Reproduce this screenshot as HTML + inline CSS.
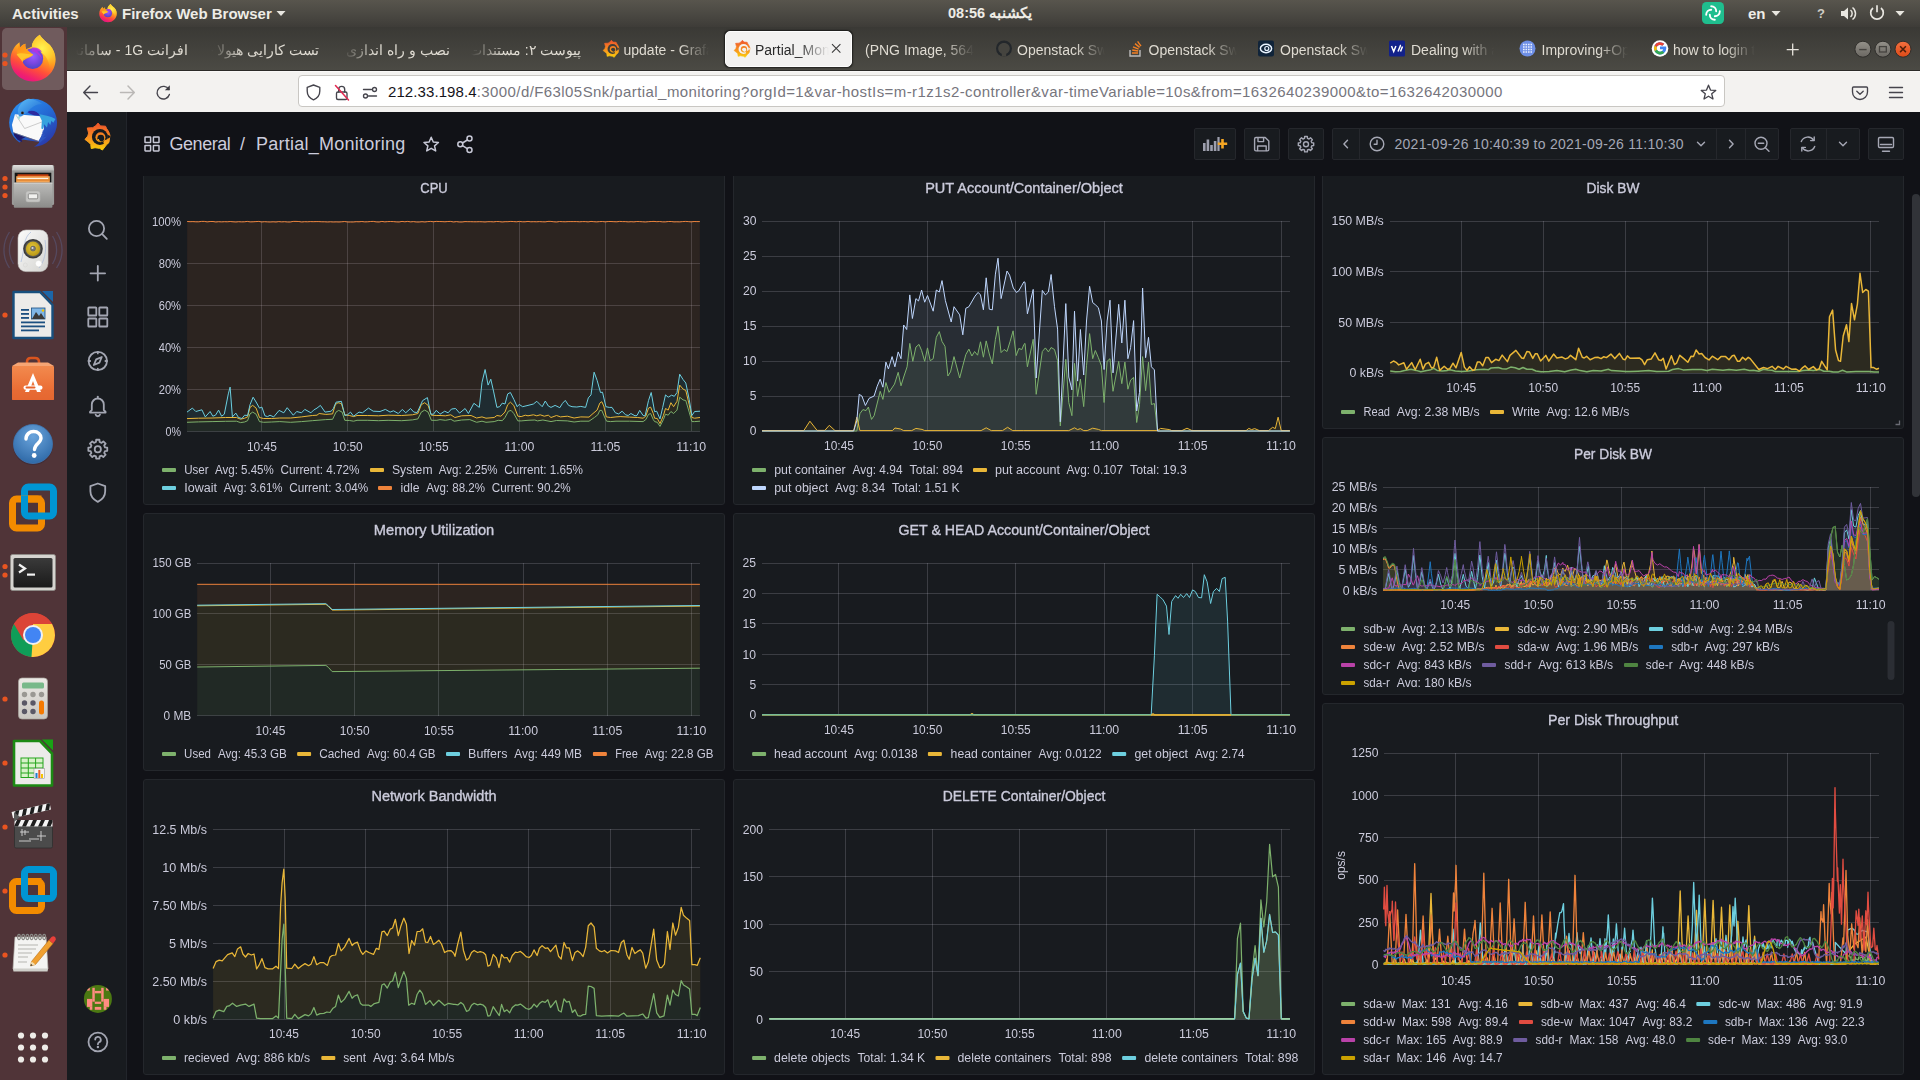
<!DOCTYPE html><html><head><meta charset="utf-8"><title>Partial_Monitoring - Grafana</title><style>
*{box-sizing:border-box;margin:0;padding:0}
html,body{width:1920px;height:1080px;overflow:hidden;background:#111217;font-family:"Liberation Sans",sans-serif;}
.abs{position:absolute}
#topbar{position:absolute;left:0;top:0;width:1920px;height:27px;background:linear-gradient(#58554d,#4b4943 50%,#3e3c38);color:#eeece6;font-weight:bold;font-size:15px;}
#topbar .t{position:absolute;top:0;height:27px;line-height:27px;white-space:nowrap}
#dock{position:absolute;left:0;top:27px;width:67px;height:1053px;background:#503438;}
#tabbar{position:absolute;left:67px;top:27px;width:1853px;height:44px;background:linear-gradient(#3a3935,#4b4a44);border-bottom:1px solid #2b2a28}
.tab{position:absolute;top:0;height:44px;line-height:47px;color:#dfdbd2;font-size:14px;white-space:nowrap;overflow:hidden}
#urlbar{position:absolute;left:67px;top:71px;width:1853px;height:41px;background:#f3f2f0;border-top:1px solid #f9f8f7}
#urlbox{position:absolute;left:231px;top:3px;width:1427px;height:32px;background:#fff;border:1px solid #c9c7c3;border-radius:4px}
#graf{position:absolute;left:67px;top:112px;width:1853px;height:968px;background:#111217;overflow:hidden}
#sidenav{position:absolute;left:0;top:0;width:60px;height:968px;background:#181b1f;border-right:1px solid #22252b}
#gtool{position:absolute;left:60px;top:0;width:1793px;height:64px;background:#111217;z-index:5}
.gbtn{position:absolute;top:16px;height:32px;background:#181b1f;border:1px solid #25272c;border-radius:2px}
.panel{position:absolute;background:#181b1f;border-radius:3px;overflow:hidden}
.panel::after{content:'';position:absolute;left:0;top:0;right:0;bottom:0;border:1px solid #24272c;border-radius:3px;pointer-events:none}
.ptitle{position:absolute;left:0;right:0;top:0;height:32px;line-height:33px;text-align:center;color:#ccccdc;font-size:14px;font-weight:bold;letter-spacing:-0.2px;white-space:nowrap}
.leg{position:absolute;color:#ccccdc;font-size:12px;line-height:18px;white-space:nowrap}
.sw{display:inline-block;width:14px;height:4px;border-radius:1px;vertical-align:middle;margin-right:8px;position:relative;top:-1px}
.li{display:inline-block;margin-right:10px}
svg{position:absolute;left:0;top:0;overflow:visible}
.panel svg{will-change:opacity;opacity:0.999}
text{font-family:"Liberation Sans",sans-serif}
</style></head><body>
<div id="topbar">
<span class="t" style="left:12px">Activities</span>
<span class="t" style="left:122px">Firefox Web Browser</span>
<span class="t" style="left:948px;font-size:14.5px">08:56 یکشنبه</span>
<span class="t" style="left:1748px">en</span>
<span class="t" style="left:1817px;font-size:13px;font-weight:bold;color:#cfcdc6">?</span>
<svg width="1920" height="27" viewBox="0 0 1920 27">
<g transform="translate(96.19,2.04) scale(0.02187)">
<defs>
<linearGradient id="fmb" gradientUnits="userSpaceOnUse" x1="740" y1="110" x2="380" y2="920"><stop offset="0" stop-color="#fff44f"/><stop offset="0.22" stop-color="#ffd83a"/><stop offset="0.45" stop-color="#ff9a1f"/><stop offset="0.68" stop-color="#ff4f3a"/><stop offset="0.88" stop-color="#f0206e"/><stop offset="1" stop-color="#e31587"/></linearGradient>
<radialGradient id="fmg" gradientUnits="userSpaceOnUse" cx="540" cy="470" r="230"><stop offset="0" stop-color="#9a5cff"/><stop offset="0.55" stop-color="#7a47e0"/><stop offset="1" stop-color="#4b46c9"/></radialGradient>
<linearGradient id="fmh" gradientUnits="userSpaceOnUse" x1="300" y1="230" x2="480" y2="520"><stop offset="0" stop-color="#ff8a16"/><stop offset="1" stop-color="#ffb21f"/></linearGradient>
<radialGradient id="fmy" gradientUnits="userSpaceOnUse" cx="700" cy="330" r="420"><stop offset="0" stop-color="#fff44f"/><stop offset="0.5" stop-color="#ffc92e"/><stop offset="1" stop-color="#ff8a16" stop-opacity="0"/></radialGradient>
</defs>
<path d="M660,90 C700,160 790,230 840,270 C900,340 940,430 940,530 C940,750 760,920 540,920 C320,920 140,750 140,530 C140,400 210,280 300,220 C300,260 305,290 315,315 C340,280 370,260 405,250 C400,290 405,320 420,345 C450,330 490,310 520,305 C520,230 580,140 660,90 Z" fill="url(#fmb)"/>
<path d="M660,90 C700,160 790,230 840,270 C900,340 940,430 940,530 C940,640 900,740 820,810 C860,700 830,560 760,470 C700,400 600,330 520,305 C520,230 580,140 660,90 Z" fill="url(#fmy)"/>
<circle cx="535" cy="512" r="186" fill="url(#fmg)"/>
<path d="M520,318 C600,300 670,345 700,392 C665,378 640,380 615,388 C650,400 690,450 700,520 C660,440 600,400 520,380 Z" fill="#b533e0" opacity="0.9"/>
<path d="M300,225 C290,300 250,380 250,440 C300,500 350,520 352,575 C380,510 500,505 545,440 C480,400 440,350 420,345 C410,320 400,290 405,250 C370,262 340,282 315,315 C305,290 300,260 300,225 Z" fill="url(#fmh)"/>
<path d="M250,440 C300,405 380,420 440,430 L545,440 C510,482 440,490 400,500 C360,512 345,545 352,575 C335,525 280,485 250,440Z" fill="#ffc62a"/>
</g>
<path d="M276.5,11 L285.5,11 L281,16 Z" fill="#e8e6e0"/>
<path d="M1771.5,11 L1780.5,11 L1776,16 Z" fill="#e8e6e0"/>
<path d="M1895.5,11 L1904.5,11 L1900,16 Z" fill="#e8e6e0"/>
<rect x="1702" y="2" width="22" height="22" rx="4.5" fill="#1fbe8e"/>
<g fill="none" stroke="#fff" stroke-width="1.9" stroke-linecap="round"><path d="M1711.2,6.2 a5,5 0 0 1 5,5"/><path d="M1719.8,11.2 a5,5 0 0 1 -5,5"/><path d="M1714.8,19.8 a5,5 0 0 1 -5,-5"/><path d="M1706.2,14.8 a5,5 0 0 1 5,-5"/></g>
<path d="M1841,11 h3 l4,-3.5 v12 l-4,-3.5 h-3 z" fill="#e8e6e0"/><path d="M1850.5,10 a4.5,4.5 0 0 1 0,7 M1852.5,7.5 a7.5,7.5 0 0 1 0,12" fill="none" stroke="#e8e6e0" stroke-width="1.5"/>
<path d="M1873,8 a6.3,6.3 0 1 0 8,0" fill="none" stroke="#e8e6e0" stroke-width="1.7"/><path d="M1877,5.2 v7" stroke="#e8e6e0" stroke-width="1.7"/>
</svg></div>
<div id="dock"></div>
<svg width="67" height="1080" viewBox="0 0 67 1080" style="left:0;top:0">
<defs>
<linearGradient id="ffg" x1="0.7" y1="0" x2="0.3" y2="1"><stop offset="0" stop-color="#fff44f"/><stop offset="0.3" stop-color="#ffbd2f"/><stop offset="0.6" stop-color="#ff6a1f"/><stop offset="1" stop-color="#e31587"/></linearGradient>
<radialGradient id="ffp" cx="0.5" cy="0.4" r="0.6"><stop offset="0" stop-color="#a550e8"/><stop offset="1" stop-color="#5a35c0"/></radialGradient>
<linearGradient id="tbg" x1="0" y1="0" x2="1" y2="1"><stop offset="0" stop-color="#2f86e0"/><stop offset="1" stop-color="#1a3f9a"/></linearGradient>
<linearGradient id="fileg" x1="0" y1="0" x2="0" y2="1"><stop offset="0" stop-color="#c9c9c6"/><stop offset="1" stop-color="#8f8f8c"/></linearGradient>
<linearGradient id="bagg" x1="0" y1="0" x2="0" y2="1"><stop offset="0" stop-color="#f28a4e"/><stop offset="1" stop-color="#e8622a"/></linearGradient>
<radialGradient id="helpg" cx="0.5" cy="0.3" r="0.7"><stop offset="0" stop-color="#6aa4dc"/><stop offset="1" stop-color="#2f6aa8"/></radialGradient>
<linearGradient id="termg" x1="0" y1="0" x2="0" y2="1"><stop offset="0" stop-color="#3a3a3a"/><stop offset="1" stop-color="#1a1a1a"/></linearGradient>
<linearGradient id="calcg" x1="0" y1="0" x2="0" y2="1"><stop offset="0" stop-color="#eceae6"/><stop offset="1" stop-color="#c9c6c0"/></linearGradient>
</defs>
<rect x="2" y="28" width="62" height="62" rx="5" fill="#705b5d"/>
<circle cx="5" cy="55" r="2.6" fill="#e95420"/>
<circle cx="5" cy="63.5" r="2.6" fill="#e95420"/>
<circle cx="5" cy="178.5" r="2.6" fill="#e95420"/>
<circle cx="5" cy="187" r="2.6" fill="#e95420"/>
<circle cx="5" cy="195.5" r="2.6" fill="#e95420"/>
<circle cx="5" cy="315" r="2.6" fill="#e95420"/>
<circle cx="5" cy="566.5" r="2.6" fill="#e95420"/>
<circle cx="5" cy="575" r="2.6" fill="#e95420"/>
<circle cx="5" cy="699" r="2.6" fill="#e95420"/>
<circle cx="5" cy="763" r="2.6" fill="#e95420"/>
<circle cx="5" cy="827" r="2.6" fill="#e95420"/>
<circle cx="5" cy="891" r="2.6" fill="#e95420"/>
<circle cx="5" cy="955" r="2.6" fill="#e95420"/>
<g transform="translate(2.62,29.81) scale(0.05625)">
<defs>
<linearGradient id="fxb" gradientUnits="userSpaceOnUse" x1="740" y1="110" x2="380" y2="920"><stop offset="0" stop-color="#fff44f"/><stop offset="0.22" stop-color="#ffd83a"/><stop offset="0.45" stop-color="#ff9a1f"/><stop offset="0.68" stop-color="#ff4f3a"/><stop offset="0.88" stop-color="#f0206e"/><stop offset="1" stop-color="#e31587"/></linearGradient>
<radialGradient id="fxg" gradientUnits="userSpaceOnUse" cx="540" cy="470" r="230"><stop offset="0" stop-color="#9a5cff"/><stop offset="0.55" stop-color="#7a47e0"/><stop offset="1" stop-color="#4b46c9"/></radialGradient>
<linearGradient id="fxh" gradientUnits="userSpaceOnUse" x1="300" y1="230" x2="480" y2="520"><stop offset="0" stop-color="#ff8a16"/><stop offset="1" stop-color="#ffb21f"/></linearGradient>
<radialGradient id="fxy" gradientUnits="userSpaceOnUse" cx="700" cy="330" r="420"><stop offset="0" stop-color="#fff44f"/><stop offset="0.5" stop-color="#ffc92e"/><stop offset="1" stop-color="#ff8a16" stop-opacity="0"/></radialGradient>
</defs>
<path d="M660,90 C700,160 790,230 840,270 C900,340 940,430 940,530 C940,750 760,920 540,920 C320,920 140,750 140,530 C140,400 210,280 300,220 C300,260 305,290 315,315 C340,280 370,260 405,250 C400,290 405,320 420,345 C450,330 490,310 520,305 C520,230 580,140 660,90 Z" fill="url(#fxb)"/>
<path d="M660,90 C700,160 790,230 840,270 C900,340 940,430 940,530 C940,640 900,740 820,810 C860,700 830,560 760,470 C700,400 600,330 520,305 C520,230 580,140 660,90 Z" fill="url(#fxy)"/>
<circle cx="535" cy="512" r="186" fill="url(#fxg)"/>
<path d="M520,318 C600,300 670,345 700,392 C665,378 640,380 615,388 C650,400 690,450 700,520 C660,440 600,400 520,380 Z" fill="#b533e0" opacity="0.9"/>
<path d="M300,225 C290,300 250,380 250,440 C300,500 350,520 352,575 C380,510 500,505 545,440 C480,400 440,350 420,345 C410,320 400,290 405,250 C370,262 340,282 315,315 C305,290 300,260 300,225 Z" fill="url(#fxh)"/>
<path d="M250,440 C300,405 380,420 440,430 L545,440 C510,482 440,490 400,500 C360,512 345,545 352,575 C335,525 280,485 250,440Z" fill="#ffc62a"/>
</g>
<g transform="translate(3.03,93.01) scale(0.05549)">
<defs>
<linearGradient id="tba" gradientUnits="userSpaceOnUse" x1="250" y1="150" x2="850" y2="950"><stop offset="0" stop-color="#2b8ff0"/><stop offset="0.5" stop-color="#2468d2"/><stop offset="1" stop-color="#2a34a6"/></linearGradient>
<linearGradient id="tbh" gradientUnits="userSpaceOnUse" x1="300" y1="150" x2="520" y2="420"><stop offset="0" stop-color="#56b4f4"/><stop offset="1" stop-color="#2877d8"/></linearGradient>
</defs>
<circle cx="542" cy="537" r="432" fill="url(#tba)"/>
<path d="M345,840 L660,885 L625,918 L562,968 L480,1015 L270,1015 L300,890 Z" fill="#503438"/>
<path d="M190,715 L400,800 L335,830 L345,885 L262,842 L200,765 Z" fill="#1d1a6e"/>
<path d="M215,385 L690,420 L740,650 L655,870 L185,705 L160,575 Z" fill="#f9f9f9"/>
<path d="M185,705 L655,870 L650,885 L182,722 Z" fill="#8c6f62" opacity="0.7"/>
<polyline points="228,392 390,640 705,520" fill="none" stroke="#9c9c9c" stroke-width="9"/>
<path d="M640,380 C760,410 870,420 945,470 L905,535 L872,500 L852,575 L812,522 L792,622 L742,562 L722,655 L690,640 L700,500 Z" fill="#36a2de"/>
<path d="M722,655 L742,700 L690,752 L762,742 L720,802 L790,785 L660,900 L640,860 L700,760 Z" fill="#2d55c4"/>
<path d="M440,340 C520,296 625,335 672,412 L560,400 C520,380 480,380 440,340 Z" fill="#2c2aa0"/>
<path d="M268,335 C258,250 360,120 462,104 C565,108 640,150 705,200 C600,200 500,262 442,342 C400,382 332,422 290,442 Z" fill="url(#tbh)"/>
<path d="M252,428 L322,414 L290,488 Z" fill="#a8dede"/>
<circle cx="350" cy="360" r="25" fill="#4a3020"/><circle cx="350" cy="360" r="15" fill="#0d0d12"/>
</g>
<g>
<defs><linearGradient id="fdr" x1="0" y1="0" x2="0" y2="1"><stop offset="0" stop-color="#bcbcba"/><stop offset="1" stop-color="#8b8b89"/></linearGradient>
<linearGradient id="ftop" x1="0" y1="0" x2="0" y2="1"><stop offset="0" stop-color="#e2e2e0"/><stop offset="1" stop-color="#b9b9b7"/></linearGradient></defs>
<rect x="11.9" y="165" width="42.2" height="40" rx="1.5" fill="#9b9b99"/>
<path d="M13.5,165 h39 l1.6,5.5 h-42.2 z" fill="url(#ftop)"/>
<rect x="14.7" y="172.7" width="36.6" height="10" fill="#161616"/>
<rect x="17.5" y="174.3" width="31" height="3" fill="#c8420e"/>
<rect x="16.2" y="176.2" width="33.6" height="6.5" fill="#f2a456"/>
<rect x="17.5" y="177.9" width="30.5" height="1.2" fill="#fdf3e6"/>
<rect x="16.2" y="179.6" width="33.6" height="0.9" fill="#d9771f"/>
<rect x="13.8" y="182.7" width="38.6" height="25" rx="1" fill="url(#fdr)"/>
<rect x="13.8" y="182.7" width="38.6" height="1" fill="#d2d2d0"/>
<rect x="25.8" y="191" width="14.4" height="11.1" rx="2.2" fill="#c6c6c4" stroke="#a5a5a3" stroke-width="0.5"/>
<rect x="28.3" y="193.8" width="9.4" height="5" rx="0.8" fill="#f0f0ee" stroke="#6d6d6b" stroke-width="0.7"/>
</g>
<g>
<defs><linearGradient id="rbb" x1="0" y1="0" x2="1" y2="1"><stop offset="0" stop-color="#fbfbfa"/><stop offset="1" stop-color="#d4d4d1"/></linearGradient>
<radialGradient id="rby" cx="0.45" cy="0.4" r="0.7"><stop offset="0" stop-color="#e6c93a"/><stop offset="1" stop-color="#b08f12"/></radialGradient></defs>
<g fill="none" stroke="#5f6c9e" stroke-opacity="0.38" stroke-width="1.3"><path d="M13.5,236 a26,26 0 0 0 0,28"/><path d="M9.5,232 a32,32 0 0 0 0,36"/><path d="M52.5,236 a26,26 0 0 1 0,28"/><path d="M56.5,232 a32,32 0 0 1 0,36"/></g>
<rect x="18" y="230" width="30" height="41.6" rx="8" fill="url(#rbb)" stroke="#c2c2bf" stroke-width="0.6"/>
<path d="M21,262 c4,-14 2,-24 10,-30" fill="none" stroke="#9fb2d8" stroke-opacity="0.6" stroke-width="1"/>
<path d="M45,240 c2,12 -1,22 -6,28" fill="none" stroke="#9fb2d8" stroke-opacity="0.6" stroke-width="1"/>
<circle cx="33" cy="248.8" r="9.8" fill="#3b3b3b"/><circle cx="33" cy="248.8" r="8.4" fill="#555"/>
<circle cx="33" cy="248.8" r="7.2" fill="url(#rby)"/>
<circle cx="33" cy="248.6" r="2.5" fill="#777" stroke="#555" stroke-width="0.5"/><circle cx="32.5" cy="248" r="1" fill="#ddd"/>
<circle cx="38.6" cy="263.6" r="3.3" fill="#fdfdfd" stroke="#d0d0ce" stroke-width="0.5"/>
<circle cx="25.3" cy="265" r="2" fill="none" stroke="#d6d6d3" stroke-width="0.6"/>
</g>
<g transform="translate(0,0)">
<path d="M13.5,292 L40,292 L52.5,305 L52.5,338 L13.5,338 Z" fill="#ecebe9" stroke="#18507e" stroke-width="2.4" stroke-linejoin="round"/>
<path d="M42,291 L53,291 L53,302 Z" fill="#1c66a8"/>
<rect x="21" y="309" width="8" height="1.8" fill="#1b4f80"/><rect x="21" y="313" width="8" height="1.8" fill="#1b4f80"/><rect x="21" y="317" width="8" height="1.8" fill="#1b4f80"/>
<rect x="21" y="321.5" width="24" height="1.8" fill="#1b4f80"/><rect x="21" y="325.5" width="24" height="1.8" fill="#1b4f80"/><rect x="21" y="329.5" width="18" height="1.8" fill="#1b4f80"/>
<rect x="31.5" y="308" width="13.5" height="11" fill="#7fb6e6" stroke="#1b4f80" stroke-width="0.8"/>
<path d="M32,319 L36,312 L39,316 L41,313 L45,319 Z" fill="#3a3a3a"/>
<circle cx="43" cy="310.5" r="1.2" fill="#f4c400"/>
</g>
<g transform="translate(0,0)">
<path d="M27,370 L27,362 Q27,358 31,358 L35,358 Q39,358 39,362 L39,370" fill="none" stroke="#d9541e" stroke-width="2.6"/>
<path d="M12,366 L18,362.5 L48,362.5 L54,366 Z" fill="#f6a574"/>
<rect x="12" y="366" width="42" height="34" rx="1" fill="url(#bagg)"/>
<rect x="12" y="390" width="42" height="10" fill="#e56a35" opacity="0.6"/>
<path d="M33,373 L41,392 L37,392 L33,381 L29,392 L25,392 Z" fill="#fff"/>
<rect x="23.5" y="385.5" width="19" height="4.2" rx="2" fill="#fff"/>
<rect x="25.5" y="386.6" width="10" height="2" rx="1" fill="#e8622a"/>
</g>
<g transform="translate(33,444)">
<circle cx="0" cy="1" r="20" fill="#2a2030" opacity="0.35"/>
<circle cx="0" cy="0" r="19.5" fill="url(#helpg)" stroke="#3f76b2" stroke-width="0.8"/>
<path d="M-7,-5 C-7,-10 -3,-12.5 0.5,-12.5 C5,-12.5 8,-9.5 8,-6 C8,-1 1.5,0 1.5,5.5" fill="none" stroke="#fff" stroke-width="3.4" stroke-linecap="round"/>
<circle cx="1.2" cy="11.5" r="2.4" fill="#fff"/>
</g>
<g transform="translate(33,507.5)">
<rect x="-20.5" y="-8.5" width="29" height="29" rx="4" fill="none" stroke="#f38b00" stroke-width="7"/>
<rect x="-8.5" y="-20.5" width="29" height="29" rx="4" fill="none" stroke="#0095d3" stroke-width="7"/>
<path d="M-12,-8.5 L8.5,-8.5" stroke="#f38b00" stroke-width="7"/>
<path d="M-8.5,-12 L-8.5,-3" stroke="#0095d3" stroke-width="7"/>
</g>
<g transform="translate(33,890)">
<rect x="-20.5" y="-8.5" width="29" height="29" rx="4" fill="none" stroke="#f38b00" stroke-width="7"/>
<rect x="-8.5" y="-20.5" width="29" height="29" rx="4" fill="none" stroke="#0095d3" stroke-width="7"/>
<path d="M-12,-8.5 L8.5,-8.5" stroke="#f38b00" stroke-width="7"/>
<path d="M-8.5,-12 L-8.5,-3" stroke="#0095d3" stroke-width="7"/>
</g>
<g>
<rect x="10.5" y="554.5" width="45" height="36" rx="2" fill="#d5d3cf" stroke="#8d8b86" stroke-width="0.8"/>
<rect x="13.5" y="558" width="39" height="29.5" rx="1.5" fill="url(#termg)"/>
<path d="M19,564.5 L25,568.5 L19,572.5" fill="none" stroke="#f2f2f2" stroke-width="2.2"/>
<rect x="27" y="573.5" width="8" height="2.2" fill="#f2f2f2"/>
</g>
<g transform="translate(33,635)">
<circle cx="0" cy="0" r="22" fill="#db4437"/>
<path d="M0,0 L-19.05,-11 A22,22 0 0 0 -1.5,21.95 L9.5,5.5 Z" fill="#0f9d58"/>
<path d="M0,0 L-1.5,21.95 A22,22 0 0 0 19.05,-11 L0,-11 Z" fill="#ffcd40"/>
<path d="M-19.05,-11 A22,22 0 0 1 19.05,-11 L0,-11 Z" fill="#db4437"/>
<path d="M-19.05,-11 L-9.5,5.5 L0,-11 Z" fill="#db4437"/>
<circle cx="0" cy="0" r="10" fill="#f1f1f1"/>
<circle cx="0" cy="0" r="8" fill="#4285f4"/>
</g>
<g>
<rect x="18.5" y="678" width="29" height="41" rx="3.5" fill="url(#calcg)" stroke="#aaa69f" stroke-width="0.7"/>
<rect x="22" y="682.5" width="22" height="6" rx="1.5" fill="#78b98a"/>
<circle cx="24.5" cy="694.5" r="2.7" fill="#9a9893"/><circle cx="33" cy="694.5" r="2.7" fill="#9a9893"/><circle cx="41.5" cy="694.5" r="2.7" fill="#9a9893"/>
<circle cx="24.5" cy="703" r="2.7" fill="#5a5866"/><circle cx="33" cy="703" r="2.7" fill="#5a5866"/>
<circle cx="24.5" cy="711.5" r="2.7" fill="#5a5866"/><circle cx="33" cy="711.5" r="2.7" fill="#5a5866"/>
<rect x="39" y="700.5" width="5" height="14" rx="2.5" fill="#f57900"/>
</g>
<g>
<path d="M14,741 L40,741 L52,753.5 L52,785.5 L14,785.5 Z" fill="#ecebe9" stroke="#1c8a13" stroke-width="2.6" stroke-linejoin="round"/>
<path d="M42,739.5 L53,739.5 L53,750.5 Z" fill="#19a215"/>
<rect x="21" y="758" width="22" height="19.5" fill="#d8f2c9" stroke="#25a51d" stroke-width="1"/>
<path d="M21,763 H43 M21,768 H43 M21,773 H43 M28.3,758 V777.5 M35.6,758 V777.5" stroke="#25a51d" stroke-width="1"/>
<rect x="34" y="768.5" width="10.5" height="10" fill="#f4f4f4" stroke="#888" stroke-width="0.5"/>
<rect x="35.5" y="773" width="2" height="5" fill="#1f7fd0"/><rect x="38.3" y="770" width="2" height="8" fill="#e8622a"/><rect x="41" y="774" width="2" height="4" fill="#f4c400"/>
</g>
<g>
<rect x="14.5" y="826" width="38" height="22" rx="1.5" fill="#4b4b4b" stroke="#2e2e2e" stroke-width="0.8"/>
<rect x="14.5" y="820" width="38" height="6.5" fill="#f3f3f3"/>
<path d="M17,820 l4,0 l-3,6.5 l-4,0z M25,820 l4,0 l-3,6.5 l-4,0z M33,820 l4,0 l-3,6.5 l-4,0z M41,820 l4,0 l-3,6.5 l-4,0z M49,820 l3.5,0 l0,2 l-2,4.5 l-4,0z" fill="#1e1e1e"/>
<g transform="rotate(-13 14 818)"><rect x="13" y="811.5" width="39" height="6.5" fill="#f3f3f3"/>
<path d="M17,811.5 l4,0 l-3,6.5 l-4,0z M25,811.5 l4,0 l-3,6.5 l-4,0z M33,811.5 l4,0 l-3,6.5 l-4,0z M41,811.5 l4,0 l-3,6.5 l-4,0z M49,811.5 l3,0 l0,2 l-2,4.5 l-4,0z" fill="#1e1e1e"/></g>
<path d="M14,812 l6,5 l-6,5z" fill="#5a5a5a"/>
<path d="M20,832 h9 M22,829 v7 M25,830 v5 M19,841 h12 M29,839 h10 M41,831 v10 M37,836 h9" stroke="#d8d8d8" stroke-width="0.9"/>
</g>
<g>
<path d="M15,937 L46,937 L48,969 L13,969 Z" fill="#f4f4f2" stroke="#bdbdb8" stroke-width="0.7"/>
<path d="M13,969 L48,969 L47.5,971.5 L13.5,971.5 Z" fill="#cfcfca"/>
<g fill="none" stroke="#8a8a86" stroke-width="1.1"><ellipse cx="19" cy="937" rx="1.4" ry="2.6"/><ellipse cx="23.2" cy="937" rx="1.4" ry="2.6"/><ellipse cx="27.4" cy="937" rx="1.4" ry="2.6"/><ellipse cx="31.6" cy="937" rx="1.4" ry="2.6"/><ellipse cx="35.8" cy="937" rx="1.4" ry="2.6"/><ellipse cx="40" cy="937" rx="1.4" ry="2.6"/><ellipse cx="44.2" cy="937" rx="1.4" ry="2.6"/></g>
<path d="M18,945 h20 M18,949 h18 M18,953 h14 M18,957 h10 M18,962 h9" stroke="#b5b5b0" stroke-width="1"/>
<path d="M31.5,961.5 L49,940 L53,943.5 L35.5,964.5 L30.5,966 Z" fill="#f0a030" stroke="#b86e12" stroke-width="0.6"/>
<path d="M49,940 L51.5,937 Q53.5,935.5 55,937 L55.5,937.8 Q56.5,939.5 55,941 L53,943.5 Z" fill="#e8403a"/>
<path d="M30.5,966 L31.5,961.5 L35.5,964.5 Z" fill="#f4deb0"/><path d="M30.5,966 L31,964 L32.6,965.3 Z" fill="#222"/>
</g>
<circle cx="21" cy="1035.5" r="3.1" fill="#eeece8"/>
<circle cx="33" cy="1035.5" r="3.1" fill="#eeece8"/>
<circle cx="45" cy="1035.5" r="3.1" fill="#eeece8"/>
<circle cx="21" cy="1047.5" r="3.1" fill="#eeece8"/>
<circle cx="33" cy="1047.5" r="3.1" fill="#eeece8"/>
<circle cx="45" cy="1047.5" r="3.1" fill="#eeece8"/>
<circle cx="21" cy="1059.5" r="3.1" fill="#eeece8"/>
<circle cx="33" cy="1059.5" r="3.1" fill="#eeece8"/>
<circle cx="45" cy="1059.5" r="3.1" fill="#eeece8"/>
</svg>
<div id="tabbar">
<div class="abs" style="left:658px;top:4px;width:127px;height:36px;background:#f2f1f0;border:1px solid #fdfdfd;border-radius:5px;box-shadow:0 0 1.5px 0.5px rgba(0,0,0,0.55)"></div>
<div class="tab" dir="rtl" style="left:8.5px;width:112.5px;text-align:right;-webkit-mask-image:linear-gradient(to right,transparent 0,#000 32px);mask-image:linear-gradient(to right,transparent 0,#000 32px);">افرانت 1G - سامانه</div>
<div class="tab" dir="rtl" style="left:143.5px;width:108.5px;text-align:right;-webkit-mask-image:linear-gradient(to right,transparent 0,#000 32px);mask-image:linear-gradient(to right,transparent 0,#000 32px);">تست کارایی هیولا -</div>
<div class="tab" dir="rtl" style="left:276px;width:107px;text-align:right;-webkit-mask-image:linear-gradient(to right,transparent 0,#000 32px);mask-image:linear-gradient(to right,transparent 0,#000 32px);">نصب و راه اندازی -</div>
<div class="tab" dir="rtl" style="left:403.5px;width:111.0px;text-align:right;-webkit-mask-image:linear-gradient(to right,transparent 0,#000 32px);mask-image:linear-gradient(to right,transparent 0,#000 32px);">پیوست ۲: مستندات ا</div>
<div class="tab" style="left:556.5px;width:85.5px;color:#dfdbd2;-webkit-mask-image:linear-gradient(to left,transparent 0,#000 30px);mask-image:linear-gradient(to left,transparent 0,#000 30px);">update - Grafana</div>
<div class="tab" style="left:688px;width:74px;color:#2b2b2b;-webkit-mask-image:linear-gradient(to left,transparent 0,#000 30px);mask-image:linear-gradient(to left,transparent 0,#000 30px);">Partial_Monitor</div>
<div class="tab" style="left:798px;width:109px;color:#dfdbd2;-webkit-mask-image:linear-gradient(to left,transparent 0,#000 30px);mask-image:linear-gradient(to left,transparent 0,#000 30px);">(PNG Image, 564×</div>
<div class="tab" style="left:950px;width:88px;color:#dfdbd2;-webkit-mask-image:linear-gradient(to left,transparent 0,#000 30px);mask-image:linear-gradient(to left,transparent 0,#000 30px);">Openstack Swift</div>
<div class="tab" style="left:1081.5px;width:88.0px;color:#dfdbd2;-webkit-mask-image:linear-gradient(to left,transparent 0,#000 30px);mask-image:linear-gradient(to left,transparent 0,#000 30px);">Openstack Swift</div>
<div class="tab" style="left:1213px;width:87.5px;color:#dfdbd2;-webkit-mask-image:linear-gradient(to left,transparent 0,#000 30px);mask-image:linear-gradient(to left,transparent 0,#000 30px);">Openstack Swift</div>
<div class="tab" style="left:1344px;width:83px;color:#dfdbd2;-webkit-mask-image:linear-gradient(to left,transparent 0,#000 30px);mask-image:linear-gradient(to left,transparent 0,#000 30px);">Dealing with a</div>
<div class="tab" style="left:1474.5px;width:86.5px;color:#dfdbd2;-webkit-mask-image:linear-gradient(to left,transparent 0,#000 30px);mask-image:linear-gradient(to left,transparent 0,#000 30px);">Improving+Op</div>
<div class="tab" style="left:1606px;width:82px;color:#dfdbd2;-webkit-mask-image:linear-gradient(to left,transparent 0,#000 30px);mask-image:linear-gradient(to left,transparent 0,#000 30px);">how to login to</div>
<svg width="1853" height="44" viewBox="67 27 1853 44">
<defs><linearGradient id="glg" gradientUnits="userSpaceOnUse" x1="0" y1="900" x2="0" y2="150"><stop offset="0" stop-color="#fbcf0a"/><stop offset="0.45" stop-color="#f7941e"/><stop offset="1" stop-color="#f15b2a"/></linearGradient></defs>
<g transform="translate(600.09,38.42) scale(0.02098)"><path d="M540,88 L612,172 L765,182 L802,262 C850,320 885,390 897,462 L868,672 L800,735 L672,900 L590,850 L450,830 L335,855 L320,730 L250,660 L145,580 L230,480 L255,390 L215,235 L380,225 L470,170 Z" fill="url(#glg)" stroke="url(#glg)" stroke-width="30" stroke-linejoin="round"/><circle cx="595" cy="505" r="240" fill="#3e3d39"/><path d="M815,430 L905,478 L895,520 L830,560 Z" fill="#3e3d39"/><circle cx="612" cy="516" r="150" fill="url(#glg)"/><path d="M715,615 L835,565 L860,690 L770,740 L700,690 Z" fill="url(#glg)"/><circle cx="622" cy="545" r="102" fill="#3e3d39"/><path d="M522,570 C530,640 600,672 650,640 C610,640 570,615 565,570 Z" fill="url(#glg)"/></g>
<g transform="translate(731.09,38.42) scale(0.02098)"><path d="M540,88 L612,172 L765,182 L802,262 C850,320 885,390 897,462 L868,672 L800,735 L672,900 L590,850 L450,830 L335,855 L320,730 L250,660 L145,580 L230,480 L255,390 L215,235 L380,225 L470,170 Z" fill="url(#glg)" stroke="url(#glg)" stroke-width="30" stroke-linejoin="round"/><circle cx="595" cy="505" r="240" fill="#f3f2f0"/><path d="M815,430 L905,478 L895,520 L830,560 Z" fill="#f3f2f0"/><circle cx="612" cy="516" r="150" fill="url(#glg)"/><path d="M715,615 L835,565 L860,690 L770,740 L700,690 Z" fill="url(#glg)"/><circle cx="622" cy="545" r="102" fill="#f3f2f0"/><path d="M522,570 C530,640 600,672 650,640 C610,640 570,615 565,570 Z" fill="url(#glg)"/></g>
<path d="M832,44.2 l8.4,8.4 M840.4,44.2 l-8.4,8.4" stroke="#3a3a3a" stroke-width="1.1"/>
<circle cx="1004" cy="48.5" r="8" fill="#23272b"/><path d="M1004,43 c-3.6,0 -5.8,2.6 -5.8,5.6 c0,2.6 1.6,4.4 3.6,5.2 l0,2.6 l4.4,0 l0,-2.6 c2,-0.8 3.6,-2.6 3.6,-5.2 c0,-3 -2.2,-5.6 -5.8,-5.6z" fill="#45443f"/>
<path d="M1130,50 v6 h10 v-6" fill="none" stroke="#bcbbbb" stroke-width="1.4"/><path d="M1132,53 h6 M1132.2,50 l6,1 M1133,46.8 l5.6,2.4 M1135,43.6 l4.6,3.8 M1137.6,41.4 l3.4,4.8" stroke="#f48024" stroke-width="1.4"/>
<rect x="1258" y="40.5" width="16" height="16" rx="2" fill="#10243a"/><ellipse cx="1266" cy="48.5" rx="5.6" ry="4.2" fill="none" stroke="#e9f3ff" stroke-width="1.5"/><circle cx="1266.8" cy="48.5" r="2" fill="none" stroke="#e9f3ff" stroke-width="1.2"/>
<rect x="1389" y="40.5" width="16" height="16" rx="1.5" fill="#12218a"/><path d="M1391.5,46 l2.2,5.5 l2.2,-5.5 M1398,51.5 l2.5,-6 l0.5,0 M1400.5,51.5 l2,-5" fill="none" stroke="#fff" stroke-width="1.5"/>
<circle cx="1527.5" cy="48.5" r="8" fill="#6e8fe6"/><path d="M1523,44.5 h9 M1523,47 h9 M1523,49.5 h9 M1523,52 h9" stroke="#e8eeff" stroke-width="1.3" stroke-dasharray="1.6 0.9"/>
<circle cx="1660" cy="48.5" r="8.3" fill="#fff"/><path d="M1665.2,46.5 h-5.2 v2.8 h3.1 c-0.3,1.5 -1.6,2.4 -3.1,2.4 a3.4,3.4 0 0 1 0,-6.8 c0.9,0 1.7,0.3 2.3,0.9 l2,-2 a6.2,6.2 0 1 0 2,4.7 c0,-0.7 -0.05,-1.4 -0.2,-2z" fill="#4285f4"/><path d="M1654.6,45.6 a6.2,6.2 0 0 1 9.7,-1.8 l-2,2 a3.4,3.4 0 0 0 -5.5,1.3z" fill="#ea4335"/><path d="M1654.6,51.2 l2.3,-1.7 a3.4,3.4 0 0 0 3.1,2.2 c0.9,0 1.6,-0.2 2.2,-0.7 l2.1,1.8 a6.2,6.2 0 0 1 -9.7,-1.6z" fill="#34a853"/><path d="M1654.6,45.6 l2.3,1.6 a3.4,3.4 0 0 0 0,2.3 l-2.3,1.7 a6.2,6.2 0 0 1 0,-5.6z" fill="#fbbc05"/>
<path d="M1786.7,49.6 h12 M1792.7,43.6 v12" stroke="#e6e3dc" stroke-width="1.3"/>
<defs><linearGradient id="wbg" x1="0" y1="0" x2="0" y2="1"><stop offset="0" stop-color="#94918a"/><stop offset="1" stop-color="#6a6762"/></linearGradient><linearGradient id="wbc" x1="0" y1="0" x2="0" y2="1"><stop offset="0" stop-color="#f4703f"/><stop offset="1" stop-color="#dc4a18"/></linearGradient></defs>
<circle cx="1862.9" cy="49.2" r="8" fill="url(#wbg)" stroke="#2f2e2b" stroke-width="1"/><path d="M1859.2,49.6 h7.4" stroke="#45433f" stroke-width="1.4"/>
<circle cx="1882.9" cy="49.2" r="8" fill="url(#wbg)" stroke="#2f2e2b" stroke-width="1"/><rect x="1879.5" y="46.6" width="6.8" height="5.4" fill="none" stroke="#45433f" stroke-width="1.3"/>
<circle cx="1903" cy="49.2" r="8" fill="url(#wbc)" stroke="#2f2e2b" stroke-width="1"/><path d="M1900.1,46.3 l5.8,5.8 M1905.9,46.3 l-5.8,5.8" stroke="#4e1f0a" stroke-width="1.5"/>
</svg></div>
<div id="urlbar"><div id="urlbox"></div>
<div class="abs" style="left:321px;top:0;height:41px;line-height:40px;font-size:15px;color:#15141a;white-space:nowrap"><span id="urlhost" style="letter-spacing:0.09px">212.33.198.4</span><span id="urlrest" style="color:#76757d;letter-spacing:0.42px">:3000/d/F63l05Snk/partial_monitoring?orgId=1&amp;var-hostIs=m-r1z1s2-controller&amp;var-timeVariable=10s&amp;from=1632640239000&amp;to=1632642030000</span></div>
<svg width="1853" height="41" viewBox="67 71 1853 41">
<path d="M97.5,91.5 h-13.5 M90,85 l-6.3,6.5 l6.3,6.5" fill="none" stroke="#45444c" stroke-width="1.35" stroke-linecap="round" stroke-linejoin="round"/>
<path d="M120.5,91.5 h13.5 M128,85 l6.3,6.5 l-6.3,6.5" fill="none" stroke="#bab8b6" stroke-width="1.5" stroke-linecap="round" stroke-linejoin="round"/>
<path d="M168.8,88.5 a6.3,6.3 0 1 0 0.6,5" fill="none" stroke="#45444c" stroke-width="1.35" stroke-linecap="round" stroke-linejoin="round"/><path d="M169.8,84.2 v5 h-5 z" fill="#3b3a40"/>
<path d="M313.5,84 l6.3,2.3 v3.7 c0,4.6 -3,7.4 -6.3,8.8 c-3.3,-1.4 -6.3,-4.2 -6.3,-8.8 v-3.7 z" fill="none" stroke="#45444c" stroke-width="1.35" stroke-linecap="round" stroke-linejoin="round"/>
<rect x="336.5" y="91" width="10.5" height="7.5" rx="1.5" fill="none" stroke="#45444c" stroke-width="1.35" stroke-linecap="round" stroke-linejoin="round"/><path d="M338.7,91 v-2.6 a3,3 0 0 1 6,0 v2.6" fill="none" stroke="#45444c" stroke-width="1.35" stroke-linecap="round" stroke-linejoin="round"/><path d="M335.5,84.5 l13,14.5" stroke="#e22850" stroke-width="1.5" stroke-linecap="round"/>
<path d="M363.5,88.5 h8 M368.5,95 h8" fill="none" stroke="#45444c" stroke-width="1.35" stroke-linecap="round" stroke-linejoin="round"/><circle cx="374.5" cy="88.5" r="2" fill="none" stroke="#45444c" stroke-width="1.35" stroke-linecap="round" stroke-linejoin="round"/><circle cx="365.5" cy="95" r="2" fill="none" stroke="#45444c" stroke-width="1.35" stroke-linecap="round" stroke-linejoin="round"/>
<path d="M1708.50,84.20 L1710.50,89.05 L1715.73,89.45 L1711.73,92.85 L1712.97,97.95 L1708.50,95.20 L1704.03,97.95 L1705.27,92.85 L1701.27,89.45 L1706.50,89.05Z" fill="none" stroke="#45444c" stroke-width="1.35" stroke-linecap="round" stroke-linejoin="round" stroke-width="1.4"/>
<path d="M1853.5,86 h13 a1,1 0 0 1 1,1 v4 a7.5,7.5 0 0 1 -15,0 v-4 a1,1 0 0 1 1,-1z" fill="none" stroke="#45444c" stroke-width="1.35" stroke-linecap="round" stroke-linejoin="round"/><path d="M1856.8,90.2 l3.2,3 l3.2,-3" fill="none" stroke="#45444c" stroke-width="1.35" stroke-linecap="round" stroke-linejoin="round"/>
<path d="M1889.5,86.5 h13 M1889.5,91.5 h13 M1889.5,96.5 h13" fill="none" stroke="#45444c" stroke-width="1.35" stroke-linecap="round" stroke-linejoin="round"/>
</svg></div>
<div id="graf">
<div id="sidenav">
<svg width="60" height="968" viewBox="67 112 60 968">
<defs><linearGradient id="glg2" gradientUnits="userSpaceOnUse" x1="0" y1="900" x2="0" y2="150"><stop offset="0" stop-color="#fbcf0a"/><stop offset="0.45" stop-color="#f7941e"/><stop offset="1" stop-color="#f15b2a"/></linearGradient></defs>
<g transform="translate(80.15,120.18) scale(0.03317)"><path d="M540,88 L612,172 L765,182 L802,262 C850,320 885,390 897,462 L868,672 L800,735 L672,900 L590,850 L450,830 L335,855 L320,730 L250,660 L145,580 L230,480 L255,390 L215,235 L380,225 L470,170 Z" fill="url(#glg2)" stroke="url(#glg2)" stroke-width="30" stroke-linejoin="round"/><circle cx="595" cy="505" r="240" fill="#181b1f"/><path d="M815,430 L905,478 L895,520 L830,560 Z" fill="#181b1f"/><circle cx="612" cy="516" r="150" fill="url(#glg2)"/><path d="M715,615 L835,565 L860,690 L770,740 L700,690 Z" fill="url(#glg2)"/><circle cx="622" cy="545" r="102" fill="#181b1f"/><path d="M522,570 C530,640 600,672 650,640 C610,640 570,615 565,570 Z" fill="url(#glg2)"/></g>
<circle cx="96.5" cy="228.5" r="7.6" fill="none" stroke="#a3a6b2" stroke-width="1.8" stroke-linecap="round" stroke-linejoin="round"/><path d="M102.2,234.2 l4.6,4.6" fill="none" stroke="#a3a6b2" stroke-width="1.8" stroke-linecap="round" stroke-linejoin="round"/>
<path d="M90.5,273.3 h14.6 M97.8,266 v14.6" fill="none" stroke="#a3a6b2" stroke-width="1.8" stroke-linecap="round" stroke-linejoin="round"/>
<rect x="88.3" y="307.5" width="8" height="8" rx="0.6" fill="none" stroke="#a3a6b2" stroke-width="1.8" stroke-linecap="round" stroke-linejoin="round"/>
<rect x="88.3" y="318.5" width="8" height="8" rx="0.6" fill="none" stroke="#a3a6b2" stroke-width="1.8" stroke-linecap="round" stroke-linejoin="round"/>
<rect x="99.3" y="307.5" width="8" height="8" rx="0.6" fill="none" stroke="#a3a6b2" stroke-width="1.8" stroke-linecap="round" stroke-linejoin="round"/>
<rect x="99.3" y="318.5" width="8" height="8" rx="0.6" fill="none" stroke="#a3a6b2" stroke-width="1.8" stroke-linecap="round" stroke-linejoin="round"/>
<circle cx="97.8" cy="361" r="9.2" fill="none" stroke="#a3a6b2" stroke-width="1.8" stroke-linecap="round" stroke-linejoin="round"/><path d="M101.8,357 l-2.4,5.6 l-5.6,2.4 l2.4,-5.6z" fill="none" stroke="#a3a6b2" stroke-width="1.8" stroke-linecap="round" stroke-linejoin="round" stroke-width="1.3"/><path d="M97.8,351.8 v1.6 M97.8,368.6 v1.6 M88.6,361 h1.6 M105.4,361 h1.6" fill="none" stroke="#a3a6b2" stroke-width="1.8" stroke-linecap="round" stroke-linejoin="round" stroke-width="1.2"/>
<path d="M91.8,410 v-5.5 a6,6 0 0 1 12,0 v5.5 l1.8,1.8 v0.8 h-15.6 v-0.8 z" fill="none" stroke="#a3a6b2" stroke-width="1.8" stroke-linecap="round" stroke-linejoin="round"/><path d="M95.6,414.6 a2.3,2.3 0 0 0 4.4,0" fill="none" stroke="#a3a6b2" stroke-width="1.8" stroke-linecap="round" stroke-linejoin="round"/><path d="M97.8,396.6 v1.6" fill="none" stroke="#a3a6b2" stroke-width="1.8" stroke-linecap="round" stroke-linejoin="round"/>
<path d="M96.15,439.74 L99.45,439.74 L99.64,442.03 L101.57,442.83 L103.32,441.35 L105.65,443.68 L104.17,445.43 L104.97,447.36 L107.26,447.55 L107.26,450.85 L104.97,451.04 L104.17,452.97 L105.65,454.72 L103.32,457.05 L101.57,455.57 L99.64,456.37 L99.45,458.66 L96.15,458.66 L95.96,456.37 L94.03,455.57 L92.28,457.05 L89.95,454.72 L91.43,452.97 L90.63,451.04 L88.34,450.85 L88.34,447.55 L90.63,447.36 L91.43,445.43 L89.95,443.68 L92.28,441.35 L94.03,442.83 L95.96,442.03Z" fill="none" stroke="#a3a6b2" stroke-width="1.8" stroke-linecap="round" stroke-linejoin="round" stroke-width="1.5"/><circle cx="97.8" cy="449.2" r="3.1" fill="none" stroke="#a3a6b2" stroke-width="1.8" stroke-linecap="round" stroke-linejoin="round"/>
<path d="M97.8,483.5 l7.4,2.6 v5.2 c0,5 -3.4,8.6 -7.4,10.6 c-4,-2 -7.4,-5.6 -7.4,-10.6 v-5.2 z" fill="none" stroke="#a3a6b2" stroke-width="1.8" stroke-linecap="round" stroke-linejoin="round"/>
<clipPath id="avc"><circle cx="97.9" cy="998.9" r="14"/></clipPath><circle cx="97.9" cy="998.9" r="14" fill="#4c7912"/><g fill="#ff8c82" clip-path="url(#avc)"><rect x="92.33" y="987.78" width="2.44" height="11.11"/><rect x="101.22" y="987.78" width="2.44" height="11.11"/><rect x="94.78" y="990.89" width="6.44" height="2.44"/><rect x="87.00" y="998.89" width="5.33" height="8.00"/><rect x="103.67" y="998.89" width="5.33" height="8.00"/><rect x="94.78" y="1001.67" width="6.44" height="2.22"/><rect x="94.78" y="1006.89" width="6.44" height="2.89"/><rect x="89.78" y="1006.89" width="2.56" height="2.89"/><rect x="103.67" y="1006.89" width="2.78" height="2.89"/><rect x="87.00" y="987.78" width="2.78" height="2.78"/><rect x="106.11" y="987.78" width="2.89" height="2.78"/><rect x="92.33" y="998.89" width="2.44" height="2.78"/><rect x="101.22" y="998.89" width="2.44" height="2.78"/></g>
<circle cx="97.9" cy="1042" r="9.4" fill="none" stroke="#a3a6b2" stroke-width="1.8" stroke-linecap="round" stroke-linejoin="round" stroke-width="1.9"/><path d="M95.2,1039.6 a2.8,2.8 0 1 1 3.9,2.6 c-0.9,0.5 -1.2,1 -1.2,2.0" fill="none" stroke="#a3a6b2" stroke-width="1.8" stroke-linecap="round" stroke-linejoin="round" stroke-width="1.9"/><circle cx="97.9" cy="1047" r="1.2" fill="#a3a6b2"/>
</svg></div>
<div id="gtool">
<div class="abs" id="bc1" style="left:42.5px;top:0;height:64px;line-height:64px;font-size:18px;color:#ccccdc;white-space:nowrap;letter-spacing:-0.45px">General</div>
<div class="abs" style="left:113px;top:0;height:64px;line-height:64px;font-size:18px;color:#ccccdc">/</div>
<div class="abs" id="bc2" style="left:129px;top:0;height:64px;line-height:64px;font-size:18px;color:#ccccdc;white-space:nowrap;letter-spacing:0.25px">Partial_Monitoring</div>
<div class="gbtn" style="left:1067px;width:42px"></div>
<div class="gbtn" style="left:1117px;width:36px"></div>
<div class="gbtn" style="left:1161px;width:36px"></div>
<div class="gbtn" style="left:1205px;width:447px"></div>
<div class="gbtn" style="left:1663px;width:70px"></div>
<div class="gbtn" style="left:1741px;width:36px"></div>
<div class="abs" id="trange" style="left:1267.5px;top:16px;height:32px;line-height:32px;font-size:14px;color:#a4a7b5;white-space:nowrap;letter-spacing:0.26px">2021-09-26 10:40:39 to 2021-09-26 11:10:30</div>
<svg width="1793" height="64" viewBox="127 112 1793 64">
<rect x="145" y="137" width="5.6" height="5.6" rx="0.4" fill="none" stroke="#c7c8d6" stroke-width="1.5" stroke-linecap="round" stroke-linejoin="round"/>
<rect x="145" y="145.4" width="5.6" height="5.6" rx="0.4" fill="none" stroke="#c7c8d6" stroke-width="1.5" stroke-linecap="round" stroke-linejoin="round"/>
<rect x="153.4" y="137" width="5.6" height="5.6" rx="0.4" fill="none" stroke="#c7c8d6" stroke-width="1.5" stroke-linecap="round" stroke-linejoin="round"/>
<rect x="153.4" y="145.4" width="5.6" height="5.6" rx="0.4" fill="none" stroke="#c7c8d6" stroke-width="1.5" stroke-linecap="round" stroke-linejoin="round"/>
<path d="M431.20,137.20 L433.26,141.97 L438.43,142.45 L434.53,145.88 L435.67,150.95 L431.20,148.30 L426.73,150.95 L427.87,145.88 L423.97,142.45 L429.14,141.97Z" fill="none" stroke="#c7c8d6" stroke-width="1.5" stroke-linecap="round" stroke-linejoin="round"/>
<circle cx="469.5" cy="138.6" r="2.5" fill="none" stroke="#c7c8d6" stroke-width="1.5" stroke-linecap="round" stroke-linejoin="round"/><circle cx="460.3" cy="144.3" r="2.5" fill="none" stroke="#c7c8d6" stroke-width="1.5" stroke-linecap="round" stroke-linejoin="round"/><circle cx="469.5" cy="150" r="2.5" fill="none" stroke="#c7c8d6" stroke-width="1.5" stroke-linecap="round" stroke-linejoin="round"/><path d="M462.5,143 l4.8,-3 M462.5,145.6 l4.8,3" fill="none" stroke="#c7c8d6" stroke-width="1.5" stroke-linecap="round" stroke-linejoin="round"/>
<path d="M1359.5,128 v32 M1716.5,128 v32 M1745.5,128 v32 M1826.5,128 v32" stroke="#25272c" stroke-width="1"/>
<rect x="1203" y="143" width="2.6" height="8" fill="#9d9fad"/><rect x="1206.6" y="139.5" width="2.6" height="11.5" fill="#9d9fad"/><rect x="1210.2" y="145" width="2.6" height="6" fill="#9d9fad"/><rect x="1213.8" y="141" width="2.6" height="10" fill="#9d9fad"/><rect x="1217.4" y="137" width="2.2" height="14" fill="#9d9fad"/>
<path d="M1222.5,139 v9.4 M1217.8,143.7 h9.4" stroke="#f5a623" stroke-width="2.6"/>
<path d="M1256,137.5 h9.2 l3.6,3.6 v8.4 a1.4,1.4 0 0 1 -1.4,1.4 h-11.4 a1.4,1.4 0 0 1 -1.4,-1.4 v-10.6 a1.4,1.4 0 0 1 1.4,-1.4z" fill="none" stroke="#a6a8b5" stroke-width="1.4" stroke-linecap="round" stroke-linejoin="round"/><path d="M1258,137.8 v3.8 h5.6 v-3.8 M1257.6,150.6 v-4.6 h8.6 v4.6" fill="none" stroke="#a6a8b5" stroke-width="1.4" stroke-linecap="round" stroke-linejoin="round"/>
<path d="M1304.66,136.52 L1307.34,136.52 L1307.49,138.39 L1309.05,139.04 L1310.49,137.82 L1312.38,139.71 L1311.16,141.15 L1311.81,142.71 L1313.68,142.86 L1313.68,145.54 L1311.81,145.69 L1311.16,147.25 L1312.38,148.69 L1310.49,150.58 L1309.05,149.36 L1307.49,150.01 L1307.34,151.88 L1304.66,151.88 L1304.51,150.01 L1302.95,149.36 L1301.51,150.58 L1299.62,148.69 L1300.84,147.25 L1300.19,145.69 L1298.32,145.54 L1298.32,142.86 L1300.19,142.71 L1300.84,141.15 L1299.62,139.71 L1301.51,137.82 L1302.95,139.04 L1304.51,138.39Z" fill="none" stroke="#a6a8b5" stroke-width="1.4" stroke-linecap="round" stroke-linejoin="round" stroke-width="1.4"/><circle cx="1306" cy="144.2" r="2.5" fill="none" stroke="#a6a8b5" stroke-width="1.4" stroke-linecap="round" stroke-linejoin="round"/>
<path d="M1347.5,140.2 l-3.6,3.8 l3.6,3.8" fill="none" stroke="#a6a8b5" stroke-width="1.4" stroke-linecap="round" stroke-linejoin="round"/>
<path d="M1729.5,140.2 l3.6,3.8 l-3.6,3.8" fill="none" stroke="#a6a8b5" stroke-width="1.4" stroke-linecap="round" stroke-linejoin="round"/>
<path d="M1697.5,142.3 l3.5,3.4 l3.5,-3.4" fill="none" stroke="#a6a8b5" stroke-width="1.4" stroke-linecap="round" stroke-linejoin="round"/>
<path d="M1839.5,142.3 l3.5,3.4 l3.5,-3.4" fill="none" stroke="#a6a8b5" stroke-width="1.4" stroke-linecap="round" stroke-linejoin="round"/>
<circle cx="1377" cy="144" r="6.8" fill="none" stroke="#a6a8b5" stroke-width="1.4" stroke-linecap="round" stroke-linejoin="round"/><path d="M1377,140.3 v3.9 h-2.8" fill="none" stroke="#a6a8b5" stroke-width="1.4" stroke-linecap="round" stroke-linejoin="round"/>
<circle cx="1761" cy="143.3" r="6" fill="none" stroke="#a6a8b5" stroke-width="1.4" stroke-linecap="round" stroke-linejoin="round"/><path d="M1765.4,147.7 l3.6,3.6 M1758.3,143.3 h5.4" fill="none" stroke="#a6a8b5" stroke-width="1.4" stroke-linecap="round" stroke-linejoin="round"/>
<path d="M1801.3,141.5 a7,7 0 0 1 12.4,-1.2 M1814.7,146.5 a7,7 0 0 1 -12.4,1.2" fill="none" stroke="#a6a8b5" stroke-width="1.4" stroke-linecap="round" stroke-linejoin="round"/><path d="M1814.2,137 v3.6 h-3.6 M1801.8,151 v-3.6 h3.6" fill="none" stroke="#a6a8b5" stroke-width="1.4" stroke-linecap="round" stroke-linejoin="round"/>
<rect x="1878.5" y="137.5" width="15" height="10" rx="1.2" fill="none" stroke="#a6a8b5" stroke-width="1.4" stroke-linecap="round" stroke-linejoin="round"/><path d="M1882.5,151.2 h7 M1880.5,144.5 h11" fill="none" stroke="#a6a8b5" stroke-width="1.4" stroke-linecap="round" stroke-linejoin="round"/>
</svg></div>
</div>
<div id="pwrap" style="position:absolute;left:127px;top:176px;width:1793px;height:904px;overflow:hidden"><div style="position:absolute;left:-127px;top:-176px;width:1920px;height:1080px">
<div class="panel" style="left:143px;top:171px;width:582px;height:334px">
<svg width="582" height="334" viewBox="143 171 582 334">
<text x="434.0" y="193.1" text-anchor="middle" font-size="14" fill="#ccccdc" textLength="27.4" lengthAdjust="spacingAndGlyphs" stroke="#ccccdc" stroke-width="0.35">CPU</text>
<g stroke="rgba(204,204,220,0.2)" stroke-width="1" shape-rendering="crispEdges"><line x1="187.2" x2="699.8" y1="221.3" y2="221.3"/><line x1="187.2" x2="699.8" y1="263.3" y2="263.3"/><line x1="187.2" x2="699.8" y1="305.3" y2="305.3"/><line x1="187.2" x2="699.8" y1="347.3" y2="347.3"/><line x1="187.2" x2="699.8" y1="389.3" y2="389.3"/><line x1="187.2" x2="699.8" y1="431.3" y2="431.3"/><line x1="261.9" x2="261.9" y1="221.3" y2="431.3"/><line x1="347.8" x2="347.8" y1="221.3" y2="431.3"/><line x1="433.6" x2="433.6" y1="221.3" y2="431.3"/><line x1="519.5" x2="519.5" y1="221.3" y2="431.3"/><line x1="605.4" x2="605.4" y1="221.3" y2="431.3"/><line x1="691.2" x2="691.2" y1="221.3" y2="431.3"/></g>
<text x="181.0" y="225.5" text-anchor="end" font-size="12" fill="#ccccdc" textLength="29.0" lengthAdjust="spacingAndGlyphs">100%</text>
<text x="181.0" y="267.5" text-anchor="end" font-size="12" fill="#ccccdc" textLength="22.3" lengthAdjust="spacingAndGlyphs">80%</text>
<text x="181.0" y="309.5" text-anchor="end" font-size="12" fill="#ccccdc" textLength="22.3" lengthAdjust="spacingAndGlyphs">60%</text>
<text x="181.0" y="351.5" text-anchor="end" font-size="12" fill="#ccccdc" textLength="22.3" lengthAdjust="spacingAndGlyphs">40%</text>
<text x="181.0" y="393.5" text-anchor="end" font-size="12" fill="#ccccdc" textLength="22.3" lengthAdjust="spacingAndGlyphs">20%</text>
<text x="181.0" y="435.5" text-anchor="end" font-size="12" fill="#ccccdc" textLength="15.5" lengthAdjust="spacingAndGlyphs">0%</text>
<text x="261.9" y="450.7" text-anchor="middle" font-size="12" fill="#ccccdc" textLength="29.9" lengthAdjust="spacingAndGlyphs">10:45</text>
<text x="347.8" y="450.7" text-anchor="middle" font-size="12" fill="#ccccdc" textLength="29.9" lengthAdjust="spacingAndGlyphs">10:50</text>
<text x="433.6" y="450.7" text-anchor="middle" font-size="12" fill="#ccccdc" textLength="29.9" lengthAdjust="spacingAndGlyphs">10:55</text>
<text x="519.5" y="450.7" text-anchor="middle" font-size="12" fill="#ccccdc" textLength="29.9" lengthAdjust="spacingAndGlyphs">11:00</text>
<text x="605.4" y="450.7" text-anchor="middle" font-size="12" fill="#ccccdc" textLength="29.9" lengthAdjust="spacingAndGlyphs">11:05</text>
<text x="691.2" y="450.7" text-anchor="middle" font-size="12" fill="#ccccdc" textLength="29.9" lengthAdjust="spacingAndGlyphs">11:10</text>
<polygon points="187.0,422.3 198.5,421.9 212.1,421.6 225.6,421.3 236.5,421.2 240.5,422.6 244.6,422.0 247.6,420.7 250.0,413.9 252.7,412.1 256.1,414.2 259.5,421.6 263.5,422.3 271.7,422.0 279.8,421.6 290.6,422.3 301.5,421.6 312.3,420.7 317.0,420.3 325.8,419.6 332.6,419.3 336.0,412.1 338.7,410.4 342.1,412.1 344.8,420.3 349.5,420.5 353.6,421.2 357.0,420.3 367.8,420.3 378.6,420.7 388.1,420.3 401.7,420.7 412.5,419.9 417.9,418.9 421.3,412.1 424.7,410.1 428.1,412.1 431.4,420.3 436.9,420.3 440.0,419.6 445.4,420.3 450.8,419.3 454.2,421.2 461.7,420.0 469.8,419.6 476.6,422.3 482.0,421.2 486.0,422.3 494.2,421.6 498.2,420.3 502.3,420.7 505.0,417.5 508.4,411.2 511.1,410.4 513.8,413.5 517.9,420.9 521.2,420.9 528.0,420.3 534.8,420.0 537.5,420.9 542.9,420.0 551.0,421.6 556.5,420.5 567.3,420.9 574.1,422.0 580.8,421.2 589.0,421.2 594.4,417.5 597.8,414.8 599.8,410.4 601.8,410.4 604.5,416.9 606.6,421.2 610.6,421.6 616.0,421.2 629.6,421.2 643.1,421.6 645.8,419.6 648.5,414.4 650.6,413.5 653.3,419.6 654.6,421.6 657.3,422.3 660.0,426.4 663.4,419.6 665.5,414.2 668.2,415.2 670.9,411.5 673.6,413.5 677.0,410.1 679.7,397.2 683.1,399.9 685.8,400.6 689.2,412.1 691.9,421.6 694.6,421.6 700.0,421.2 700.0,431.3 187.0,431.3" fill="#7EB26D" fill-opacity="0.1"/><polygon points="187.0,418.6 198.5,418.2 212.1,418.0 225.6,417.5 236.5,417.5 240.5,419.2 244.6,418.2 247.6,416.9 250.0,407.4 252.7,405.4 256.1,408.1 259.5,417.5 263.5,418.5 271.7,418.5 279.8,418.0 290.6,418.0 301.5,416.9 312.3,415.5 317.0,415.2 319.1,413.5 325.8,414.4 332.6,413.9 335.3,404.7 338.0,402.7 341.4,403.6 344.8,414.8 349.5,415.5 353.6,416.6 357.0,415.5 367.8,415.5 378.6,415.8 388.1,415.2 401.7,415.5 412.5,414.8 417.9,413.5 421.3,404.7 424.7,402.7 428.1,405.4 431.4,415.2 436.9,415.5 440.0,415.5 445.4,415.8 450.8,414.8 454.9,417.5 461.7,415.8 471.1,415.5 476.6,418.0 482.0,416.9 486.0,418.2 494.2,417.5 496.9,415.5 500.9,416.2 505.0,412.1 507.7,404.7 510.4,402.2 513.8,405.4 517.9,416.2 521.2,416.6 525.3,415.2 528.0,415.8 533.4,414.8 536.8,415.8 540.2,414.8 544.3,416.2 548.3,415.2 551.0,417.5 556.5,415.5 560.5,416.9 567.3,416.2 574.1,418.0 580.8,416.9 589.0,417.1 593.0,413.5 597.1,410.1 599.8,403.1 601.8,401.7 603.8,406.0 606.3,416.9 610.6,417.5 616.0,416.9 620.1,416.6 629.6,417.1 637.7,417.5 643.1,418.2 645.8,416.2 648.5,408.1 650.6,407.1 653.3,413.5 654.6,418.2 657.3,418.5 660.0,423.6 663.4,415.5 665.5,408.5 668.2,410.1 670.9,402.7 673.6,406.7 677.0,401.3 679.7,385.1 683.1,389.1 685.8,390.5 689.2,404.7 691.9,417.5 694.6,418.2 700.0,417.5 700.0,421.2 694.6,421.6 691.9,421.6 689.2,412.1 685.8,400.6 683.1,399.9 679.7,397.2 677.0,410.1 673.6,413.5 670.9,411.5 668.2,415.2 665.5,414.2 663.4,419.6 660.0,426.4 657.3,422.3 654.6,421.6 653.3,419.6 650.6,413.5 648.5,414.4 645.8,419.6 643.1,421.6 637.7,421.4 629.6,421.2 620.1,421.2 616.0,421.2 610.6,421.6 606.6,421.2 606.3,420.6 604.5,416.9 603.8,415.2 601.8,410.4 599.8,410.4 597.8,414.8 597.1,415.4 594.4,417.5 593.0,418.5 589.0,421.2 580.8,421.2 574.1,422.0 567.3,420.9 560.5,420.7 556.5,420.5 551.0,421.6 548.3,421.1 544.3,420.3 542.9,420.0 540.2,420.5 537.5,420.9 536.8,420.7 534.8,420.0 533.4,420.0 528.0,420.3 525.3,420.5 521.2,420.9 517.9,420.9 513.8,413.5 511.1,410.4 510.4,410.6 508.4,411.2 507.7,412.5 505.0,417.5 502.3,420.7 500.9,420.5 498.2,420.3 496.9,420.7 494.2,421.6 486.0,422.3 482.0,421.2 476.6,422.3 471.1,420.1 469.8,419.6 461.7,420.0 454.9,421.1 454.2,421.2 450.8,419.3 445.4,420.3 440.0,419.6 436.9,420.3 431.4,420.3 428.1,412.1 424.7,410.1 421.3,412.1 417.9,418.9 412.5,419.9 401.7,420.7 388.1,420.3 378.6,420.7 367.8,420.3 357.0,420.3 353.6,421.2 349.5,420.5 344.8,420.3 342.1,412.1 341.4,411.8 338.7,410.4 338.0,410.8 336.0,412.1 335.3,413.6 332.6,419.3 325.8,419.6 319.1,420.1 317.0,420.3 312.3,420.7 301.5,421.6 290.6,422.3 279.8,421.6 271.7,422.0 263.5,422.3 259.5,421.6 256.1,414.2 252.7,412.1 250.0,413.9 247.6,420.7 244.6,422.0 240.5,422.6 236.5,421.2 225.6,421.3 212.1,421.6 198.5,421.9 187.0,422.3" fill="#EAB839" fill-opacity="0.1"/><polygon points="187.0,412.1 192.4,408.1 195.8,411.5 201.9,409.8 205.3,416.9 210.1,411.5 212.8,416.2 215.5,415.2 218.6,410.1 221.6,416.2 224.3,414.2 228.3,393.9 230.1,387.1 232.4,416.9 235.8,413.1 238.5,417.5 241.9,418.5 244.6,415.2 247.6,415.5 250.0,404.7 253.1,397.2 256.1,402.0 259.5,408.1 261.9,407.1 264.9,415.8 267.6,416.6 270.0,415.2 273.7,416.9 279.1,410.4 283.8,412.8 287.2,407.7 293.3,415.2 296.7,411.5 301.5,412.8 304.8,409.4 310.9,412.8 313.6,410.1 317.0,408.1 320.4,405.4 325.1,412.1 331.2,411.2 333.3,408.7 336.0,402.2 341.4,401.3 344.8,415.5 347.5,414.8 350.5,412.1 353.6,416.2 359.0,412.1 362.4,412.8 368.5,408.1 373.2,411.2 380.0,411.5 385.4,409.4 390.1,412.1 393.5,410.8 398.3,413.5 402.3,409.4 405.7,412.8 410.5,408.5 413.8,412.1 417.2,412.5 422.6,400.6 427.4,397.6 430.8,414.2 433.5,414.2 436.2,410.4 439.6,413.5 440.0,414.2 444.7,411.2 448.1,412.8 451.5,409.0 455.6,408.5 459.6,413.1 465.1,408.5 468.4,413.5 473.9,403.3 479.3,407.4 482.0,382.3 485.1,369.5 488.1,385.1 490.8,379.2 493.5,391.1 496.9,407.4 499.6,406.7 502.3,403.1 505.0,404.0 507.7,393.9 510.4,392.5 513.8,399.3 517.2,406.7 519.2,404.4 522.6,406.7 528.0,405.4 533.4,404.0 536.8,401.3 542.2,406.7 545.3,401.0 548.3,406.0 551.0,407.4 555.1,405.4 559.8,407.7 562.5,403.3 565.3,400.4 568.6,405.4 572.0,406.7 576.8,407.0 580.8,406.4 585.6,407.4 588.3,397.9 591.0,394.9 594.1,372.2 597.1,380.3 600.5,392.5 602.5,392.2 605.9,406.7 609.3,407.4 612.0,407.4 615.4,412.8 618.7,413.9 622.1,411.2 625.5,414.8 628.2,415.5 630.9,413.5 635.0,415.8 637.0,415.5 639.7,410.4 643.1,415.5 645.1,415.8 648.5,400.6 651.2,392.5 654.6,411.7 656.7,411.2 660.0,418.9 662.7,407.4 665.5,394.9 668.2,397.2 671.6,395.2 674.3,396.3 677.0,392.5 679.7,374.2 683.1,379.6 685.8,383.0 689.2,399.3 691.9,415.5 694.6,411.5 700.0,411.2 700.0,417.5 694.6,418.2 691.9,417.5 689.2,404.7 685.8,390.5 683.1,389.1 679.7,385.1 677.0,401.3 674.3,405.6 673.6,406.7 671.6,403.7 670.9,402.7 668.2,410.1 665.5,408.5 663.4,415.5 662.7,417.1 660.0,423.6 657.3,418.5 656.7,418.4 654.6,418.2 653.3,413.5 651.2,408.7 650.6,407.1 648.5,408.1 645.8,416.2 645.1,416.7 643.1,418.2 639.7,417.8 637.7,417.5 637.0,417.5 635.0,417.4 630.9,417.2 629.6,417.1 628.2,417.1 625.5,416.9 622.1,416.7 620.1,416.6 618.7,416.7 616.0,416.9 615.4,417.0 612.0,417.4 610.6,417.5 609.3,417.3 606.3,416.9 605.9,415.1 603.8,406.0 602.5,403.2 601.8,401.7 600.5,402.6 599.8,403.1 597.1,410.1 594.1,412.6 593.0,413.5 591.0,415.3 589.0,417.1 588.3,417.1 585.6,417.0 580.8,416.9 576.8,417.5 574.1,418.0 572.0,417.4 568.6,416.5 567.3,416.2 565.3,416.4 562.5,416.7 560.5,416.9 559.8,416.6 556.5,415.5 555.1,416.0 551.0,417.5 548.3,415.2 545.3,415.9 544.3,416.2 542.2,415.5 540.2,414.8 536.8,415.8 533.4,414.8 528.0,415.8 525.3,415.2 522.6,416.1 521.2,416.6 519.2,416.4 517.9,416.2 517.2,414.4 513.8,405.4 510.4,402.2 507.7,404.7 505.0,412.1 502.3,414.8 500.9,416.2 499.6,416.0 496.9,415.5 494.2,417.5 493.5,417.6 490.8,417.8 488.1,418.1 486.0,418.2 485.1,417.9 482.0,416.9 479.3,417.4 476.6,418.0 473.9,416.7 471.1,415.5 468.4,415.6 465.1,415.7 461.7,415.8 459.6,416.3 455.6,417.4 454.9,417.5 451.5,415.3 450.8,414.8 448.1,415.3 445.4,415.8 444.7,415.8 440.0,415.5 439.6,415.5 436.9,415.5 436.2,415.5 433.5,415.3 431.4,415.2 430.8,413.3 428.1,405.4 427.4,404.8 424.7,402.7 422.6,403.9 421.3,404.7 417.9,413.5 417.2,413.7 413.8,414.5 412.5,414.8 410.5,415.0 405.7,415.3 402.3,415.5 401.7,415.5 398.3,415.5 393.5,415.4 390.1,415.3 388.1,415.2 385.4,415.4 380.0,415.7 378.6,415.8 373.2,415.7 368.5,415.5 367.8,415.5 362.4,415.5 359.0,415.5 357.0,415.5 353.6,416.6 350.5,415.8 349.5,415.5 347.5,415.2 344.8,414.8 341.4,403.6 338.0,402.7 336.0,404.2 335.3,404.7 333.3,411.6 332.6,413.9 331.2,414.0 325.8,414.4 325.1,414.3 320.4,413.7 319.1,413.5 317.0,415.2 313.6,415.4 312.3,415.5 310.9,415.7 304.8,416.4 301.5,416.9 296.7,417.3 293.3,417.7 290.6,418.0 287.2,418.0 283.8,418.0 279.8,418.0 279.1,418.0 273.7,418.4 271.7,418.5 270.0,418.5 267.6,418.5 264.9,418.5 263.5,418.5 261.9,418.1 259.5,417.5 256.1,408.1 253.1,405.7 252.7,405.4 250.0,407.4 247.6,416.9 244.6,418.2 241.9,418.9 240.5,419.2 238.5,418.4 236.5,417.5 235.8,417.5 232.4,417.5 230.1,417.5 228.3,417.5 225.6,417.5 224.3,417.6 221.6,417.7 218.6,417.8 215.5,417.9 212.8,417.9 212.1,418.0 210.1,418.0 205.3,418.1 201.9,418.2 198.5,418.2 195.8,418.3 192.4,418.4 187.0,418.6" fill="#6ED0E0" fill-opacity="0.1"/><polygon points="187.2,221.5 190.1,221.7 192.9,221.6 195.8,221.8 198.7,221.8 201.5,221.4 204.4,221.4 207.2,221.9 210.1,221.5 213.0,221.5 215.8,222.0 218.7,221.7 221.6,221.9 224.4,221.7 227.3,221.8 230.2,221.5 233.0,221.8 235.9,222.0 238.7,221.7 241.6,221.9 244.5,221.8 247.3,221.4 250.2,221.9 253.1,221.8 255.9,221.6 258.8,221.4 261.7,222.0 264.5,221.7 267.4,221.9 270.2,222.0 273.1,221.8 276.0,222.0 278.8,221.6 281.7,221.9 284.6,221.7 287.4,222.0 290.3,222.0 293.2,221.4 296.0,221.4 298.9,221.5 301.7,222.0 304.6,221.7 307.5,221.8 310.3,221.6 313.2,221.7 316.1,221.6 318.9,221.6 321.8,221.8 324.7,221.8 327.5,222.0 330.4,221.8 333.2,222.0 336.1,221.9 339.0,222.0 341.8,221.8 344.7,221.5 347.6,222.0 350.4,222.0 353.3,222.0 356.2,221.7 359.0,221.8 361.9,221.5 364.7,221.9 367.6,221.8 370.5,221.5 373.3,221.4 376.2,221.9 379.1,222.0 381.9,221.4 384.8,221.9 387.7,221.6 390.5,221.5 393.4,221.6 396.2,221.9 399.1,222.0 402.0,221.4 404.8,221.8 407.7,221.4 410.6,221.9 413.4,221.6 416.3,222.0 419.2,222.0 422.0,221.7 424.9,222.0 427.7,221.6 430.6,221.4 433.5,221.8 436.3,221.4 439.2,221.5 442.1,221.6 444.9,221.8 447.8,221.5 450.7,221.4 453.5,222.0 456.4,221.6 459.3,222.0 462.1,222.0 465.0,221.6 467.8,221.7 470.7,221.7 473.6,221.8 476.4,221.8 479.3,221.7 482.2,221.8 485.0,222.0 487.9,221.7 490.8,221.7 493.6,221.9 496.5,221.5 499.3,221.6 502.2,222.0 505.1,221.7 507.9,221.7 510.8,221.4 513.7,221.6 516.5,221.8 519.4,221.4 522.3,221.8 525.1,221.8 528.0,221.4 530.8,221.8 533.7,221.7 536.6,221.8 539.4,221.6 542.3,221.8 545.2,221.9 548.0,221.4 550.9,221.4 553.8,221.8 556.6,222.0 559.5,221.5 562.3,221.7 565.2,221.8 568.1,221.6 570.9,221.6 573.8,221.6 576.7,221.6 579.5,221.8 582.4,221.6 585.3,221.6 588.1,221.9 591.0,221.4 593.8,221.7 596.7,221.9 599.6,221.6 602.4,221.5 605.3,221.9 608.2,221.5 611.0,221.5 613.9,221.7 616.8,221.8 619.6,221.4 622.5,221.6 625.3,221.6 628.2,221.9 631.1,221.7 633.9,221.9 636.8,221.5 639.7,221.6 642.5,221.8 645.4,222.0 648.3,221.7 651.1,221.5 654.0,221.4 656.8,221.7 659.7,221.5 662.6,221.9 665.4,221.9 668.3,221.5 671.2,221.5 674.0,221.9 676.9,221.8 679.8,221.9 682.6,221.6 685.5,221.4 688.3,221.6 691.2,221.9 694.1,221.5 696.9,221.6 699.8,221.6 700.0,411.2 699.8,411.2 696.9,411.3 694.6,411.5 694.1,412.2 691.9,415.5 691.2,411.6 689.2,399.3 688.3,395.4 685.8,383.0 685.5,382.7 683.1,379.6 682.6,378.9 679.8,374.3 679.7,374.2 677.0,392.5 676.9,392.6 674.3,396.3 674.0,396.2 671.6,395.2 671.2,395.4 668.3,397.2 668.2,397.2 665.5,394.9 665.4,395.0 662.7,407.4 662.6,408.1 660.0,418.9 659.7,418.1 656.8,411.6 656.7,411.2 654.6,411.7 654.0,408.1 651.2,392.5 651.1,392.9 648.5,400.6 648.3,401.9 645.4,414.7 645.1,415.8 643.1,415.5 642.5,414.6 639.7,410.4 639.7,410.5 637.0,415.5 636.8,415.5 635.0,415.8 633.9,415.2 631.1,413.6 630.9,413.5 628.2,415.5 628.2,415.5 625.5,414.8 625.3,414.7 622.5,411.6 622.1,411.2 619.6,413.2 618.7,413.9 616.8,413.3 615.4,412.8 613.9,410.5 612.0,407.4 611.0,407.4 609.3,407.4 608.2,407.2 605.9,406.7 605.3,404.2 602.5,392.2 602.4,392.2 600.5,392.5 599.6,389.3 597.1,380.3 596.7,379.3 594.1,372.2 593.8,374.0 591.0,394.9 591.0,394.9 588.3,397.9 588.1,398.5 585.6,407.4 585.3,407.3 582.4,406.8 580.8,406.4 579.5,406.6 576.8,407.0 576.7,407.0 573.8,406.8 572.0,406.7 570.9,406.3 568.6,405.4 568.1,404.5 565.3,400.4 565.2,400.4 562.5,403.3 562.3,403.7 559.8,407.7 559.5,407.5 556.6,406.1 555.1,405.4 553.8,406.0 551.0,407.4 550.9,407.3 548.3,406.0 548.0,405.5 545.3,401.0 545.2,401.4 542.3,406.6 542.2,406.7 539.4,403.9 536.8,401.3 536.6,401.5 533.7,403.8 533.4,404.0 530.8,404.7 528.0,405.4 528.0,405.4 525.1,406.1 522.6,406.7 522.3,406.5 519.4,404.5 519.2,404.4 517.2,406.7 516.5,405.3 513.8,399.3 513.7,399.0 510.8,393.3 510.4,392.5 507.9,393.7 507.7,393.9 505.1,403.7 505.0,404.0 502.3,403.1 502.2,403.2 499.6,406.7 499.3,406.8 496.9,407.4 496.5,405.5 493.6,391.8 493.5,391.1 490.8,379.2 490.8,379.3 488.1,385.1 487.9,384.1 485.1,369.5 485.0,369.8 482.2,381.6 482.0,382.3 479.3,407.1 479.3,407.4 476.4,405.3 473.9,403.3 473.6,403.9 470.7,409.2 468.4,413.5 467.8,412.6 465.1,408.5 465.0,408.5 462.1,411.0 459.6,413.1 459.3,412.6 456.4,409.4 455.6,408.5 453.5,408.7 451.5,409.0 450.7,410.0 448.1,412.8 447.8,412.7 444.9,411.3 444.7,411.2 442.1,412.9 440.0,414.2 439.6,413.5 439.2,413.2 436.3,410.5 436.2,410.4 433.5,414.2 433.5,414.2 430.8,414.2 430.6,413.4 427.7,399.4 427.4,397.6 424.9,399.2 422.6,400.6 422.0,402.0 419.2,408.3 417.2,412.5 416.3,412.4 413.8,412.1 413.4,411.7 410.6,408.6 410.5,408.5 407.7,411.0 405.7,412.8 404.8,411.9 402.3,409.4 402.0,409.8 399.1,412.6 398.3,413.5 396.2,412.3 393.5,410.8 393.4,410.8 390.5,412.0 390.1,412.1 387.7,410.7 385.4,409.4 384.8,409.7 381.9,410.7 380.0,411.5 379.1,411.4 376.2,411.3 373.3,411.2 373.2,411.2 370.5,409.4 368.5,408.1 367.6,408.7 364.7,411.0 362.4,412.8 361.9,412.7 359.0,412.1 359.0,412.1 356.2,414.3 353.6,416.2 353.3,415.8 350.5,412.1 350.4,412.2 347.6,414.8 347.5,414.8 344.8,415.5 344.7,415.2 341.8,403.2 341.4,401.3 339.0,401.7 336.1,402.2 336.0,402.2 333.3,408.7 333.2,408.8 331.2,411.2 330.4,411.3 327.5,411.8 325.1,412.1 324.7,411.4 321.8,407.3 320.4,405.4 318.9,406.5 317.0,408.1 316.1,408.6 313.6,410.1 313.2,410.5 310.9,412.8 310.3,412.5 307.5,410.9 304.8,409.4 304.6,409.7 301.7,412.5 301.5,412.8 298.9,412.1 296.7,411.5 296.0,412.2 293.3,415.2 293.2,415.0 290.3,411.5 287.4,407.9 287.2,407.7 284.6,411.7 283.8,412.8 281.7,411.7 279.1,410.4 278.8,410.7 276.0,414.1 273.7,416.9 273.1,416.6 270.2,415.3 270.0,415.2 267.6,416.6 267.4,416.5 264.9,415.8 264.5,414.7 261.9,407.1 261.7,407.2 259.5,408.1 258.8,406.8 256.1,402.0 255.9,401.7 253.1,397.2 253.1,397.3 250.2,404.2 250.0,404.7 247.6,415.5 247.3,415.5 244.6,415.2 244.5,415.4 241.9,418.5 241.6,418.4 238.7,417.6 238.5,417.5 235.9,413.3 235.8,413.1 233.0,416.2 232.4,416.9 230.2,387.9 230.1,387.1 228.3,393.9 227.3,399.0 224.4,413.4 224.3,414.2 221.6,416.2 221.6,416.2 218.7,410.3 218.6,410.1 215.8,414.6 215.5,415.2 213.0,416.1 212.8,416.2 210.1,411.6 210.1,411.5 207.2,414.7 205.3,416.9 204.4,414.9 201.9,409.8 201.5,409.9 198.7,410.7 195.8,411.5 195.8,411.4 192.9,408.6 192.4,408.1 190.1,409.9 187.2,412.0 187.0,412.1" fill="#EF843C" fill-opacity="0.1"/><polyline points="187.0,422.3 198.5,421.9 212.1,421.6 225.6,421.3 236.5,421.2 240.5,422.6 244.6,422.0 247.6,420.7 250.0,413.9 252.7,412.1 256.1,414.2 259.5,421.6 263.5,422.3 271.7,422.0 279.8,421.6 290.6,422.3 301.5,421.6 312.3,420.7 317.0,420.3 325.8,419.6 332.6,419.3 336.0,412.1 338.7,410.4 342.1,412.1 344.8,420.3 349.5,420.5 353.6,421.2 357.0,420.3 367.8,420.3 378.6,420.7 388.1,420.3 401.7,420.7 412.5,419.9 417.9,418.9 421.3,412.1 424.7,410.1 428.1,412.1 431.4,420.3 436.9,420.3 440.0,419.6 445.4,420.3 450.8,419.3 454.2,421.2 461.7,420.0 469.8,419.6 476.6,422.3 482.0,421.2 486.0,422.3 494.2,421.6 498.2,420.3 502.3,420.7 505.0,417.5 508.4,411.2 511.1,410.4 513.8,413.5 517.9,420.9 521.2,420.9 528.0,420.3 534.8,420.0 537.5,420.9 542.9,420.0 551.0,421.6 556.5,420.5 567.3,420.9 574.1,422.0 580.8,421.2 589.0,421.2 594.4,417.5 597.8,414.8 599.8,410.4 601.8,410.4 604.5,416.9 606.6,421.2 610.6,421.6 616.0,421.2 629.6,421.2 643.1,421.6 645.8,419.6 648.5,414.4 650.6,413.5 653.3,419.6 654.6,421.6 657.3,422.3 660.0,426.4 663.4,419.6 665.5,414.2 668.2,415.2 670.9,411.5 673.6,413.5 677.0,410.1 679.7,397.2 683.1,399.9 685.8,400.6 689.2,412.1 691.9,421.6 694.6,421.6 700.0,421.2" fill="none" stroke="#7EB26D" stroke-width="1" stroke-linejoin="round"/><polyline points="187.0,418.6 198.5,418.2 212.1,418.0 225.6,417.5 236.5,417.5 240.5,419.2 244.6,418.2 247.6,416.9 250.0,407.4 252.7,405.4 256.1,408.1 259.5,417.5 263.5,418.5 271.7,418.5 279.8,418.0 290.6,418.0 301.5,416.9 312.3,415.5 317.0,415.2 319.1,413.5 325.8,414.4 332.6,413.9 335.3,404.7 338.0,402.7 341.4,403.6 344.8,414.8 349.5,415.5 353.6,416.6 357.0,415.5 367.8,415.5 378.6,415.8 388.1,415.2 401.7,415.5 412.5,414.8 417.9,413.5 421.3,404.7 424.7,402.7 428.1,405.4 431.4,415.2 436.9,415.5 440.0,415.5 445.4,415.8 450.8,414.8 454.9,417.5 461.7,415.8 471.1,415.5 476.6,418.0 482.0,416.9 486.0,418.2 494.2,417.5 496.9,415.5 500.9,416.2 505.0,412.1 507.7,404.7 510.4,402.2 513.8,405.4 517.9,416.2 521.2,416.6 525.3,415.2 528.0,415.8 533.4,414.8 536.8,415.8 540.2,414.8 544.3,416.2 548.3,415.2 551.0,417.5 556.5,415.5 560.5,416.9 567.3,416.2 574.1,418.0 580.8,416.9 589.0,417.1 593.0,413.5 597.1,410.1 599.8,403.1 601.8,401.7 603.8,406.0 606.3,416.9 610.6,417.5 616.0,416.9 620.1,416.6 629.6,417.1 637.7,417.5 643.1,418.2 645.8,416.2 648.5,408.1 650.6,407.1 653.3,413.5 654.6,418.2 657.3,418.5 660.0,423.6 663.4,415.5 665.5,408.5 668.2,410.1 670.9,402.7 673.6,406.7 677.0,401.3 679.7,385.1 683.1,389.1 685.8,390.5 689.2,404.7 691.9,417.5 694.6,418.2 700.0,417.5" fill="none" stroke="#EAB839" stroke-width="1" stroke-linejoin="round"/><polyline points="187.0,412.1 192.4,408.1 195.8,411.5 201.9,409.8 205.3,416.9 210.1,411.5 212.8,416.2 215.5,415.2 218.6,410.1 221.6,416.2 224.3,414.2 228.3,393.9 230.1,387.1 232.4,416.9 235.8,413.1 238.5,417.5 241.9,418.5 244.6,415.2 247.6,415.5 250.0,404.7 253.1,397.2 256.1,402.0 259.5,408.1 261.9,407.1 264.9,415.8 267.6,416.6 270.0,415.2 273.7,416.9 279.1,410.4 283.8,412.8 287.2,407.7 293.3,415.2 296.7,411.5 301.5,412.8 304.8,409.4 310.9,412.8 313.6,410.1 317.0,408.1 320.4,405.4 325.1,412.1 331.2,411.2 333.3,408.7 336.0,402.2 341.4,401.3 344.8,415.5 347.5,414.8 350.5,412.1 353.6,416.2 359.0,412.1 362.4,412.8 368.5,408.1 373.2,411.2 380.0,411.5 385.4,409.4 390.1,412.1 393.5,410.8 398.3,413.5 402.3,409.4 405.7,412.8 410.5,408.5 413.8,412.1 417.2,412.5 422.6,400.6 427.4,397.6 430.8,414.2 433.5,414.2 436.2,410.4 439.6,413.5 440.0,414.2 444.7,411.2 448.1,412.8 451.5,409.0 455.6,408.5 459.6,413.1 465.1,408.5 468.4,413.5 473.9,403.3 479.3,407.4 482.0,382.3 485.1,369.5 488.1,385.1 490.8,379.2 493.5,391.1 496.9,407.4 499.6,406.7 502.3,403.1 505.0,404.0 507.7,393.9 510.4,392.5 513.8,399.3 517.2,406.7 519.2,404.4 522.6,406.7 528.0,405.4 533.4,404.0 536.8,401.3 542.2,406.7 545.3,401.0 548.3,406.0 551.0,407.4 555.1,405.4 559.8,407.7 562.5,403.3 565.3,400.4 568.6,405.4 572.0,406.7 576.8,407.0 580.8,406.4 585.6,407.4 588.3,397.9 591.0,394.9 594.1,372.2 597.1,380.3 600.5,392.5 602.5,392.2 605.9,406.7 609.3,407.4 612.0,407.4 615.4,412.8 618.7,413.9 622.1,411.2 625.5,414.8 628.2,415.5 630.9,413.5 635.0,415.8 637.0,415.5 639.7,410.4 643.1,415.5 645.1,415.8 648.5,400.6 651.2,392.5 654.6,411.7 656.7,411.2 660.0,418.9 662.7,407.4 665.5,394.9 668.2,397.2 671.6,395.2 674.3,396.3 677.0,392.5 679.7,374.2 683.1,379.6 685.8,383.0 689.2,399.3 691.9,415.5 694.6,411.5 700.0,411.2" fill="none" stroke="#6ED0E0" stroke-width="1" stroke-linejoin="round"/><polyline points="187.2,221.5 190.1,221.7 192.9,221.6 195.8,221.8 198.7,221.8 201.5,221.4 204.4,221.4 207.2,221.9 210.1,221.5 213.0,221.5 215.8,222.0 218.7,221.7 221.6,221.9 224.4,221.7 227.3,221.8 230.2,221.5 233.0,221.8 235.9,222.0 238.7,221.7 241.6,221.9 244.5,221.8 247.3,221.4 250.2,221.9 253.1,221.8 255.9,221.6 258.8,221.4 261.7,222.0 264.5,221.7 267.4,221.9 270.2,222.0 273.1,221.8 276.0,222.0 278.8,221.6 281.7,221.9 284.6,221.7 287.4,222.0 290.3,222.0 293.2,221.4 296.0,221.4 298.9,221.5 301.7,222.0 304.6,221.7 307.5,221.8 310.3,221.6 313.2,221.7 316.1,221.6 318.9,221.6 321.8,221.8 324.7,221.8 327.5,222.0 330.4,221.8 333.2,222.0 336.1,221.9 339.0,222.0 341.8,221.8 344.7,221.5 347.6,222.0 350.4,222.0 353.3,222.0 356.2,221.7 359.0,221.8 361.9,221.5 364.7,221.9 367.6,221.8 370.5,221.5 373.3,221.4 376.2,221.9 379.1,222.0 381.9,221.4 384.8,221.9 387.7,221.6 390.5,221.5 393.4,221.6 396.2,221.9 399.1,222.0 402.0,221.4 404.8,221.8 407.7,221.4 410.6,221.9 413.4,221.6 416.3,222.0 419.2,222.0 422.0,221.7 424.9,222.0 427.7,221.6 430.6,221.4 433.5,221.8 436.3,221.4 439.2,221.5 442.1,221.6 444.9,221.8 447.8,221.5 450.7,221.4 453.5,222.0 456.4,221.6 459.3,222.0 462.1,222.0 465.0,221.6 467.8,221.7 470.7,221.7 473.6,221.8 476.4,221.8 479.3,221.7 482.2,221.8 485.0,222.0 487.9,221.7 490.8,221.7 493.6,221.9 496.5,221.5 499.3,221.6 502.2,222.0 505.1,221.7 507.9,221.7 510.8,221.4 513.7,221.6 516.5,221.8 519.4,221.4 522.3,221.8 525.1,221.8 528.0,221.4 530.8,221.8 533.7,221.7 536.6,221.8 539.4,221.6 542.3,221.8 545.2,221.9 548.0,221.4 550.9,221.4 553.8,221.8 556.6,222.0 559.5,221.5 562.3,221.7 565.2,221.8 568.1,221.6 570.9,221.6 573.8,221.6 576.7,221.6 579.5,221.8 582.4,221.6 585.3,221.6 588.1,221.9 591.0,221.4 593.8,221.7 596.7,221.9 599.6,221.6 602.4,221.5 605.3,221.9 608.2,221.5 611.0,221.5 613.9,221.7 616.8,221.8 619.6,221.4 622.5,221.6 625.3,221.6 628.2,221.9 631.1,221.7 633.9,221.9 636.8,221.5 639.7,221.6 642.5,221.8 645.4,222.0 648.3,221.7 651.1,221.5 654.0,221.4 656.8,221.7 659.7,221.5 662.6,221.9 665.4,221.9 668.3,221.5 671.2,221.5 674.0,221.9 676.9,221.8 679.8,221.9 682.6,221.6 685.5,221.4 688.3,221.6 691.2,221.9 694.1,221.5 696.9,221.6 699.8,221.6" fill="none" stroke="#EF843C" stroke-width="1" stroke-linejoin="round"/>
<rect x="162.0" y="468.0" width="14" height="4" rx="1" fill="#7EB26D"/><text x="184.2" y="474.0" text-anchor="start" font-size="12" fill="#ccccdc" textLength="24.5" lengthAdjust="spacingAndGlyphs">User</text><text x="215.0" y="474.0" text-anchor="start" font-size="12" fill="#ccccdc" textLength="58.8" lengthAdjust="spacingAndGlyphs">Avg: 5.45%</text><text x="280.5" y="474.0" text-anchor="start" font-size="12" fill="#ccccdc" textLength="79.0" lengthAdjust="spacingAndGlyphs">Current: 4.72%</text><rect x="370.0" y="468.0" width="14" height="4" rx="1" fill="#EAB839"/><text x="392.0" y="474.0" text-anchor="start" font-size="12" fill="#ccccdc" textLength="40.5" lengthAdjust="spacingAndGlyphs">System</text><text x="438.8" y="474.0" text-anchor="start" font-size="12" fill="#ccccdc" textLength="58.8" lengthAdjust="spacingAndGlyphs">Avg: 2.25%</text><text x="504.2" y="474.0" text-anchor="start" font-size="12" fill="#ccccdc" textLength="78.8" lengthAdjust="spacingAndGlyphs">Current: 1.65%</text><rect x="162.0" y="486.0" width="14" height="4" rx="1" fill="#6ED0E0"/><text x="184.2" y="492.0" text-anchor="start" font-size="12" fill="#ccccdc" textLength="32.8" lengthAdjust="spacingAndGlyphs">Iowait</text><text x="223.8" y="492.0" text-anchor="start" font-size="12" fill="#ccccdc" textLength="58.8" lengthAdjust="spacingAndGlyphs">Avg: 3.61%</text><text x="289.2" y="492.0" text-anchor="start" font-size="12" fill="#ccccdc" textLength="79.0" lengthAdjust="spacingAndGlyphs">Current: 3.04%</text><rect x="378.0" y="486.0" width="14" height="4" rx="1" fill="#EF843C"/><text x="400.5" y="492.0" text-anchor="start" font-size="12" fill="#ccccdc" textLength="19.0" lengthAdjust="spacingAndGlyphs">idle</text><text x="426.2" y="492.0" text-anchor="start" font-size="12" fill="#ccccdc" textLength="58.8" lengthAdjust="spacingAndGlyphs">Avg: 88.2%</text><text x="491.8" y="492.0" text-anchor="start" font-size="12" fill="#ccccdc" textLength="78.8" lengthAdjust="spacingAndGlyphs">Current: 90.2%</text>
</svg></div>
<div class="panel" style="left:733px;top:171px;width:582px;height:334px">
<svg width="582" height="334" viewBox="733 171 582 334">
<text x="1024.0" y="193.1" text-anchor="middle" font-size="14" fill="#ccccdc" textLength="197.7" lengthAdjust="spacingAndGlyphs" stroke="#ccccdc" stroke-width="0.35">PUT Account/Container/Object</text>
<g stroke="rgba(204,204,220,0.2)" stroke-width="1" shape-rendering="crispEdges"><line x1="762.1" x2="1289.8" y1="221.0" y2="221.0"/><line x1="762.1" x2="1289.8" y1="256.0" y2="256.0"/><line x1="762.1" x2="1289.8" y1="291.0" y2="291.0"/><line x1="762.1" x2="1289.8" y1="326.0" y2="326.0"/><line x1="762.1" x2="1289.8" y1="361.0" y2="361.0"/><line x1="762.1" x2="1289.8" y1="396.0" y2="396.0"/><line x1="762.1" x2="1289.8" y1="431.0" y2="431.0"/><line x1="839.0" x2="839.0" y1="221.0" y2="431.0"/><line x1="927.4" x2="927.4" y1="221.0" y2="431.0"/><line x1="1015.8" x2="1015.8" y1="221.0" y2="431.0"/><line x1="1104.2" x2="1104.2" y1="221.0" y2="431.0"/><line x1="1192.6" x2="1192.6" y1="221.0" y2="431.0"/><line x1="1281.0" x2="1281.0" y1="221.0" y2="431.0"/></g>
<text x="756.4" y="225.2" text-anchor="end" font-size="12" fill="#ccccdc" textLength="13.5" lengthAdjust="spacingAndGlyphs">30</text>
<text x="756.4" y="260.2" text-anchor="end" font-size="12" fill="#ccccdc" textLength="13.5" lengthAdjust="spacingAndGlyphs">25</text>
<text x="756.4" y="295.2" text-anchor="end" font-size="12" fill="#ccccdc" textLength="13.5" lengthAdjust="spacingAndGlyphs">20</text>
<text x="756.4" y="330.2" text-anchor="end" font-size="12" fill="#ccccdc" textLength="13.5" lengthAdjust="spacingAndGlyphs">15</text>
<text x="756.4" y="365.2" text-anchor="end" font-size="12" fill="#ccccdc" textLength="13.5" lengthAdjust="spacingAndGlyphs">10</text>
<text x="756.4" y="400.2" text-anchor="end" font-size="12" fill="#ccccdc" textLength="6.7" lengthAdjust="spacingAndGlyphs">5</text>
<text x="756.4" y="435.2" text-anchor="end" font-size="12" fill="#ccccdc" textLength="6.7" lengthAdjust="spacingAndGlyphs">0</text>
<text x="839.0" y="450.4" text-anchor="middle" font-size="12" fill="#ccccdc" textLength="29.9" lengthAdjust="spacingAndGlyphs">10:45</text>
<text x="927.4" y="450.4" text-anchor="middle" font-size="12" fill="#ccccdc" textLength="29.9" lengthAdjust="spacingAndGlyphs">10:50</text>
<text x="1015.8" y="450.4" text-anchor="middle" font-size="12" fill="#ccccdc" textLength="29.9" lengthAdjust="spacingAndGlyphs">10:55</text>
<text x="1104.2" y="450.4" text-anchor="middle" font-size="12" fill="#ccccdc" textLength="29.9" lengthAdjust="spacingAndGlyphs">11:00</text>
<text x="1192.6" y="450.4" text-anchor="middle" font-size="12" fill="#ccccdc" textLength="29.9" lengthAdjust="spacingAndGlyphs">11:05</text>
<text x="1281.0" y="450.4" text-anchor="middle" font-size="12" fill="#ccccdc" textLength="29.9" lengthAdjust="spacingAndGlyphs">11:10</text>
<polygon points="762.0,431.0 856.8,431.0 859.9,413.7 862.9,409.6 866.0,410.6 868.4,407.0 871.5,419.4 874.1,415.7 880.2,391.3 882.9,399.4 885.9,382.5 889.0,392.3 894.5,384.1 898.2,372.3 901.0,385.8 903.7,377.0 907.1,366.8 909.8,343.4 912.8,361.3 915.9,347.1 919.0,344.4 921.6,350.5 924.7,361.3 927.5,347.9 930.2,360.7 933.2,358.7 936.3,337.3 939.3,331.6 942.0,341.4 945.0,346.4 947.9,376.0 950.5,371.9 954.0,356.6 959.7,378.0 962.8,365.8 965.8,354.6 968.9,349.1 971.9,356.0 974.6,351.5 977.6,355.2 980.5,341.8 983.4,357.2 986.2,340.9 989.3,354.0 992.3,363.8 995.4,339.3 998.0,326.1 1001.1,352.6 1004.1,349.5 1007.0,351.5 1010.1,341.4 1013.1,330.8 1016.2,355.6 1018.8,348.5 1021.9,349.5 1023.9,344.4 1025.0,343.4 1027.4,366.8 1033.2,339.3 1036.2,394.3 1042.3,351.5 1045.4,347.9 1048.4,351.9 1051.1,347.5 1054.5,349.5 1057.6,360.7 1060.3,425.9 1065.8,359.3 1068.8,402.5 1071.9,415.7 1074.5,363.4 1077.6,396.4 1080.4,379.1 1083.7,406.6 1086.5,365.8 1089.6,333.6 1092.7,358.7 1095.3,350.5 1098.4,357.7 1101.4,365.8 1104.1,402.5 1107.1,361.3 1110.0,358.7 1113.0,391.3 1118.7,361.3 1121.8,383.7 1124.9,362.1 1127.9,389.2 1130.6,380.1 1133.6,377.4 1136.7,422.5 1139.5,404.5 1142.6,356.6 1145.6,390.7 1148.5,362.1 1151.4,404.5 1154.4,403.5 1157.5,431.0 1289.9,431.0 1289.9,431.0 762.0,431.0" fill="#7EB26D" fill-opacity="0.1"/><polygon points="762.0,430.6 803.8,430.6 809.9,421.2 817.1,430.4 824.8,430.4 829.3,425.3 835.0,430.6 853.7,430.6 856.8,417.2 859.9,430.6 892.5,430.6 894.9,428.0 900.6,429.0 903.7,430.6 911.8,430.6 915.9,428.4 922.0,429.4 924.7,430.6 981.1,430.6 986.2,427.8 991.3,430.6 1002.5,430.6 1007.6,427.3 1012.7,430.6 1023.9,430.6 1025.0,430.6 1068.8,430.6 1074.5,427.8 1077.6,429.6 1080.4,428.6 1083.7,430.6 1087.2,430.6 1092.7,428.2 1098.4,429.4 1101.4,430.6 1157.5,430.6 1160.5,428.4 1169.7,429.6 1171.7,430.6 1181.9,430.6 1187.0,428.2 1192.1,430.6 1246.1,430.6 1248.8,428.4 1251.6,429.6 1254.7,428.6 1259.4,430.6 1268.5,430.6 1272.6,427.3 1275.3,428.6 1278.1,417.2 1281.2,430.6 1289.9,430.6 1289.9,431.0 762.0,431.0" fill="#EAB839" fill-opacity="0.1"/><polygon points="762.0,431.0 853.7,431.0 856.8,420.8 859.2,394.3 861.9,396.0 865.4,405.5 869.0,398.4 874.1,396.0 877.2,386.2 880.2,379.1 882.9,387.2 885.9,362.1 888.4,368.9 892.1,356.6 894.9,366.8 898.2,351.9 901.0,358.7 903.7,325.0 906.7,329.5 909.8,294.9 912.4,318.5 915.9,298.6 918.5,301.0 921.6,290.0 924.7,302.2 927.5,295.5 933.2,311.2 936.3,290.0 939.3,292.0 942.0,280.6 945.4,300.6 951.2,322.0 954.0,306.7 959.7,314.9 962.8,334.8 965.8,308.3 968.9,306.7 975.0,296.1 978.1,292.4 980.5,294.9 983.4,309.8 986.2,277.8 989.3,309.2 992.3,309.8 995.4,274.1 998.0,258.2 1001.1,298.6 1007.0,271.0 1009.6,275.1 1013.3,288.0 1016.4,292.4 1018.8,290.8 1021.9,285.3 1023.9,281.8 1025.0,282.3 1027.4,313.8 1033.2,289.4 1036.2,378.0 1042.3,290.4 1045.4,294.9 1048.4,292.0 1051.1,274.5 1054.5,306.7 1057.6,329.1 1060.3,421.8 1065.8,303.6 1068.8,377.0 1071.9,389.9 1074.5,311.2 1077.6,381.1 1080.4,329.5 1083.7,375.0 1086.5,321.0 1089.6,286.3 1092.7,302.6 1095.3,304.7 1098.4,307.7 1101.4,321.0 1104.1,369.5 1107.1,321.0 1110.0,300.2 1113.0,372.9 1118.7,304.3 1121.8,343.0 1124.9,300.2 1127.9,358.7 1130.6,347.5 1133.6,320.6 1136.7,411.0 1139.5,392.3 1142.6,288.0 1145.6,357.7 1148.5,337.3 1151.4,366.8 1154.4,369.9 1157.5,431.0 1289.9,431.0 1289.9,431.0 762.0,431.0" fill="#C0D8FF" fill-opacity="0.1"/><polyline points="762.0,431.0 856.8,431.0 859.9,413.7 862.9,409.6 866.0,410.6 868.4,407.0 871.5,419.4 874.1,415.7 880.2,391.3 882.9,399.4 885.9,382.5 889.0,392.3 894.5,384.1 898.2,372.3 901.0,385.8 903.7,377.0 907.1,366.8 909.8,343.4 912.8,361.3 915.9,347.1 919.0,344.4 921.6,350.5 924.7,361.3 927.5,347.9 930.2,360.7 933.2,358.7 936.3,337.3 939.3,331.6 942.0,341.4 945.0,346.4 947.9,376.0 950.5,371.9 954.0,356.6 959.7,378.0 962.8,365.8 965.8,354.6 968.9,349.1 971.9,356.0 974.6,351.5 977.6,355.2 980.5,341.8 983.4,357.2 986.2,340.9 989.3,354.0 992.3,363.8 995.4,339.3 998.0,326.1 1001.1,352.6 1004.1,349.5 1007.0,351.5 1010.1,341.4 1013.1,330.8 1016.2,355.6 1018.8,348.5 1021.9,349.5 1023.9,344.4 1025.0,343.4 1027.4,366.8 1033.2,339.3 1036.2,394.3 1042.3,351.5 1045.4,347.9 1048.4,351.9 1051.1,347.5 1054.5,349.5 1057.6,360.7 1060.3,425.9 1065.8,359.3 1068.8,402.5 1071.9,415.7 1074.5,363.4 1077.6,396.4 1080.4,379.1 1083.7,406.6 1086.5,365.8 1089.6,333.6 1092.7,358.7 1095.3,350.5 1098.4,357.7 1101.4,365.8 1104.1,402.5 1107.1,361.3 1110.0,358.7 1113.0,391.3 1118.7,361.3 1121.8,383.7 1124.9,362.1 1127.9,389.2 1130.6,380.1 1133.6,377.4 1136.7,422.5 1139.5,404.5 1142.6,356.6 1145.6,390.7 1148.5,362.1 1151.4,404.5 1154.4,403.5 1157.5,431.0 1289.9,431.0" fill="none" stroke="#7EB26D" stroke-width="1" stroke-linejoin="round"/><polyline points="762.0,430.6 803.8,430.6 809.9,421.2 817.1,430.4 824.8,430.4 829.3,425.3 835.0,430.6 853.7,430.6 856.8,417.2 859.9,430.6 892.5,430.6 894.9,428.0 900.6,429.0 903.7,430.6 911.8,430.6 915.9,428.4 922.0,429.4 924.7,430.6 981.1,430.6 986.2,427.8 991.3,430.6 1002.5,430.6 1007.6,427.3 1012.7,430.6 1023.9,430.6 1025.0,430.6 1068.8,430.6 1074.5,427.8 1077.6,429.6 1080.4,428.6 1083.7,430.6 1087.2,430.6 1092.7,428.2 1098.4,429.4 1101.4,430.6 1157.5,430.6 1160.5,428.4 1169.7,429.6 1171.7,430.6 1181.9,430.6 1187.0,428.2 1192.1,430.6 1246.1,430.6 1248.8,428.4 1251.6,429.6 1254.7,428.6 1259.4,430.6 1268.5,430.6 1272.6,427.3 1275.3,428.6 1278.1,417.2 1281.2,430.6 1289.9,430.6" fill="none" stroke="#EAB839" stroke-width="1" stroke-linejoin="round"/><polyline points="762.0,431.0 853.7,431.0 856.8,420.8 859.2,394.3 861.9,396.0 865.4,405.5 869.0,398.4 874.1,396.0 877.2,386.2 880.2,379.1 882.9,387.2 885.9,362.1 888.4,368.9 892.1,356.6 894.9,366.8 898.2,351.9 901.0,358.7 903.7,325.0 906.7,329.5 909.8,294.9 912.4,318.5 915.9,298.6 918.5,301.0 921.6,290.0 924.7,302.2 927.5,295.5 933.2,311.2 936.3,290.0 939.3,292.0 942.0,280.6 945.4,300.6 951.2,322.0 954.0,306.7 959.7,314.9 962.8,334.8 965.8,308.3 968.9,306.7 975.0,296.1 978.1,292.4 980.5,294.9 983.4,309.8 986.2,277.8 989.3,309.2 992.3,309.8 995.4,274.1 998.0,258.2 1001.1,298.6 1007.0,271.0 1009.6,275.1 1013.3,288.0 1016.4,292.4 1018.8,290.8 1021.9,285.3 1023.9,281.8 1025.0,282.3 1027.4,313.8 1033.2,289.4 1036.2,378.0 1042.3,290.4 1045.4,294.9 1048.4,292.0 1051.1,274.5 1054.5,306.7 1057.6,329.1 1060.3,421.8 1065.8,303.6 1068.8,377.0 1071.9,389.9 1074.5,311.2 1077.6,381.1 1080.4,329.5 1083.7,375.0 1086.5,321.0 1089.6,286.3 1092.7,302.6 1095.3,304.7 1098.4,307.7 1101.4,321.0 1104.1,369.5 1107.1,321.0 1110.0,300.2 1113.0,372.9 1118.7,304.3 1121.8,343.0 1124.9,300.2 1127.9,358.7 1130.6,347.5 1133.6,320.6 1136.7,411.0 1139.5,392.3 1142.6,288.0 1145.6,357.7 1148.5,337.3 1151.4,366.8 1154.4,369.9 1157.5,431.0 1289.9,431.0" fill="none" stroke="#C0D8FF" stroke-width="1" stroke-linejoin="round"/>
<rect x="752.0" y="468.0" width="14" height="4" rx="1" fill="#7EB26D"/><text x="774.2" y="474.0" text-anchor="start" font-size="12" fill="#ccccdc" textLength="71.5" lengthAdjust="spacingAndGlyphs">put container</text><text x="852.5" y="474.0" text-anchor="start" font-size="12" fill="#ccccdc" textLength="50.0" lengthAdjust="spacingAndGlyphs">Avg: 4.94</text><text x="909.5" y="474.0" text-anchor="start" font-size="12" fill="#ccccdc" textLength="53.5" lengthAdjust="spacingAndGlyphs">Total: 894</text><rect x="973.0" y="468.0" width="14" height="4" rx="1" fill="#EAB839"/><text x="995.0" y="474.0" text-anchor="start" font-size="12" fill="#ccccdc" textLength="65.0" lengthAdjust="spacingAndGlyphs">put account</text><text x="1066.5" y="474.0" text-anchor="start" font-size="12" fill="#ccccdc" textLength="56.5" lengthAdjust="spacingAndGlyphs">Avg: 0.107</text><text x="1130.0" y="474.0" text-anchor="start" font-size="12" fill="#ccccdc" textLength="56.8" lengthAdjust="spacingAndGlyphs">Total: 19.3</text><rect x="752.0" y="486.0" width="14" height="4" rx="1" fill="#C0D8FF"/><text x="774.2" y="492.0" text-anchor="start" font-size="12" fill="#ccccdc" textLength="54.0" lengthAdjust="spacingAndGlyphs">put object</text><text x="835.0" y="492.0" text-anchor="start" font-size="12" fill="#ccccdc" textLength="50.0" lengthAdjust="spacingAndGlyphs">Avg: 8.34</text><text x="892.0" y="492.0" text-anchor="start" font-size="12" fill="#ccccdc" textLength="67.5" lengthAdjust="spacingAndGlyphs">Total: 1.51 K</text>
</svg></div>
<div class="panel" style="left:1322px;top:171px;width:582px;height:258px">
<svg width="582" height="258" viewBox="1322 171 582 258">
<text x="1613.0" y="193.1" text-anchor="middle" font-size="14" fill="#ccccdc" textLength="52.8" lengthAdjust="spacingAndGlyphs" stroke="#ccccdc" stroke-width="0.35">Disk BW</text>
<g stroke="rgba(204,204,220,0.2)" stroke-width="1" shape-rendering="crispEdges"><line x1="1390.0" x2="1879.0" y1="221.0" y2="221.0"/><line x1="1390.0" x2="1879.0" y1="271.7" y2="271.7"/><line x1="1390.0" x2="1879.0" y1="322.3" y2="322.3"/><line x1="1390.0" x2="1879.0" y1="373.0" y2="373.0"/><line x1="1461.3" x2="1461.3" y1="221.0" y2="373.0"/><line x1="1543.2" x2="1543.2" y1="221.0" y2="373.0"/><line x1="1625.1" x2="1625.1" y1="221.0" y2="373.0"/><line x1="1707.0" x2="1707.0" y1="221.0" y2="373.0"/><line x1="1788.9" x2="1788.9" y1="221.0" y2="373.0"/><line x1="1870.8" x2="1870.8" y1="221.0" y2="373.0"/></g>
<text x="1383.8" y="225.2" text-anchor="end" font-size="12" fill="#ccccdc" textLength="52.3" lengthAdjust="spacingAndGlyphs">150 MB/s</text>
<text x="1383.8" y="275.9" text-anchor="end" font-size="12" fill="#ccccdc" textLength="52.3" lengthAdjust="spacingAndGlyphs">100 MB/s</text>
<text x="1383.8" y="326.5" text-anchor="end" font-size="12" fill="#ccccdc" textLength="45.5" lengthAdjust="spacingAndGlyphs">50 MB/s</text>
<text x="1383.8" y="377.2" text-anchor="end" font-size="12" fill="#ccccdc" textLength="34.4" lengthAdjust="spacingAndGlyphs">0 kB/s</text>
<text x="1461.3" y="392.0" text-anchor="middle" font-size="12" fill="#ccccdc" textLength="29.9" lengthAdjust="spacingAndGlyphs">10:45</text>
<text x="1543.2" y="392.0" text-anchor="middle" font-size="12" fill="#ccccdc" textLength="29.9" lengthAdjust="spacingAndGlyphs">10:50</text>
<text x="1625.1" y="392.0" text-anchor="middle" font-size="12" fill="#ccccdc" textLength="29.9" lengthAdjust="spacingAndGlyphs">10:55</text>
<text x="1707.0" y="392.0" text-anchor="middle" font-size="12" fill="#ccccdc" textLength="29.9" lengthAdjust="spacingAndGlyphs">11:00</text>
<text x="1788.9" y="392.0" text-anchor="middle" font-size="12" fill="#ccccdc" textLength="29.9" lengthAdjust="spacingAndGlyphs">11:05</text>
<text x="1870.8" y="392.0" text-anchor="middle" font-size="12" fill="#ccccdc" textLength="29.9" lengthAdjust="spacingAndGlyphs">11:10</text>
<polygon points="1390.2,371.0 1395.4,371.7 1400.6,371.4 1404.5,370.4 1411.0,369.3 1416.2,370.4 1420.8,371.7 1426.7,370.4 1429.9,370.1 1433.8,368.4 1437.1,370.4 1442.3,371.0 1447.5,370.4 1450.1,369.7 1455.3,371.0 1461.8,371.4 1468.3,371.0 1476.1,369.7 1484.0,369.3 1488.5,369.7 1491.1,368.0 1498.3,367.5 1502.2,368.8 1506.1,369.1 1510.7,367.1 1515.2,367.8 1519.1,369.3 1523.0,367.5 1526.9,369.3 1532.1,369.3 1536.0,371.0 1541.2,371.7 1549.1,371.4 1556.9,370.6 1564.7,371.7 1571.2,370.1 1575.8,369.3 1580.3,370.6 1586.8,371.7 1593.3,370.6 1601.1,371.0 1608.3,369.3 1611.6,370.6 1619.4,371.0 1625.9,371.4 1630.0,371.6 1638.0,371.2 1648.6,370.6 1656.6,371.6 1668.5,371.2 1672.5,369.5 1678.5,368.6 1683.1,369.9 1692.4,369.5 1701.7,369.5 1707.0,370.6 1712.3,369.2 1723.0,370.3 1729.0,369.5 1736.3,370.3 1744.2,369.2 1749.5,370.6 1753.5,370.3 1758.8,371.2 1763.5,369.2 1768.1,369.9 1772.1,370.3 1775.4,371.6 1786.7,371.6 1798.7,371.4 1802.7,370.6 1809.3,369.9 1813.3,370.6 1819.9,369.5 1823.9,371.2 1829.2,371.2 1833.2,372.1 1838.5,371.9 1842.5,370.3 1846.5,371.9 1855.8,371.6 1869.1,371.4 1874.4,372.1 1879.0,372.1 1879.0,373.0 1390.2,373.0" fill="#7EB26D" fill-opacity="0.1"/><polygon points="1390.2,363.2 1393.5,361.0 1396.1,362.3 1398.7,364.9 1403.9,362.8 1406.5,369.3 1411.7,362.6 1415.2,369.7 1420.2,359.3 1423.0,369.1 1425.4,364.1 1428.6,362.3 1431.6,368.0 1433.8,367.1 1436.7,357.3 1439.7,370.4 1444.2,366.2 1447.5,369.3 1449.7,368.8 1453.0,363.2 1456.0,367.8 1461.2,352.4 1464.4,367.1 1467.0,370.4 1469.6,366.7 1472.9,370.4 1474.8,369.7 1477.4,361.9 1479.8,361.9 1482.7,365.8 1485.9,357.6 1488.5,357.6 1491.5,362.6 1495.7,359.3 1498.9,360.6 1502.2,355.1 1507.4,361.6 1510.0,355.4 1515.9,350.4 1521.7,358.0 1523.7,358.4 1526.9,351.5 1529.5,352.1 1532.8,358.4 1535.4,353.7 1537.3,353.7 1540.6,361.0 1545.8,355.4 1548.8,361.2 1553.6,354.1 1556.9,358.0 1562.1,357.1 1565.3,358.9 1567.9,358.0 1570.5,355.4 1575.8,359.7 1578.6,348.2 1582.3,357.3 1584.2,358.0 1586.6,356.3 1590.1,359.7 1594.6,357.6 1597.9,357.3 1601.1,358.6 1603.8,356.7 1606.4,357.6 1610.9,354.1 1614.8,358.6 1619.4,353.4 1623.3,359.3 1625.2,359.7 1627.4,355.8 1630.0,358.3 1639.3,357.9 1642.0,359.9 1644.6,364.6 1647.3,359.7 1651.3,358.9 1655.0,352.9 1658.6,359.7 1661.2,360.6 1663.2,358.3 1666.1,369.0 1671.4,355.7 1674.5,364.6 1676.5,363.2 1679.8,355.3 1683.8,358.6 1687.8,362.3 1691.1,356.2 1693.5,356.6 1696.1,350.0 1699.1,354.0 1701.7,353.6 1705.0,357.5 1709.0,359.9 1712.3,356.2 1717.7,359.7 1721.0,356.6 1725.6,356.6 1729.0,359.7 1732.3,355.7 1734.3,355.3 1737.6,361.3 1739.6,361.3 1742.6,357.3 1745.6,359.9 1748.2,357.3 1750.2,358.6 1758.8,369.5 1763.5,367.5 1767.5,368.6 1772.1,366.3 1775.4,369.5 1778.1,366.3 1783.4,369.0 1786.1,366.3 1791.4,369.2 1796.0,369.0 1799.3,371.2 1802.7,367.6 1805.1,365.9 1808.6,369.5 1813.3,366.6 1816.6,369.9 1819.3,368.6 1821.7,361.3 1827.2,369.9 1829.5,316.8 1832.6,310.1 1835.6,350.0 1838.5,360.6 1840.5,361.3 1843.2,336.0 1846.5,324.7 1848.9,341.6 1851.5,303.5 1854.5,319.8 1857.4,304.1 1860.0,273.3 1862.7,292.5 1865.8,289.5 1868.4,291.1 1871.1,367.6 1873.7,367.6 1876.4,369.2 1879.0,368.2 1879.0,373.0 1390.2,373.0" fill="#EAB839" fill-opacity="0.1"/><polyline points="1390.2,371.0 1395.4,371.7 1400.6,371.4 1404.5,370.4 1411.0,369.3 1416.2,370.4 1420.8,371.7 1426.7,370.4 1429.9,370.1 1433.8,368.4 1437.1,370.4 1442.3,371.0 1447.5,370.4 1450.1,369.7 1455.3,371.0 1461.8,371.4 1468.3,371.0 1476.1,369.7 1484.0,369.3 1488.5,369.7 1491.1,368.0 1498.3,367.5 1502.2,368.8 1506.1,369.1 1510.7,367.1 1515.2,367.8 1519.1,369.3 1523.0,367.5 1526.9,369.3 1532.1,369.3 1536.0,371.0 1541.2,371.7 1549.1,371.4 1556.9,370.6 1564.7,371.7 1571.2,370.1 1575.8,369.3 1580.3,370.6 1586.8,371.7 1593.3,370.6 1601.1,371.0 1608.3,369.3 1611.6,370.6 1619.4,371.0 1625.9,371.4 1630.0,371.6 1638.0,371.2 1648.6,370.6 1656.6,371.6 1668.5,371.2 1672.5,369.5 1678.5,368.6 1683.1,369.9 1692.4,369.5 1701.7,369.5 1707.0,370.6 1712.3,369.2 1723.0,370.3 1729.0,369.5 1736.3,370.3 1744.2,369.2 1749.5,370.6 1753.5,370.3 1758.8,371.2 1763.5,369.2 1768.1,369.9 1772.1,370.3 1775.4,371.6 1786.7,371.6 1798.7,371.4 1802.7,370.6 1809.3,369.9 1813.3,370.6 1819.9,369.5 1823.9,371.2 1829.2,371.2 1833.2,372.1 1838.5,371.9 1842.5,370.3 1846.5,371.9 1855.8,371.6 1869.1,371.4 1874.4,372.1 1879.0,372.1" fill="none" stroke="#7EB26D" stroke-width="1.5" stroke-linejoin="round"/><polyline points="1390.2,363.2 1393.5,361.0 1396.1,362.3 1398.7,364.9 1403.9,362.8 1406.5,369.3 1411.7,362.6 1415.2,369.7 1420.2,359.3 1423.0,369.1 1425.4,364.1 1428.6,362.3 1431.6,368.0 1433.8,367.1 1436.7,357.3 1439.7,370.4 1444.2,366.2 1447.5,369.3 1449.7,368.8 1453.0,363.2 1456.0,367.8 1461.2,352.4 1464.4,367.1 1467.0,370.4 1469.6,366.7 1472.9,370.4 1474.8,369.7 1477.4,361.9 1479.8,361.9 1482.7,365.8 1485.9,357.6 1488.5,357.6 1491.5,362.6 1495.7,359.3 1498.9,360.6 1502.2,355.1 1507.4,361.6 1510.0,355.4 1515.9,350.4 1521.7,358.0 1523.7,358.4 1526.9,351.5 1529.5,352.1 1532.8,358.4 1535.4,353.7 1537.3,353.7 1540.6,361.0 1545.8,355.4 1548.8,361.2 1553.6,354.1 1556.9,358.0 1562.1,357.1 1565.3,358.9 1567.9,358.0 1570.5,355.4 1575.8,359.7 1578.6,348.2 1582.3,357.3 1584.2,358.0 1586.6,356.3 1590.1,359.7 1594.6,357.6 1597.9,357.3 1601.1,358.6 1603.8,356.7 1606.4,357.6 1610.9,354.1 1614.8,358.6 1619.4,353.4 1623.3,359.3 1625.2,359.7 1627.4,355.8 1630.0,358.3 1639.3,357.9 1642.0,359.9 1644.6,364.6 1647.3,359.7 1651.3,358.9 1655.0,352.9 1658.6,359.7 1661.2,360.6 1663.2,358.3 1666.1,369.0 1671.4,355.7 1674.5,364.6 1676.5,363.2 1679.8,355.3 1683.8,358.6 1687.8,362.3 1691.1,356.2 1693.5,356.6 1696.1,350.0 1699.1,354.0 1701.7,353.6 1705.0,357.5 1709.0,359.9 1712.3,356.2 1717.7,359.7 1721.0,356.6 1725.6,356.6 1729.0,359.7 1732.3,355.7 1734.3,355.3 1737.6,361.3 1739.6,361.3 1742.6,357.3 1745.6,359.9 1748.2,357.3 1750.2,358.6 1758.8,369.5 1763.5,367.5 1767.5,368.6 1772.1,366.3 1775.4,369.5 1778.1,366.3 1783.4,369.0 1786.1,366.3 1791.4,369.2 1796.0,369.0 1799.3,371.2 1802.7,367.6 1805.1,365.9 1808.6,369.5 1813.3,366.6 1816.6,369.9 1819.3,368.6 1821.7,361.3 1827.2,369.9 1829.5,316.8 1832.6,310.1 1835.6,350.0 1838.5,360.6 1840.5,361.3 1843.2,336.0 1846.5,324.7 1848.9,341.6 1851.5,303.5 1854.5,319.8 1857.4,304.1 1860.0,273.3 1862.7,292.5 1865.8,289.5 1868.4,291.1 1871.1,367.6 1873.7,367.6 1876.4,369.2 1879.0,368.2" fill="none" stroke="#EAB839" stroke-width="1.5" stroke-linejoin="round"/>
<rect x="1341.0" y="409.9" width="14" height="4" rx="1" fill="#7EB26D"/><text x="1363.5" y="415.9" text-anchor="start" font-size="12" fill="#ccccdc" textLength="26.5" lengthAdjust="spacingAndGlyphs">Read</text><text x="1396.8" y="415.9" text-anchor="start" font-size="12" fill="#ccccdc" textLength="82.8" lengthAdjust="spacingAndGlyphs">Avg: 2.38 MB/s</text><rect x="1490.0" y="409.9" width="14" height="4" rx="1" fill="#EAB839"/><text x="1512.0" y="415.9" text-anchor="start" font-size="12" fill="#ccccdc" textLength="28.0" lengthAdjust="spacingAndGlyphs">Write</text><text x="1546.5" y="415.9" text-anchor="start" font-size="12" fill="#ccccdc" textLength="82.8" lengthAdjust="spacingAndGlyphs">Avg: 12.6 MB/s</text><path d="M1899.5,420.5 v4 h-4" fill="none" stroke="#6b6d76" stroke-width="1.3"/>
</svg></div>
<div class="panel" style="left:143px;top:513px;width:582px;height:258px">
<svg width="582" height="258" viewBox="143 513 582 258">
<text x="434.0" y="535.1" text-anchor="middle" font-size="14" fill="#ccccdc" textLength="120.4" lengthAdjust="spacingAndGlyphs" stroke="#ccccdc" stroke-width="0.35">Memory Utilization</text>
<g stroke="rgba(204,204,220,0.2)" stroke-width="1" shape-rendering="crispEdges"><line x1="197.2" x2="699.9" y1="563.1" y2="563.1"/><line x1="197.2" x2="699.9" y1="613.9" y2="613.9"/><line x1="197.2" x2="699.9" y1="664.7" y2="664.7"/><line x1="197.2" x2="699.9" y1="715.5" y2="715.5"/><line x1="270.5" x2="270.5" y1="563.1" y2="715.5"/><line x1="354.7" x2="354.7" y1="563.1" y2="715.5"/><line x1="438.9" x2="438.9" y1="563.1" y2="715.5"/><line x1="523.1" x2="523.1" y1="563.1" y2="715.5"/><line x1="607.3" x2="607.3" y1="563.1" y2="715.5"/><line x1="691.5" x2="691.5" y1="563.1" y2="715.5"/></g>
<text x="191.3" y="567.3" text-anchor="end" font-size="12" fill="#ccccdc" textLength="38.8" lengthAdjust="spacingAndGlyphs">150 GB</text>
<text x="191.3" y="618.1" text-anchor="end" font-size="12" fill="#ccccdc" textLength="38.8" lengthAdjust="spacingAndGlyphs">100 GB</text>
<text x="191.3" y="668.9" text-anchor="end" font-size="12" fill="#ccccdc" textLength="32.1" lengthAdjust="spacingAndGlyphs">50 GB</text>
<text x="191.3" y="719.7" text-anchor="end" font-size="12" fill="#ccccdc" textLength="27.7" lengthAdjust="spacingAndGlyphs">0 MB</text>
<text x="270.5" y="734.5" text-anchor="middle" font-size="12" fill="#ccccdc" textLength="29.9" lengthAdjust="spacingAndGlyphs">10:45</text>
<text x="354.7" y="734.5" text-anchor="middle" font-size="12" fill="#ccccdc" textLength="29.9" lengthAdjust="spacingAndGlyphs">10:50</text>
<text x="438.9" y="734.5" text-anchor="middle" font-size="12" fill="#ccccdc" textLength="29.9" lengthAdjust="spacingAndGlyphs">10:55</text>
<text x="523.1" y="734.5" text-anchor="middle" font-size="12" fill="#ccccdc" textLength="29.9" lengthAdjust="spacingAndGlyphs">11:00</text>
<text x="607.3" y="734.5" text-anchor="middle" font-size="12" fill="#ccccdc" textLength="29.9" lengthAdjust="spacingAndGlyphs">11:05</text>
<text x="691.5" y="734.5" text-anchor="middle" font-size="12" fill="#ccccdc" textLength="29.9" lengthAdjust="spacingAndGlyphs">11:10</text>
<polygon points="197.2,667.0 325.9,665.4 328.5,667.5 332.1,671.6 699.9,668.2 699.9,715.5 197.2,715.5" fill="#7EB26D" fill-opacity="0.1"/><polygon points="197.2,605.8 325.9,604.3 328.5,606.5 332.1,610.1 699.9,606.1 699.9,668.2 332.1,671.6 328.5,667.5 325.9,665.4 197.2,667.0" fill="#EAB839" fill-opacity="0.1"/><polygon points="197.2,605.2 325.9,603.7 328.5,605.9 332.1,609.5 699.9,605.5 699.9,606.1 332.1,610.1 328.5,606.5 325.9,604.3 197.2,605.8" fill="#6ED0E0" fill-opacity="0.1"/><polygon points="197.2,584.3 699.9,584.3 699.9,605.5 332.1,609.5 328.5,605.9 325.9,603.7 197.2,605.2" fill="#EF843C" fill-opacity="0.1"/><polyline points="197.2,667.0 325.9,665.4 328.5,667.5 332.1,671.6 699.9,668.2" fill="none" stroke="#7EB26D" stroke-width="1" stroke-linejoin="round"/><polyline points="197.2,605.8 325.9,604.3 328.5,606.5 332.1,610.1 699.9,606.1" fill="none" stroke="#EAB839" stroke-width="1" stroke-linejoin="round"/><polyline points="197.2,605.2 325.9,603.7 328.5,605.9 332.1,609.5 699.9,605.5" fill="none" stroke="#6ED0E0" stroke-width="1" stroke-linejoin="round"/><polyline points="197.2,584.3 699.9,584.3" fill="none" stroke="#EF843C" stroke-width="1" stroke-linejoin="round"/>
<rect x="162.0" y="751.9" width="14" height="4" rx="1" fill="#7EB26D"/><text x="184.1" y="757.9" text-anchor="start" font-size="12" fill="#ccccdc" textLength="26.9" lengthAdjust="spacingAndGlyphs">Used</text><text x="218.0" y="757.9" text-anchor="start" font-size="12" fill="#ccccdc" textLength="68.8" lengthAdjust="spacingAndGlyphs">Avg: 45.3 GB</text><rect x="297.1" y="751.9" width="14" height="4" rx="1" fill="#EAB839"/><text x="319.2" y="757.9" text-anchor="start" font-size="12" fill="#ccccdc" textLength="40.8" lengthAdjust="spacingAndGlyphs">Cached</text><text x="366.9" y="757.9" text-anchor="start" font-size="12" fill="#ccccdc" textLength="68.6" lengthAdjust="spacingAndGlyphs">Avg: 60.4 GB</text><rect x="446.0" y="751.9" width="14" height="4" rx="1" fill="#6ED0E0"/><text x="468.1" y="757.9" text-anchor="start" font-size="12" fill="#ccccdc" textLength="39.3" lengthAdjust="spacingAndGlyphs">Buffers</text><text x="514.3" y="757.9" text-anchor="start" font-size="12" fill="#ccccdc" textLength="67.7" lengthAdjust="spacingAndGlyphs">Avg: 449 MB</text><rect x="592.9" y="751.9" width="14" height="4" rx="1" fill="#EF843C"/><text x="615.2" y="757.9" text-anchor="start" font-size="12" fill="#ccccdc" textLength="22.7" lengthAdjust="spacingAndGlyphs">Free</text><text x="644.8" y="757.9" text-anchor="start" font-size="12" fill="#ccccdc" textLength="68.6" lengthAdjust="spacingAndGlyphs">Avg: 22.8 GB</text>
</svg></div>
<div class="panel" style="left:733px;top:513px;width:582px;height:258px">
<svg width="582" height="258" viewBox="733 513 582 258">
<text x="1024.0" y="535.1" text-anchor="middle" font-size="14" fill="#ccccdc" textLength="251.0" lengthAdjust="spacingAndGlyphs" stroke="#ccccdc" stroke-width="0.35">GET &amp; HEAD Account/Container/Object</text>
<g stroke="rgba(204,204,220,0.2)" stroke-width="1" shape-rendering="crispEdges"><line x1="762.0" x2="1289.9" y1="563.1" y2="563.1"/><line x1="762.0" x2="1289.9" y1="593.5" y2="593.5"/><line x1="762.0" x2="1289.9" y1="623.9" y2="623.9"/><line x1="762.0" x2="1289.9" y1="654.4" y2="654.4"/><line x1="762.0" x2="1289.9" y1="684.8" y2="684.8"/><line x1="762.0" x2="1289.9" y1="715.2" y2="715.2"/><line x1="838.9" x2="838.9" y1="563.1" y2="715.2"/><line x1="927.4" x2="927.4" y1="563.1" y2="715.2"/><line x1="1015.8" x2="1015.8" y1="563.1" y2="715.2"/><line x1="1104.2" x2="1104.2" y1="563.1" y2="715.2"/><line x1="1192.6" x2="1192.6" y1="563.1" y2="715.2"/><line x1="1281.1" x2="1281.1" y1="563.1" y2="715.2"/></g>
<text x="756.1" y="567.3" text-anchor="end" font-size="12" fill="#ccccdc" textLength="13.5" lengthAdjust="spacingAndGlyphs">25</text>
<text x="756.1" y="597.7" text-anchor="end" font-size="12" fill="#ccccdc" textLength="13.5" lengthAdjust="spacingAndGlyphs">20</text>
<text x="756.1" y="628.1" text-anchor="end" font-size="12" fill="#ccccdc" textLength="13.5" lengthAdjust="spacingAndGlyphs">15</text>
<text x="756.1" y="658.6" text-anchor="end" font-size="12" fill="#ccccdc" textLength="13.5" lengthAdjust="spacingAndGlyphs">10</text>
<text x="756.1" y="689.0" text-anchor="end" font-size="12" fill="#ccccdc" textLength="6.7" lengthAdjust="spacingAndGlyphs">5</text>
<text x="756.1" y="719.4" text-anchor="end" font-size="12" fill="#ccccdc" textLength="6.7" lengthAdjust="spacingAndGlyphs">0</text>
<text x="838.9" y="734.2" text-anchor="middle" font-size="12" fill="#ccccdc" textLength="29.9" lengthAdjust="spacingAndGlyphs">10:45</text>
<text x="927.4" y="734.2" text-anchor="middle" font-size="12" fill="#ccccdc" textLength="29.9" lengthAdjust="spacingAndGlyphs">10:50</text>
<text x="1015.8" y="734.2" text-anchor="middle" font-size="12" fill="#ccccdc" textLength="29.9" lengthAdjust="spacingAndGlyphs">10:55</text>
<text x="1104.2" y="734.2" text-anchor="middle" font-size="12" fill="#ccccdc" textLength="29.9" lengthAdjust="spacingAndGlyphs">11:00</text>
<text x="1192.6" y="734.2" text-anchor="middle" font-size="12" fill="#ccccdc" textLength="29.9" lengthAdjust="spacingAndGlyphs">11:05</text>
<text x="1281.1" y="734.2" text-anchor="middle" font-size="12" fill="#ccccdc" textLength="29.9" lengthAdjust="spacingAndGlyphs">11:10</text>
<polygon points="762.0,714.7 1130.0,714.7 1151.2,714.7 1154.4,655.7 1157.1,594.3 1159.9,596.7 1163.1,599.9 1166.5,606.1 1169.0,634.5 1171.7,601.4 1175.6,595.6 1178.0,598.3 1180.7,594.3 1183.5,597.5 1186.7,593.6 1189.5,597.5 1192.6,589.9 1195.3,591.5 1198.5,597.5 1201.6,597.8 1204.3,574.7 1207.1,581.8 1210.6,603.5 1213.4,591.5 1216.6,588.4 1219.4,591.5 1222.1,578.6 1225.2,577.3 1227.6,621.1 1231.0,714.7 1289.9,714.7 1289.9,715.2 762.0,715.2" fill="#6ED0E0" fill-opacity="0.1"/><polyline points="762.0,714.9 970.0,714.9 972.0,713.6 974.0,714.9 1151.0,714.9 1153.0,713.7 1155.0,714.9 1289.9,714.9" fill="none" stroke="#EAB839" stroke-width="1.2" stroke-linejoin="round"/><polyline points="762.0,714.7 1130.0,714.7 1151.2,714.7 1154.4,655.7 1157.1,594.3 1159.9,596.7 1163.1,599.9 1166.5,606.1 1169.0,634.5 1171.7,601.4 1175.6,595.6 1178.0,598.3 1180.7,594.3 1183.5,597.5 1186.7,593.6 1189.5,597.5 1192.6,589.9 1195.3,591.5 1198.5,597.5 1201.6,597.8 1204.3,574.7 1207.1,581.8 1210.6,603.5 1213.4,591.5 1216.6,588.4 1219.4,591.5 1222.1,578.6 1225.2,577.3 1227.6,621.1 1231.0,714.7 1289.9,714.7" fill="none" stroke="#6ED0E0" stroke-width="1" stroke-linejoin="round"/><line x1="762" x2="1151" y1="714.8000000000001" y2="714.8000000000001" stroke="#7EB26D" stroke-width="1.6"/><line x1="1231" x2="1289.9" y1="714.8000000000001" y2="714.8000000000001" stroke="#7EB26D" stroke-width="1.6"/><line x1="1151" x2="1231" y1="715.0" y2="715.0" stroke="#EAB839" stroke-width="1.4"/><line x1="762" x2="1151" y1="714.4000000000001" y2="714.4000000000001" stroke="#6ED0E0" stroke-width="0.6" opacity="0.7"/><line x1="1231" x2="1289.9" y1="714.4000000000001" y2="714.4000000000001" stroke="#6ED0E0" stroke-width="0.6" opacity="0.7"/>
<rect x="752.1" y="751.9" width="14" height="4" rx="1" fill="#7EB26D"/><text x="774.1" y="757.9" text-anchor="start" font-size="12" fill="#ccccdc" textLength="73.1" lengthAdjust="spacingAndGlyphs">head account</text><text x="854.2" y="757.9" text-anchor="start" font-size="12" fill="#ccccdc" textLength="63.4" lengthAdjust="spacingAndGlyphs">Avg: 0.0138</text><rect x="927.9" y="751.9" width="14" height="4" rx="1" fill="#EAB839"/><text x="950.6" y="757.9" text-anchor="start" font-size="12" fill="#ccccdc" textLength="80.9" lengthAdjust="spacingAndGlyphs">head container</text><text x="1038.5" y="757.9" text-anchor="start" font-size="12" fill="#ccccdc" textLength="63.1" lengthAdjust="spacingAndGlyphs">Avg: 0.0122</text><rect x="1112.2" y="751.9" width="14" height="4" rx="1" fill="#6ED0E0"/><text x="1134.5" y="757.9" text-anchor="start" font-size="12" fill="#ccccdc" textLength="53.5" lengthAdjust="spacingAndGlyphs">get object</text><text x="1194.9" y="757.9" text-anchor="start" font-size="12" fill="#ccccdc" textLength="49.6" lengthAdjust="spacingAndGlyphs">Avg: 2.74</text>
</svg></div>
<div class="panel" style="left:1322px;top:437px;width:582px;height:258px">
<svg width="582" height="258" viewBox="1322 437 582 258">
<text x="1613.0" y="459.1" text-anchor="middle" font-size="14" fill="#ccccdc" textLength="77.9" lengthAdjust="spacingAndGlyphs" stroke="#ccccdc" stroke-width="0.35">Per Disk BW</text>
<g stroke="rgba(204,204,220,0.2)" stroke-width="1" shape-rendering="crispEdges"><line x1="1383.0" x2="1879.0" y1="487.2" y2="487.2"/><line x1="1383.0" x2="1879.0" y1="507.8" y2="507.8"/><line x1="1383.0" x2="1879.0" y1="528.4" y2="528.4"/><line x1="1383.0" x2="1879.0" y1="549.1" y2="549.1"/><line x1="1383.0" x2="1879.0" y1="569.7" y2="569.7"/><line x1="1383.0" x2="1879.0" y1="590.3" y2="590.3"/><line x1="1455.3" x2="1455.3" y1="487.2" y2="590.3"/><line x1="1538.4" x2="1538.4" y1="487.2" y2="590.3"/><line x1="1621.4" x2="1621.4" y1="487.2" y2="590.3"/><line x1="1704.5" x2="1704.5" y1="487.2" y2="590.3"/><line x1="1787.6" x2="1787.6" y1="487.2" y2="590.3"/><line x1="1870.7" x2="1870.7" y1="487.2" y2="590.3"/></g>
<text x="1377.2" y="491.4" text-anchor="end" font-size="12" fill="#ccccdc" textLength="45.5" lengthAdjust="spacingAndGlyphs">25 MB/s</text>
<text x="1377.2" y="512.0" text-anchor="end" font-size="12" fill="#ccccdc" textLength="45.5" lengthAdjust="spacingAndGlyphs">20 MB/s</text>
<text x="1377.2" y="532.6" text-anchor="end" font-size="12" fill="#ccccdc" textLength="45.5" lengthAdjust="spacingAndGlyphs">15 MB/s</text>
<text x="1377.2" y="553.3" text-anchor="end" font-size="12" fill="#ccccdc" textLength="45.5" lengthAdjust="spacingAndGlyphs">10 MB/s</text>
<text x="1377.2" y="573.9" text-anchor="end" font-size="12" fill="#ccccdc" textLength="38.8" lengthAdjust="spacingAndGlyphs">5 MB/s</text>
<text x="1377.2" y="594.5" text-anchor="end" font-size="12" fill="#ccccdc" textLength="34.4" lengthAdjust="spacingAndGlyphs">0 kB/s</text>
<text x="1455.3" y="609.3" text-anchor="middle" font-size="12" fill="#ccccdc" textLength="29.9" lengthAdjust="spacingAndGlyphs">10:45</text>
<text x="1538.4" y="609.3" text-anchor="middle" font-size="12" fill="#ccccdc" textLength="29.9" lengthAdjust="spacingAndGlyphs">10:50</text>
<text x="1621.4" y="609.3" text-anchor="middle" font-size="12" fill="#ccccdc" textLength="29.9" lengthAdjust="spacingAndGlyphs">10:55</text>
<text x="1704.5" y="609.3" text-anchor="middle" font-size="12" fill="#ccccdc" textLength="29.9" lengthAdjust="spacingAndGlyphs">11:00</text>
<text x="1787.6" y="609.3" text-anchor="middle" font-size="12" fill="#ccccdc" textLength="29.9" lengthAdjust="spacingAndGlyphs">11:05</text>
<text x="1870.7" y="609.3" text-anchor="middle" font-size="12" fill="#ccccdc" textLength="29.9" lengthAdjust="spacingAndGlyphs">11:10</text>
<polygon points="1383.0,558.7 1385.3,557.5 1387.6,563.3 1388.6,567.1 1389.9,567.2 1392.2,564.2 1394.5,565.2 1396.8,576.8 1396.9,577.1 1399.1,587.5 1401.5,590.1 1403.8,590.1 1405.2,590.1 1406.1,590.0 1408.4,590.2 1410.7,590.2 1413.0,590.2 1413.5,590.2 1415.3,590.1 1417.6,590.1 1419.9,590.2 1421.8,590.2 1422.2,590.0 1424.5,590.0 1426.8,590.1 1429.1,590.1 1430.1,590.1 1430.2,590.1 1431.4,590.1 1433.8,590.1 1436.1,590.0 1438.4,590.0 1438.4,590.0 1440.7,590.0 1443.0,590.2 1445.3,590.2 1446.7,590.0 1447.6,590.1 1449.9,590.1 1452.2,578.3 1454.5,565.8 1455.0,563.3 1456.8,573.0 1459.1,585.6 1461.4,590.0 1463.3,590.2 1463.7,590.2 1466.1,590.1 1468.4,590.1 1470.7,590.2 1471.6,590.0 1473.0,589.7 1475.3,589.7 1477.6,589.2 1479.9,589.1 1479.9,589.1 1482.2,589.5 1484.5,588.8 1486.8,587.6 1487.0,588.1 1488.2,589.1 1489.1,588.4 1491.4,587.9 1493.7,588.3 1495.5,587.3 1496.0,587.1 1496.5,589.2 1498.3,588.4 1500.7,586.4 1503.0,588.1 1503.0,588.7 1504.8,585.4 1505.3,587.4 1507.6,584.0 1509.9,585.8 1510.8,588.2 1512.2,585.1 1513.1,587.2 1514.5,583.7 1516.8,584.0 1519.1,583.4 1521.4,588.0 1521.4,588.2 1523.7,582.5 1526.0,587.1 1528.3,586.5 1529.7,587.8 1530.0,586.7 1530.6,584.1 1533.0,579.8 1535.3,585.0 1537.6,585.4 1538.0,580.1 1539.9,586.0 1542.2,581.5 1544.5,581.6 1546.3,578.3 1546.8,587.1 1549.1,581.8 1551.4,583.5 1553.7,578.8 1554.6,584.8 1556.0,579.8 1558.3,585.4 1560.6,581.9 1562.9,576.8 1562.9,584.7 1565.3,584.3 1567.6,577.3 1569.9,580.0 1571.2,586.6 1572.2,585.3 1574.5,584.7 1576.8,584.2 1579.1,578.1 1579.5,579.7 1581.4,576.6 1583.7,580.0 1586.0,580.4 1587.8,583.1 1588.3,579.5 1590.6,581.9 1592.9,586.7 1595.2,581.9 1596.1,583.1 1597.5,581.5 1599.9,586.8 1602.2,587.0 1604.4,576.5 1604.5,583.2 1606.8,583.7 1607.4,585.7 1609.1,580.8 1611.4,577.2 1612.7,585.3 1613.7,581.8 1615.7,581.8 1616.0,578.9 1618.3,581.1 1620.6,584.7 1621.0,585.2 1622.9,579.3 1624.0,586.4 1625.2,577.7 1627.5,586.9 1629.8,585.2 1632.2,582.1 1632.3,577.9 1634.5,580.4 1636.8,579.0 1639.1,578.8 1641.4,579.3 1643.7,586.7 1646.0,578.1 1648.3,585.6 1650.6,585.5 1651.9,586.9 1652.9,587.0 1655.2,577.5 1657.5,583.0 1659.8,586.3 1662.1,586.7 1664.5,577.8 1666.8,580.6 1669.1,577.0 1671.4,586.8 1673.7,586.0 1676.0,584.1 1678.3,585.1 1679.4,586.0 1680.6,585.0 1682.9,580.1 1685.2,585.4 1687.5,585.4 1687.8,581.3 1689.8,583.0 1692.1,585.6 1693.5,580.9 1694.4,581.5 1696.0,582.9 1696.7,581.9 1699.0,586.8 1699.1,580.3 1701.4,585.1 1703.7,583.5 1704.4,587.1 1706.0,577.3 1708.3,580.6 1710.6,582.8 1712.6,581.1 1712.9,576.7 1715.2,585.7 1717.5,582.9 1719.8,579.2 1721.0,583.0 1722.1,579.3 1724.4,577.0 1726.7,586.8 1729.0,584.0 1729.3,583.9 1731.4,578.7 1733.6,578.4 1733.7,579.3 1736.0,576.8 1737.6,585.1 1738.3,582.8 1740.6,577.6 1742.9,578.5 1745.2,585.9 1747.0,576.1 1747.5,578.8 1749.5,577.4 1749.8,583.1 1752.1,583.2 1754.4,584.6 1756.7,589.0 1759.0,589.7 1761.3,589.5 1763.7,589.4 1766.0,589.5 1768.3,589.7 1770.6,589.5 1772.9,590.0 1775.2,589.8 1777.5,589.7 1779.8,590.0 1782.1,589.6 1784.4,590.1 1786.7,589.7 1789.0,589.9 1791.3,589.9 1793.6,589.7 1795.9,590.0 1798.3,589.8 1800.6,589.5 1802.9,589.4 1805.2,589.9 1807.5,589.9 1809.8,589.6 1812.1,590.0 1814.4,589.5 1816.7,590.0 1819.0,589.7 1821.3,589.9 1823.6,590.1 1825.9,590.0 1828.2,560.6 1830.6,538.4 1832.9,527.7 1835.2,526.2 1837.5,552.1 1839.8,557.0 1842.1,545.5 1844.4,565.1 1846.7,580.1 1849.0,578.6 1851.3,575.1 1853.6,564.6 1855.9,542.6 1858.2,527.8 1860.5,530.8 1862.9,533.2 1865.2,525.7 1867.5,518.8 1869.8,549.9 1872.1,580.1 1874.4,576.5 1876.7,577.6 1879.0,579.4 1879.0,590.3 1383.0,590.3" fill="#7EB26D" fill-opacity="0.1"/><polygon points="1383.0,590.1 1385.3,590.2 1387.6,590.2 1388.6,590.1 1389.9,590.2 1392.2,590.0 1394.5,590.1 1396.8,590.1 1396.9,590.0 1399.1,590.2 1401.5,590.2 1403.8,590.2 1405.2,590.1 1406.1,590.0 1408.4,590.0 1410.7,590.1 1413.0,590.0 1413.5,590.1 1415.3,590.2 1417.6,590.1 1419.9,590.2 1421.8,590.2 1422.2,590.2 1424.5,590.2 1426.8,590.2 1429.1,590.1 1430.1,590.2 1430.2,590.1 1431.4,590.0 1433.8,590.1 1436.1,590.2 1438.4,590.1 1438.4,590.0 1440.7,590.0 1443.0,590.1 1445.3,590.1 1446.7,590.0 1447.6,590.0 1449.9,590.0 1452.2,590.1 1454.5,590.0 1455.0,590.1 1456.8,590.1 1459.1,590.2 1461.4,590.1 1463.3,590.2 1463.7,590.1 1466.1,590.1 1468.4,590.1 1470.7,590.2 1471.6,590.1 1473.0,589.8 1475.3,589.4 1477.6,588.7 1479.9,588.6 1479.9,589.3 1482.2,588.8 1484.5,588.4 1486.8,587.4 1487.0,588.4 1488.2,586.9 1489.1,587.9 1491.4,588.0 1493.7,587.4 1495.5,587.7 1496.0,585.1 1496.5,588.8 1498.3,587.2 1500.7,588.4 1503.0,585.4 1503.0,587.9 1504.8,587.8 1505.3,586.3 1507.6,585.1 1509.9,583.8 1510.8,585.6 1512.2,586.4 1513.1,585.8 1514.5,582.2 1516.8,586.5 1519.1,587.8 1521.4,581.0 1521.4,584.1 1523.7,586.6 1526.0,586.4 1528.3,579.7 1529.7,580.7 1530.0,586.8 1530.6,581.2 1533.0,585.2 1535.3,582.8 1537.6,580.9 1538.0,586.4 1539.9,577.1 1542.2,583.2 1544.5,585.2 1546.3,578.2 1546.8,585.5 1549.1,584.8 1551.4,575.0 1553.7,574.1 1554.6,568.0 1556.0,567.4 1558.3,573.6 1560.6,575.1 1562.9,568.0 1562.9,569.6 1565.3,571.3 1567.6,565.1 1569.9,574.7 1571.2,570.2 1572.2,577.5 1574.5,568.5 1576.8,570.1 1579.1,576.2 1579.5,580.1 1581.4,577.1 1583.7,575.5 1586.0,576.8 1587.8,585.8 1588.3,580.3 1590.6,584.6 1592.9,579.8 1595.2,574.9 1596.1,576.0 1597.5,583.3 1599.9,579.7 1602.2,582.5 1604.4,581.8 1604.5,574.5 1606.8,559.9 1607.4,561.1 1609.1,570.6 1611.4,577.9 1612.7,575.1 1613.7,572.2 1615.7,564.1 1616.0,566.2 1618.3,579.4 1620.6,576.2 1621.0,578.0 1622.9,565.0 1624.0,562.1 1625.2,569.2 1627.5,584.2 1629.8,569.2 1632.2,560.7 1632.3,565.6 1634.5,570.8 1636.8,579.1 1639.1,578.9 1641.4,577.0 1643.7,578.9 1646.0,575.7 1648.3,574.5 1650.6,564.3 1651.9,551.0 1652.9,562.5 1655.2,580.7 1657.5,581.8 1659.8,578.4 1662.1,582.0 1664.5,582.0 1666.8,576.0 1669.1,576.5 1671.4,578.0 1673.7,576.0 1676.0,581.5 1678.3,578.4 1679.4,583.2 1680.6,582.4 1682.9,585.0 1685.2,576.5 1687.5,575.0 1687.8,582.5 1689.8,581.6 1692.1,563.1 1693.5,548.2 1694.4,552.2 1696.0,565.7 1696.7,574.0 1699.0,550.1 1699.1,544.5 1701.4,573.4 1703.7,575.5 1704.4,581.9 1706.0,580.4 1708.3,583.7 1710.6,582.6 1712.6,581.0 1712.9,582.8 1715.2,577.3 1717.5,585.8 1719.8,578.3 1721.0,576.3 1722.1,582.2 1724.4,583.8 1726.7,584.7 1729.0,585.2 1729.3,576.4 1731.4,570.7 1733.6,562.2 1733.7,557.3 1736.0,571.6 1737.6,582.2 1738.3,585.8 1740.6,581.0 1742.9,581.8 1745.2,574.2 1747.0,581.7 1747.5,574.8 1749.5,575.4 1749.8,579.1 1752.1,586.2 1754.4,584.6 1756.7,589.8 1759.0,587.5 1761.3,589.4 1763.7,589.2 1766.0,584.6 1768.3,588.7 1770.6,587.9 1772.9,581.5 1775.2,580.3 1777.5,587.6 1779.8,587.8 1782.1,581.3 1784.4,588.1 1786.7,587.9 1789.0,582.1 1791.3,582.7 1793.6,588.3 1795.9,588.4 1798.3,583.3 1800.6,588.3 1802.9,588.5 1805.2,585.2 1807.5,585.8 1809.8,588.8 1812.1,587.8 1814.4,588.5 1816.7,590.0 1819.0,589.9 1821.3,589.3 1823.6,589.8 1825.9,589.6 1828.2,563.6 1830.6,546.4 1832.9,554.1 1835.2,576.3 1837.5,586.6 1839.8,589.1 1842.1,572.4 1844.4,549.5 1846.7,551.1 1849.0,560.6 1851.3,536.1 1853.6,545.1 1855.9,551.0 1858.2,527.9 1860.5,511.3 1862.9,519.0 1865.2,522.5 1867.5,529.6 1869.8,572.7 1872.1,589.2 1874.4,589.1 1876.7,588.5 1879.0,588.7 1879.0,590.3 1383.0,590.3" fill="#EAB839" fill-opacity="0.1"/><polygon points="1383.0,590.2 1385.3,588.9 1387.6,578.0 1388.6,573.4 1389.9,579.4 1392.2,590.0 1394.5,583.4 1396.8,570.7 1396.9,570.4 1399.1,582.4 1401.5,590.0 1403.8,577.7 1405.2,569.2 1406.1,573.9 1408.4,587.3 1410.7,582.9 1413.0,560.4 1413.5,555.5 1415.3,572.3 1417.6,590.0 1419.9,581.3 1421.8,571.7 1422.2,573.6 1424.5,585.5 1426.8,589.4 1429.1,583.7 1430.1,581.4 1430.2,581.4 1431.4,584.6 1433.8,590.1 1436.1,584.6 1438.4,574.3 1438.4,574.1 1440.7,584.0 1443.0,590.1 1445.3,582.4 1446.7,577.2 1447.6,580.3 1449.9,588.7 1452.2,582.1 1454.5,558.3 1455.0,553.4 1456.8,571.5 1459.1,590.1 1461.4,582.5 1463.3,574.4 1463.7,576.3 1466.1,586.3 1468.4,588.4 1470.7,576.3 1471.6,571.4 1473.0,578.0 1475.3,589.4 1477.6,577.3 1479.9,555.0 1479.9,555.0 1482.2,576.8 1484.5,588.1 1486.8,573.8 1487.0,571.2 1488.2,562.4 1489.1,570.3 1491.4,586.0 1493.7,582.1 1495.5,566.4 1496.0,562.3 1496.5,560.3 1498.3,573.4 1500.7,587.5 1503.0,570.1 1503.0,568.2 1504.8,553.3 1505.3,554.2 1507.6,575.5 1509.9,583.3 1510.8,575.7 1512.2,567.6 1513.1,567.1 1514.5,569.3 1516.8,587.2 1519.1,578.9 1521.4,577.1 1521.4,575.6 1523.7,581.0 1526.0,581.2 1528.3,565.9 1529.7,559.9 1530.0,555.4 1530.6,560.4 1533.0,580.4 1535.3,581.8 1537.6,563.6 1538.0,560.5 1539.9,571.4 1542.2,577.7 1544.5,569.8 1546.3,555.4 1546.8,566.3 1549.1,579.4 1551.4,576.9 1553.7,566.9 1554.6,562.6 1556.0,572.9 1558.3,586.8 1560.6,578.4 1562.9,569.7 1562.9,571.4 1565.3,576.6 1567.6,583.9 1569.9,579.5 1571.2,567.1 1572.2,574.2 1574.5,580.3 1576.8,573.2 1579.1,548.4 1579.5,546.4 1581.4,564.2 1583.7,583.8 1586.0,576.8 1587.8,568.6 1588.3,565.5 1590.6,582.9 1592.9,575.6 1595.2,575.1 1596.1,571.6 1597.5,574.6 1599.9,587.0 1602.2,581.6 1604.4,565.7 1604.5,568.5 1606.8,577.1 1607.4,581.0 1609.1,578.3 1611.4,574.7 1612.7,567.4 1613.7,569.5 1615.7,574.7 1616.0,577.6 1618.3,577.0 1620.6,573.7 1621.0,571.8 1622.9,576.0 1624.0,579.4 1625.2,577.4 1627.5,576.9 1629.8,586.7 1632.2,578.2 1632.3,579.8 1634.5,580.1 1636.8,576.3 1639.1,586.7 1641.4,581.5 1643.7,582.7 1646.0,575.8 1648.3,585.3 1650.6,580.5 1651.9,585.5 1652.9,578.1 1655.2,581.3 1657.5,578.3 1659.8,583.5 1662.1,576.5 1664.5,587.2 1666.8,584.5 1669.1,578.3 1671.4,576.6 1673.7,577.8 1676.0,583.9 1678.3,586.3 1679.4,578.6 1680.6,578.3 1682.9,586.5 1685.2,575.8 1687.5,580.8 1687.8,586.8 1689.8,581.4 1692.1,583.1 1693.5,586.0 1694.4,576.4 1696.0,575.8 1696.7,585.7 1699.0,581.8 1699.1,583.9 1701.4,579.0 1703.7,585.9 1704.4,583.2 1706.0,582.2 1708.3,581.4 1710.6,581.9 1712.6,579.9 1712.9,575.7 1715.2,575.8 1717.5,576.1 1719.8,577.0 1721.0,584.4 1722.1,584.2 1724.4,581.6 1726.7,579.3 1729.0,579.8 1729.3,582.9 1731.4,575.0 1733.6,583.4 1733.7,587.0 1736.0,586.1 1737.6,584.6 1738.3,578.2 1740.6,576.8 1742.9,586.7 1745.2,584.3 1747.0,584.2 1747.5,577.5 1749.5,576.1 1749.8,583.9 1752.1,587.2 1754.4,584.2 1756.7,588.8 1759.0,589.6 1761.3,589.8 1763.7,589.6 1766.0,589.5 1768.3,589.7 1770.6,589.9 1772.9,589.7 1775.2,589.6 1777.5,589.9 1779.8,589.6 1782.1,590.0 1784.4,589.4 1786.7,590.0 1789.0,589.9 1791.3,589.4 1793.6,589.4 1795.9,589.4 1798.3,589.5 1800.6,589.5 1802.9,589.5 1805.2,589.7 1807.5,590.1 1809.8,589.6 1812.1,589.0 1814.4,577.9 1816.7,583.9 1819.0,590.1 1821.3,589.6 1823.6,589.8 1825.9,589.3 1828.2,547.9 1830.6,538.6 1832.9,558.2 1835.2,580.8 1837.5,583.2 1839.8,584.3 1842.1,565.6 1844.4,532.8 1846.7,529.8 1849.0,539.1 1851.3,509.7 1853.6,526.0 1855.9,527.0 1858.2,515.3 1860.5,510.6 1862.9,524.2 1865.2,524.3 1867.5,524.1 1869.8,574.7 1872.1,589.5 1874.4,589.4 1876.7,589.2 1879.0,588.8 1879.0,590.3 1383.0,590.3" fill="#6ED0E0" fill-opacity="0.1"/><polygon points="1383.0,559.6 1385.3,558.9 1387.6,564.5 1388.6,568.2 1389.9,568.2 1392.2,565.4 1394.5,566.0 1396.8,579.6 1396.9,580.1 1399.1,590.1 1401.5,590.2 1403.8,590.1 1405.2,590.2 1406.1,590.1 1408.4,590.0 1410.7,590.1 1413.0,590.1 1413.5,590.1 1415.3,590.0 1417.6,590.0 1419.9,590.0 1421.8,590.1 1422.2,590.2 1424.5,590.1 1426.8,590.1 1429.1,590.0 1430.1,590.1 1430.2,590.1 1431.4,590.2 1433.8,590.0 1436.1,590.1 1438.4,590.0 1438.4,590.1 1440.7,590.0 1443.0,590.1 1445.3,590.0 1446.7,590.1 1447.6,590.0 1449.9,590.1 1452.2,590.2 1454.5,590.2 1455.0,590.1 1456.8,590.0 1459.1,590.1 1461.4,590.2 1463.3,590.1 1463.7,590.2 1466.1,590.2 1468.4,590.1 1470.7,590.2 1471.6,590.0 1473.0,589.9 1475.3,589.4 1477.6,589.6 1479.9,588.5 1479.9,589.5 1482.2,588.8 1484.5,589.1 1486.8,589.4 1487.0,588.8 1488.2,587.3 1489.1,588.6 1491.4,587.9 1493.7,587.6 1495.5,588.2 1496.0,587.3 1496.5,588.8 1498.3,587.7 1500.7,587.7 1503.0,585.3 1503.0,585.5 1504.8,585.6 1505.3,586.0 1507.6,584.4 1509.9,584.7 1510.8,588.0 1512.2,587.5 1513.1,584.2 1514.5,583.5 1516.8,582.3 1519.1,583.2 1521.4,586.8 1521.4,584.1 1523.7,583.5 1526.0,583.3 1528.3,586.4 1529.7,580.2 1530.0,583.5 1530.6,585.3 1533.0,579.5 1535.3,584.0 1537.6,586.4 1538.0,581.3 1539.9,584.6 1542.2,584.9 1544.5,584.0 1546.3,581.2 1546.8,583.8 1549.1,580.5 1551.4,578.1 1553.7,577.1 1554.6,578.0 1556.0,577.5 1558.3,583.9 1560.6,578.2 1562.9,585.4 1562.9,580.6 1565.3,585.6 1567.6,585.4 1569.9,576.9 1571.2,585.1 1572.2,579.2 1574.5,581.1 1576.8,586.3 1579.1,578.4 1579.5,585.7 1581.4,577.5 1583.7,578.2 1586.0,581.4 1587.8,581.9 1588.3,586.0 1590.6,579.3 1592.9,585.9 1595.2,581.1 1596.1,577.1 1597.5,579.5 1599.9,585.1 1602.2,579.1 1604.4,579.3 1604.5,583.0 1606.8,578.6 1607.4,580.5 1609.1,582.2 1611.4,581.0 1612.7,583.5 1613.7,583.4 1615.7,577.4 1616.0,582.8 1618.3,578.6 1620.6,582.6 1621.0,584.4 1622.9,586.3 1624.0,576.6 1625.2,578.7 1627.5,576.4 1629.8,580.4 1632.2,585.7 1632.3,584.6 1634.5,585.8 1636.8,580.1 1639.1,580.0 1641.4,576.6 1643.7,583.3 1646.0,583.9 1648.3,584.0 1650.6,584.8 1651.9,586.0 1652.9,581.3 1655.2,582.0 1657.5,582.5 1659.8,576.6 1662.1,583.1 1664.5,577.9 1666.8,580.9 1669.1,585.2 1671.4,585.9 1673.7,580.1 1676.0,577.4 1678.3,585.7 1679.4,579.1 1680.6,583.9 1682.9,579.2 1685.2,577.8 1687.5,578.8 1687.8,583.7 1689.8,584.6 1692.1,576.4 1693.5,576.9 1694.4,576.8 1696.0,580.7 1696.7,585.7 1699.0,582.5 1699.1,576.9 1701.4,585.5 1703.7,583.2 1704.4,585.8 1706.0,577.2 1708.3,582.6 1710.6,585.4 1712.6,582.6 1712.9,584.1 1715.2,581.8 1717.5,579.9 1719.8,579.5 1721.0,585.2 1722.1,580.7 1724.4,585.6 1726.7,581.7 1729.0,577.9 1729.3,583.5 1731.4,577.7 1733.6,583.7 1733.7,582.1 1736.0,578.0 1737.6,586.1 1738.3,580.5 1740.6,580.7 1742.9,578.8 1745.2,576.4 1747.0,579.0 1747.5,583.9 1749.5,584.1 1749.8,581.2 1752.1,585.3 1754.4,586.3 1756.7,589.8 1759.0,589.6 1761.3,589.8 1763.7,590.0 1766.0,590.0 1768.3,589.5 1770.6,589.5 1772.9,589.5 1775.2,589.8 1777.5,589.4 1779.8,589.9 1782.1,589.6 1784.4,589.5 1786.7,589.9 1789.0,590.0 1791.3,590.0 1793.6,590.0 1795.9,589.6 1798.3,589.7 1800.6,589.8 1802.9,590.0 1805.2,589.7 1807.5,590.0 1809.8,590.0 1812.1,589.7 1814.4,589.7 1816.7,589.6 1819.0,589.5 1821.3,590.0 1823.6,589.9 1825.9,589.9 1828.2,565.4 1830.6,549.9 1832.9,556.3 1835.2,577.3 1837.5,586.5 1839.8,589.5 1842.1,573.7 1844.4,551.8 1846.7,553.7 1849.0,562.2 1851.3,540.4 1853.6,548.1 1855.9,553.9 1858.2,532.3 1860.5,516.9 1862.9,523.8 1865.2,527.3 1867.5,533.9 1869.8,573.5 1872.1,589.0 1874.4,588.9 1876.7,588.5 1879.0,588.3 1879.0,590.3 1383.0,590.3" fill="#EF843C" fill-opacity="0.1"/><polygon points="1383.0,590.2 1385.3,590.1 1387.6,590.2 1388.6,590.1 1389.9,590.1 1392.2,590.1 1394.5,590.2 1396.8,590.1 1396.9,590.2 1399.1,590.2 1401.5,590.2 1403.8,590.2 1405.2,590.1 1406.1,590.1 1408.4,590.1 1410.7,590.2 1413.0,590.2 1413.5,590.2 1415.3,590.1 1417.6,590.1 1419.9,590.2 1421.8,590.2 1422.2,590.2 1424.5,590.2 1426.8,590.2 1429.1,590.2 1430.1,590.2 1430.2,590.2 1431.4,590.1 1433.8,590.1 1436.1,590.1 1438.4,590.1 1438.4,590.2 1440.7,590.2 1443.0,590.1 1445.3,590.1 1446.7,590.1 1447.6,590.1 1449.9,590.2 1452.2,590.2 1454.5,590.2 1455.0,590.1 1456.8,590.1 1459.1,590.1 1461.4,590.2 1463.3,590.2 1463.7,590.1 1466.1,590.2 1468.4,590.1 1470.7,590.2 1471.6,590.2 1473.0,590.2 1475.3,590.1 1477.6,589.2 1479.9,588.9 1479.9,589.8 1482.2,589.9 1484.5,588.8 1486.8,589.2 1487.0,588.4 1488.2,587.6 1489.1,587.9 1491.4,588.9 1493.7,587.8 1495.5,588.6 1496.0,587.0 1496.5,588.6 1498.3,586.4 1500.7,586.8 1503.0,585.6 1503.0,587.9 1504.8,585.1 1505.3,586.7 1507.6,587.9 1509.9,585.9 1510.8,587.5 1512.2,588.4 1513.1,588.8 1514.5,585.6 1516.8,587.5 1519.1,588.2 1521.4,583.8 1521.4,587.8 1523.7,583.6 1526.0,586.7 1528.3,585.9 1529.7,581.6 1530.0,582.3 1530.6,582.2 1533.0,580.7 1535.3,583.4 1537.6,580.4 1538.0,583.0 1539.9,583.1 1542.2,585.3 1544.5,584.7 1546.3,582.9 1546.8,585.8 1549.1,582.1 1551.4,579.9 1553.7,581.1 1554.6,585.8 1556.0,587.6 1558.3,584.3 1560.6,583.5 1562.9,579.4 1562.9,582.4 1565.3,582.7 1567.6,581.8 1569.9,582.3 1571.2,581.1 1572.2,582.3 1574.5,582.3 1576.8,585.5 1579.1,586.6 1579.5,583.4 1581.4,579.0 1583.7,578.4 1586.0,584.9 1587.8,582.1 1588.3,582.6 1590.6,583.3 1592.9,586.0 1595.2,579.9 1596.1,587.0 1597.5,585.5 1599.9,585.0 1602.2,585.8 1604.4,585.9 1604.5,587.0 1606.8,582.6 1607.4,586.1 1609.1,581.4 1611.4,581.8 1612.7,581.5 1613.7,583.0 1615.7,581.7 1616.0,584.8 1618.3,583.1 1620.6,580.9 1621.0,585.6 1622.9,580.4 1624.0,581.9 1625.2,578.0 1627.5,581.6 1629.8,582.3 1632.2,580.1 1632.3,584.9 1634.5,584.0 1636.8,583.4 1639.1,580.4 1641.4,580.5 1643.7,585.9 1646.0,578.2 1648.3,577.9 1650.6,582.8 1651.9,577.7 1652.9,581.5 1655.2,583.9 1657.5,586.9 1659.8,587.6 1662.1,581.8 1664.5,580.5 1666.8,581.5 1669.1,579.8 1671.4,583.3 1673.7,580.2 1676.0,581.6 1678.3,581.3 1679.4,582.2 1680.6,581.0 1682.9,582.1 1685.2,586.8 1687.5,580.9 1687.8,580.6 1689.8,583.4 1692.1,577.9 1693.5,582.9 1694.4,586.1 1696.0,582.5 1696.7,584.1 1699.0,586.1 1699.1,578.7 1701.4,585.9 1703.7,580.5 1704.4,586.0 1706.0,582.5 1708.3,577.6 1710.6,586.8 1712.6,579.0 1712.9,587.7 1715.2,577.7 1717.5,578.4 1719.8,583.1 1721.0,581.2 1722.1,583.0 1724.4,586.1 1726.7,584.1 1729.0,583.2 1729.3,578.8 1731.4,586.6 1733.6,582.2 1733.7,582.9 1736.0,582.0 1737.6,579.6 1738.3,581.6 1740.6,584.4 1742.9,577.9 1745.2,581.6 1747.0,584.9 1747.5,582.1 1749.5,578.8 1749.8,587.2 1752.1,583.7 1754.4,587.2 1756.7,589.8 1759.0,590.0 1761.3,590.0 1763.7,589.9 1766.0,589.9 1768.3,589.8 1770.6,590.0 1772.9,589.8 1775.2,589.9 1777.5,589.7 1779.8,589.6 1782.1,590.0 1784.4,589.5 1786.7,589.8 1789.0,589.9 1791.3,590.0 1793.6,589.7 1795.9,589.9 1798.3,589.7 1800.6,590.0 1802.9,589.6 1805.2,590.0 1807.5,589.6 1809.8,589.9 1812.1,589.9 1814.4,589.8 1816.7,589.8 1819.0,589.8 1821.3,589.8 1823.6,589.6 1825.9,589.6 1828.2,569.2 1830.6,555.0 1832.9,561.6 1835.2,579.5 1837.5,587.1 1839.8,589.7 1842.1,576.5 1844.4,557.6 1846.7,559.0 1849.0,566.1 1851.3,547.5 1853.6,554.1 1855.9,559.0 1858.2,540.9 1860.5,527.3 1862.9,533.4 1865.2,535.8 1867.5,541.7 1869.8,575.8 1872.1,589.4 1874.4,589.0 1876.7,588.9 1879.0,588.9 1879.0,590.3 1383.0,590.3" fill="#E24D42" fill-opacity="0.1"/><polygon points="1383.0,588.8 1385.3,589.0 1387.6,589.4 1388.6,589.4 1389.9,588.6 1392.2,589.0 1394.5,588.5 1396.8,588.0 1396.9,587.9 1399.1,588.2 1401.5,587.9 1403.8,588.1 1405.2,588.7 1406.1,589.2 1408.4,589.0 1410.7,588.7 1413.0,588.8 1413.5,588.2 1415.3,588.5 1417.6,589.2 1419.9,589.6 1421.8,589.7 1422.2,590.3 1424.5,589.3 1426.8,589.3 1429.1,571.1 1430.1,562.9 1430.2,561.7 1431.4,573.3 1433.8,590.3 1436.1,589.9 1438.4,589.8 1438.4,590.2 1440.7,590.0 1443.0,589.3 1445.3,589.3 1446.7,589.0 1447.6,588.7 1449.9,588.3 1452.2,587.9 1454.5,588.2 1455.0,588.5 1456.8,588.1 1459.1,588.7 1461.4,589.0 1463.3,588.6 1463.7,588.2 1466.1,588.1 1468.4,587.6 1470.7,588.2 1471.6,588.2 1473.0,588.5 1475.3,588.9 1477.6,589.4 1479.9,589.2 1479.9,589.1 1482.2,589.1 1484.5,589.4 1486.8,589.5 1487.0,589.5 1488.2,590.1 1489.1,590.1 1491.4,590.3 1493.7,590.3 1495.5,590.3 1496.0,590.3 1496.5,590.3 1498.3,590.3 1500.7,590.2 1503.0,589.5 1503.0,589.0 1504.8,589.6 1505.3,588.8 1507.6,588.4 1509.9,589.1 1510.8,589.4 1512.2,589.0 1513.1,589.1 1514.5,589.6 1516.8,588.9 1519.1,588.9 1521.4,588.7 1521.4,589.2 1523.7,589.2 1526.0,589.2 1528.3,588.5 1529.7,588.4 1530.0,588.2 1530.6,588.1 1533.0,588.1 1535.3,588.4 1537.6,588.4 1538.0,588.1 1539.9,588.4 1542.2,588.8 1544.5,588.7 1546.3,589.4 1546.8,590.1 1549.1,590.2 1551.4,590.0 1553.7,589.7 1554.6,588.9 1556.0,588.9 1558.3,588.2 1560.6,585.7 1562.9,585.2 1562.9,583.2 1565.3,582.4 1567.6,584.6 1569.9,583.7 1571.2,582.2 1572.2,583.5 1574.5,584.8 1576.8,587.2 1579.1,587.0 1579.5,586.1 1581.4,584.5 1583.7,583.9 1586.0,584.8 1587.8,584.2 1588.3,585.1 1590.6,584.4 1592.9,585.5 1595.2,582.6 1596.1,583.8 1597.5,582.3 1599.9,581.8 1602.2,582.2 1604.4,582.5 1604.5,582.8 1606.8,583.3 1607.4,584.4 1609.1,585.2 1611.4,582.5 1612.7,585.4 1613.7,583.9 1615.7,584.8 1616.0,584.1 1618.3,585.6 1620.6,586.1 1621.0,585.8 1622.9,583.7 1624.0,583.8 1625.2,586.2 1627.5,586.6 1629.8,585.4 1632.2,585.5 1632.3,584.3 1634.5,583.8 1636.8,583.5 1639.1,583.7 1641.4,584.3 1643.7,583.3 1646.0,585.4 1648.3,585.5 1650.6,584.7 1651.9,586.2 1652.9,583.2 1655.2,585.1 1657.5,584.5 1659.8,583.9 1662.1,584.3 1664.5,586.1 1666.8,585.0 1669.1,583.8 1671.4,582.4 1673.7,586.3 1676.0,582.3 1678.3,559.7 1679.4,548.9 1680.6,563.3 1682.9,585.6 1685.2,576.0 1687.5,561.1 1687.8,557.1 1689.8,570.9 1692.1,582.6 1693.5,576.4 1694.4,567.9 1696.0,557.5 1696.7,563.5 1699.0,586.2 1699.1,584.5 1701.4,583.6 1703.7,559.6 1704.4,555.3 1706.0,568.6 1708.3,586.5 1710.6,574.2 1712.6,555.0 1712.9,554.6 1715.2,577.1 1717.5,582.7 1719.8,565.0 1721.0,551.2 1722.1,562.6 1724.4,582.7 1726.7,574.3 1729.0,554.3 1729.3,550.9 1731.4,571.3 1733.6,582.9 1733.7,582.0 1736.0,570.7 1737.6,562.7 1738.3,563.1 1740.6,583.2 1742.9,586.0 1745.2,572.7 1747.0,558.2 1747.5,560.9 1749.5,556.1 1749.8,560.0 1752.1,580.2 1754.4,587.2 1756.7,588.6 1759.0,588.7 1761.3,589.5 1763.7,589.5 1766.0,589.0 1768.3,589.8 1770.6,589.2 1772.9,588.6 1775.2,588.3 1777.5,588.8 1779.8,589.0 1782.1,589.6 1784.4,590.0 1786.7,590.1 1789.0,590.3 1791.3,589.8 1793.6,589.7 1795.9,589.5 1798.3,589.5 1800.6,588.6 1802.9,588.8 1805.2,588.4 1807.5,588.4 1809.8,588.1 1812.1,589.1 1814.4,588.2 1816.7,588.8 1819.0,588.0 1821.3,588.7 1823.6,588.1 1825.9,588.5 1828.2,554.9 1830.6,547.9 1832.9,563.3 1835.2,581.2 1837.5,583.6 1839.8,584.3 1842.1,569.0 1844.4,541.6 1846.7,540.7 1849.0,547.8 1851.3,523.8 1853.6,536.5 1855.9,538.0 1858.2,528.0 1860.5,524.2 1862.9,534.5 1865.2,534.5 1867.5,533.9 1869.8,575.4 1872.1,588.2 1874.4,588.1 1876.7,588.0 1879.0,587.7 1879.0,590.3 1383.0,590.3" fill="#1F78C1" fill-opacity="0.1"/><polygon points="1383.0,589.1 1385.3,588.7 1387.6,588.2 1388.6,588.3 1389.9,584.5 1392.2,577.8 1394.5,585.3 1396.8,586.3 1396.9,585.1 1399.1,585.2 1401.5,585.0 1403.8,584.5 1405.2,584.4 1406.1,585.0 1408.4,574.1 1410.7,578.2 1413.0,584.9 1413.5,584.8 1415.3,580.1 1417.6,575.7 1419.9,585.3 1421.8,586.0 1422.2,586.0 1424.5,585.5 1426.8,585.7 1429.1,585.4 1430.1,584.8 1430.2,585.2 1431.4,584.8 1433.8,586.0 1436.1,586.0 1438.4,586.2 1438.4,586.5 1440.7,586.6 1443.0,585.7 1445.3,585.6 1446.7,585.1 1447.6,585.0 1449.9,585.3 1452.2,584.5 1454.5,585.0 1455.0,585.5 1456.8,584.0 1459.1,583.1 1461.4,583.6 1463.3,581.4 1463.7,580.6 1466.1,580.3 1468.4,579.9 1470.7,578.0 1471.6,577.9 1473.0,579.7 1475.3,580.7 1477.6,581.8 1479.9,584.2 1479.9,585.5 1482.2,583.3 1484.5,581.9 1486.8,581.7 1487.0,581.2 1488.2,581.0 1489.1,581.0 1491.4,581.6 1493.7,579.0 1495.5,579.2 1496.0,577.3 1496.5,579.3 1498.3,579.1 1500.7,579.1 1503.0,576.8 1503.0,579.4 1504.8,577.8 1505.3,578.4 1507.6,581.2 1509.9,582.5 1510.8,582.0 1512.2,582.1 1513.1,582.6 1514.5,580.5 1516.8,579.2 1519.1,579.6 1521.4,581.3 1521.4,579.8 1523.7,580.2 1526.0,582.1 1528.3,582.3 1529.7,579.3 1530.0,579.6 1530.6,579.9 1533.0,579.6 1535.3,576.2 1537.6,577.1 1538.0,576.6 1539.9,576.5 1542.2,575.9 1544.5,578.1 1546.3,580.1 1546.8,580.5 1549.1,579.2 1551.4,574.4 1553.7,571.9 1554.6,568.9 1556.0,568.0 1558.3,563.0 1560.6,565.1 1562.9,562.4 1562.9,564.1 1565.3,564.6 1567.6,570.3 1569.9,567.6 1571.2,571.0 1572.2,567.4 1574.5,568.6 1576.8,569.6 1579.1,571.3 1579.5,571.2 1581.4,572.0 1583.7,572.2 1586.0,572.0 1587.8,576.1 1588.3,575.9 1590.6,578.0 1592.9,578.7 1595.2,575.9 1596.1,574.7 1597.5,573.2 1599.9,570.9 1602.2,571.9 1604.4,574.7 1604.5,575.5 1606.8,569.4 1607.4,566.8 1609.1,575.7 1611.4,576.0 1612.7,572.4 1613.7,572.6 1615.7,561.3 1616.0,562.9 1618.3,571.3 1620.6,570.9 1621.0,574.9 1622.9,575.7 1624.0,568.8 1625.2,573.7 1627.5,574.9 1629.8,573.5 1632.2,564.1 1632.3,560.0 1634.5,571.2 1636.8,571.3 1639.1,570.6 1641.4,573.5 1643.7,576.1 1646.0,574.4 1648.3,574.2 1650.6,568.7 1651.9,552.3 1652.9,559.7 1655.2,563.5 1657.5,565.0 1659.8,563.7 1662.1,565.5 1664.5,567.0 1666.8,566.9 1669.1,568.7 1671.4,570.7 1673.7,572.1 1676.0,572.3 1678.3,576.6 1679.4,571.5 1680.6,572.9 1682.9,573.0 1685.2,575.9 1687.5,574.9 1687.8,576.2 1689.8,576.9 1692.1,567.4 1693.5,546.4 1694.4,557.6 1696.0,573.9 1696.7,573.0 1699.0,544.6 1699.1,544.8 1701.4,568.1 1703.7,571.7 1704.4,570.5 1706.0,575.0 1708.3,574.3 1710.6,573.5 1712.6,569.4 1712.9,571.8 1715.2,570.1 1717.5,571.9 1719.8,574.2 1721.0,578.5 1722.1,574.4 1724.4,574.8 1726.7,575.0 1729.0,577.3 1729.3,574.9 1731.4,578.4 1733.6,566.4 1733.7,566.9 1736.0,578.7 1737.6,577.7 1738.3,577.1 1740.6,575.5 1742.9,577.9 1745.2,578.4 1747.0,580.1 1747.5,578.5 1749.5,578.4 1749.8,574.4 1752.1,577.2 1754.4,578.2 1756.7,582.0 1759.0,580.3 1761.3,580.6 1763.7,579.1 1766.0,579.2 1768.3,576.1 1770.6,575.4 1772.9,575.1 1775.2,576.1 1777.5,578.1 1779.8,578.5 1782.1,579.5 1784.4,578.6 1786.7,578.2 1789.0,577.0 1791.3,580.1 1793.6,582.5 1795.9,584.1 1798.3,581.4 1800.6,581.3 1802.9,579.6 1805.2,580.9 1807.5,581.6 1809.8,584.6 1812.1,586.1 1814.4,587.9 1816.7,587.3 1819.0,588.0 1821.3,588.2 1823.6,588.5 1825.9,588.6 1828.2,554.2 1830.6,545.8 1832.9,562.9 1835.2,582.6 1837.5,584.7 1839.8,585.5 1842.1,569.4 1844.4,540.5 1846.7,538.4 1849.0,546.4 1851.3,520.9 1853.6,534.8 1855.9,535.6 1858.2,525.5 1860.5,521.6 1862.9,533.3 1865.2,533.1 1867.5,532.9 1869.8,577.2 1872.1,590.0 1874.4,589.8 1876.7,589.6 1879.0,589.5 1879.0,590.3 1383.0,590.3" fill="#BA43A9" fill-opacity="0.1"/><polygon points="1383.0,589.3 1385.3,587.8 1387.6,575.1 1388.6,569.7 1389.9,576.6 1392.2,589.2 1394.5,581.4 1396.8,566.4 1396.9,566.0 1399.1,580.2 1401.5,589.3 1403.8,574.6 1405.2,564.7 1406.1,570.3 1408.4,586.1 1410.7,580.7 1413.0,554.2 1413.5,548.4 1415.3,568.2 1417.6,589.3 1419.9,579.1 1421.8,567.6 1422.2,569.8 1424.5,583.8 1426.8,588.4 1429.1,581.8 1430.1,579.1 1430.2,579.2 1431.4,582.7 1433.8,589.3 1436.1,582.8 1438.4,570.6 1438.4,570.5 1440.7,575.5 1443.0,583.0 1445.3,574.5 1446.7,567.5 1447.6,572.7 1449.9,582.9 1452.2,575.5 1454.5,545.6 1455.0,540.0 1456.8,561.4 1459.1,582.7 1461.4,573.4 1463.3,564.6 1463.7,567.9 1466.1,578.3 1468.4,581.9 1470.7,567.8 1471.6,561.1 1473.0,567.2 1475.3,582.7 1477.6,567.5 1479.9,541.6 1479.9,542.0 1482.2,568.8 1484.5,583.3 1486.8,566.0 1487.0,565.2 1488.2,556.2 1489.1,562.5 1491.4,582.3 1493.7,579.0 1495.5,561.3 1496.0,555.6 1496.5,551.8 1498.3,568.0 1500.7,584.4 1503.0,565.9 1503.0,564.9 1504.8,544.4 1505.3,547.2 1507.6,573.2 1509.9,580.3 1510.8,575.0 1512.2,565.0 1513.1,560.6 1514.5,568.2 1516.8,583.2 1519.1,579.9 1521.4,572.9 1521.4,572.3 1523.7,580.5 1526.0,584.0 1528.3,563.8 1529.7,551.4 1530.0,553.4 1530.6,558.8 1533.0,580.7 1535.3,576.8 1537.6,559.5 1538.0,555.6 1539.9,571.3 1542.2,584.9 1544.5,572.7 1546.3,558.4 1546.8,561.7 1549.1,578.7 1551.4,582.2 1553.7,564.4 1554.6,556.9 1556.0,567.3 1558.3,583.4 1560.6,578.4 1562.9,569.2 1562.9,570.2 1565.3,578.0 1567.6,583.4 1569.9,575.0 1571.2,570.2 1572.2,573.2 1574.5,583.4 1576.8,573.9 1579.1,542.1 1579.5,537.4 1581.4,561.4 1583.7,584.1 1586.0,572.1 1587.8,561.8 1588.3,563.3 1590.6,576.8 1592.9,580.3 1595.2,572.7 1596.1,570.4 1597.5,575.7 1599.9,584.9 1602.2,579.9 1604.4,570.2 1604.5,570.6 1606.8,580.0 1607.4,581.5 1609.1,583.5 1611.4,576.8 1612.7,572.1 1613.7,574.7 1615.7,581.2 1616.0,581.7 1618.3,580.7 1620.6,572.5 1621.0,572.9 1622.9,579.7 1624.0,583.5 1625.2,584.2 1627.5,585.7 1629.8,584.5 1632.2,583.7 1632.3,582.9 1634.5,582.2 1636.8,580.9 1639.1,581.8 1641.4,581.0 1643.7,581.4 1646.0,582.8 1648.3,582.4 1650.6,581.6 1651.9,583.1 1652.9,584.1 1655.2,584.7 1657.5,585.4 1659.8,586.5 1662.1,586.4 1664.5,586.4 1666.8,586.2 1669.1,586.3 1671.4,586.2 1673.7,586.2 1676.0,586.2 1678.3,585.4 1679.4,584.5 1680.6,584.8 1682.9,583.5 1685.2,582.3 1687.5,582.0 1687.8,582.8 1689.8,581.5 1692.1,582.2 1693.5,582.6 1694.4,582.0 1696.0,581.5 1696.7,582.5 1699.0,583.5 1699.1,582.9 1701.4,584.2 1703.7,584.1 1704.4,584.2 1706.0,583.3 1708.3,584.5 1710.6,583.7 1712.6,583.4 1712.9,582.8 1715.2,582.6 1717.5,582.6 1719.8,583.7 1721.0,583.7 1722.1,584.5 1724.4,583.7 1726.7,583.1 1729.0,583.4 1729.3,583.5 1731.4,583.5 1733.6,584.3 1733.7,585.5 1736.0,583.5 1737.6,584.8 1738.3,583.1 1740.6,584.2 1742.9,583.0 1745.2,585.0 1747.0,585.7 1747.5,586.3 1749.5,584.3 1749.8,584.3 1752.1,582.5 1754.4,580.9 1756.7,581.0 1759.0,589.3 1761.3,589.3 1763.7,589.3 1766.0,589.3 1768.3,589.3 1770.6,589.3 1772.9,589.3 1775.2,589.3 1777.5,589.3 1779.8,589.3 1782.1,589.3 1784.4,589.3 1786.7,589.3 1789.0,589.3 1791.3,589.3 1793.6,589.3 1795.9,589.3 1798.3,589.3 1800.6,587.7 1802.9,581.4 1805.2,587.0 1807.5,589.3 1809.8,586.4 1812.1,578.9 1814.4,587.1 1816.7,581.7 1819.0,580.6 1821.3,589.3 1823.6,589.3 1825.9,589.1 1828.2,544.1 1830.6,533.7 1832.9,555.1 1835.2,579.7 1837.5,582.3 1839.8,583.3 1842.1,563.1 1844.4,527.1 1846.7,524.4 1849.0,534.4 1851.3,502.5 1853.6,519.9 1855.9,520.8 1858.2,508.3 1860.5,503.4 1862.9,518.1 1865.2,517.8 1867.5,517.5 1869.8,572.9 1872.1,588.8 1874.4,588.6 1876.7,588.4 1879.0,588.2 1879.0,590.3 1383.0,590.3" fill="#705DA0" fill-opacity="0.1"/><polygon points="1383.0,557.7 1385.3,556.5 1387.6,562.3 1388.6,566.1 1389.9,566.2 1392.2,563.2 1394.5,564.1 1396.8,574.7 1396.9,575.0 1399.1,585.3 1401.5,589.5 1403.8,589.5 1405.2,589.5 1406.1,589.5 1408.4,589.5 1410.7,589.5 1413.0,589.5 1413.5,589.5 1415.3,589.5 1417.6,589.5 1419.9,585.3 1421.8,579.8 1422.2,579.8 1424.5,586.6 1426.8,589.5 1429.1,589.5 1430.1,589.5 1430.2,589.5 1431.4,589.5 1433.8,589.5 1436.1,589.5 1438.4,589.5 1438.4,589.5 1440.7,589.5 1443.0,589.5 1445.3,582.1 1446.7,576.3 1447.6,577.5 1449.9,587.0 1452.2,583.4 1454.5,563.5 1455.0,559.4 1456.8,575.1 1459.1,589.5 1461.4,589.5 1463.3,589.5 1463.7,589.5 1466.1,589.5 1468.4,589.5 1470.7,579.9 1471.6,580.8 1473.0,581.1 1475.3,582.2 1477.6,583.6 1479.9,583.3 1479.9,582.9 1482.2,583.8 1484.5,582.2 1486.8,579.3 1487.0,579.2 1488.2,578.6 1489.1,576.2 1491.4,578.6 1493.7,579.4 1495.5,579.4 1496.0,579.8 1496.5,582.4 1498.3,580.7 1500.7,580.1 1503.0,580.8 1503.0,578.4 1504.8,577.3 1505.3,578.3 1507.6,580.8 1509.9,582.3 1510.8,582.3 1512.2,583.6 1513.1,584.2 1514.5,583.5 1516.8,584.2 1519.1,586.3 1521.4,585.9 1521.4,586.1 1523.7,585.5 1526.0,583.9 1528.3,583.1 1529.7,581.2 1530.0,579.8 1530.6,578.5 1533.0,580.0 1535.3,581.1 1537.6,583.3 1538.0,584.0 1539.9,584.7 1542.2,581.9 1544.5,581.0 1546.3,580.7 1546.8,580.6 1549.1,581.3 1551.4,583.3 1553.7,582.4 1554.6,579.7 1556.0,579.3 1558.3,579.2 1560.6,577.4 1562.9,578.5 1562.9,581.0 1565.3,579.4 1567.6,578.2 1569.9,580.9 1571.2,579.9 1572.2,579.2 1574.5,582.2 1576.8,584.8 1579.1,584.3 1579.5,584.4 1581.4,585.0 1583.7,585.1 1586.0,584.9 1587.8,582.9 1588.3,583.7 1590.6,582.2 1592.9,580.8 1595.2,580.9 1596.1,583.5 1597.5,584.1 1599.9,586.1 1602.2,586.8 1604.4,585.3 1604.5,584.2 1606.8,583.6 1607.4,581.7 1609.1,581.5 1611.4,582.4 1612.7,580.7 1613.7,580.4 1615.7,581.0 1616.0,580.3 1618.3,580.0 1620.6,581.8 1621.0,580.7 1622.9,581.3 1624.0,580.0 1625.2,578.7 1627.5,576.9 1629.8,579.4 1632.2,578.5 1632.3,578.3 1634.5,580.2 1636.8,582.5 1639.1,580.7 1641.4,581.5 1643.7,582.9 1646.0,583.3 1648.3,580.7 1650.6,582.2 1651.9,582.6 1652.9,582.3 1655.2,581.7 1657.5,582.9 1659.8,582.2 1662.1,579.5 1664.5,580.1 1666.8,580.0 1669.1,581.8 1671.4,581.8 1673.7,584.0 1676.0,583.8 1678.3,582.9 1679.4,581.4 1680.6,582.8 1682.9,582.0 1685.2,582.3 1687.5,582.3 1687.8,580.6 1689.8,580.0 1692.1,580.2 1693.5,581.5 1694.4,581.0 1696.0,583.4 1696.7,581.6 1699.0,580.4 1699.1,579.9 1701.4,579.5 1703.7,578.7 1704.4,580.0 1706.0,580.8 1708.3,578.5 1710.6,579.9 1712.6,579.9 1712.9,580.4 1715.2,579.4 1717.5,580.9 1719.8,581.4 1721.0,582.3 1722.1,582.5 1724.4,582.6 1726.7,581.6 1729.0,579.5 1729.3,577.1 1731.4,575.6 1733.6,575.7 1733.7,576.0 1736.0,576.6 1737.6,577.0 1738.3,578.6 1740.6,578.6 1742.9,579.9 1745.2,581.8 1747.0,581.4 1747.5,581.9 1749.5,582.9 1749.8,582.7 1752.1,580.9 1754.4,581.9 1756.7,579.0 1759.0,587.7 1761.3,587.0 1763.7,586.4 1766.0,585.8 1768.3,585.1 1770.6,584.5 1772.9,583.9 1775.2,583.3 1777.5,583.5 1779.8,583.7 1782.1,583.9 1784.4,584.1 1786.7,584.3 1789.0,584.4 1791.3,584.6 1793.6,584.8 1795.9,585.0 1798.3,585.2 1800.6,585.5 1802.9,585.9 1805.2,586.3 1807.5,586.8 1809.8,587.2 1812.1,587.7 1814.4,588.1 1816.7,589.5 1819.0,589.5 1821.3,589.5 1823.6,589.5 1825.9,589.4 1828.2,560.0 1830.6,538.0 1832.9,527.3 1835.2,526.2 1837.5,551.9 1839.8,556.4 1842.1,545.3 1844.4,564.6 1846.7,579.7 1849.0,578.4 1851.3,575.0 1853.6,564.6 1855.9,542.3 1858.2,527.4 1860.5,530.4 1862.9,532.7 1865.2,525.6 1867.5,518.4 1869.8,549.7 1872.1,579.6 1874.4,576.4 1876.7,577.7 1879.0,578.9 1879.0,590.3 1383.0,590.3" fill="#508642" fill-opacity="0.1"/><polygon points="1383.0,589.9 1385.3,589.9 1387.6,589.9 1388.6,589.9 1389.9,589.9 1392.2,589.9 1394.5,589.9 1396.8,589.9 1396.9,589.9 1399.1,589.9 1401.5,589.9 1403.8,589.9 1405.2,589.9 1406.1,589.9 1408.4,589.9 1410.7,589.9 1413.0,589.9 1413.5,589.9 1415.3,589.9 1417.6,589.9 1419.9,589.9 1421.8,589.9 1422.2,589.9 1424.5,589.9 1426.8,589.9 1429.1,589.9 1430.1,589.9 1430.2,589.9 1431.4,589.9 1433.8,589.9 1436.1,589.9 1438.4,589.9 1438.4,589.9 1440.7,589.9 1443.0,589.9 1445.3,589.9 1446.7,589.9 1447.6,589.9 1449.9,589.9 1452.2,589.9 1454.5,589.9 1455.0,589.9 1456.8,589.9 1459.1,589.9 1461.4,589.9 1463.3,589.9 1463.7,589.9 1466.1,589.9 1468.4,589.9 1470.7,589.9 1471.6,589.9 1473.0,589.9 1475.3,589.9 1477.6,589.9 1479.9,589.9 1479.9,589.9 1482.2,588.4 1484.5,581.3 1486.8,569.5 1487.0,570.1 1488.2,574.7 1489.1,578.7 1491.4,589.2 1493.7,573.3 1495.5,563.7 1496.0,565.3 1496.5,572.0 1498.3,582.5 1500.7,581.6 1503.0,571.3 1503.0,568.6 1504.8,575.8 1505.3,578.7 1507.6,579.7 1509.9,565.7 1510.8,556.9 1512.2,567.4 1513.1,571.9 1514.5,582.8 1516.8,580.4 1519.1,571.6 1521.4,558.0 1521.4,556.3 1523.7,571.6 1526.0,583.1 1528.3,567.4 1529.7,555.8 1530.0,553.8 1530.6,565.4 1533.0,583.0 1535.3,579.9 1537.6,578.3 1538.0,585.6 1539.9,577.4 1542.2,578.4 1544.5,585.6 1546.3,585.7 1546.8,579.3 1549.1,579.5 1551.4,585.4 1553.7,575.4 1554.6,584.6 1556.0,576.2 1558.3,574.5 1560.6,585.7 1562.9,577.7 1562.9,579.8 1565.3,574.7 1567.6,581.2 1569.9,581.7 1571.2,584.2 1572.2,575.6 1574.5,583.0 1576.8,574.7 1579.1,586.9 1579.5,575.0 1581.4,587.1 1583.7,577.3 1586.0,574.2 1587.8,582.9 1588.3,579.2 1590.6,581.6 1592.9,586.5 1595.2,575.7 1596.1,580.5 1597.5,576.2 1599.9,586.9 1602.2,585.1 1604.4,584.2 1604.5,576.0 1606.8,587.1 1607.4,587.1 1609.1,582.1 1611.4,582.0 1612.7,575.5 1613.7,575.3 1615.7,584.0 1616.0,577.0 1618.3,582.4 1620.6,576.6 1621.0,578.1 1622.9,586.4 1624.0,580.8 1625.2,581.4 1627.5,580.9 1629.8,579.6 1632.2,577.7 1632.3,581.7 1634.5,580.1 1636.8,575.7 1639.1,577.8 1641.4,584.6 1643.7,585.4 1646.0,583.5 1648.3,573.9 1650.6,581.9 1651.9,574.9 1652.9,573.7 1655.2,577.5 1657.5,582.1 1659.8,576.8 1662.1,580.2 1664.5,573.9 1666.8,580.2 1669.1,578.3 1671.4,577.6 1673.7,578.4 1676.0,584.8 1678.3,579.3 1679.4,581.3 1680.6,577.7 1682.9,576.3 1685.2,584.4 1687.5,582.1 1687.8,583.7 1689.8,573.6 1692.1,580.3 1693.5,580.9 1694.4,573.6 1696.0,576.2 1696.7,575.1 1699.0,580.2 1699.1,585.5 1701.4,582.0 1703.7,586.1 1704.4,581.6 1706.0,580.9 1708.3,580.5 1710.6,573.3 1712.6,579.7 1712.9,585.0 1715.2,584.8 1717.5,577.6 1719.8,579.9 1721.0,581.4 1722.1,580.2 1724.4,581.4 1726.7,577.6 1729.0,578.8 1729.3,586.6 1731.4,580.2 1733.6,583.7 1733.7,578.9 1736.0,580.7 1737.6,576.4 1738.3,573.4 1740.6,576.6 1742.9,578.4 1745.2,580.0 1747.0,585.7 1747.5,576.8 1749.5,584.5 1749.8,581.8 1752.1,582.0 1754.4,587.3 1756.7,588.4 1759.0,587.0 1761.3,585.6 1763.7,589.0 1766.0,583.8 1768.3,582.8 1770.6,588.1 1772.9,580.3 1775.2,579.3 1777.5,587.4 1779.8,579.5 1782.1,587.9 1784.4,587.6 1786.7,579.4 1789.0,588.0 1791.3,587.5 1793.6,581.4 1795.9,588.6 1798.3,588.4 1800.6,584.2 1802.9,588.4 1805.2,585.5 1807.5,586.3 1809.8,589.0 1812.1,587.9 1814.4,588.6 1816.7,589.3 1819.0,589.0 1821.3,589.3 1823.6,588.9 1825.9,588.9 1828.2,563.1 1830.6,546.0 1832.9,553.7 1835.2,575.7 1837.5,585.8 1839.8,589.3 1842.1,571.9 1844.4,548.6 1846.7,550.9 1849.0,559.7 1851.3,536.1 1853.6,544.3 1855.9,550.4 1858.2,527.6 1860.5,510.6 1862.9,518.4 1865.2,522.1 1867.5,529.3 1869.8,571.9 1872.1,588.7 1874.4,588.9 1876.7,588.3 1879.0,588.2 1879.0,590.3 1383.0,590.3" fill="#CCA300" fill-opacity="0.1"/><polyline points="1383.0,558.7 1385.3,557.5 1387.6,563.3 1388.6,567.1 1389.9,567.2 1392.2,564.2 1394.5,565.2 1396.8,576.8 1396.9,577.1 1399.1,587.5 1401.5,590.1 1403.8,590.1 1405.2,590.1 1406.1,590.0 1408.4,590.2 1410.7,590.2 1413.0,590.2 1413.5,590.2 1415.3,590.1 1417.6,590.1 1419.9,590.2 1421.8,590.2 1422.2,590.0 1424.5,590.0 1426.8,590.1 1429.1,590.1 1430.1,590.1 1430.2,590.1 1431.4,590.1 1433.8,590.1 1436.1,590.0 1438.4,590.0 1438.4,590.0 1440.7,590.0 1443.0,590.2 1445.3,590.2 1446.7,590.0 1447.6,590.1 1449.9,590.1 1452.2,578.3 1454.5,565.8 1455.0,563.3 1456.8,573.0 1459.1,585.6 1461.4,590.0 1463.3,590.2 1463.7,590.2 1466.1,590.1 1468.4,590.1 1470.7,590.2 1471.6,590.0 1473.0,589.7 1475.3,589.7 1477.6,589.2 1479.9,589.1 1479.9,589.1 1482.2,589.5 1484.5,588.8 1486.8,587.6 1487.0,588.1 1488.2,589.1 1489.1,588.4 1491.4,587.9 1493.7,588.3 1495.5,587.3 1496.0,587.1 1496.5,589.2 1498.3,588.4 1500.7,586.4 1503.0,588.1 1503.0,588.7 1504.8,585.4 1505.3,587.4 1507.6,584.0 1509.9,585.8 1510.8,588.2 1512.2,585.1 1513.1,587.2 1514.5,583.7 1516.8,584.0 1519.1,583.4 1521.4,588.0 1521.4,588.2 1523.7,582.5 1526.0,587.1 1528.3,586.5 1529.7,587.8 1530.0,586.7 1530.6,584.1 1533.0,579.8 1535.3,585.0 1537.6,585.4 1538.0,580.1 1539.9,586.0 1542.2,581.5 1544.5,581.6 1546.3,578.3 1546.8,587.1 1549.1,581.8 1551.4,583.5 1553.7,578.8 1554.6,584.8 1556.0,579.8 1558.3,585.4 1560.6,581.9 1562.9,576.8 1562.9,584.7 1565.3,584.3 1567.6,577.3 1569.9,580.0 1571.2,586.6 1572.2,585.3 1574.5,584.7 1576.8,584.2 1579.1,578.1 1579.5,579.7 1581.4,576.6 1583.7,580.0 1586.0,580.4 1587.8,583.1 1588.3,579.5 1590.6,581.9 1592.9,586.7 1595.2,581.9 1596.1,583.1 1597.5,581.5 1599.9,586.8 1602.2,587.0 1604.4,576.5 1604.5,583.2 1606.8,583.7 1607.4,585.7 1609.1,580.8 1611.4,577.2 1612.7,585.3 1613.7,581.8 1615.7,581.8 1616.0,578.9 1618.3,581.1 1620.6,584.7 1621.0,585.2 1622.9,579.3 1624.0,586.4 1625.2,577.7 1627.5,586.9 1629.8,585.2 1632.2,582.1 1632.3,577.9 1634.5,580.4 1636.8,579.0 1639.1,578.8 1641.4,579.3 1643.7,586.7 1646.0,578.1 1648.3,585.6 1650.6,585.5 1651.9,586.9 1652.9,587.0 1655.2,577.5 1657.5,583.0 1659.8,586.3 1662.1,586.7 1664.5,577.8 1666.8,580.6 1669.1,577.0 1671.4,586.8 1673.7,586.0 1676.0,584.1 1678.3,585.1 1679.4,586.0 1680.6,585.0 1682.9,580.1 1685.2,585.4 1687.5,585.4 1687.8,581.3 1689.8,583.0 1692.1,585.6 1693.5,580.9 1694.4,581.5 1696.0,582.9 1696.7,581.9 1699.0,586.8 1699.1,580.3 1701.4,585.1 1703.7,583.5 1704.4,587.1 1706.0,577.3 1708.3,580.6 1710.6,582.8 1712.6,581.1 1712.9,576.7 1715.2,585.7 1717.5,582.9 1719.8,579.2 1721.0,583.0 1722.1,579.3 1724.4,577.0 1726.7,586.8 1729.0,584.0 1729.3,583.9 1731.4,578.7 1733.6,578.4 1733.7,579.3 1736.0,576.8 1737.6,585.1 1738.3,582.8 1740.6,577.6 1742.9,578.5 1745.2,585.9 1747.0,576.1 1747.5,578.8 1749.5,577.4 1749.8,583.1 1752.1,583.2 1754.4,584.6 1756.7,589.0 1759.0,589.7 1761.3,589.5 1763.7,589.4 1766.0,589.5 1768.3,589.7 1770.6,589.5 1772.9,590.0 1775.2,589.8 1777.5,589.7 1779.8,590.0 1782.1,589.6 1784.4,590.1 1786.7,589.7 1789.0,589.9 1791.3,589.9 1793.6,589.7 1795.9,590.0 1798.3,589.8 1800.6,589.5 1802.9,589.4 1805.2,589.9 1807.5,589.9 1809.8,589.6 1812.1,590.0 1814.4,589.5 1816.7,590.0 1819.0,589.7 1821.3,589.9 1823.6,590.1 1825.9,590.0 1828.2,560.6 1830.6,538.4 1832.9,527.7 1835.2,526.2 1837.5,552.1 1839.8,557.0 1842.1,545.5 1844.4,565.1 1846.7,580.1 1849.0,578.6 1851.3,575.1 1853.6,564.6 1855.9,542.6 1858.2,527.8 1860.5,530.8 1862.9,533.2 1865.2,525.7 1867.5,518.8 1869.8,549.9 1872.1,580.1 1874.4,576.5 1876.7,577.6 1879.0,579.4" fill="none" stroke="#7EB26D" stroke-width="1" stroke-linejoin="round"/><polyline points="1383.0,590.1 1385.3,590.2 1387.6,590.2 1388.6,590.1 1389.9,590.2 1392.2,590.0 1394.5,590.1 1396.8,590.1 1396.9,590.0 1399.1,590.2 1401.5,590.2 1403.8,590.2 1405.2,590.1 1406.1,590.0 1408.4,590.0 1410.7,590.1 1413.0,590.0 1413.5,590.1 1415.3,590.2 1417.6,590.1 1419.9,590.2 1421.8,590.2 1422.2,590.2 1424.5,590.2 1426.8,590.2 1429.1,590.1 1430.1,590.2 1430.2,590.1 1431.4,590.0 1433.8,590.1 1436.1,590.2 1438.4,590.1 1438.4,590.0 1440.7,590.0 1443.0,590.1 1445.3,590.1 1446.7,590.0 1447.6,590.0 1449.9,590.0 1452.2,590.1 1454.5,590.0 1455.0,590.1 1456.8,590.1 1459.1,590.2 1461.4,590.1 1463.3,590.2 1463.7,590.1 1466.1,590.1 1468.4,590.1 1470.7,590.2 1471.6,590.1 1473.0,589.8 1475.3,589.4 1477.6,588.7 1479.9,588.6 1479.9,589.3 1482.2,588.8 1484.5,588.4 1486.8,587.4 1487.0,588.4 1488.2,586.9 1489.1,587.9 1491.4,588.0 1493.7,587.4 1495.5,587.7 1496.0,585.1 1496.5,588.8 1498.3,587.2 1500.7,588.4 1503.0,585.4 1503.0,587.9 1504.8,587.8 1505.3,586.3 1507.6,585.1 1509.9,583.8 1510.8,585.6 1512.2,586.4 1513.1,585.8 1514.5,582.2 1516.8,586.5 1519.1,587.8 1521.4,581.0 1521.4,584.1 1523.7,586.6 1526.0,586.4 1528.3,579.7 1529.7,580.7 1530.0,586.8 1530.6,581.2 1533.0,585.2 1535.3,582.8 1537.6,580.9 1538.0,586.4 1539.9,577.1 1542.2,583.2 1544.5,585.2 1546.3,578.2 1546.8,585.5 1549.1,584.8 1551.4,575.0 1553.7,574.1 1554.6,568.0 1556.0,567.4 1558.3,573.6 1560.6,575.1 1562.9,568.0 1562.9,569.6 1565.3,571.3 1567.6,565.1 1569.9,574.7 1571.2,570.2 1572.2,577.5 1574.5,568.5 1576.8,570.1 1579.1,576.2 1579.5,580.1 1581.4,577.1 1583.7,575.5 1586.0,576.8 1587.8,585.8 1588.3,580.3 1590.6,584.6 1592.9,579.8 1595.2,574.9 1596.1,576.0 1597.5,583.3 1599.9,579.7 1602.2,582.5 1604.4,581.8 1604.5,574.5 1606.8,559.9 1607.4,561.1 1609.1,570.6 1611.4,577.9 1612.7,575.1 1613.7,572.2 1615.7,564.1 1616.0,566.2 1618.3,579.4 1620.6,576.2 1621.0,578.0 1622.9,565.0 1624.0,562.1 1625.2,569.2 1627.5,584.2 1629.8,569.2 1632.2,560.7 1632.3,565.6 1634.5,570.8 1636.8,579.1 1639.1,578.9 1641.4,577.0 1643.7,578.9 1646.0,575.7 1648.3,574.5 1650.6,564.3 1651.9,551.0 1652.9,562.5 1655.2,580.7 1657.5,581.8 1659.8,578.4 1662.1,582.0 1664.5,582.0 1666.8,576.0 1669.1,576.5 1671.4,578.0 1673.7,576.0 1676.0,581.5 1678.3,578.4 1679.4,583.2 1680.6,582.4 1682.9,585.0 1685.2,576.5 1687.5,575.0 1687.8,582.5 1689.8,581.6 1692.1,563.1 1693.5,548.2 1694.4,552.2 1696.0,565.7 1696.7,574.0 1699.0,550.1 1699.1,544.5 1701.4,573.4 1703.7,575.5 1704.4,581.9 1706.0,580.4 1708.3,583.7 1710.6,582.6 1712.6,581.0 1712.9,582.8 1715.2,577.3 1717.5,585.8 1719.8,578.3 1721.0,576.3 1722.1,582.2 1724.4,583.8 1726.7,584.7 1729.0,585.2 1729.3,576.4 1731.4,570.7 1733.6,562.2 1733.7,557.3 1736.0,571.6 1737.6,582.2 1738.3,585.8 1740.6,581.0 1742.9,581.8 1745.2,574.2 1747.0,581.7 1747.5,574.8 1749.5,575.4 1749.8,579.1 1752.1,586.2 1754.4,584.6 1756.7,589.8 1759.0,587.5 1761.3,589.4 1763.7,589.2 1766.0,584.6 1768.3,588.7 1770.6,587.9 1772.9,581.5 1775.2,580.3 1777.5,587.6 1779.8,587.8 1782.1,581.3 1784.4,588.1 1786.7,587.9 1789.0,582.1 1791.3,582.7 1793.6,588.3 1795.9,588.4 1798.3,583.3 1800.6,588.3 1802.9,588.5 1805.2,585.2 1807.5,585.8 1809.8,588.8 1812.1,587.8 1814.4,588.5 1816.7,590.0 1819.0,589.9 1821.3,589.3 1823.6,589.8 1825.9,589.6 1828.2,563.6 1830.6,546.4 1832.9,554.1 1835.2,576.3 1837.5,586.6 1839.8,589.1 1842.1,572.4 1844.4,549.5 1846.7,551.1 1849.0,560.6 1851.3,536.1 1853.6,545.1 1855.9,551.0 1858.2,527.9 1860.5,511.3 1862.9,519.0 1865.2,522.5 1867.5,529.6 1869.8,572.7 1872.1,589.2 1874.4,589.1 1876.7,588.5 1879.0,588.7" fill="none" stroke="#EAB839" stroke-width="1" stroke-linejoin="round"/><polyline points="1383.0,590.2 1385.3,588.9 1387.6,578.0 1388.6,573.4 1389.9,579.4 1392.2,590.0 1394.5,583.4 1396.8,570.7 1396.9,570.4 1399.1,582.4 1401.5,590.0 1403.8,577.7 1405.2,569.2 1406.1,573.9 1408.4,587.3 1410.7,582.9 1413.0,560.4 1413.5,555.5 1415.3,572.3 1417.6,590.0 1419.9,581.3 1421.8,571.7 1422.2,573.6 1424.5,585.5 1426.8,589.4 1429.1,583.7 1430.1,581.4 1430.2,581.4 1431.4,584.6 1433.8,590.1 1436.1,584.6 1438.4,574.3 1438.4,574.1 1440.7,584.0 1443.0,590.1 1445.3,582.4 1446.7,577.2 1447.6,580.3 1449.9,588.7 1452.2,582.1 1454.5,558.3 1455.0,553.4 1456.8,571.5 1459.1,590.1 1461.4,582.5 1463.3,574.4 1463.7,576.3 1466.1,586.3 1468.4,588.4 1470.7,576.3 1471.6,571.4 1473.0,578.0 1475.3,589.4 1477.6,577.3 1479.9,555.0 1479.9,555.0 1482.2,576.8 1484.5,588.1 1486.8,573.8 1487.0,571.2 1488.2,562.4 1489.1,570.3 1491.4,586.0 1493.7,582.1 1495.5,566.4 1496.0,562.3 1496.5,560.3 1498.3,573.4 1500.7,587.5 1503.0,570.1 1503.0,568.2 1504.8,553.3 1505.3,554.2 1507.6,575.5 1509.9,583.3 1510.8,575.7 1512.2,567.6 1513.1,567.1 1514.5,569.3 1516.8,587.2 1519.1,578.9 1521.4,577.1 1521.4,575.6 1523.7,581.0 1526.0,581.2 1528.3,565.9 1529.7,559.9 1530.0,555.4 1530.6,560.4 1533.0,580.4 1535.3,581.8 1537.6,563.6 1538.0,560.5 1539.9,571.4 1542.2,577.7 1544.5,569.8 1546.3,555.4 1546.8,566.3 1549.1,579.4 1551.4,576.9 1553.7,566.9 1554.6,562.6 1556.0,572.9 1558.3,586.8 1560.6,578.4 1562.9,569.7 1562.9,571.4 1565.3,576.6 1567.6,583.9 1569.9,579.5 1571.2,567.1 1572.2,574.2 1574.5,580.3 1576.8,573.2 1579.1,548.4 1579.5,546.4 1581.4,564.2 1583.7,583.8 1586.0,576.8 1587.8,568.6 1588.3,565.5 1590.6,582.9 1592.9,575.6 1595.2,575.1 1596.1,571.6 1597.5,574.6 1599.9,587.0 1602.2,581.6 1604.4,565.7 1604.5,568.5 1606.8,577.1 1607.4,581.0 1609.1,578.3 1611.4,574.7 1612.7,567.4 1613.7,569.5 1615.7,574.7 1616.0,577.6 1618.3,577.0 1620.6,573.7 1621.0,571.8 1622.9,576.0 1624.0,579.4 1625.2,577.4 1627.5,576.9 1629.8,586.7 1632.2,578.2 1632.3,579.8 1634.5,580.1 1636.8,576.3 1639.1,586.7 1641.4,581.5 1643.7,582.7 1646.0,575.8 1648.3,585.3 1650.6,580.5 1651.9,585.5 1652.9,578.1 1655.2,581.3 1657.5,578.3 1659.8,583.5 1662.1,576.5 1664.5,587.2 1666.8,584.5 1669.1,578.3 1671.4,576.6 1673.7,577.8 1676.0,583.9 1678.3,586.3 1679.4,578.6 1680.6,578.3 1682.9,586.5 1685.2,575.8 1687.5,580.8 1687.8,586.8 1689.8,581.4 1692.1,583.1 1693.5,586.0 1694.4,576.4 1696.0,575.8 1696.7,585.7 1699.0,581.8 1699.1,583.9 1701.4,579.0 1703.7,585.9 1704.4,583.2 1706.0,582.2 1708.3,581.4 1710.6,581.9 1712.6,579.9 1712.9,575.7 1715.2,575.8 1717.5,576.1 1719.8,577.0 1721.0,584.4 1722.1,584.2 1724.4,581.6 1726.7,579.3 1729.0,579.8 1729.3,582.9 1731.4,575.0 1733.6,583.4 1733.7,587.0 1736.0,586.1 1737.6,584.6 1738.3,578.2 1740.6,576.8 1742.9,586.7 1745.2,584.3 1747.0,584.2 1747.5,577.5 1749.5,576.1 1749.8,583.9 1752.1,587.2 1754.4,584.2 1756.7,588.8 1759.0,589.6 1761.3,589.8 1763.7,589.6 1766.0,589.5 1768.3,589.7 1770.6,589.9 1772.9,589.7 1775.2,589.6 1777.5,589.9 1779.8,589.6 1782.1,590.0 1784.4,589.4 1786.7,590.0 1789.0,589.9 1791.3,589.4 1793.6,589.4 1795.9,589.4 1798.3,589.5 1800.6,589.5 1802.9,589.5 1805.2,589.7 1807.5,590.1 1809.8,589.6 1812.1,589.0 1814.4,577.9 1816.7,583.9 1819.0,590.1 1821.3,589.6 1823.6,589.8 1825.9,589.3 1828.2,547.9 1830.6,538.6 1832.9,558.2 1835.2,580.8 1837.5,583.2 1839.8,584.3 1842.1,565.6 1844.4,532.8 1846.7,529.8 1849.0,539.1 1851.3,509.7 1853.6,526.0 1855.9,527.0 1858.2,515.3 1860.5,510.6 1862.9,524.2 1865.2,524.3 1867.5,524.1 1869.8,574.7 1872.1,589.5 1874.4,589.4 1876.7,589.2 1879.0,588.8" fill="none" stroke="#6ED0E0" stroke-width="1" stroke-linejoin="round"/><polyline points="1383.0,559.6 1385.3,558.9 1387.6,564.5 1388.6,568.2 1389.9,568.2 1392.2,565.4 1394.5,566.0 1396.8,579.6 1396.9,580.1 1399.1,590.1 1401.5,590.2 1403.8,590.1 1405.2,590.2 1406.1,590.1 1408.4,590.0 1410.7,590.1 1413.0,590.1 1413.5,590.1 1415.3,590.0 1417.6,590.0 1419.9,590.0 1421.8,590.1 1422.2,590.2 1424.5,590.1 1426.8,590.1 1429.1,590.0 1430.1,590.1 1430.2,590.1 1431.4,590.2 1433.8,590.0 1436.1,590.1 1438.4,590.0 1438.4,590.1 1440.7,590.0 1443.0,590.1 1445.3,590.0 1446.7,590.1 1447.6,590.0 1449.9,590.1 1452.2,590.2 1454.5,590.2 1455.0,590.1 1456.8,590.0 1459.1,590.1 1461.4,590.2 1463.3,590.1 1463.7,590.2 1466.1,590.2 1468.4,590.1 1470.7,590.2 1471.6,590.0 1473.0,589.9 1475.3,589.4 1477.6,589.6 1479.9,588.5 1479.9,589.5 1482.2,588.8 1484.5,589.1 1486.8,589.4 1487.0,588.8 1488.2,587.3 1489.1,588.6 1491.4,587.9 1493.7,587.6 1495.5,588.2 1496.0,587.3 1496.5,588.8 1498.3,587.7 1500.7,587.7 1503.0,585.3 1503.0,585.5 1504.8,585.6 1505.3,586.0 1507.6,584.4 1509.9,584.7 1510.8,588.0 1512.2,587.5 1513.1,584.2 1514.5,583.5 1516.8,582.3 1519.1,583.2 1521.4,586.8 1521.4,584.1 1523.7,583.5 1526.0,583.3 1528.3,586.4 1529.7,580.2 1530.0,583.5 1530.6,585.3 1533.0,579.5 1535.3,584.0 1537.6,586.4 1538.0,581.3 1539.9,584.6 1542.2,584.9 1544.5,584.0 1546.3,581.2 1546.8,583.8 1549.1,580.5 1551.4,578.1 1553.7,577.1 1554.6,578.0 1556.0,577.5 1558.3,583.9 1560.6,578.2 1562.9,585.4 1562.9,580.6 1565.3,585.6 1567.6,585.4 1569.9,576.9 1571.2,585.1 1572.2,579.2 1574.5,581.1 1576.8,586.3 1579.1,578.4 1579.5,585.7 1581.4,577.5 1583.7,578.2 1586.0,581.4 1587.8,581.9 1588.3,586.0 1590.6,579.3 1592.9,585.9 1595.2,581.1 1596.1,577.1 1597.5,579.5 1599.9,585.1 1602.2,579.1 1604.4,579.3 1604.5,583.0 1606.8,578.6 1607.4,580.5 1609.1,582.2 1611.4,581.0 1612.7,583.5 1613.7,583.4 1615.7,577.4 1616.0,582.8 1618.3,578.6 1620.6,582.6 1621.0,584.4 1622.9,586.3 1624.0,576.6 1625.2,578.7 1627.5,576.4 1629.8,580.4 1632.2,585.7 1632.3,584.6 1634.5,585.8 1636.8,580.1 1639.1,580.0 1641.4,576.6 1643.7,583.3 1646.0,583.9 1648.3,584.0 1650.6,584.8 1651.9,586.0 1652.9,581.3 1655.2,582.0 1657.5,582.5 1659.8,576.6 1662.1,583.1 1664.5,577.9 1666.8,580.9 1669.1,585.2 1671.4,585.9 1673.7,580.1 1676.0,577.4 1678.3,585.7 1679.4,579.1 1680.6,583.9 1682.9,579.2 1685.2,577.8 1687.5,578.8 1687.8,583.7 1689.8,584.6 1692.1,576.4 1693.5,576.9 1694.4,576.8 1696.0,580.7 1696.7,585.7 1699.0,582.5 1699.1,576.9 1701.4,585.5 1703.7,583.2 1704.4,585.8 1706.0,577.2 1708.3,582.6 1710.6,585.4 1712.6,582.6 1712.9,584.1 1715.2,581.8 1717.5,579.9 1719.8,579.5 1721.0,585.2 1722.1,580.7 1724.4,585.6 1726.7,581.7 1729.0,577.9 1729.3,583.5 1731.4,577.7 1733.6,583.7 1733.7,582.1 1736.0,578.0 1737.6,586.1 1738.3,580.5 1740.6,580.7 1742.9,578.8 1745.2,576.4 1747.0,579.0 1747.5,583.9 1749.5,584.1 1749.8,581.2 1752.1,585.3 1754.4,586.3 1756.7,589.8 1759.0,589.6 1761.3,589.8 1763.7,590.0 1766.0,590.0 1768.3,589.5 1770.6,589.5 1772.9,589.5 1775.2,589.8 1777.5,589.4 1779.8,589.9 1782.1,589.6 1784.4,589.5 1786.7,589.9 1789.0,590.0 1791.3,590.0 1793.6,590.0 1795.9,589.6 1798.3,589.7 1800.6,589.8 1802.9,590.0 1805.2,589.7 1807.5,590.0 1809.8,590.0 1812.1,589.7 1814.4,589.7 1816.7,589.6 1819.0,589.5 1821.3,590.0 1823.6,589.9 1825.9,589.9 1828.2,565.4 1830.6,549.9 1832.9,556.3 1835.2,577.3 1837.5,586.5 1839.8,589.5 1842.1,573.7 1844.4,551.8 1846.7,553.7 1849.0,562.2 1851.3,540.4 1853.6,548.1 1855.9,553.9 1858.2,532.3 1860.5,516.9 1862.9,523.8 1865.2,527.3 1867.5,533.9 1869.8,573.5 1872.1,589.0 1874.4,588.9 1876.7,588.5 1879.0,588.3" fill="none" stroke="#EF843C" stroke-width="1" stroke-linejoin="round"/><polyline points="1383.0,590.2 1385.3,590.1 1387.6,590.2 1388.6,590.1 1389.9,590.1 1392.2,590.1 1394.5,590.2 1396.8,590.1 1396.9,590.2 1399.1,590.2 1401.5,590.2 1403.8,590.2 1405.2,590.1 1406.1,590.1 1408.4,590.1 1410.7,590.2 1413.0,590.2 1413.5,590.2 1415.3,590.1 1417.6,590.1 1419.9,590.2 1421.8,590.2 1422.2,590.2 1424.5,590.2 1426.8,590.2 1429.1,590.2 1430.1,590.2 1430.2,590.2 1431.4,590.1 1433.8,590.1 1436.1,590.1 1438.4,590.1 1438.4,590.2 1440.7,590.2 1443.0,590.1 1445.3,590.1 1446.7,590.1 1447.6,590.1 1449.9,590.2 1452.2,590.2 1454.5,590.2 1455.0,590.1 1456.8,590.1 1459.1,590.1 1461.4,590.2 1463.3,590.2 1463.7,590.1 1466.1,590.2 1468.4,590.1 1470.7,590.2 1471.6,590.2 1473.0,590.2 1475.3,590.1 1477.6,589.2 1479.9,588.9 1479.9,589.8 1482.2,589.9 1484.5,588.8 1486.8,589.2 1487.0,588.4 1488.2,587.6 1489.1,587.9 1491.4,588.9 1493.7,587.8 1495.5,588.6 1496.0,587.0 1496.5,588.6 1498.3,586.4 1500.7,586.8 1503.0,585.6 1503.0,587.9 1504.8,585.1 1505.3,586.7 1507.6,587.9 1509.9,585.9 1510.8,587.5 1512.2,588.4 1513.1,588.8 1514.5,585.6 1516.8,587.5 1519.1,588.2 1521.4,583.8 1521.4,587.8 1523.7,583.6 1526.0,586.7 1528.3,585.9 1529.7,581.6 1530.0,582.3 1530.6,582.2 1533.0,580.7 1535.3,583.4 1537.6,580.4 1538.0,583.0 1539.9,583.1 1542.2,585.3 1544.5,584.7 1546.3,582.9 1546.8,585.8 1549.1,582.1 1551.4,579.9 1553.7,581.1 1554.6,585.8 1556.0,587.6 1558.3,584.3 1560.6,583.5 1562.9,579.4 1562.9,582.4 1565.3,582.7 1567.6,581.8 1569.9,582.3 1571.2,581.1 1572.2,582.3 1574.5,582.3 1576.8,585.5 1579.1,586.6 1579.5,583.4 1581.4,579.0 1583.7,578.4 1586.0,584.9 1587.8,582.1 1588.3,582.6 1590.6,583.3 1592.9,586.0 1595.2,579.9 1596.1,587.0 1597.5,585.5 1599.9,585.0 1602.2,585.8 1604.4,585.9 1604.5,587.0 1606.8,582.6 1607.4,586.1 1609.1,581.4 1611.4,581.8 1612.7,581.5 1613.7,583.0 1615.7,581.7 1616.0,584.8 1618.3,583.1 1620.6,580.9 1621.0,585.6 1622.9,580.4 1624.0,581.9 1625.2,578.0 1627.5,581.6 1629.8,582.3 1632.2,580.1 1632.3,584.9 1634.5,584.0 1636.8,583.4 1639.1,580.4 1641.4,580.5 1643.7,585.9 1646.0,578.2 1648.3,577.9 1650.6,582.8 1651.9,577.7 1652.9,581.5 1655.2,583.9 1657.5,586.9 1659.8,587.6 1662.1,581.8 1664.5,580.5 1666.8,581.5 1669.1,579.8 1671.4,583.3 1673.7,580.2 1676.0,581.6 1678.3,581.3 1679.4,582.2 1680.6,581.0 1682.9,582.1 1685.2,586.8 1687.5,580.9 1687.8,580.6 1689.8,583.4 1692.1,577.9 1693.5,582.9 1694.4,586.1 1696.0,582.5 1696.7,584.1 1699.0,586.1 1699.1,578.7 1701.4,585.9 1703.7,580.5 1704.4,586.0 1706.0,582.5 1708.3,577.6 1710.6,586.8 1712.6,579.0 1712.9,587.7 1715.2,577.7 1717.5,578.4 1719.8,583.1 1721.0,581.2 1722.1,583.0 1724.4,586.1 1726.7,584.1 1729.0,583.2 1729.3,578.8 1731.4,586.6 1733.6,582.2 1733.7,582.9 1736.0,582.0 1737.6,579.6 1738.3,581.6 1740.6,584.4 1742.9,577.9 1745.2,581.6 1747.0,584.9 1747.5,582.1 1749.5,578.8 1749.8,587.2 1752.1,583.7 1754.4,587.2 1756.7,589.8 1759.0,590.0 1761.3,590.0 1763.7,589.9 1766.0,589.9 1768.3,589.8 1770.6,590.0 1772.9,589.8 1775.2,589.9 1777.5,589.7 1779.8,589.6 1782.1,590.0 1784.4,589.5 1786.7,589.8 1789.0,589.9 1791.3,590.0 1793.6,589.7 1795.9,589.9 1798.3,589.7 1800.6,590.0 1802.9,589.6 1805.2,590.0 1807.5,589.6 1809.8,589.9 1812.1,589.9 1814.4,589.8 1816.7,589.8 1819.0,589.8 1821.3,589.8 1823.6,589.6 1825.9,589.6 1828.2,569.2 1830.6,555.0 1832.9,561.6 1835.2,579.5 1837.5,587.1 1839.8,589.7 1842.1,576.5 1844.4,557.6 1846.7,559.0 1849.0,566.1 1851.3,547.5 1853.6,554.1 1855.9,559.0 1858.2,540.9 1860.5,527.3 1862.9,533.4 1865.2,535.8 1867.5,541.7 1869.8,575.8 1872.1,589.4 1874.4,589.0 1876.7,588.9 1879.0,588.9" fill="none" stroke="#E24D42" stroke-width="1" stroke-linejoin="round"/><polyline points="1383.0,588.8 1385.3,589.0 1387.6,589.4 1388.6,589.4 1389.9,588.6 1392.2,589.0 1394.5,588.5 1396.8,588.0 1396.9,587.9 1399.1,588.2 1401.5,587.9 1403.8,588.1 1405.2,588.7 1406.1,589.2 1408.4,589.0 1410.7,588.7 1413.0,588.8 1413.5,588.2 1415.3,588.5 1417.6,589.2 1419.9,589.6 1421.8,589.7 1422.2,590.3 1424.5,589.3 1426.8,589.3 1429.1,571.1 1430.1,562.9 1430.2,561.7 1431.4,573.3 1433.8,590.3 1436.1,589.9 1438.4,589.8 1438.4,590.2 1440.7,590.0 1443.0,589.3 1445.3,589.3 1446.7,589.0 1447.6,588.7 1449.9,588.3 1452.2,587.9 1454.5,588.2 1455.0,588.5 1456.8,588.1 1459.1,588.7 1461.4,589.0 1463.3,588.6 1463.7,588.2 1466.1,588.1 1468.4,587.6 1470.7,588.2 1471.6,588.2 1473.0,588.5 1475.3,588.9 1477.6,589.4 1479.9,589.2 1479.9,589.1 1482.2,589.1 1484.5,589.4 1486.8,589.5 1487.0,589.5 1488.2,590.1 1489.1,590.1 1491.4,590.3 1493.7,590.3 1495.5,590.3 1496.0,590.3 1496.5,590.3 1498.3,590.3 1500.7,590.2 1503.0,589.5 1503.0,589.0 1504.8,589.6 1505.3,588.8 1507.6,588.4 1509.9,589.1 1510.8,589.4 1512.2,589.0 1513.1,589.1 1514.5,589.6 1516.8,588.9 1519.1,588.9 1521.4,588.7 1521.4,589.2 1523.7,589.2 1526.0,589.2 1528.3,588.5 1529.7,588.4 1530.0,588.2 1530.6,588.1 1533.0,588.1 1535.3,588.4 1537.6,588.4 1538.0,588.1 1539.9,588.4 1542.2,588.8 1544.5,588.7 1546.3,589.4 1546.8,590.1 1549.1,590.2 1551.4,590.0 1553.7,589.7 1554.6,588.9 1556.0,588.9 1558.3,588.2 1560.6,585.7 1562.9,585.2 1562.9,583.2 1565.3,582.4 1567.6,584.6 1569.9,583.7 1571.2,582.2 1572.2,583.5 1574.5,584.8 1576.8,587.2 1579.1,587.0 1579.5,586.1 1581.4,584.5 1583.7,583.9 1586.0,584.8 1587.8,584.2 1588.3,585.1 1590.6,584.4 1592.9,585.5 1595.2,582.6 1596.1,583.8 1597.5,582.3 1599.9,581.8 1602.2,582.2 1604.4,582.5 1604.5,582.8 1606.8,583.3 1607.4,584.4 1609.1,585.2 1611.4,582.5 1612.7,585.4 1613.7,583.9 1615.7,584.8 1616.0,584.1 1618.3,585.6 1620.6,586.1 1621.0,585.8 1622.9,583.7 1624.0,583.8 1625.2,586.2 1627.5,586.6 1629.8,585.4 1632.2,585.5 1632.3,584.3 1634.5,583.8 1636.8,583.5 1639.1,583.7 1641.4,584.3 1643.7,583.3 1646.0,585.4 1648.3,585.5 1650.6,584.7 1651.9,586.2 1652.9,583.2 1655.2,585.1 1657.5,584.5 1659.8,583.9 1662.1,584.3 1664.5,586.1 1666.8,585.0 1669.1,583.8 1671.4,582.4 1673.7,586.3 1676.0,582.3 1678.3,559.7 1679.4,548.9 1680.6,563.3 1682.9,585.6 1685.2,576.0 1687.5,561.1 1687.8,557.1 1689.8,570.9 1692.1,582.6 1693.5,576.4 1694.4,567.9 1696.0,557.5 1696.7,563.5 1699.0,586.2 1699.1,584.5 1701.4,583.6 1703.7,559.6 1704.4,555.3 1706.0,568.6 1708.3,586.5 1710.6,574.2 1712.6,555.0 1712.9,554.6 1715.2,577.1 1717.5,582.7 1719.8,565.0 1721.0,551.2 1722.1,562.6 1724.4,582.7 1726.7,574.3 1729.0,554.3 1729.3,550.9 1731.4,571.3 1733.6,582.9 1733.7,582.0 1736.0,570.7 1737.6,562.7 1738.3,563.1 1740.6,583.2 1742.9,586.0 1745.2,572.7 1747.0,558.2 1747.5,560.9 1749.5,556.1 1749.8,560.0 1752.1,580.2 1754.4,587.2 1756.7,588.6 1759.0,588.7 1761.3,589.5 1763.7,589.5 1766.0,589.0 1768.3,589.8 1770.6,589.2 1772.9,588.6 1775.2,588.3 1777.5,588.8 1779.8,589.0 1782.1,589.6 1784.4,590.0 1786.7,590.1 1789.0,590.3 1791.3,589.8 1793.6,589.7 1795.9,589.5 1798.3,589.5 1800.6,588.6 1802.9,588.8 1805.2,588.4 1807.5,588.4 1809.8,588.1 1812.1,589.1 1814.4,588.2 1816.7,588.8 1819.0,588.0 1821.3,588.7 1823.6,588.1 1825.9,588.5 1828.2,554.9 1830.6,547.9 1832.9,563.3 1835.2,581.2 1837.5,583.6 1839.8,584.3 1842.1,569.0 1844.4,541.6 1846.7,540.7 1849.0,547.8 1851.3,523.8 1853.6,536.5 1855.9,538.0 1858.2,528.0 1860.5,524.2 1862.9,534.5 1865.2,534.5 1867.5,533.9 1869.8,575.4 1872.1,588.2 1874.4,588.1 1876.7,588.0 1879.0,587.7" fill="none" stroke="#1F78C1" stroke-width="1" stroke-linejoin="round"/><polyline points="1383.0,589.1 1385.3,588.7 1387.6,588.2 1388.6,588.3 1389.9,584.5 1392.2,577.8 1394.5,585.3 1396.8,586.3 1396.9,585.1 1399.1,585.2 1401.5,585.0 1403.8,584.5 1405.2,584.4 1406.1,585.0 1408.4,574.1 1410.7,578.2 1413.0,584.9 1413.5,584.8 1415.3,580.1 1417.6,575.7 1419.9,585.3 1421.8,586.0 1422.2,586.0 1424.5,585.5 1426.8,585.7 1429.1,585.4 1430.1,584.8 1430.2,585.2 1431.4,584.8 1433.8,586.0 1436.1,586.0 1438.4,586.2 1438.4,586.5 1440.7,586.6 1443.0,585.7 1445.3,585.6 1446.7,585.1 1447.6,585.0 1449.9,585.3 1452.2,584.5 1454.5,585.0 1455.0,585.5 1456.8,584.0 1459.1,583.1 1461.4,583.6 1463.3,581.4 1463.7,580.6 1466.1,580.3 1468.4,579.9 1470.7,578.0 1471.6,577.9 1473.0,579.7 1475.3,580.7 1477.6,581.8 1479.9,584.2 1479.9,585.5 1482.2,583.3 1484.5,581.9 1486.8,581.7 1487.0,581.2 1488.2,581.0 1489.1,581.0 1491.4,581.6 1493.7,579.0 1495.5,579.2 1496.0,577.3 1496.5,579.3 1498.3,579.1 1500.7,579.1 1503.0,576.8 1503.0,579.4 1504.8,577.8 1505.3,578.4 1507.6,581.2 1509.9,582.5 1510.8,582.0 1512.2,582.1 1513.1,582.6 1514.5,580.5 1516.8,579.2 1519.1,579.6 1521.4,581.3 1521.4,579.8 1523.7,580.2 1526.0,582.1 1528.3,582.3 1529.7,579.3 1530.0,579.6 1530.6,579.9 1533.0,579.6 1535.3,576.2 1537.6,577.1 1538.0,576.6 1539.9,576.5 1542.2,575.9 1544.5,578.1 1546.3,580.1 1546.8,580.5 1549.1,579.2 1551.4,574.4 1553.7,571.9 1554.6,568.9 1556.0,568.0 1558.3,563.0 1560.6,565.1 1562.9,562.4 1562.9,564.1 1565.3,564.6 1567.6,570.3 1569.9,567.6 1571.2,571.0 1572.2,567.4 1574.5,568.6 1576.8,569.6 1579.1,571.3 1579.5,571.2 1581.4,572.0 1583.7,572.2 1586.0,572.0 1587.8,576.1 1588.3,575.9 1590.6,578.0 1592.9,578.7 1595.2,575.9 1596.1,574.7 1597.5,573.2 1599.9,570.9 1602.2,571.9 1604.4,574.7 1604.5,575.5 1606.8,569.4 1607.4,566.8 1609.1,575.7 1611.4,576.0 1612.7,572.4 1613.7,572.6 1615.7,561.3 1616.0,562.9 1618.3,571.3 1620.6,570.9 1621.0,574.9 1622.9,575.7 1624.0,568.8 1625.2,573.7 1627.5,574.9 1629.8,573.5 1632.2,564.1 1632.3,560.0 1634.5,571.2 1636.8,571.3 1639.1,570.6 1641.4,573.5 1643.7,576.1 1646.0,574.4 1648.3,574.2 1650.6,568.7 1651.9,552.3 1652.9,559.7 1655.2,563.5 1657.5,565.0 1659.8,563.7 1662.1,565.5 1664.5,567.0 1666.8,566.9 1669.1,568.7 1671.4,570.7 1673.7,572.1 1676.0,572.3 1678.3,576.6 1679.4,571.5 1680.6,572.9 1682.9,573.0 1685.2,575.9 1687.5,574.9 1687.8,576.2 1689.8,576.9 1692.1,567.4 1693.5,546.4 1694.4,557.6 1696.0,573.9 1696.7,573.0 1699.0,544.6 1699.1,544.8 1701.4,568.1 1703.7,571.7 1704.4,570.5 1706.0,575.0 1708.3,574.3 1710.6,573.5 1712.6,569.4 1712.9,571.8 1715.2,570.1 1717.5,571.9 1719.8,574.2 1721.0,578.5 1722.1,574.4 1724.4,574.8 1726.7,575.0 1729.0,577.3 1729.3,574.9 1731.4,578.4 1733.6,566.4 1733.7,566.9 1736.0,578.7 1737.6,577.7 1738.3,577.1 1740.6,575.5 1742.9,577.9 1745.2,578.4 1747.0,580.1 1747.5,578.5 1749.5,578.4 1749.8,574.4 1752.1,577.2 1754.4,578.2 1756.7,582.0 1759.0,580.3 1761.3,580.6 1763.7,579.1 1766.0,579.2 1768.3,576.1 1770.6,575.4 1772.9,575.1 1775.2,576.1 1777.5,578.1 1779.8,578.5 1782.1,579.5 1784.4,578.6 1786.7,578.2 1789.0,577.0 1791.3,580.1 1793.6,582.5 1795.9,584.1 1798.3,581.4 1800.6,581.3 1802.9,579.6 1805.2,580.9 1807.5,581.6 1809.8,584.6 1812.1,586.1 1814.4,587.9 1816.7,587.3 1819.0,588.0 1821.3,588.2 1823.6,588.5 1825.9,588.6 1828.2,554.2 1830.6,545.8 1832.9,562.9 1835.2,582.6 1837.5,584.7 1839.8,585.5 1842.1,569.4 1844.4,540.5 1846.7,538.4 1849.0,546.4 1851.3,520.9 1853.6,534.8 1855.9,535.6 1858.2,525.5 1860.5,521.6 1862.9,533.3 1865.2,533.1 1867.5,532.9 1869.8,577.2 1872.1,590.0 1874.4,589.8 1876.7,589.6 1879.0,589.5" fill="none" stroke="#BA43A9" stroke-width="1" stroke-linejoin="round"/><polyline points="1383.0,589.3 1385.3,587.8 1387.6,575.1 1388.6,569.7 1389.9,576.6 1392.2,589.2 1394.5,581.4 1396.8,566.4 1396.9,566.0 1399.1,580.2 1401.5,589.3 1403.8,574.6 1405.2,564.7 1406.1,570.3 1408.4,586.1 1410.7,580.7 1413.0,554.2 1413.5,548.4 1415.3,568.2 1417.6,589.3 1419.9,579.1 1421.8,567.6 1422.2,569.8 1424.5,583.8 1426.8,588.4 1429.1,581.8 1430.1,579.1 1430.2,579.2 1431.4,582.7 1433.8,589.3 1436.1,582.8 1438.4,570.6 1438.4,570.5 1440.7,575.5 1443.0,583.0 1445.3,574.5 1446.7,567.5 1447.6,572.7 1449.9,582.9 1452.2,575.5 1454.5,545.6 1455.0,540.0 1456.8,561.4 1459.1,582.7 1461.4,573.4 1463.3,564.6 1463.7,567.9 1466.1,578.3 1468.4,581.9 1470.7,567.8 1471.6,561.1 1473.0,567.2 1475.3,582.7 1477.6,567.5 1479.9,541.6 1479.9,542.0 1482.2,568.8 1484.5,583.3 1486.8,566.0 1487.0,565.2 1488.2,556.2 1489.1,562.5 1491.4,582.3 1493.7,579.0 1495.5,561.3 1496.0,555.6 1496.5,551.8 1498.3,568.0 1500.7,584.4 1503.0,565.9 1503.0,564.9 1504.8,544.4 1505.3,547.2 1507.6,573.2 1509.9,580.3 1510.8,575.0 1512.2,565.0 1513.1,560.6 1514.5,568.2 1516.8,583.2 1519.1,579.9 1521.4,572.9 1521.4,572.3 1523.7,580.5 1526.0,584.0 1528.3,563.8 1529.7,551.4 1530.0,553.4 1530.6,558.8 1533.0,580.7 1535.3,576.8 1537.6,559.5 1538.0,555.6 1539.9,571.3 1542.2,584.9 1544.5,572.7 1546.3,558.4 1546.8,561.7 1549.1,578.7 1551.4,582.2 1553.7,564.4 1554.6,556.9 1556.0,567.3 1558.3,583.4 1560.6,578.4 1562.9,569.2 1562.9,570.2 1565.3,578.0 1567.6,583.4 1569.9,575.0 1571.2,570.2 1572.2,573.2 1574.5,583.4 1576.8,573.9 1579.1,542.1 1579.5,537.4 1581.4,561.4 1583.7,584.1 1586.0,572.1 1587.8,561.8 1588.3,563.3 1590.6,576.8 1592.9,580.3 1595.2,572.7 1596.1,570.4 1597.5,575.7 1599.9,584.9 1602.2,579.9 1604.4,570.2 1604.5,570.6 1606.8,580.0 1607.4,581.5 1609.1,583.5 1611.4,576.8 1612.7,572.1 1613.7,574.7 1615.7,581.2 1616.0,581.7 1618.3,580.7 1620.6,572.5 1621.0,572.9 1622.9,579.7 1624.0,583.5 1625.2,584.2 1627.5,585.7 1629.8,584.5 1632.2,583.7 1632.3,582.9 1634.5,582.2 1636.8,580.9 1639.1,581.8 1641.4,581.0 1643.7,581.4 1646.0,582.8 1648.3,582.4 1650.6,581.6 1651.9,583.1 1652.9,584.1 1655.2,584.7 1657.5,585.4 1659.8,586.5 1662.1,586.4 1664.5,586.4 1666.8,586.2 1669.1,586.3 1671.4,586.2 1673.7,586.2 1676.0,586.2 1678.3,585.4 1679.4,584.5 1680.6,584.8 1682.9,583.5 1685.2,582.3 1687.5,582.0 1687.8,582.8 1689.8,581.5 1692.1,582.2 1693.5,582.6 1694.4,582.0 1696.0,581.5 1696.7,582.5 1699.0,583.5 1699.1,582.9 1701.4,584.2 1703.7,584.1 1704.4,584.2 1706.0,583.3 1708.3,584.5 1710.6,583.7 1712.6,583.4 1712.9,582.8 1715.2,582.6 1717.5,582.6 1719.8,583.7 1721.0,583.7 1722.1,584.5 1724.4,583.7 1726.7,583.1 1729.0,583.4 1729.3,583.5 1731.4,583.5 1733.6,584.3 1733.7,585.5 1736.0,583.5 1737.6,584.8 1738.3,583.1 1740.6,584.2 1742.9,583.0 1745.2,585.0 1747.0,585.7 1747.5,586.3 1749.5,584.3 1749.8,584.3 1752.1,582.5 1754.4,580.9 1756.7,581.0 1759.0,589.3 1761.3,589.3 1763.7,589.3 1766.0,589.3 1768.3,589.3 1770.6,589.3 1772.9,589.3 1775.2,589.3 1777.5,589.3 1779.8,589.3 1782.1,589.3 1784.4,589.3 1786.7,589.3 1789.0,589.3 1791.3,589.3 1793.6,589.3 1795.9,589.3 1798.3,589.3 1800.6,587.7 1802.9,581.4 1805.2,587.0 1807.5,589.3 1809.8,586.4 1812.1,578.9 1814.4,587.1 1816.7,581.7 1819.0,580.6 1821.3,589.3 1823.6,589.3 1825.9,589.1 1828.2,544.1 1830.6,533.7 1832.9,555.1 1835.2,579.7 1837.5,582.3 1839.8,583.3 1842.1,563.1 1844.4,527.1 1846.7,524.4 1849.0,534.4 1851.3,502.5 1853.6,519.9 1855.9,520.8 1858.2,508.3 1860.5,503.4 1862.9,518.1 1865.2,517.8 1867.5,517.5 1869.8,572.9 1872.1,588.8 1874.4,588.6 1876.7,588.4 1879.0,588.2" fill="none" stroke="#705DA0" stroke-width="1" stroke-linejoin="round"/><polyline points="1383.0,557.7 1385.3,556.5 1387.6,562.3 1388.6,566.1 1389.9,566.2 1392.2,563.2 1394.5,564.1 1396.8,574.7 1396.9,575.0 1399.1,585.3 1401.5,589.5 1403.8,589.5 1405.2,589.5 1406.1,589.5 1408.4,589.5 1410.7,589.5 1413.0,589.5 1413.5,589.5 1415.3,589.5 1417.6,589.5 1419.9,585.3 1421.8,579.8 1422.2,579.8 1424.5,586.6 1426.8,589.5 1429.1,589.5 1430.1,589.5 1430.2,589.5 1431.4,589.5 1433.8,589.5 1436.1,589.5 1438.4,589.5 1438.4,589.5 1440.7,589.5 1443.0,589.5 1445.3,582.1 1446.7,576.3 1447.6,577.5 1449.9,587.0 1452.2,583.4 1454.5,563.5 1455.0,559.4 1456.8,575.1 1459.1,589.5 1461.4,589.5 1463.3,589.5 1463.7,589.5 1466.1,589.5 1468.4,589.5 1470.7,579.9 1471.6,580.8 1473.0,581.1 1475.3,582.2 1477.6,583.6 1479.9,583.3 1479.9,582.9 1482.2,583.8 1484.5,582.2 1486.8,579.3 1487.0,579.2 1488.2,578.6 1489.1,576.2 1491.4,578.6 1493.7,579.4 1495.5,579.4 1496.0,579.8 1496.5,582.4 1498.3,580.7 1500.7,580.1 1503.0,580.8 1503.0,578.4 1504.8,577.3 1505.3,578.3 1507.6,580.8 1509.9,582.3 1510.8,582.3 1512.2,583.6 1513.1,584.2 1514.5,583.5 1516.8,584.2 1519.1,586.3 1521.4,585.9 1521.4,586.1 1523.7,585.5 1526.0,583.9 1528.3,583.1 1529.7,581.2 1530.0,579.8 1530.6,578.5 1533.0,580.0 1535.3,581.1 1537.6,583.3 1538.0,584.0 1539.9,584.7 1542.2,581.9 1544.5,581.0 1546.3,580.7 1546.8,580.6 1549.1,581.3 1551.4,583.3 1553.7,582.4 1554.6,579.7 1556.0,579.3 1558.3,579.2 1560.6,577.4 1562.9,578.5 1562.9,581.0 1565.3,579.4 1567.6,578.2 1569.9,580.9 1571.2,579.9 1572.2,579.2 1574.5,582.2 1576.8,584.8 1579.1,584.3 1579.5,584.4 1581.4,585.0 1583.7,585.1 1586.0,584.9 1587.8,582.9 1588.3,583.7 1590.6,582.2 1592.9,580.8 1595.2,580.9 1596.1,583.5 1597.5,584.1 1599.9,586.1 1602.2,586.8 1604.4,585.3 1604.5,584.2 1606.8,583.6 1607.4,581.7 1609.1,581.5 1611.4,582.4 1612.7,580.7 1613.7,580.4 1615.7,581.0 1616.0,580.3 1618.3,580.0 1620.6,581.8 1621.0,580.7 1622.9,581.3 1624.0,580.0 1625.2,578.7 1627.5,576.9 1629.8,579.4 1632.2,578.5 1632.3,578.3 1634.5,580.2 1636.8,582.5 1639.1,580.7 1641.4,581.5 1643.7,582.9 1646.0,583.3 1648.3,580.7 1650.6,582.2 1651.9,582.6 1652.9,582.3 1655.2,581.7 1657.5,582.9 1659.8,582.2 1662.1,579.5 1664.5,580.1 1666.8,580.0 1669.1,581.8 1671.4,581.8 1673.7,584.0 1676.0,583.8 1678.3,582.9 1679.4,581.4 1680.6,582.8 1682.9,582.0 1685.2,582.3 1687.5,582.3 1687.8,580.6 1689.8,580.0 1692.1,580.2 1693.5,581.5 1694.4,581.0 1696.0,583.4 1696.7,581.6 1699.0,580.4 1699.1,579.9 1701.4,579.5 1703.7,578.7 1704.4,580.0 1706.0,580.8 1708.3,578.5 1710.6,579.9 1712.6,579.9 1712.9,580.4 1715.2,579.4 1717.5,580.9 1719.8,581.4 1721.0,582.3 1722.1,582.5 1724.4,582.6 1726.7,581.6 1729.0,579.5 1729.3,577.1 1731.4,575.6 1733.6,575.7 1733.7,576.0 1736.0,576.6 1737.6,577.0 1738.3,578.6 1740.6,578.6 1742.9,579.9 1745.2,581.8 1747.0,581.4 1747.5,581.9 1749.5,582.9 1749.8,582.7 1752.1,580.9 1754.4,581.9 1756.7,579.0 1759.0,587.7 1761.3,587.0 1763.7,586.4 1766.0,585.8 1768.3,585.1 1770.6,584.5 1772.9,583.9 1775.2,583.3 1777.5,583.5 1779.8,583.7 1782.1,583.9 1784.4,584.1 1786.7,584.3 1789.0,584.4 1791.3,584.6 1793.6,584.8 1795.9,585.0 1798.3,585.2 1800.6,585.5 1802.9,585.9 1805.2,586.3 1807.5,586.8 1809.8,587.2 1812.1,587.7 1814.4,588.1 1816.7,589.5 1819.0,589.5 1821.3,589.5 1823.6,589.5 1825.9,589.4 1828.2,560.0 1830.6,538.0 1832.9,527.3 1835.2,526.2 1837.5,551.9 1839.8,556.4 1842.1,545.3 1844.4,564.6 1846.7,579.7 1849.0,578.4 1851.3,575.0 1853.6,564.6 1855.9,542.3 1858.2,527.4 1860.5,530.4 1862.9,532.7 1865.2,525.6 1867.5,518.4 1869.8,549.7 1872.1,579.6 1874.4,576.4 1876.7,577.7 1879.0,578.9" fill="none" stroke="#508642" stroke-width="1" stroke-linejoin="round"/><polyline points="1383.0,589.9 1385.3,589.9 1387.6,589.9 1388.6,589.9 1389.9,589.9 1392.2,589.9 1394.5,589.9 1396.8,589.9 1396.9,589.9 1399.1,589.9 1401.5,589.9 1403.8,589.9 1405.2,589.9 1406.1,589.9 1408.4,589.9 1410.7,589.9 1413.0,589.9 1413.5,589.9 1415.3,589.9 1417.6,589.9 1419.9,589.9 1421.8,589.9 1422.2,589.9 1424.5,589.9 1426.8,589.9 1429.1,589.9 1430.1,589.9 1430.2,589.9 1431.4,589.9 1433.8,589.9 1436.1,589.9 1438.4,589.9 1438.4,589.9 1440.7,589.9 1443.0,589.9 1445.3,589.9 1446.7,589.9 1447.6,589.9 1449.9,589.9 1452.2,589.9 1454.5,589.9 1455.0,589.9 1456.8,589.9 1459.1,589.9 1461.4,589.9 1463.3,589.9 1463.7,589.9 1466.1,589.9 1468.4,589.9 1470.7,589.9 1471.6,589.9 1473.0,589.9 1475.3,589.9 1477.6,589.9 1479.9,589.9 1479.9,589.9 1482.2,588.4 1484.5,581.3 1486.8,569.5 1487.0,570.1 1488.2,574.7 1489.1,578.7 1491.4,589.2 1493.7,573.3 1495.5,563.7 1496.0,565.3 1496.5,572.0 1498.3,582.5 1500.7,581.6 1503.0,571.3 1503.0,568.6 1504.8,575.8 1505.3,578.7 1507.6,579.7 1509.9,565.7 1510.8,556.9 1512.2,567.4 1513.1,571.9 1514.5,582.8 1516.8,580.4 1519.1,571.6 1521.4,558.0 1521.4,556.3 1523.7,571.6 1526.0,583.1 1528.3,567.4 1529.7,555.8 1530.0,553.8 1530.6,565.4 1533.0,583.0 1535.3,579.9 1537.6,578.3 1538.0,585.6 1539.9,577.4 1542.2,578.4 1544.5,585.6 1546.3,585.7 1546.8,579.3 1549.1,579.5 1551.4,585.4 1553.7,575.4 1554.6,584.6 1556.0,576.2 1558.3,574.5 1560.6,585.7 1562.9,577.7 1562.9,579.8 1565.3,574.7 1567.6,581.2 1569.9,581.7 1571.2,584.2 1572.2,575.6 1574.5,583.0 1576.8,574.7 1579.1,586.9 1579.5,575.0 1581.4,587.1 1583.7,577.3 1586.0,574.2 1587.8,582.9 1588.3,579.2 1590.6,581.6 1592.9,586.5 1595.2,575.7 1596.1,580.5 1597.5,576.2 1599.9,586.9 1602.2,585.1 1604.4,584.2 1604.5,576.0 1606.8,587.1 1607.4,587.1 1609.1,582.1 1611.4,582.0 1612.7,575.5 1613.7,575.3 1615.7,584.0 1616.0,577.0 1618.3,582.4 1620.6,576.6 1621.0,578.1 1622.9,586.4 1624.0,580.8 1625.2,581.4 1627.5,580.9 1629.8,579.6 1632.2,577.7 1632.3,581.7 1634.5,580.1 1636.8,575.7 1639.1,577.8 1641.4,584.6 1643.7,585.4 1646.0,583.5 1648.3,573.9 1650.6,581.9 1651.9,574.9 1652.9,573.7 1655.2,577.5 1657.5,582.1 1659.8,576.8 1662.1,580.2 1664.5,573.9 1666.8,580.2 1669.1,578.3 1671.4,577.6 1673.7,578.4 1676.0,584.8 1678.3,579.3 1679.4,581.3 1680.6,577.7 1682.9,576.3 1685.2,584.4 1687.5,582.1 1687.8,583.7 1689.8,573.6 1692.1,580.3 1693.5,580.9 1694.4,573.6 1696.0,576.2 1696.7,575.1 1699.0,580.2 1699.1,585.5 1701.4,582.0 1703.7,586.1 1704.4,581.6 1706.0,580.9 1708.3,580.5 1710.6,573.3 1712.6,579.7 1712.9,585.0 1715.2,584.8 1717.5,577.6 1719.8,579.9 1721.0,581.4 1722.1,580.2 1724.4,581.4 1726.7,577.6 1729.0,578.8 1729.3,586.6 1731.4,580.2 1733.6,583.7 1733.7,578.9 1736.0,580.7 1737.6,576.4 1738.3,573.4 1740.6,576.6 1742.9,578.4 1745.2,580.0 1747.0,585.7 1747.5,576.8 1749.5,584.5 1749.8,581.8 1752.1,582.0 1754.4,587.3 1756.7,588.4 1759.0,587.0 1761.3,585.6 1763.7,589.0 1766.0,583.8 1768.3,582.8 1770.6,588.1 1772.9,580.3 1775.2,579.3 1777.5,587.4 1779.8,579.5 1782.1,587.9 1784.4,587.6 1786.7,579.4 1789.0,588.0 1791.3,587.5 1793.6,581.4 1795.9,588.6 1798.3,588.4 1800.6,584.2 1802.9,588.4 1805.2,585.5 1807.5,586.3 1809.8,589.0 1812.1,587.9 1814.4,588.6 1816.7,589.3 1819.0,589.0 1821.3,589.3 1823.6,588.9 1825.9,588.9 1828.2,563.1 1830.6,546.0 1832.9,553.7 1835.2,575.7 1837.5,585.8 1839.8,589.3 1842.1,571.9 1844.4,548.6 1846.7,550.9 1849.0,559.7 1851.3,536.1 1853.6,544.3 1855.9,550.4 1858.2,527.6 1860.5,510.6 1862.9,518.4 1865.2,522.1 1867.5,529.3 1869.8,571.9 1872.1,588.7 1874.4,588.9 1876.7,588.3 1879.0,588.2" fill="none" stroke="#CCA300" stroke-width="1" stroke-linejoin="round"/>
<clipPath id="lgc"><rect x="1323" y="615" width="570" height="72"/></clipPath><g clip-path="url(#lgc)"><rect x="1341.0" y="627.0" width="14" height="4" rx="1" fill="#7EB26D"/><text x="1363.5" y="633.0" text-anchor="start" font-size="12" fill="#ccccdc" textLength="31.5" lengthAdjust="spacingAndGlyphs">sdb-w</text><text x="1402.0" y="633.0" text-anchor="start" font-size="12" fill="#ccccdc" textLength="82.5" lengthAdjust="spacingAndGlyphs">Avg: 2.13 MB/s</text><rect x="1495.0" y="627.0" width="14" height="4" rx="1" fill="#EAB839"/><text x="1517.5" y="633.0" text-anchor="start" font-size="12" fill="#ccccdc" textLength="31.5" lengthAdjust="spacingAndGlyphs">sdc-w</text><text x="1555.8" y="633.0" text-anchor="start" font-size="12" fill="#ccccdc" textLength="82.5" lengthAdjust="spacingAndGlyphs">Avg: 2.90 MB/s</text><rect x="1649.0" y="627.0" width="14" height="4" rx="1" fill="#6ED0E0"/><text x="1671.2" y="633.0" text-anchor="start" font-size="12" fill="#ccccdc" textLength="31.8" lengthAdjust="spacingAndGlyphs">sdd-w</text><text x="1709.8" y="633.0" text-anchor="start" font-size="12" fill="#ccccdc" textLength="82.8" lengthAdjust="spacingAndGlyphs">Avg: 2.94 MB/s</text><rect x="1341.0" y="645.0" width="14" height="4" rx="1" fill="#EF843C"/><text x="1363.5" y="651.0" text-anchor="start" font-size="12" fill="#ccccdc" textLength="31.5" lengthAdjust="spacingAndGlyphs">sde-w</text><text x="1402.0" y="651.0" text-anchor="start" font-size="12" fill="#ccccdc" textLength="82.5" lengthAdjust="spacingAndGlyphs">Avg: 2.52 MB/s</text><rect x="1495.0" y="645.0" width="14" height="4" rx="1" fill="#E24D42"/><text x="1517.5" y="651.0" text-anchor="start" font-size="12" fill="#ccccdc" textLength="31.5" lengthAdjust="spacingAndGlyphs">sda-w</text><text x="1555.8" y="651.0" text-anchor="start" font-size="12" fill="#ccccdc" textLength="82.5" lengthAdjust="spacingAndGlyphs">Avg: 1.96 MB/s</text><rect x="1649.0" y="645.0" width="14" height="4" rx="1" fill="#1F78C1"/><text x="1671.2" y="651.0" text-anchor="start" font-size="12" fill="#ccccdc" textLength="26.8" lengthAdjust="spacingAndGlyphs">sdb-r</text><text x="1704.8" y="651.0" text-anchor="start" font-size="12" fill="#ccccdc" textLength="74.8" lengthAdjust="spacingAndGlyphs">Avg: 297 kB/s</text><rect x="1341.0" y="663.0" width="14" height="4" rx="1" fill="#BA43A9"/><text x="1363.5" y="669.0" text-anchor="start" font-size="12" fill="#ccccdc" textLength="26.5" lengthAdjust="spacingAndGlyphs">sdc-r</text><text x="1396.8" y="669.0" text-anchor="start" font-size="12" fill="#ccccdc" textLength="74.8" lengthAdjust="spacingAndGlyphs">Avg: 843 kB/s</text><rect x="1482.0" y="663.0" width="14" height="4" rx="1" fill="#705DA0"/><text x="1504.5" y="669.0" text-anchor="start" font-size="12" fill="#ccccdc" textLength="27.0" lengthAdjust="spacingAndGlyphs">sdd-r</text><text x="1538.2" y="669.0" text-anchor="start" font-size="12" fill="#ccccdc" textLength="75.0" lengthAdjust="spacingAndGlyphs">Avg: 613 kB/s</text><rect x="1624.0" y="663.0" width="14" height="4" rx="1" fill="#508642"/><text x="1645.8" y="669.0" text-anchor="start" font-size="12" fill="#ccccdc" textLength="26.8" lengthAdjust="spacingAndGlyphs">sde-r</text><text x="1679.2" y="669.0" text-anchor="start" font-size="12" fill="#ccccdc" textLength="75.0" lengthAdjust="spacingAndGlyphs">Avg: 448 kB/s</text><rect x="1341.0" y="681.0" width="14" height="4" rx="1" fill="#CCA300"/><text x="1363.5" y="687.0" text-anchor="start" font-size="12" fill="#ccccdc" textLength="26.5" lengthAdjust="spacingAndGlyphs">sda-r</text><text x="1396.8" y="687.0" text-anchor="start" font-size="12" fill="#ccccdc" textLength="74.8" lengthAdjust="spacingAndGlyphs">Avg: 180 kB/s</text></g><rect x="1887.5" y="621" width="7" height="59" rx="3.5" fill="#2c2f35"/>
</svg></div>
<div class="panel" style="left:143px;top:779px;width:582px;height:296px">
<svg width="582" height="296" viewBox="143 779 582 296">
<text x="434.0" y="801.1" text-anchor="middle" font-size="14" fill="#ccccdc" textLength="125.0" lengthAdjust="spacingAndGlyphs" stroke="#ccccdc" stroke-width="0.35">Network Bandwidth</text>
<g stroke="rgba(204,204,220,0.2)" stroke-width="1" shape-rendering="crispEdges"><line x1="213.1" x2="699.9" y1="829.4" y2="829.4"/><line x1="213.1" x2="699.9" y1="867.4" y2="867.4"/><line x1="213.1" x2="699.9" y1="905.4" y2="905.4"/><line x1="213.1" x2="699.9" y1="943.3" y2="943.3"/><line x1="213.1" x2="699.9" y1="981.3" y2="981.3"/><line x1="213.1" x2="699.9" y1="1019.3" y2="1019.3"/><line x1="284.0" x2="284.0" y1="829.4" y2="1019.3"/><line x1="365.6" x2="365.6" y1="829.4" y2="1019.3"/><line x1="447.1" x2="447.1" y1="829.4" y2="1019.3"/><line x1="528.7" x2="528.7" y1="829.4" y2="1019.3"/><line x1="610.2" x2="610.2" y1="829.4" y2="1019.3"/><line x1="691.7" x2="691.7" y1="829.4" y2="1019.3"/></g>
<text x="207.0" y="833.6" text-anchor="end" font-size="12" fill="#ccccdc" textLength="54.7" lengthAdjust="spacingAndGlyphs">12.5 Mb/s</text>
<text x="207.0" y="871.6" text-anchor="end" font-size="12" fill="#ccccdc" textLength="44.8" lengthAdjust="spacingAndGlyphs">10 Mb/s</text>
<text x="207.0" y="909.6" text-anchor="end" font-size="12" fill="#ccccdc" textLength="54.7" lengthAdjust="spacingAndGlyphs">7.50 Mb/s</text>
<text x="207.0" y="947.5" text-anchor="end" font-size="12" fill="#ccccdc" textLength="38.1" lengthAdjust="spacingAndGlyphs">5 Mb/s</text>
<text x="207.0" y="985.5" text-anchor="end" font-size="12" fill="#ccccdc" textLength="54.7" lengthAdjust="spacingAndGlyphs">2.50 Mb/s</text>
<text x="207.0" y="1023.5" text-anchor="end" font-size="12" fill="#ccccdc" textLength="33.7" lengthAdjust="spacingAndGlyphs">0 kb/s</text>
<text x="284.0" y="1038.3" text-anchor="middle" font-size="12" fill="#ccccdc" textLength="29.9" lengthAdjust="spacingAndGlyphs">10:45</text>
<text x="365.6" y="1038.3" text-anchor="middle" font-size="12" fill="#ccccdc" textLength="29.9" lengthAdjust="spacingAndGlyphs">10:50</text>
<text x="447.1" y="1038.3" text-anchor="middle" font-size="12" fill="#ccccdc" textLength="29.9" lengthAdjust="spacingAndGlyphs">10:55</text>
<text x="528.7" y="1038.3" text-anchor="middle" font-size="12" fill="#ccccdc" textLength="29.9" lengthAdjust="spacingAndGlyphs">11:00</text>
<text x="610.2" y="1038.3" text-anchor="middle" font-size="12" fill="#ccccdc" textLength="29.9" lengthAdjust="spacingAndGlyphs">11:05</text>
<text x="691.7" y="1038.3" text-anchor="middle" font-size="12" fill="#ccccdc" textLength="29.9" lengthAdjust="spacingAndGlyphs">11:10</text>
<polygon points="213.1,1018.2 216.1,1011.3 219.2,1010.2 223.8,1011.6 226.8,1006.4 229.1,1005.9 232.5,1003.2 236.7,1006.4 240.6,1005.2 245.5,1004.1 249.0,1006.4 254.0,1004.1 256.6,1018.2 260.4,1018.6 272.7,1018.6 276.0,1015.9 278.5,1018.2 280.6,971.6 282.1,939.5 283.8,924.2 285.2,967.0 286.7,1018.2 291.8,1018.6 294.8,1014.3 298.3,1018.6 301.7,1016.6 305.0,1014.6 308.6,1015.9 311.2,1013.6 313.9,1007.5 316.7,1015.1 320.0,1013.6 323.8,1013.3 326.9,1012.0 330.0,1012.5 333.0,1008.2 335.6,1006.4 338.4,995.2 341.1,1002.4 344.5,999.1 349.1,991.4 352.1,998.3 354.4,996.0 357.5,994.8 360.5,1003.6 362.8,1005.2 368.9,1005.2 370.8,1006.4 374.3,1003.6 378.9,1002.4 381.9,985.0 384.2,983.8 387.3,988.1 390.3,981.9 392.6,981.0 395.4,972.3 398.3,987.6 401.0,979.2 403.8,971.6 406.4,978.4 408.7,1005.2 411.7,1003.2 414.5,1004.4 417.1,994.5 419.8,990.2 422.4,993.7 425.5,1004.4 430.0,1000.6 433.4,1005.5 438.8,1000.3 444.6,1005.5 448.4,1003.3 453.7,1004.4 455.0,1004.4 457.8,1004.9 460.8,1002.4 463.4,1004.4 466.5,1011.3 468.8,1010.5 471.5,1005.2 474.1,1003.3 477.6,1004.9 480.2,1004.1 483.3,1005.2 485.6,1007.5 487.9,1016.2 490.1,1015.6 493.2,1006.7 496.3,1011.3 499.3,1015.6 501.6,1004.4 504.2,1011.6 507.0,1009.8 509.7,1012.8 512.3,1007.5 515.4,1004.9 517.7,1005.2 520.4,1004.1 523.0,1005.9 526.1,1008.5 529.1,1009.3 531.4,1007.9 534.0,1004.1 536.8,1007.0 539.4,1003.6 542.1,1001.4 545.2,1002.4 547.8,999.8 550.5,1007.5 553.6,1003.6 555.9,1000.6 558.6,1010.5 561.2,1012.0 564.0,998.8 566.6,1002.1 569.3,1001.4 572.4,1012.5 575.0,1009.8 577.7,1015.6 580.3,1016.2 583.1,1014.6 585.7,1014.3 588.3,986.1 591.0,986.5 594.1,988.4 596.4,1015.6 601.7,1016.2 606.3,1015.9 610.9,1015.6 618.5,1016.2 621.6,1014.3 623.9,1013.1 626.9,1016.2 632.3,1015.9 638.4,1015.6 642.7,1014.0 646.0,1018.2 648.3,1017.7 653.7,993.7 656.7,1012.8 659.8,1017.4 664.0,1015.9 667.4,995.2 670.0,1005.2 672.8,990.2 675.5,994.5 678.4,996.0 681.2,980.7 683.5,985.0 686.5,986.8 689.6,989.1 691.9,1014.3 694.9,1014.3 697.2,1015.6 700.3,1007.5 700.3,1019.3 213.1,1019.3" fill="#7EB26D" fill-opacity="0.1"/><polygon points="213.1,968.5 216.1,961.6 219.2,960.1 222.2,960.9 227.6,954.7 232.2,952.9 234.8,956.6 237.5,948.9 240.6,946.8 242.9,954.0 245.5,957.0 248.2,953.5 251.3,955.0 254.0,954.0 256.6,968.8 258.9,965.4 262.0,958.6 265.0,967.7 268.1,968.8 272.7,968.8 276.0,966.2 278.5,968.5 280.6,905.8 282.1,882.9 283.8,869.2 285.2,898.2 286.7,968.2 291.8,968.5 294.8,964.2 298.3,968.5 301.7,965.7 305.0,963.6 308.6,965.7 311.2,963.9 313.9,956.6 316.7,964.7 320.0,962.7 323.8,962.7 327.4,965.4 330.0,957.0 332.2,955.5 335.6,955.0 338.4,943.3 341.1,950.9 344.5,947.1 349.1,938.4 352.1,945.6 354.4,943.3 357.5,942.2 360.5,950.9 362.8,954.4 365.9,950.9 368.9,952.5 373.5,954.4 376.3,948.3 378.9,949.4 381.9,931.8 384.2,931.1 387.3,935.6 390.3,929.1 392.6,928.0 395.4,919.3 398.3,935.6 401.0,925.7 403.8,918.1 406.4,924.2 409.0,953.5 411.7,940.5 414.5,945.1 417.1,931.5 420.1,931.4 422.7,928.8 425.5,942.1 427.8,942.5 430.5,936.4 433.4,944.4 436.2,942.5 438.8,940.2 441.5,944.0 444.6,952.5 447.6,950.9 451.1,950.6 453.7,953.2 455.0,956.3 457.8,943.7 460.8,932.1 463.4,950.2 466.5,960.1 468.8,958.6 471.5,952.5 474.1,950.5 477.6,952.5 480.2,951.7 483.3,952.5 485.6,954.7 487.9,966.2 490.1,965.1 493.2,954.4 496.3,957.8 499.0,967.7 501.6,954.4 504.2,957.8 507.0,957.5 509.7,962.1 512.3,955.5 515.4,952.1 517.7,952.5 520.4,951.4 523.0,953.5 526.1,956.6 529.1,957.5 531.4,955.5 534.0,949.9 537.1,955.5 539.4,948.3 542.1,945.6 545.2,948.3 547.8,947.9 550.5,951.7 553.6,947.9 555.9,945.1 558.6,956.3 561.2,959.0 564.0,942.5 566.6,947.9 569.3,947.9 572.4,960.6 575.0,952.5 577.7,950.9 580.3,952.9 583.1,956.6 585.7,947.1 588.3,925.7 591.0,923.0 594.1,926.9 596.4,948.3 599.4,950.9 601.7,951.7 604.4,950.5 607.5,952.9 610.9,950.5 615.5,950.9 618.5,952.5 621.3,942.5 623.9,940.2 626.9,954.7 629.2,959.3 632.0,947.4 634.9,953.5 637.6,951.4 640.4,949.9 642.7,953.2 645.7,968.2 648.3,962.1 653.7,929.1 656.7,960.1 659.8,967.7 661.6,967.7 664.4,964.2 667.4,931.5 670.0,949.4 672.8,923.0 675.5,935.2 678.4,927.2 681.2,907.4 683.5,915.3 686.5,918.1 689.6,920.4 691.9,964.7 694.9,964.7 697.2,965.4 700.3,957.8 700.3,1007.5 697.2,1015.6 694.9,1014.3 691.9,1014.3 689.6,989.1 686.5,986.8 683.5,985.0 681.2,980.7 678.4,996.0 675.5,994.5 672.8,990.2 670.0,1005.2 667.4,995.2 664.4,1014.0 664.0,1015.9 661.6,1016.7 659.8,1017.4 656.7,1012.8 653.7,993.7 648.3,1017.7 646.0,1018.2 645.7,1017.8 642.7,1014.0 640.4,1014.9 638.4,1015.6 637.6,1015.6 634.9,1015.7 632.3,1015.9 632.0,1015.9 629.2,1016.0 626.9,1016.2 623.9,1013.1 621.6,1014.3 621.3,1014.5 618.5,1016.2 615.5,1015.9 610.9,1015.6 607.5,1015.8 606.3,1015.9 604.4,1016.0 601.7,1016.2 599.4,1015.9 596.4,1015.6 594.1,988.4 591.0,986.5 588.3,986.1 585.7,1014.3 583.1,1014.6 580.3,1016.2 577.7,1015.6 575.0,1009.8 572.4,1012.5 569.3,1001.4 566.6,1002.1 564.0,998.8 561.2,1012.0 558.6,1010.5 555.9,1000.6 553.6,1003.6 550.5,1007.5 547.8,999.8 545.2,1002.4 542.1,1001.4 539.4,1003.6 537.1,1006.6 536.8,1007.0 534.0,1004.1 531.4,1007.9 529.1,1009.3 526.1,1008.5 523.0,1005.9 520.4,1004.1 517.7,1005.2 515.4,1004.9 512.3,1007.5 509.7,1012.8 507.0,1009.8 504.2,1011.6 501.6,1004.4 499.3,1015.6 499.0,1015.1 496.3,1011.3 493.2,1006.7 490.1,1015.6 487.9,1016.2 485.6,1007.5 483.3,1005.2 480.2,1004.1 477.6,1004.9 474.1,1003.3 471.5,1005.2 468.8,1010.5 466.5,1011.3 463.4,1004.4 460.8,1002.4 457.8,1004.9 455.0,1004.4 453.7,1004.4 451.1,1003.9 448.4,1003.3 447.6,1003.8 444.6,1005.5 441.5,1002.7 438.8,1000.3 436.2,1002.8 433.4,1005.5 430.5,1001.3 430.0,1000.6 427.8,1002.5 425.5,1004.4 422.7,994.8 422.4,993.7 420.1,990.6 419.8,990.2 417.1,994.5 414.5,1004.4 411.7,1003.2 409.0,1005.0 408.7,1005.2 406.4,978.4 403.8,971.6 401.0,979.2 398.3,987.6 395.4,972.3 392.6,981.0 390.3,981.9 387.3,988.1 384.2,983.8 381.9,985.0 378.9,1002.4 376.3,1003.1 374.3,1003.6 373.5,1004.2 370.8,1006.4 368.9,1005.2 365.9,1005.2 362.8,1005.2 360.5,1003.6 357.5,994.8 354.4,996.0 352.1,998.3 349.1,991.4 344.5,999.1 341.1,1002.4 338.4,995.2 335.6,1006.4 333.0,1008.2 332.2,1009.3 330.0,1012.5 327.4,1012.1 326.9,1012.0 323.8,1013.3 320.0,1013.6 316.7,1015.1 313.9,1007.5 311.2,1013.6 308.6,1015.9 305.0,1014.6 301.7,1016.6 298.3,1018.6 294.8,1014.3 291.8,1018.6 286.7,1018.2 285.2,967.0 283.8,924.2 282.1,939.5 280.6,971.6 278.5,1018.2 276.0,1015.9 272.7,1018.6 268.1,1018.6 265.0,1018.6 262.0,1018.6 260.4,1018.6 258.9,1018.4 256.6,1018.2 254.0,1004.1 251.3,1005.4 249.0,1006.4 248.2,1005.9 245.5,1004.1 242.9,1004.7 240.6,1005.2 237.5,1006.1 236.7,1006.4 234.8,1004.9 232.5,1003.2 232.2,1003.4 229.1,1005.9 227.6,1006.2 226.8,1006.4 223.8,1011.6 222.2,1011.1 219.2,1010.2 216.1,1011.3 213.1,1018.2" fill="#EAB839" fill-opacity="0.1"/><polyline points="213.1,1018.2 216.1,1011.3 219.2,1010.2 223.8,1011.6 226.8,1006.4 229.1,1005.9 232.5,1003.2 236.7,1006.4 240.6,1005.2 245.5,1004.1 249.0,1006.4 254.0,1004.1 256.6,1018.2 260.4,1018.6 272.7,1018.6 276.0,1015.9 278.5,1018.2 280.6,971.6 282.1,939.5 283.8,924.2 285.2,967.0 286.7,1018.2 291.8,1018.6 294.8,1014.3 298.3,1018.6 301.7,1016.6 305.0,1014.6 308.6,1015.9 311.2,1013.6 313.9,1007.5 316.7,1015.1 320.0,1013.6 323.8,1013.3 326.9,1012.0 330.0,1012.5 333.0,1008.2 335.6,1006.4 338.4,995.2 341.1,1002.4 344.5,999.1 349.1,991.4 352.1,998.3 354.4,996.0 357.5,994.8 360.5,1003.6 362.8,1005.2 368.9,1005.2 370.8,1006.4 374.3,1003.6 378.9,1002.4 381.9,985.0 384.2,983.8 387.3,988.1 390.3,981.9 392.6,981.0 395.4,972.3 398.3,987.6 401.0,979.2 403.8,971.6 406.4,978.4 408.7,1005.2 411.7,1003.2 414.5,1004.4 417.1,994.5 419.8,990.2 422.4,993.7 425.5,1004.4 430.0,1000.6 433.4,1005.5 438.8,1000.3 444.6,1005.5 448.4,1003.3 453.7,1004.4 455.0,1004.4 457.8,1004.9 460.8,1002.4 463.4,1004.4 466.5,1011.3 468.8,1010.5 471.5,1005.2 474.1,1003.3 477.6,1004.9 480.2,1004.1 483.3,1005.2 485.6,1007.5 487.9,1016.2 490.1,1015.6 493.2,1006.7 496.3,1011.3 499.3,1015.6 501.6,1004.4 504.2,1011.6 507.0,1009.8 509.7,1012.8 512.3,1007.5 515.4,1004.9 517.7,1005.2 520.4,1004.1 523.0,1005.9 526.1,1008.5 529.1,1009.3 531.4,1007.9 534.0,1004.1 536.8,1007.0 539.4,1003.6 542.1,1001.4 545.2,1002.4 547.8,999.8 550.5,1007.5 553.6,1003.6 555.9,1000.6 558.6,1010.5 561.2,1012.0 564.0,998.8 566.6,1002.1 569.3,1001.4 572.4,1012.5 575.0,1009.8 577.7,1015.6 580.3,1016.2 583.1,1014.6 585.7,1014.3 588.3,986.1 591.0,986.5 594.1,988.4 596.4,1015.6 601.7,1016.2 606.3,1015.9 610.9,1015.6 618.5,1016.2 621.6,1014.3 623.9,1013.1 626.9,1016.2 632.3,1015.9 638.4,1015.6 642.7,1014.0 646.0,1018.2 648.3,1017.7 653.7,993.7 656.7,1012.8 659.8,1017.4 664.0,1015.9 667.4,995.2 670.0,1005.2 672.8,990.2 675.5,994.5 678.4,996.0 681.2,980.7 683.5,985.0 686.5,986.8 689.6,989.1 691.9,1014.3 694.9,1014.3 697.2,1015.6 700.3,1007.5" fill="none" stroke="#7EB26D" stroke-width="1.25" stroke-linejoin="round"/><polyline points="213.1,968.5 216.1,961.6 219.2,960.1 222.2,960.9 227.6,954.7 232.2,952.9 234.8,956.6 237.5,948.9 240.6,946.8 242.9,954.0 245.5,957.0 248.2,953.5 251.3,955.0 254.0,954.0 256.6,968.8 258.9,965.4 262.0,958.6 265.0,967.7 268.1,968.8 272.7,968.8 276.0,966.2 278.5,968.5 280.6,905.8 282.1,882.9 283.8,869.2 285.2,898.2 286.7,968.2 291.8,968.5 294.8,964.2 298.3,968.5 301.7,965.7 305.0,963.6 308.6,965.7 311.2,963.9 313.9,956.6 316.7,964.7 320.0,962.7 323.8,962.7 327.4,965.4 330.0,957.0 332.2,955.5 335.6,955.0 338.4,943.3 341.1,950.9 344.5,947.1 349.1,938.4 352.1,945.6 354.4,943.3 357.5,942.2 360.5,950.9 362.8,954.4 365.9,950.9 368.9,952.5 373.5,954.4 376.3,948.3 378.9,949.4 381.9,931.8 384.2,931.1 387.3,935.6 390.3,929.1 392.6,928.0 395.4,919.3 398.3,935.6 401.0,925.7 403.8,918.1 406.4,924.2 409.0,953.5 411.7,940.5 414.5,945.1 417.1,931.5 420.1,931.4 422.7,928.8 425.5,942.1 427.8,942.5 430.5,936.4 433.4,944.4 436.2,942.5 438.8,940.2 441.5,944.0 444.6,952.5 447.6,950.9 451.1,950.6 453.7,953.2 455.0,956.3 457.8,943.7 460.8,932.1 463.4,950.2 466.5,960.1 468.8,958.6 471.5,952.5 474.1,950.5 477.6,952.5 480.2,951.7 483.3,952.5 485.6,954.7 487.9,966.2 490.1,965.1 493.2,954.4 496.3,957.8 499.0,967.7 501.6,954.4 504.2,957.8 507.0,957.5 509.7,962.1 512.3,955.5 515.4,952.1 517.7,952.5 520.4,951.4 523.0,953.5 526.1,956.6 529.1,957.5 531.4,955.5 534.0,949.9 537.1,955.5 539.4,948.3 542.1,945.6 545.2,948.3 547.8,947.9 550.5,951.7 553.6,947.9 555.9,945.1 558.6,956.3 561.2,959.0 564.0,942.5 566.6,947.9 569.3,947.9 572.4,960.6 575.0,952.5 577.7,950.9 580.3,952.9 583.1,956.6 585.7,947.1 588.3,925.7 591.0,923.0 594.1,926.9 596.4,948.3 599.4,950.9 601.7,951.7 604.4,950.5 607.5,952.9 610.9,950.5 615.5,950.9 618.5,952.5 621.3,942.5 623.9,940.2 626.9,954.7 629.2,959.3 632.0,947.4 634.9,953.5 637.6,951.4 640.4,949.9 642.7,953.2 645.7,968.2 648.3,962.1 653.7,929.1 656.7,960.1 659.8,967.7 661.6,967.7 664.4,964.2 667.4,931.5 670.0,949.4 672.8,923.0 675.5,935.2 678.4,927.2 681.2,907.4 683.5,915.3 686.5,918.1 689.6,920.4 691.9,964.7 694.9,964.7 697.2,965.4 700.3,957.8" fill="none" stroke="#EAB839" stroke-width="1.25" stroke-linejoin="round"/>
<rect x="162.0" y="1056.0" width="14" height="4" rx="1" fill="#7EB26D"/><text x="184.1" y="1062.0" text-anchor="start" font-size="12" fill="#ccccdc" textLength="45.0" lengthAdjust="spacingAndGlyphs">recieved</text><text x="236.1" y="1062.0" text-anchor="start" font-size="12" fill="#ccccdc" textLength="74.0" lengthAdjust="spacingAndGlyphs">Avg: 886 kb/s</text><rect x="321.3" y="1056.0" width="14" height="4" rx="1" fill="#EAB839"/><text x="343.3" y="1062.0" text-anchor="start" font-size="12" fill="#ccccdc" textLength="22.7" lengthAdjust="spacingAndGlyphs">sent</text><text x="372.9" y="1062.0" text-anchor="start" font-size="12" fill="#ccccdc" textLength="81.6" lengthAdjust="spacingAndGlyphs">Avg: 3.64 Mb/s</text>
</svg></div>
<div class="panel" style="left:733px;top:779px;width:582px;height:296px">
<svg width="582" height="296" viewBox="733 779 582 296">
<text x="1024.0" y="801.1" text-anchor="middle" font-size="14" fill="#ccccdc" textLength="162.5" lengthAdjust="spacingAndGlyphs" stroke="#ccccdc" stroke-width="0.35">DELETE Container/Object</text>
<g stroke="rgba(204,204,220,0.2)" stroke-width="1" shape-rendering="crispEdges"><line x1="769.3" x2="1289.9" y1="829.4" y2="829.4"/><line x1="769.3" x2="1289.9" y1="876.9" y2="876.9"/><line x1="769.3" x2="1289.9" y1="924.4" y2="924.4"/><line x1="769.3" x2="1289.9" y1="971.8" y2="971.8"/><line x1="769.3" x2="1289.9" y1="1019.3" y2="1019.3"/><line x1="845.2" x2="845.2" y1="829.4" y2="1019.3"/><line x1="932.4" x2="932.4" y1="829.4" y2="1019.3"/><line x1="1019.6" x2="1019.6" y1="829.4" y2="1019.3"/><line x1="1106.8" x2="1106.8" y1="829.4" y2="1019.3"/><line x1="1194.0" x2="1194.0" y1="829.4" y2="1019.3"/><line x1="1281.2" x2="1281.2" y1="829.4" y2="1019.3"/></g>
<text x="762.9" y="833.6" text-anchor="end" font-size="12" fill="#ccccdc" textLength="20.2" lengthAdjust="spacingAndGlyphs">200</text>
<text x="762.9" y="881.1" text-anchor="end" font-size="12" fill="#ccccdc" textLength="20.2" lengthAdjust="spacingAndGlyphs">150</text>
<text x="762.9" y="928.6" text-anchor="end" font-size="12" fill="#ccccdc" textLength="20.2" lengthAdjust="spacingAndGlyphs">100</text>
<text x="762.9" y="976.0" text-anchor="end" font-size="12" fill="#ccccdc" textLength="13.5" lengthAdjust="spacingAndGlyphs">50</text>
<text x="762.9" y="1023.5" text-anchor="end" font-size="12" fill="#ccccdc" textLength="6.7" lengthAdjust="spacingAndGlyphs">0</text>
<text x="845.2" y="1038.3" text-anchor="middle" font-size="12" fill="#ccccdc" textLength="29.9" lengthAdjust="spacingAndGlyphs">10:45</text>
<text x="932.4" y="1038.3" text-anchor="middle" font-size="12" fill="#ccccdc" textLength="29.9" lengthAdjust="spacingAndGlyphs">10:50</text>
<text x="1019.6" y="1038.3" text-anchor="middle" font-size="12" fill="#ccccdc" textLength="29.9" lengthAdjust="spacingAndGlyphs">10:55</text>
<text x="1106.8" y="1038.3" text-anchor="middle" font-size="12" fill="#ccccdc" textLength="29.9" lengthAdjust="spacingAndGlyphs">11:00</text>
<text x="1194.0" y="1038.3" text-anchor="middle" font-size="12" fill="#ccccdc" textLength="29.9" lengthAdjust="spacingAndGlyphs">11:05</text>
<text x="1281.2" y="1038.3" text-anchor="middle" font-size="12" fill="#ccccdc" textLength="29.9" lengthAdjust="spacingAndGlyphs">11:10</text>
<polygon points="769.5,1018.8 1234.6,1018.8 1237.4,938.7 1240.5,923.1 1243.2,1011.6 1246.3,1018.1 1249.0,1018.8 1252.1,971.8 1255.1,945.5 1258.0,975.6 1260.9,899.8 1263.8,927.0 1266.7,901.7 1269.6,844.3 1272.6,876.8 1275.5,874.5 1278.4,887.1 1281.3,1018.8 1289.9,1018.8 1289.9,1019.3 769.5,1019.3" fill="#7EB26D" fill-opacity="0.1"/><polygon points="769.5,1018.8 1234.6,1018.8 1237.4,974.7 1240.5,963.0 1243.2,1011.6 1246.3,1018.1 1249.0,1018.8 1252.1,978.6 1255.1,958.1 1258.0,975.6 1260.9,918.2 1263.8,952.3 1266.7,940.6 1269.6,914.4 1272.6,932.5 1275.5,931.9 1278.4,935.2 1281.3,1018.8 1289.9,1018.8 1289.9,1019.3 769.5,1019.3" fill="#EAB839" fill-opacity="0.1"/><polygon points="769.5,1018.8 1234.6,1018.8 1237.4,974.7 1240.5,963.0 1243.2,1011.6 1246.3,1018.1 1249.0,1018.8 1252.1,978.6 1255.1,958.1 1258.0,975.6 1260.9,918.2 1263.8,952.3 1266.7,940.6 1269.6,914.4 1272.6,932.5 1275.5,931.9 1278.4,935.2 1281.3,1018.8 1289.9,1018.8 1289.9,1019.3 769.5,1019.3" fill="#6ED0E0" fill-opacity="0.1"/><polyline points="769.5,1018.8 1234.6,1018.8 1237.4,938.7 1240.5,923.1 1243.2,1011.6 1246.3,1018.1 1249.0,1018.8 1252.1,971.8 1255.1,945.5 1258.0,975.6 1260.9,899.8 1263.8,927.0 1266.7,901.7 1269.6,844.3 1272.6,876.8 1275.5,874.5 1278.4,887.1 1281.3,1018.8 1289.9,1018.8" fill="none" stroke="#7EB26D" stroke-width="1.2" stroke-linejoin="round"/><polyline points="769.5,1018.8 1234.6,1018.8 1237.4,974.7 1240.5,963.0 1243.2,1011.6 1246.3,1018.1 1249.0,1018.8 1252.1,978.6 1255.1,958.1 1258.0,975.6 1260.9,918.2 1263.8,952.3 1266.7,940.6 1269.6,914.4 1272.6,932.5 1275.5,931.9 1278.4,935.2 1281.3,1018.8 1289.9,1018.8" fill="none" stroke="#EAB839" stroke-width="1" stroke-linejoin="round"/><polyline points="769.5,1018.8 1234.6,1018.8 1237.4,974.7 1240.5,963.0 1243.2,1011.6 1246.3,1018.1 1249.0,1018.8 1252.1,978.6 1255.1,958.1 1258.0,975.6 1260.9,918.2 1263.8,952.3 1266.7,940.6 1269.6,914.4 1272.6,932.5 1275.5,931.9 1278.4,935.2 1281.3,1018.8 1289.9,1018.8" fill="none" stroke="#6ED0E0" stroke-width="1.2" stroke-linejoin="round"/><line x1="769.3" x2="1234" y1="1018.8" y2="1018.8" stroke="#9bd0a5" stroke-width="1.6"/><line x1="1281.5" x2="1289.9" y1="1018.8" y2="1018.8" stroke="#9bd0a5" stroke-width="1.6"/>
<rect x="752.1" y="1056.0" width="14" height="4" rx="1" fill="#7EB26D"/><text x="774.1" y="1062.0" text-anchor="start" font-size="12" fill="#ccccdc" textLength="76.2" lengthAdjust="spacingAndGlyphs">delete objects</text><text x="857.5" y="1062.0" text-anchor="start" font-size="12" fill="#ccccdc" textLength="67.7" lengthAdjust="spacingAndGlyphs">Total: 1.34 K</text><rect x="935.5" y="1056.0" width="14" height="4" rx="1" fill="#EAB839"/><text x="957.5" y="1062.0" text-anchor="start" font-size="12" fill="#ccccdc" textLength="93.7" lengthAdjust="spacingAndGlyphs">delete containers</text><text x="1058.4" y="1062.0" text-anchor="start" font-size="12" fill="#ccccdc" textLength="53.2" lengthAdjust="spacingAndGlyphs">Total: 898</text><rect x="1122.1" y="1056.0" width="14" height="4" rx="1" fill="#6ED0E0"/><text x="1144.5" y="1062.0" text-anchor="start" font-size="12" fill="#ccccdc" textLength="93.3" lengthAdjust="spacingAndGlyphs">delete containers</text><text x="1245.1" y="1062.0" text-anchor="start" font-size="12" fill="#ccccdc" textLength="53.2" lengthAdjust="spacingAndGlyphs">Total: 898</text>
</svg></div>
<div class="panel" style="left:1322px;top:703px;width:582px;height:372px">
<svg width="582" height="372" viewBox="1322 703 582 372">
<text x="1613.0" y="725.1" text-anchor="middle" font-size="14" fill="#ccccdc" textLength="130.2" lengthAdjust="spacingAndGlyphs" stroke="#ccccdc" stroke-width="0.35">Per Disk Throughput</text>
<g stroke="rgba(204,204,220,0.2)" stroke-width="1" shape-rendering="crispEdges"><line x1="1383.7" x2="1878.8" y1="753.1" y2="753.1"/><line x1="1383.7" x2="1878.8" y1="795.4" y2="795.4"/><line x1="1383.7" x2="1878.8" y1="837.7" y2="837.7"/><line x1="1383.7" x2="1878.8" y1="880.0" y2="880.0"/><line x1="1383.7" x2="1878.8" y1="922.3" y2="922.3"/><line x1="1383.7" x2="1878.8" y1="964.6" y2="964.6"/><line x1="1455.9" x2="1455.9" y1="753.1" y2="964.6"/><line x1="1538.8" x2="1538.8" y1="753.1" y2="964.6"/><line x1="1621.7" x2="1621.7" y1="753.1" y2="964.6"/><line x1="1704.6" x2="1704.6" y1="753.1" y2="964.6"/><line x1="1787.6" x2="1787.6" y1="753.1" y2="964.6"/><line x1="1870.5" x2="1870.5" y1="753.1" y2="964.6"/></g>
<text x="1378.4" y="757.3" text-anchor="end" font-size="12" fill="#ccccdc" textLength="27.0" lengthAdjust="spacingAndGlyphs">1250</text>
<text x="1378.4" y="799.6" text-anchor="end" font-size="12" fill="#ccccdc" textLength="27.0" lengthAdjust="spacingAndGlyphs">1000</text>
<text x="1378.4" y="841.9" text-anchor="end" font-size="12" fill="#ccccdc" textLength="20.2" lengthAdjust="spacingAndGlyphs">750</text>
<text x="1378.4" y="884.2" text-anchor="end" font-size="12" fill="#ccccdc" textLength="20.2" lengthAdjust="spacingAndGlyphs">500</text>
<text x="1378.4" y="926.5" text-anchor="end" font-size="12" fill="#ccccdc" textLength="20.2" lengthAdjust="spacingAndGlyphs">250</text>
<text x="1378.4" y="968.8" text-anchor="end" font-size="12" fill="#ccccdc" textLength="6.7" lengthAdjust="spacingAndGlyphs">0</text>
<text x="1455.9" y="984.7" text-anchor="middle" font-size="12" fill="#ccccdc" textLength="29.9" lengthAdjust="spacingAndGlyphs">10:45</text>
<text x="1538.8" y="984.7" text-anchor="middle" font-size="12" fill="#ccccdc" textLength="29.9" lengthAdjust="spacingAndGlyphs">10:50</text>
<text x="1621.7" y="984.7" text-anchor="middle" font-size="12" fill="#ccccdc" textLength="29.9" lengthAdjust="spacingAndGlyphs">10:55</text>
<text x="1704.6" y="984.7" text-anchor="middle" font-size="12" fill="#ccccdc" textLength="29.9" lengthAdjust="spacingAndGlyphs">11:00</text>
<text x="1787.6" y="984.7" text-anchor="middle" font-size="12" fill="#ccccdc" textLength="29.9" lengthAdjust="spacingAndGlyphs">11:05</text>
<text x="1870.5" y="984.7" text-anchor="middle" font-size="12" fill="#ccccdc" textLength="29.9" lengthAdjust="spacingAndGlyphs">11:10</text>
<polyline points="1383.7,962.8 1384.4,963.3 1385.5,962.7 1385.8,963.3 1386.7,962.6 1387.0,963.3 1387.8,963.2 1389.2,962.9 1389.7,962.6 1389.9,963.1 1392.0,963.0 1392.3,963.3 1393.8,962.7 1394.1,963.1 1395.0,963.1 1395.5,963.4 1396.1,963.2 1397.5,963.3 1397.6,963.3 1398.0,963.2 1398.2,962.6 1400.3,962.9 1402.1,962.5 1402.3,962.9 1403.3,962.9 1404.4,962.8 1405.8,962.7 1406.0,963.2 1406.3,963.2 1406.5,962.8 1408.6,962.8 1410.4,962.9 1410.6,963.0 1411.6,962.6 1412.7,963.3 1414.1,963.3 1414.6,962.8 1414.7,962.6 1414.8,963.1 1416.8,962.4 1418.7,963.1 1418.9,963.2 1419.9,962.8 1420.5,962.8 1421.0,963.4 1422.4,963.3 1422.9,963.3 1423.1,963.1 1423.1,963.4 1425.1,962.7 1427.0,962.8 1427.2,962.9 1428.2,963.2 1429.3,963.3 1430.7,962.5 1431.0,963.0 1431.2,963.1 1431.3,963.0 1431.4,962.9 1433.4,962.5 1435.3,962.9 1435.5,963.2 1436.5,963.3 1437.6,962.5 1439.0,962.6 1439.5,962.7 1439.6,963.2 1441.7,962.5 1443.6,962.9 1443.8,962.7 1444.8,963.4 1445.8,962.9 1447.3,962.6 1447.8,962.6 1447.9,962.6 1450.0,963.0 1451.9,963.2 1452.1,962.5 1453.0,962.5 1453.1,962.5 1453.5,962.9 1454.1,962.5 1455.6,963.4 1456.0,962.5 1456.1,963.2 1456.2,963.2 1458.3,963.0 1460.2,962.8 1460.3,963.2 1461.4,963.2 1462.4,962.6 1463.9,962.8 1464.4,963.0 1464.5,962.6 1464.5,962.8 1466.6,962.5 1468.5,963.0 1468.6,963.3 1469.7,963.4 1470.7,962.8 1472.2,963.1 1472.7,963.4 1472.8,962.9 1473.0,962.8 1474.8,962.5 1475.0,963.1 1476.8,963.1 1476.9,962.5 1478.0,962.7 1479.0,963.3 1480.3,963.0 1480.5,963.2 1481.0,962.7 1481.1,962.7 1483.1,962.9 1483.8,963.4 1485.1,962.9 1485.2,963.2 1486.3,962.9 1487.3,963.2 1488.8,963.3 1489.3,962.5 1489.3,962.8 1491.4,962.6 1492.1,962.8 1493.4,963.4 1493.5,962.4 1494.6,963.2 1495.6,963.4 1497.1,963.1 1497.6,963.3 1497.6,963.0 1499.7,962.7 1500.2,962.9 1501.7,962.9 1501.8,962.4 1502.9,962.9 1503.8,962.5 1505.4,962.7 1505.9,963.0 1505.9,962.6 1508.0,963.2 1508.7,963.2 1510.0,962.5 1510.1,963.1 1511.2,963.0 1512.1,962.7 1513.7,962.5 1514.1,962.9 1514.2,962.4 1514.2,962.7 1516.3,962.8 1518.3,962.8 1518.4,963.2 1519.5,962.5 1520.4,963.2 1522.0,962.5 1522.5,962.7 1522.5,963.1 1524.6,963.3 1525.2,962.6 1526.6,962.7 1526.6,962.6 1527.8,963.2 1528.7,963.3 1530.3,963.2 1530.8,962.9 1530.8,962.7 1532.9,963.0 1533.5,963.3 1534.9,962.9 1534.9,963.0 1536.1,962.6 1537.0,962.4 1538.6,962.9 1539.1,963.1 1539.1,963.2 1541.1,963.4 1541.9,963.4 1543.2,963.2 1543.2,963.2 1544.4,963.0 1545.3,962.6 1546.9,962.5 1547.4,962.6 1547.4,962.8 1549.4,962.4 1550.2,962.5 1551.5,963.1 1551.5,963.0 1552.7,962.4 1553.6,962.4 1555.2,963.1 1555.6,963.2 1555.7,962.6 1557.7,963.3 1559.8,962.4 1559.8,963.2 1561.0,962.6 1561.9,962.8 1563.5,962.9 1563.9,962.5 1564.0,963.2 1566.0,962.7 1566.6,963.2 1568.1,962.6 1568.1,962.8 1569.0,962.7 1569.3,962.6 1570.1,963.0 1571.8,962.8 1572.2,962.6 1572.3,962.5 1574.3,962.8 1575.0,963.4 1576.4,962.9 1576.4,962.5 1577.0,962.7 1577.6,963.3 1578.4,962.6 1580.1,962.7 1580.5,963.3 1580.6,963.3 1582.6,962.8 1583.3,963.2 1584.6,963.4 1584.7,962.6 1585.9,962.5 1586.7,962.4 1588.4,963.2 1588.8,962.4 1588.9,963.3 1590.9,962.6 1591.0,963.1 1592.9,962.9 1593.0,962.4 1594.2,962.7 1595.0,963.1 1596.7,962.7 1597.1,963.0 1597.2,962.9 1599.1,963.4 1600.0,962.4 1601.2,963.4 1601.3,963.4 1602.5,963.2 1603.3,962.7 1605.0,962.7 1605.4,963.3 1605.5,963.1 1607.4,962.9 1608.3,962.5 1609.5,963.2 1609.6,963.3 1610.8,963.1 1611.6,963.2 1613.3,962.5 1613.6,962.5 1613.8,963.4 1615.7,962.7 1616.4,963.1 1617.8,963.3 1617.9,962.6 1619.1,963.1 1619.9,963.4 1621.6,963.2 1621.9,962.6 1622.1,963.3 1624.0,962.4 1624.6,962.8 1626.1,962.6 1626.2,962.6 1627.4,962.7 1628.1,962.7 1629.9,963.3 1630.2,962.5 1630.4,963.3 1632.3,963.1 1633.0,962.5 1634.4,962.6 1634.5,963.2 1635.7,962.4 1636.4,962.8 1638.2,963.3 1638.5,962.9 1638.7,963.1 1640.6,962.5 1641.0,963.3 1642.6,962.9 1642.8,963.2 1644.0,962.8 1644.7,963.3 1646.5,963.2 1646.8,962.6 1647.0,962.8 1648.9,963.0 1650.9,963.4 1651.1,963.4 1652.3,962.8 1652.4,963.1 1653.0,962.5 1654.8,963.2 1655.1,962.5 1655.3,962.5 1657.1,963.4 1659.2,962.9 1659.4,963.0 1660.6,962.8 1661.3,962.5 1663.0,963.4 1663.1,962.5 1663.4,963.0 1663.6,963.0 1665.4,962.7 1667.5,963.1 1667.7,963.3 1668.9,963.4 1669.6,963.4 1671.4,962.4 1671.6,963.3 1671.9,962.7 1673.7,963.0 1675.8,962.5 1676.0,963.2 1677.2,963.3 1677.9,963.2 1679.7,963.0 1679.9,963.4 1680.2,963.0 1682.0,963.0 1684.1,962.8 1684.3,962.6 1685.5,962.6 1686.1,963.2 1688.0,962.6 1688.1,962.4 1688.2,962.5 1688.5,963.1 1690.3,962.7 1692.4,963.2 1692.6,962.6 1693.7,962.9 1693.8,963.1 1694.4,963.3 1696.3,962.4 1696.5,963.3 1696.5,963.3 1696.8,962.5 1698.6,962.5 1699.2,963.4 1700.6,962.7 1700.9,962.5 1702.1,962.6 1702.7,963.3 1704.6,962.5 1704.8,963.3 1704.8,963.3 1705.1,963.0 1706.9,962.6 1708.9,963.0 1709.2,962.5 1710.4,963.4 1711.0,962.5 1712.9,962.7 1713.1,962.5 1713.1,963.3 1713.4,963.3 1715.1,962.9 1716.0,963.2 1717.2,962.8 1717.5,962.8 1718.7,962.5 1719.3,963.2 1721.2,962.9 1721.4,962.4 1721.5,962.7 1721.7,963.2 1723.4,962.5 1725.5,963.0 1725.8,962.7 1726.0,963.1 1727.0,962.7 1727.6,962.4 1729.5,962.6 1729.6,962.8 1729.8,963.1 1730.0,963.3 1731.7,962.9 1733.0,963.2 1733.8,962.5 1734.1,963.2 1735.2,963.1 1735.3,963.0 1735.9,962.5 1737.8,962.9 1737.9,963.3 1737.9,963.4 1738.3,963.2 1740.0,962.8 1742.1,962.8 1742.4,962.9 1743.0,962.8 1743.6,963.1 1744.1,962.9 1746.1,962.4 1746.2,962.5 1746.6,962.6 1748.3,963.2 1748.8,962.4 1750.4,962.5 1750.7,963.4 1751.9,963.4 1752.4,963.2 1754.4,962.6 1754.5,962.9 1754.6,962.8 1754.9,963.2 1756.6,963.3 1758.7,962.8 1759.0,962.6 1760.2,962.7 1760.7,962.7 1762.7,963.4 1762.8,963.1 1763.2,962.5 1764.9,962.5 1766.9,962.9 1767.3,962.9 1768.5,962.6 1769.0,963.2 1771.0,962.4 1771.1,962.7 1771.5,962.8 1773.2,963.0 1775.2,962.8 1775.6,962.5 1776.8,963.0 1777.3,962.9 1779.3,963.1 1779.4,962.5 1779.8,963.0 1781.4,963.0 1783.5,963.2 1783.9,962.4 1785.1,962.4 1785.6,962.7 1787.6,963.0 1787.7,963.2 1788.1,963.4 1789.7,963.3 1791.8,962.8 1792.2,962.8 1793.4,962.5 1793.9,963.2 1795.9,962.5 1795.9,962.5 1796.4,962.6 1798.0,962.8 1800.1,963.2 1800.5,962.9 1801.7,962.6 1802.2,963.0 1804.2,962.6 1804.2,962.6 1804.7,962.7 1806.3,963.2 1808.4,962.8 1808.8,963.4 1810.0,963.3 1810.4,963.3 1812.5,963.2 1812.5,963.0 1813.0,963.2 1814.6,963.1 1816.7,963.0 1817.1,963.2 1818.3,963.2 1818.7,962.4 1820.8,963.2 1820.8,962.4 1821.0,963.0 1821.3,962.8 1822.9,962.6 1823.6,963.3 1824.9,962.5 1825.4,963.0 1826.6,963.3 1827.0,963.1 1829.1,962.6 1829.1,963.1 1829.2,962.6 1829.6,962.5 1831.2,962.6 1831.9,962.8 1832.4,962.7 1833.2,962.6 1833.7,962.5 1834.9,962.5 1835.0,963.4 1835.3,962.4 1837.4,962.4 1837.4,963.0 1837.7,962.8 1837.9,962.6 1839.4,962.6 1840.3,963.3 1841.5,962.6 1842.0,963.2 1843.0,962.7 1843.2,963.1 1843.6,962.6 1845.6,963.1 1845.7,963.3 1845.7,963.0 1846.0,963.1 1846.2,962.3 1847.7,955.8 1849.8,955.9 1850.3,958.2 1851.5,957.1 1851.7,958.5 1851.9,960.5 1853.9,959.7 1854.0,962.0 1854.5,963.3 1855.3,957.0 1856.0,959.0 1856.2,959.0 1858.1,960.0 1858.6,957.5 1858.8,957.3 1859.7,958.1 1859.8,957.5 1860.2,957.3 1862.2,957.0 1862.3,956.4 1862.8,959.5 1864.0,961.2 1864.3,957.4 1865.8,960.4 1866.4,962.7 1866.9,962.8 1867.6,956.2 1868.0,963.2 1868.1,956.2 1868.4,959.8 1870.2,956.1 1870.5,960.5 1870.6,959.6 1871.1,960.3 1872.6,963.2 1873.8,962.8 1874.7,963.1 1875.2,962.9 1876.4,963.3 1876.7,962.6 1877.0,963.4 1878.8,962.7" fill="none" stroke="#7EB26D" stroke-width="1.35" stroke-linejoin="round"/><polyline points="1383.7,964.1 1384.4,964.1 1385.5,964.1 1385.8,964.1 1386.7,959.3 1387.0,963.5 1387.8,962.1 1389.2,964.1 1389.7,964.1 1389.9,964.1 1392.0,964.1 1392.3,964.1 1393.8,961.9 1394.1,958.8 1395.0,957.7 1395.5,959.0 1396.1,962.0 1397.5,964.1 1397.6,964.1 1398.0,964.1 1398.2,964.1 1400.3,964.1 1402.1,962.4 1402.3,962.4 1403.3,960.1 1404.4,959.1 1405.8,964.1 1406.0,964.1 1406.3,964.1 1406.5,964.1 1408.6,964.1 1410.4,960.5 1410.6,958.7 1411.6,962.6 1412.7,959.4 1414.1,964.1 1414.6,964.1 1414.7,964.1 1414.8,964.1 1416.8,964.1 1418.7,960.8 1418.9,959.0 1419.9,959.0 1420.5,957.3 1421.0,962.7 1422.4,964.1 1422.9,964.1 1423.1,964.1 1423.1,964.1 1425.1,964.1 1427.0,959.9 1427.2,960.7 1428.2,963.3 1429.3,937.0 1430.7,901.5 1431.0,893.4 1431.2,898.8 1431.3,902.8 1431.4,904.3 1433.4,959.1 1435.3,959.3 1435.5,958.7 1436.5,956.6 1437.6,961.5 1439.0,964.1 1439.5,964.1 1439.6,964.1 1441.7,964.1 1443.6,961.2 1443.8,962.8 1444.8,962.7 1445.8,961.7 1447.3,964.1 1447.8,964.1 1447.9,964.1 1450.0,964.1 1451.9,963.4 1452.1,962.2 1453.0,960.2 1453.1,961.1 1453.5,962.4 1454.1,959.9 1455.6,964.1 1456.0,964.1 1456.1,964.1 1456.2,964.1 1458.3,964.1 1460.2,960.9 1460.3,962.2 1461.4,963.8 1462.4,963.7 1463.9,964.1 1464.4,964.1 1464.5,964.1 1464.5,964.1 1466.6,964.1 1468.5,961.4 1468.6,960.8 1469.7,961.4 1470.7,963.5 1472.2,964.1 1472.7,964.1 1472.8,964.1 1473.0,964.1 1474.8,964.1 1475.0,964.1 1476.8,963.7 1476.9,961.0 1478.0,954.1 1479.0,961.5 1480.3,963.7 1480.5,964.1 1481.0,964.1 1481.1,964.1 1483.1,964.1 1483.8,964.1 1485.1,960.7 1485.2,959.1 1486.3,958.8 1487.3,957.9 1488.8,964.1 1489.3,964.1 1489.3,964.1 1491.4,964.1 1492.1,964.1 1493.4,959.0 1493.5,956.4 1494.6,957.7 1495.6,963.2 1497.1,964.1 1497.6,964.1 1497.6,964.1 1499.7,964.1 1500.2,964.1 1501.7,962.6 1501.8,963.3 1502.9,955.4 1503.8,959.3 1505.4,964.1 1505.9,964.1 1505.9,964.1 1508.0,964.1 1508.7,964.1 1510.0,960.0 1510.1,960.8 1511.2,950.2 1512.1,958.8 1513.7,964.1 1514.1,964.1 1514.2,964.1 1514.2,964.1 1516.3,964.1 1518.3,961.3 1518.4,960.2 1519.5,951.1 1520.4,956.7 1522.0,964.1 1522.5,964.1 1522.5,964.1 1524.6,964.1 1525.2,964.1 1526.6,957.5 1526.6,957.3 1527.8,961.7 1528.7,962.6 1530.3,964.1 1530.8,964.1 1530.8,964.1 1532.9,964.1 1533.5,964.1 1534.9,961.2 1534.9,959.2 1536.1,950.6 1537.0,955.0 1538.6,964.1 1539.1,964.1 1539.1,964.1 1541.1,964.1 1541.9,964.1 1543.2,956.7 1543.2,963.7 1544.4,949.4 1545.3,962.1 1546.9,964.1 1547.4,964.1 1547.4,964.1 1549.4,964.1 1550.2,964.1 1551.5,962.8 1551.5,960.2 1552.7,961.7 1553.6,957.3 1555.2,964.1 1555.6,964.1 1555.7,964.1 1557.7,964.1 1559.8,959.7 1559.8,963.1 1561.0,963.3 1561.9,961.4 1563.5,964.1 1563.9,964.1 1564.0,964.1 1566.0,964.1 1566.6,964.1 1568.1,960.3 1568.1,962.6 1569.0,963.9 1569.3,950.9 1570.1,959.0 1571.8,964.1 1572.2,964.1 1572.3,964.1 1574.3,964.1 1575.0,964.1 1576.4,961.4 1576.4,961.2 1577.0,959.6 1577.6,958.4 1578.4,961.1 1580.1,964.1 1580.5,964.1 1580.6,964.1 1582.6,964.1 1583.3,964.1 1584.6,960.5 1584.7,960.2 1585.9,957.3 1586.7,962.1 1588.4,964.1 1588.8,964.1 1588.9,964.1 1590.9,964.1 1591.0,964.1 1592.9,958.9 1593.0,963.9 1594.2,952.4 1595.0,960.8 1596.7,964.1 1597.1,964.1 1597.2,964.1 1599.1,964.1 1600.0,964.1 1601.2,962.0 1601.3,960.0 1602.5,964.0 1603.3,957.1 1605.0,964.1 1605.4,964.1 1605.5,964.1 1607.4,964.1 1608.3,964.1 1609.5,961.5 1609.6,963.8 1610.8,949.0 1611.6,957.2 1613.3,964.1 1613.6,964.1 1613.8,964.1 1615.7,964.1 1616.4,964.1 1617.8,959.5 1617.9,960.9 1619.1,956.9 1619.9,954.1 1621.6,964.1 1621.9,964.1 1622.1,964.1 1624.0,964.1 1624.6,964.1 1626.1,959.3 1626.2,958.0 1627.4,956.4 1628.1,962.5 1629.9,964.1 1630.2,964.1 1630.4,964.1 1632.3,964.1 1633.0,964.1 1634.4,960.1 1634.5,958.2 1635.7,956.9 1636.4,963.6 1638.2,964.1 1638.5,964.1 1638.7,964.1 1640.6,964.1 1641.0,964.1 1642.6,957.8 1642.8,961.8 1644.0,951.3 1644.7,957.0 1646.5,964.1 1646.8,964.1 1647.0,964.1 1648.9,964.1 1650.9,958.5 1651.1,963.0 1652.3,949.8 1652.4,954.1 1653.0,963.0 1654.8,964.1 1655.1,964.1 1655.3,964.1 1657.1,964.1 1659.2,957.7 1659.4,963.9 1660.6,954.3 1661.3,958.6 1663.0,964.1 1663.1,964.1 1663.4,964.1 1663.6,964.1 1665.4,964.1 1667.5,961.5 1667.7,960.2 1668.9,962.2 1669.6,954.0 1671.4,964.1 1671.6,964.1 1671.9,964.1 1673.7,964.1 1675.8,960.0 1676.0,961.3 1677.2,957.7 1677.9,953.0 1679.7,905.1 1679.9,898.6 1680.2,891.0 1682.0,941.7 1684.1,964.1 1684.3,964.1 1685.5,964.1 1686.1,952.2 1688.0,917.9 1688.1,916.0 1688.2,918.2 1688.5,923.4 1690.3,956.5 1692.4,964.1 1692.6,964.1 1693.7,964.1 1693.8,964.1 1694.4,953.1 1696.3,914.4 1696.5,910.3 1696.5,910.4 1696.8,916.5 1698.6,953.2 1699.2,964.1 1700.6,964.1 1700.9,964.1 1702.1,964.1 1702.7,951.1 1704.6,904.1 1704.8,899.4 1704.8,899.1 1705.1,906.6 1706.9,950.6 1708.9,964.1 1709.2,964.1 1710.4,964.1 1711.0,951.8 1712.9,905.4 1713.1,901.1 1713.1,900.5 1713.4,907.8 1715.1,950.6 1716.0,964.1 1717.2,964.1 1717.5,964.1 1718.7,964.1 1719.3,955.6 1721.2,913.8 1721.4,910.3 1721.5,907.2 1721.7,911.6 1723.4,949.5 1725.5,964.1 1725.8,964.1 1726.0,964.1 1727.0,964.1 1727.6,955.5 1729.5,911.9 1729.6,908.5 1729.8,905.0 1730.0,909.6 1731.7,948.7 1733.0,964.1 1733.8,964.1 1734.1,964.1 1735.2,964.1 1735.3,964.1 1735.9,954.8 1737.8,922.9 1737.9,921.3 1737.9,921.9 1738.3,927.9 1740.0,956.0 1742.1,964.1 1742.4,964.1 1743.0,964.1 1743.6,964.1 1744.1,964.1 1746.1,964.1 1746.2,963.6 1746.6,955.1 1748.3,917.0 1748.8,905.6 1750.4,940.8 1750.7,948.3 1751.9,964.1 1752.4,959.4 1754.4,938.3 1754.5,937.2 1754.6,936.2 1754.9,939.4 1756.6,957.4 1758.7,964.1 1759.0,964.1 1760.2,964.1 1760.7,964.1 1762.7,964.1 1762.8,964.1 1763.2,964.1 1764.9,964.1 1766.9,964.1 1767.3,964.1 1768.5,964.1 1769.0,964.1 1771.0,964.1 1771.1,964.1 1771.5,964.1 1773.2,964.1 1775.2,964.1 1775.6,964.1 1776.8,964.1 1777.3,964.1 1779.3,964.1 1779.4,964.1 1779.8,964.1 1781.4,964.1 1783.5,964.1 1783.9,964.1 1785.1,964.1 1785.6,964.1 1787.6,964.1 1787.7,964.1 1788.1,964.1 1789.7,964.1 1791.8,964.1 1792.2,964.1 1793.4,964.1 1793.9,964.1 1795.9,964.1 1795.9,964.1 1796.4,964.1 1798.0,964.1 1800.1,964.1 1800.5,964.1 1801.7,964.1 1802.2,964.1 1804.2,964.1 1804.2,964.1 1804.7,964.1 1806.3,964.1 1808.4,964.1 1808.8,964.1 1810.0,964.1 1810.4,964.1 1812.5,964.1 1812.5,964.1 1813.0,964.1 1814.6,964.1 1816.7,964.1 1817.1,964.1 1818.3,964.1 1818.7,964.1 1820.8,964.1 1820.8,964.1 1821.0,964.1 1821.3,964.1 1822.9,964.1 1823.6,964.1 1824.9,964.1 1825.4,964.1 1826.6,964.1 1827.0,964.1 1829.1,964.1 1829.1,964.1 1829.2,964.1 1829.6,964.1 1831.2,964.1 1831.9,964.1 1832.4,964.1 1833.2,964.1 1833.7,964.1 1834.9,964.1 1835.0,964.1 1835.3,964.1 1837.4,964.1 1837.4,964.1 1837.7,964.1 1837.9,964.1 1839.4,964.1 1840.3,964.1 1841.5,964.1 1842.0,964.1 1843.0,964.1 1843.2,964.1 1843.6,964.1 1845.6,964.1 1845.7,964.1 1845.7,964.1 1846.0,964.1 1846.2,953.7 1847.7,952.0 1849.8,949.7 1850.3,949.1 1851.5,947.7 1851.7,947.5 1851.9,947.3 1853.9,945.0 1854.0,944.9 1854.5,944.4 1855.3,943.6 1856.0,943.2 1856.2,943.1 1858.1,941.9 1858.6,941.6 1858.8,941.5 1859.7,940.9 1859.8,940.8 1860.2,940.6 1862.2,939.3 1862.3,939.3 1862.8,939.0 1864.0,938.3 1864.3,938.1 1865.8,937.2 1866.4,938.9 1866.9,941.6 1867.6,945.1 1868.0,947.2 1868.1,947.7 1868.4,949.4 1870.2,957.3 1870.5,957.3 1870.6,957.3 1871.1,964.1 1872.6,964.1 1873.8,964.1 1874.7,964.1 1875.2,964.1 1876.4,964.1 1876.7,964.1 1877.0,964.1 1878.8,964.1" fill="none" stroke="#EAB839" stroke-width="1.35" stroke-linejoin="round"/><polyline points="1383.7,964.1 1384.4,964.1 1385.5,964.1 1385.8,964.1 1386.7,964.1 1387.0,964.1 1387.8,964.1 1389.2,964.1 1389.7,964.1 1389.9,964.1 1392.0,964.1 1392.3,964.1 1393.8,964.1 1394.1,964.1 1395.0,964.1 1395.5,964.1 1396.1,964.1 1397.5,964.1 1397.6,964.1 1398.0,964.1 1398.2,964.1 1400.3,964.1 1402.1,964.1 1402.3,964.1 1403.3,964.1 1404.4,964.1 1405.8,964.1 1406.0,964.1 1406.3,964.1 1406.5,964.1 1408.6,964.1 1410.4,964.1 1410.6,964.1 1411.6,964.1 1412.7,964.1 1414.1,964.1 1414.6,964.1 1414.7,964.1 1414.8,964.1 1416.8,964.1 1418.7,953.6 1418.9,950.8 1419.9,937.9 1420.5,930.1 1421.0,936.5 1422.4,954.9 1422.9,961.5 1423.1,963.6 1423.1,964.1 1425.1,964.1 1427.0,964.1 1427.2,964.1 1428.2,964.1 1429.3,964.1 1430.7,964.1 1431.0,964.1 1431.2,964.1 1431.3,964.1 1431.4,964.1 1433.4,964.1 1435.3,964.1 1435.5,964.1 1436.5,964.1 1437.6,964.1 1439.0,964.1 1439.5,964.1 1439.6,964.1 1441.7,964.1 1443.6,964.1 1443.8,964.1 1444.8,964.1 1445.8,964.1 1447.3,964.1 1447.8,964.1 1447.9,964.1 1450.0,964.1 1451.9,943.9 1452.1,941.7 1453.0,929.1 1453.1,930.4 1453.5,935.8 1454.1,944.3 1455.6,964.1 1456.0,964.1 1456.1,964.1 1456.2,964.1 1458.3,964.1 1460.2,964.1 1460.3,964.1 1461.4,964.1 1462.4,964.1 1463.9,964.1 1464.4,964.1 1464.5,964.1 1464.5,964.1 1466.6,964.1 1468.5,964.1 1468.6,964.1 1469.7,964.1 1470.7,964.1 1472.2,964.1 1472.7,964.1 1472.8,964.1 1473.0,964.1 1474.8,964.1 1475.0,964.1 1476.8,964.1 1476.9,964.1 1478.0,959.4 1479.0,943.7 1480.3,923.0 1480.5,926.1 1481.0,934.1 1481.1,935.0 1483.1,964.1 1483.8,964.1 1485.1,964.1 1485.2,964.1 1486.3,964.1 1487.3,964.1 1488.8,964.1 1489.3,964.1 1489.3,964.1 1491.4,964.1 1492.1,964.1 1493.4,964.1 1493.5,964.1 1494.6,964.1 1495.6,964.1 1497.1,964.1 1497.6,964.1 1497.6,964.1 1499.7,964.1 1500.2,964.1 1501.7,964.1 1501.8,964.1 1502.9,964.1 1503.8,958.4 1505.4,945.4 1505.9,951.3 1505.9,948.7 1508.0,964.1 1508.7,964.1 1510.0,964.1 1510.1,964.1 1511.2,964.1 1512.1,957.6 1513.7,951.7 1514.1,952.7 1514.2,953.1 1514.2,949.5 1516.3,964.1 1518.3,964.1 1518.4,964.1 1519.5,964.1 1520.4,958.3 1522.0,953.1 1522.5,955.6 1522.5,945.7 1524.6,964.1 1525.2,964.1 1526.6,964.1 1526.6,964.1 1527.8,964.1 1528.7,957.2 1530.3,942.8 1530.8,946.2 1530.8,947.6 1532.9,964.1 1533.5,964.1 1534.9,964.1 1534.9,964.1 1536.1,964.1 1537.0,961.0 1538.6,948.4 1539.1,945.1 1539.1,947.1 1541.1,964.1 1541.9,964.1 1543.2,964.1 1543.2,964.1 1544.4,964.1 1545.3,960.9 1546.9,944.8 1547.4,955.7 1547.4,945.0 1549.4,964.1 1550.2,964.1 1551.5,964.1 1551.5,964.1 1552.7,964.1 1553.6,959.8 1555.2,938.7 1555.6,933.1 1555.7,938.1 1557.7,924.5 1559.8,912.6 1559.8,912.6 1561.0,912.6 1561.9,911.1 1563.5,903.7 1563.9,917.8 1564.0,920.5 1566.0,964.1 1566.6,961.7 1568.1,944.5 1568.1,944.1 1569.0,933.5 1569.3,937.0 1570.1,944.3 1571.8,944.8 1572.2,949.1 1572.3,951.6 1574.3,964.1 1575.0,956.8 1576.4,940.4 1576.4,939.9 1577.0,932.6 1577.6,939.9 1578.4,947.2 1580.1,953.1 1580.5,948.9 1580.6,949.9 1582.6,964.1 1583.3,964.1 1584.6,964.1 1584.7,964.1 1585.9,964.1 1586.7,960.1 1588.4,945.5 1588.8,951.5 1588.9,950.9 1590.9,939.3 1591.0,937.9 1592.9,957.3 1593.0,958.0 1594.2,964.1 1595.0,961.1 1596.7,951.5 1597.1,944.6 1597.2,946.0 1599.1,947.1 1600.0,938.7 1601.2,950.6 1601.3,951.4 1602.5,963.1 1603.3,960.8 1605.0,938.8 1605.4,951.6 1605.5,955.3 1607.4,931.4 1608.3,914.9 1609.5,937.6 1609.6,939.5 1610.8,962.2 1611.6,961.4 1613.3,939.0 1613.6,942.8 1613.8,952.5 1615.7,934.5 1616.4,923.8 1617.8,945.3 1617.9,947.1 1619.1,964.1 1619.9,960.2 1621.6,952.9 1621.9,947.5 1622.1,950.8 1624.0,936.5 1624.6,928.2 1626.1,948.5 1626.2,950.3 1627.4,964.1 1628.1,960.5 1629.9,947.9 1630.2,951.5 1630.4,947.3 1632.3,939.4 1633.0,930.1 1634.4,947.8 1634.5,949.7 1635.7,964.1 1636.4,960.8 1638.2,950.4 1638.5,948.4 1638.7,947.3 1640.6,950.0 1641.0,947.2 1642.6,957.9 1642.8,958.9 1644.0,964.1 1644.7,961.5 1646.5,941.0 1646.8,951.5 1647.0,948.2 1648.9,964.1 1650.9,935.4 1651.1,931.1 1652.3,900.7 1652.4,898.1 1653.0,909.1 1654.8,948.0 1655.1,947.4 1655.3,949.4 1657.1,964.1 1659.2,964.1 1659.4,964.1 1660.6,962.5 1661.3,954.3 1663.0,926.8 1663.1,932.9 1663.4,933.9 1663.6,933.1 1665.4,962.8 1667.5,964.1 1667.7,964.1 1668.9,964.1 1669.6,962.3 1671.4,949.0 1671.6,955.0 1671.9,949.6 1673.7,964.1 1675.8,964.1 1676.0,964.1 1677.2,964.1 1677.9,960.4 1679.7,942.3 1679.9,943.6 1680.2,954.1 1682.0,964.1 1684.1,964.1 1684.3,964.1 1685.5,964.1 1686.1,962.2 1688.0,946.6 1688.1,948.5 1688.2,950.8 1688.5,955.1 1690.3,964.1 1692.4,924.5 1692.6,917.0 1693.7,882.4 1693.8,885.5 1694.4,902.7 1696.3,946.0 1696.5,942.6 1696.5,951.7 1696.8,940.3 1698.6,911.7 1699.2,895.1 1700.6,933.5 1700.9,940.2 1702.1,964.1 1702.7,960.9 1704.6,946.7 1704.8,954.5 1704.8,950.7 1705.1,953.5 1706.9,964.1 1708.9,964.1 1709.2,964.1 1710.4,964.1 1711.0,961.8 1712.9,943.9 1713.1,943.0 1713.1,946.5 1713.4,950.2 1715.1,947.0 1716.0,938.7 1717.2,950.6 1717.5,953.4 1718.7,964.1 1719.3,962.1 1721.2,939.4 1721.4,948.2 1721.5,946.3 1721.7,950.8 1723.4,963.7 1725.5,940.8 1725.8,937.5 1726.0,935.3 1727.0,946.4 1727.6,949.9 1729.5,953.9 1729.6,950.7 1729.8,954.7 1730.0,948.6 1731.7,934.9 1733.0,906.6 1733.8,924.1 1734.1,926.0 1735.2,898.1 1735.3,900.6 1735.9,911.9 1737.8,950.6 1737.9,953.0 1737.9,945.2 1738.3,952.3 1740.0,964.1 1742.1,946.6 1742.4,943.3 1743.0,937.0 1743.6,943.3 1744.1,946.3 1746.1,940.0 1746.2,941.5 1746.6,944.5 1748.3,964.0 1748.8,964.1 1750.4,964.1 1750.7,964.1 1751.9,964.1 1752.4,962.6 1754.4,939.9 1754.5,940.9 1754.6,946.2 1754.9,949.0 1756.6,963.9 1758.7,947.6 1759.0,947.7 1760.2,943.3 1760.7,944.6 1762.7,947.2 1762.8,944.2 1763.2,943.5 1764.9,948.7 1766.9,948.7 1767.3,942.0 1768.5,948.9 1769.0,948.3 1771.0,942.3 1771.1,947.9 1771.5,943.0 1773.2,940.5 1775.2,944.3 1775.6,944.8 1776.8,947.4 1777.3,939.9 1779.3,941.3 1779.4,945.9 1779.8,943.7 1781.4,940.1 1783.5,944.6 1783.9,945.5 1785.1,943.5 1785.6,940.2 1787.6,940.7 1787.7,947.3 1788.1,943.5 1789.7,939.3 1791.8,943.6 1792.2,941.1 1793.4,945.3 1793.9,947.9 1795.9,952.1 1795.9,950.5 1796.4,948.9 1798.0,953.1 1800.1,954.4 1800.5,956.4 1801.7,949.6 1802.2,953.9 1804.2,947.6 1804.2,949.7 1804.7,945.8 1806.3,948.7 1808.4,945.5 1808.8,939.5 1810.0,937.3 1810.4,944.9 1812.5,942.9 1812.5,941.7 1813.0,943.6 1814.6,949.5 1816.7,956.5 1817.1,955.4 1818.3,964.1 1818.7,964.1 1820.8,964.1 1820.8,964.1 1821.0,964.1 1821.3,964.1 1822.9,964.1 1823.6,964.1 1824.9,964.1 1825.4,964.1 1826.6,964.1 1827.0,964.1 1829.1,964.1 1829.1,964.1 1829.2,964.1 1829.6,964.1 1831.2,964.1 1831.9,964.1 1832.4,964.1 1833.2,964.1 1833.7,964.1 1834.9,964.1 1835.0,964.1 1835.3,942.4 1837.4,944.7 1837.4,944.7 1837.7,945.0 1837.9,945.2 1839.4,946.9 1840.3,947.8 1841.5,949.1 1842.0,949.6 1843.0,950.7 1843.2,950.9 1843.6,951.3 1845.6,953.5 1845.7,953.6 1845.7,953.6 1846.0,953.9 1846.2,949.2 1847.7,930.0 1849.8,929.1 1850.3,928.9 1851.5,928.4 1851.7,928.3 1851.9,928.2 1853.9,929.5 1854.0,929.6 1854.5,930.6 1855.3,932.1 1856.0,933.5 1856.2,933.8 1858.1,934.2 1858.6,933.7 1858.8,933.5 1859.7,932.6 1859.8,932.5 1860.2,932.1 1862.2,930.3 1862.3,930.3 1862.8,930.5 1864.0,930.8 1864.3,930.9 1865.8,931.3 1866.4,931.5 1866.9,931.6 1867.6,931.8 1868.0,932.0 1868.1,932.9 1868.4,935.9 1870.2,951.8 1870.5,954.6 1870.6,955.4 1871.1,959.0 1872.6,964.1 1873.8,964.1 1874.7,964.1 1875.2,964.1 1876.4,964.1 1876.7,964.1 1877.0,964.1 1878.8,964.1" fill="none" stroke="#6ED0E0" stroke-width="1.35" stroke-linejoin="round"/><polyline points="1383.7,964.1 1384.4,964.1 1385.5,964.1 1385.8,964.1 1386.7,964.1 1387.0,964.1 1387.8,950.6 1389.2,922.1 1389.7,911.6 1389.9,916.2 1392.0,959.6 1392.3,964.1 1393.8,964.1 1394.1,964.1 1395.0,964.1 1395.5,955.4 1396.1,941.8 1397.5,912.1 1397.6,910.0 1398.0,918.6 1398.2,923.0 1400.3,964.1 1402.1,964.1 1402.3,964.1 1403.3,964.1 1404.4,945.9 1405.8,918.3 1406.0,914.4 1406.3,920.3 1406.5,924.0 1408.6,964.1 1410.4,964.1 1410.6,964.1 1411.6,964.1 1412.7,943.9 1414.1,887.7 1414.6,867.6 1414.7,863.6 1414.8,866.5 1416.8,949.8 1418.7,964.1 1418.9,964.1 1419.9,964.1 1420.5,964.1 1421.0,956.6 1422.4,929.5 1422.9,919.9 1423.1,916.8 1423.1,916.0 1425.1,955.1 1427.0,964.1 1427.2,964.1 1428.2,964.1 1429.3,956.8 1430.7,928.9 1431.0,923.0 1431.2,919.1 1431.3,916.3 1431.4,915.2 1433.4,954.7 1435.3,964.1 1435.5,964.1 1436.5,964.1 1437.6,956.3 1439.0,936.1 1439.5,929.1 1439.6,930.9 1441.7,959.9 1443.6,964.1 1443.8,964.1 1444.8,964.1 1445.8,958.0 1447.3,941.8 1447.8,936.2 1447.9,937.5 1450.0,960.6 1451.9,938.5 1452.1,933.9 1453.0,907.2 1453.1,904.4 1453.5,893.0 1454.1,911.0 1455.6,881.1 1456.0,865.3 1456.1,869.2 1456.2,873.4 1458.3,955.2 1460.2,964.1 1460.3,964.1 1461.4,964.1 1462.4,958.2 1463.9,937.5 1464.4,930.5 1464.5,929.2 1464.5,929.1 1466.6,958.0 1468.5,964.1 1468.6,964.1 1469.7,964.1 1470.7,961.6 1472.2,943.4 1472.7,937.3 1472.8,936.4 1473.0,933.6 1474.8,923.1 1475.0,920.4 1476.8,951.9 1476.9,954.0 1478.0,964.1 1479.0,964.1 1480.3,964.1 1480.5,964.1 1481.0,964.1 1481.1,964.1 1483.1,897.4 1483.8,873.2 1485.1,920.5 1485.2,924.3 1486.3,964.1 1487.3,964.1 1488.8,964.1 1489.3,964.1 1489.3,964.1 1491.4,923.4 1492.1,908.3 1493.4,937.3 1493.5,939.4 1494.6,964.1 1495.6,964.1 1497.1,964.1 1497.6,964.1 1497.6,964.1 1499.7,915.1 1500.2,903.0 1501.7,939.7 1501.8,941.6 1502.9,964.1 1503.8,964.1 1505.4,964.1 1505.9,964.1 1505.9,964.1 1508.0,903.3 1508.7,879.3 1510.0,923.4 1510.1,925.6 1511.2,964.1 1512.1,954.4 1513.7,926.0 1514.1,918.8 1514.2,920.6 1514.2,920.7 1516.3,958.3 1518.3,964.1 1518.4,964.1 1519.5,964.1 1520.4,964.1 1522.0,964.1 1522.5,964.1 1522.5,964.1 1524.6,918.0 1525.2,902.3 1526.6,936.9 1526.6,937.8 1527.8,964.1 1528.7,964.1 1530.3,964.1 1530.8,964.1 1530.8,964.1 1532.9,928.5 1533.5,916.0 1534.9,943.0 1534.9,943.4 1536.1,964.1 1537.0,964.1 1538.6,964.1 1539.1,964.1 1539.1,964.1 1541.1,929.9 1541.9,914.9 1543.2,940.5 1543.2,940.6 1544.4,964.1 1545.3,964.1 1546.9,964.1 1547.4,964.1 1547.4,964.1 1549.4,928.2 1550.2,912.0 1551.5,939.0 1551.5,939.1 1552.7,964.1 1553.6,964.1 1555.2,964.1 1555.6,964.1 1555.7,964.1 1557.7,964.1 1559.8,964.1 1559.8,964.1 1561.0,964.1 1561.9,964.1 1563.5,964.1 1563.9,964.1 1564.0,964.1 1566.0,942.9 1566.6,936.2 1568.1,952.6 1568.1,952.9 1569.0,963.0 1569.3,964.1 1570.1,964.1 1571.8,964.1 1572.2,964.1 1572.3,964.1 1574.3,900.8 1575.0,875.3 1576.4,923.4 1576.4,925.0 1577.0,946.3 1577.6,964.1 1578.4,964.1 1580.1,964.1 1580.5,964.1 1580.6,964.1 1582.6,941.8 1583.3,932.6 1584.6,949.5 1584.7,950.3 1585.9,964.1 1586.7,964.0 1588.4,953.6 1588.8,950.0 1588.9,949.8 1590.9,963.1 1591.0,963.6 1592.9,964.1 1593.0,964.1 1594.2,964.1 1595.0,964.1 1596.7,956.5 1597.1,949.4 1597.2,953.1 1599.1,962.3 1600.0,964.1 1601.2,964.1 1601.3,964.1 1602.5,964.1 1603.3,964.1 1605.0,957.3 1605.4,953.6 1605.5,952.6 1607.4,962.2 1608.3,964.1 1609.5,964.1 1609.6,964.1 1610.8,964.1 1611.6,964.1 1613.3,953.3 1613.6,954.2 1613.8,952.5 1615.7,963.0 1616.4,964.1 1617.8,964.1 1617.9,964.1 1619.1,964.1 1619.9,964.1 1621.6,956.5 1621.9,949.9 1622.1,955.7 1624.0,962.7 1624.6,964.1 1626.1,964.1 1626.2,964.1 1627.4,964.1 1628.1,964.1 1629.9,957.2 1630.2,953.6 1630.4,955.1 1632.3,962.1 1633.0,964.1 1634.4,964.1 1634.5,964.1 1635.7,964.1 1636.4,964.1 1638.2,956.9 1638.5,955.2 1638.7,954.3 1640.6,962.6 1641.0,964.1 1642.6,964.1 1642.8,964.1 1644.0,964.1 1644.7,964.1 1646.5,952.8 1646.8,951.6 1647.0,948.2 1648.9,962.2 1650.9,964.1 1651.1,964.1 1652.3,964.1 1652.4,964.1 1653.0,964.1 1654.8,953.1 1655.1,952.9 1655.3,953.4 1657.1,962.1 1659.2,964.1 1659.4,964.1 1660.6,964.1 1661.3,964.1 1663.0,958.2 1663.1,953.3 1663.4,952.5 1663.6,953.1 1665.4,962.2 1667.5,964.1 1667.7,964.1 1668.9,964.1 1669.6,964.1 1671.4,954.4 1671.6,950.4 1671.9,950.4 1673.7,962.3 1675.8,964.1 1676.0,964.1 1677.2,964.1 1677.9,964.1 1679.7,952.5 1679.9,956.5 1680.2,952.1 1682.0,961.5 1684.1,964.1 1684.3,964.1 1685.5,964.1 1686.1,964.1 1688.0,952.0 1688.1,952.2 1688.2,951.3 1688.5,948.3 1690.3,961.7 1692.4,964.1 1692.6,964.1 1693.7,964.1 1693.8,964.1 1694.4,964.1 1696.3,953.2 1696.5,955.5 1696.5,954.0 1696.8,954.2 1698.6,962.1 1699.2,964.1 1700.6,964.1 1700.9,964.1 1702.1,964.1 1702.7,964.1 1704.6,954.5 1704.8,955.9 1704.8,955.7 1705.1,955.5 1706.9,962.4 1708.9,964.1 1709.2,964.1 1710.4,964.1 1711.0,964.1 1712.9,955.3 1713.1,952.3 1713.1,950.6 1713.4,948.7 1715.1,961.3 1716.0,964.1 1717.2,964.1 1717.5,964.1 1718.7,964.1 1719.3,964.1 1721.2,956.9 1721.4,955.0 1721.5,955.7 1721.7,948.8 1723.4,962.1 1725.5,964.1 1725.8,964.1 1726.0,964.1 1727.0,964.1 1727.6,964.1 1729.5,957.7 1729.6,952.5 1729.8,953.5 1730.0,950.4 1731.7,960.7 1733.0,964.1 1733.8,964.1 1734.1,964.1 1735.2,964.1 1735.3,964.1 1735.9,964.1 1737.8,952.9 1737.9,955.8 1737.9,955.9 1738.3,952.4 1740.0,960.9 1742.1,964.1 1742.4,964.1 1743.0,964.1 1743.6,964.1 1744.1,964.1 1746.1,953.1 1746.2,955.3 1746.6,949.1 1748.3,961.9 1748.8,964.1 1750.4,964.1 1750.7,964.1 1751.9,964.1 1752.4,964.1 1754.4,955.1 1754.5,952.0 1754.6,952.8 1754.9,951.1 1756.6,961.5 1758.7,964.1 1759.0,964.1 1760.2,964.1 1760.7,964.1 1762.7,954.9 1762.8,954.4 1763.2,952.3 1764.9,961.2 1766.9,964.1 1767.3,964.1 1768.5,964.1 1769.0,964.1 1771.0,954.9 1771.1,954.5 1771.5,952.3 1773.2,964.1 1775.2,964.1 1775.6,964.1 1776.8,964.1 1777.3,964.1 1779.3,964.1 1779.4,964.1 1779.8,964.1 1781.4,964.1 1783.5,964.1 1783.9,964.1 1785.1,964.1 1785.6,964.1 1787.6,964.1 1787.7,964.1 1788.1,964.1 1789.7,961.0 1791.8,964.1 1792.2,964.1 1793.4,964.1 1793.9,964.1 1795.9,954.9 1795.9,954.7 1796.4,952.3 1798.0,960.9 1800.1,964.1 1800.5,964.1 1801.7,964.1 1802.2,964.1 1804.2,954.9 1804.2,954.8 1804.7,952.3 1806.3,964.1 1808.4,964.1 1808.8,964.1 1810.0,964.1 1810.4,964.1 1812.5,964.1 1812.5,964.1 1813.0,964.1 1814.6,964.1 1816.7,964.1 1817.1,964.1 1818.3,964.1 1818.7,959.4 1820.8,915.9 1820.8,915.8 1821.0,911.6 1821.3,917.9 1822.9,922.1 1823.6,904.7 1824.9,936.5 1825.4,947.5 1826.6,964.1 1827.0,954.1 1829.1,887.2 1829.1,886.6 1829.2,883.4 1829.6,896.3 1831.2,913.9 1831.9,892.5 1832.4,906.8 1833.2,930.5 1833.7,944.1 1834.9,964.1 1835.0,964.1 1835.3,964.1 1837.4,964.1 1837.4,964.1 1837.7,964.1 1837.9,964.1 1839.4,964.1 1840.3,964.1 1841.5,953.5 1842.0,948.4 1843.0,937.9 1843.2,940.0 1843.6,944.0 1845.6,885.5 1845.7,883.4 1845.7,881.8 1846.0,870.5 1846.2,878.0 1847.7,935.2 1849.8,954.5 1850.3,946.4 1851.5,927.1 1851.7,923.8 1851.9,926.6 1853.9,949.0 1854.0,948.2 1854.5,941.5 1855.3,930.9 1856.0,940.4 1856.2,942.9 1858.1,947.7 1858.6,938.1 1858.8,934.4 1859.7,917.7 1859.8,919.6 1860.2,926.2 1862.2,954.4 1862.3,953.5 1862.8,946.9 1864.0,930.9 1864.3,934.9 1865.8,951.6 1866.4,941.5 1866.9,932.1 1867.6,919.6 1868.0,926.7 1868.1,928.5 1868.4,934.6 1870.2,964.1 1870.5,964.1 1870.6,964.1 1871.1,964.1 1872.6,964.1 1873.8,964.1 1874.7,964.1 1875.2,964.1 1876.4,964.1 1876.7,964.1 1877.0,964.1 1878.8,964.1" fill="none" stroke="#EF843C" stroke-width="1.35" stroke-linejoin="round"/><polyline points="1383.7,909.6 1384.4,887.1 1385.5,922.4 1385.8,925.7 1386.7,895.3 1387.0,885.4 1387.8,913.1 1389.2,922.6 1389.7,911.6 1389.9,916.3 1392.0,909.4 1392.3,901.2 1393.8,940.5 1394.1,939.3 1395.0,914.9 1395.5,902.0 1396.1,918.3 1397.5,937.3 1397.6,936.2 1398.0,940.8 1398.2,943.2 1400.3,961.3 1402.1,951.8 1402.3,954.4 1403.3,960.2 1404.4,964.1 1405.8,964.1 1406.0,964.1 1406.3,964.1 1406.5,964.1 1408.6,962.4 1410.4,950.6 1410.6,956.2 1411.6,958.7 1412.7,959.6 1414.1,943.8 1414.6,938.2 1414.7,937.0 1414.8,937.9 1416.8,959.2 1418.7,952.3 1418.9,954.5 1419.9,958.2 1420.5,962.4 1421.0,960.0 1422.4,940.1 1422.9,933.1 1423.1,930.8 1423.1,930.3 1425.1,957.3 1427.0,949.4 1427.2,954.1 1428.2,958.9 1429.3,964.1 1430.7,964.1 1431.0,964.1 1431.2,964.1 1431.3,964.1 1431.4,964.1 1433.4,961.7 1435.3,947.5 1435.5,951.3 1436.5,956.6 1437.6,964.1 1439.0,964.1 1439.5,964.1 1439.6,964.1 1441.7,962.5 1443.6,952.6 1443.8,955.8 1444.8,957.5 1445.8,964.1 1447.3,964.1 1447.8,964.1 1447.9,964.1 1450.0,962.5 1451.9,949.0 1452.1,953.3 1453.0,958.7 1453.1,957.7 1453.5,959.9 1454.1,950.5 1455.6,913.2 1456.0,903.0 1456.1,905.6 1456.2,908.2 1458.3,959.7 1460.2,953.9 1460.3,952.9 1461.4,957.1 1462.4,964.1 1463.9,964.1 1464.4,964.1 1464.5,964.1 1464.5,964.1 1466.6,962.1 1468.5,953.8 1468.6,948.7 1469.7,957.1 1470.7,964.1 1472.2,964.1 1472.7,964.1 1472.8,964.1 1473.0,964.1 1474.8,963.0 1475.0,961.7 1476.8,947.8 1476.9,951.4 1478.0,958.9 1479.0,964.1 1480.3,964.1 1480.5,964.1 1481.0,964.1 1481.1,964.1 1483.1,963.2 1483.8,957.6 1485.1,953.7 1485.2,953.7 1486.3,956.9 1487.3,964.0 1488.8,964.1 1489.3,964.1 1489.3,964.1 1491.4,963.0 1492.1,960.1 1493.4,947.5 1493.5,949.4 1494.6,959.1 1495.6,964.0 1497.1,964.1 1497.6,964.1 1497.6,964.1 1499.7,963.3 1500.2,960.1 1501.7,951.0 1501.8,955.7 1502.9,957.7 1503.8,963.9 1505.4,964.1 1505.9,964.1 1505.9,964.1 1508.0,963.1 1508.7,957.2 1510.0,953.7 1510.1,954.2 1511.2,957.2 1512.1,963.8 1513.7,964.1 1514.1,964.1 1514.2,964.1 1514.2,964.1 1516.3,963.1 1518.3,952.7 1518.4,954.8 1519.5,956.7 1520.4,963.5 1522.0,964.1 1522.5,964.1 1522.5,964.1 1524.6,963.1 1525.2,960.9 1526.6,951.9 1526.6,955.0 1527.8,956.5 1528.7,963.6 1530.3,964.1 1530.8,964.1 1530.8,964.1 1532.9,963.4 1533.5,958.6 1534.9,950.3 1534.9,952.0 1536.1,958.1 1537.0,963.4 1538.6,964.1 1539.1,964.1 1539.1,964.1 1541.1,963.5 1541.9,959.9 1543.2,955.1 1543.2,948.3 1544.4,956.9 1545.3,963.6 1546.9,964.1 1547.4,964.1 1547.4,964.1 1549.4,963.2 1550.2,959.7 1551.5,954.6 1551.5,953.8 1552.7,958.9 1553.6,963.6 1555.2,964.1 1555.6,964.1 1555.7,964.1 1557.7,963.3 1559.8,948.2 1559.8,951.0 1561.0,959.1 1561.9,963.4 1563.5,964.1 1563.9,964.1 1564.0,964.1 1566.0,963.6 1566.6,960.5 1568.1,953.9 1568.1,948.7 1569.0,955.3 1569.3,957.4 1570.1,963.1 1571.8,964.1 1572.2,964.1 1572.3,964.1 1574.3,963.7 1575.0,960.2 1576.4,953.8 1576.4,951.2 1577.0,954.0 1577.6,959.3 1578.4,963.0 1580.1,964.1 1580.5,964.1 1580.6,964.1 1582.6,963.8 1583.3,959.3 1584.6,949.1 1584.7,955.0 1585.9,956.9 1586.7,963.0 1588.4,964.1 1588.8,964.1 1588.9,964.1 1590.9,963.7 1591.0,962.7 1592.9,954.7 1593.0,948.8 1594.2,956.8 1595.0,963.0 1596.7,964.1 1597.1,964.1 1597.2,964.1 1599.1,963.9 1600.0,958.5 1601.2,955.7 1601.3,950.1 1602.5,957.8 1603.3,963.2 1605.0,964.1 1605.4,964.1 1605.5,964.1 1607.4,963.9 1608.3,959.1 1609.5,953.1 1609.6,953.3 1610.8,956.5 1611.6,962.5 1613.3,964.1 1613.6,964.1 1613.8,964.1 1615.7,964.0 1616.4,959.0 1617.8,951.6 1617.9,951.6 1619.1,956.8 1619.9,962.4 1621.6,964.1 1621.9,964.1 1622.1,964.1 1624.0,964.1 1624.6,959.6 1626.1,952.8 1626.2,953.5 1627.4,958.2 1628.1,962.8 1629.9,964.1 1630.2,964.1 1630.4,964.1 1632.3,964.1 1633.0,959.8 1634.4,949.5 1634.5,953.5 1635.7,958.6 1636.4,962.4 1638.2,964.1 1638.5,964.1 1638.7,964.1 1640.6,964.1 1641.0,961.3 1642.6,949.8 1642.8,952.2 1644.0,958.7 1644.7,963.0 1646.5,964.1 1646.8,964.1 1647.0,964.1 1648.9,964.1 1650.9,952.3 1651.1,951.8 1652.3,958.7 1652.4,958.8 1653.0,962.7 1654.8,964.1 1655.1,964.1 1655.3,964.1 1657.1,964.1 1659.2,956.2 1659.4,954.7 1660.6,959.9 1661.3,962.3 1663.0,964.1 1663.1,964.1 1663.4,964.1 1663.6,964.1 1665.4,964.1 1667.5,956.1 1667.7,948.4 1668.9,957.4 1669.6,962.7 1671.4,964.1 1671.6,964.1 1671.9,964.1 1673.7,964.1 1675.8,952.0 1676.0,951.1 1677.2,957.1 1677.9,962.0 1679.7,964.1 1679.9,964.1 1680.2,964.1 1682.0,964.1 1684.1,952.2 1684.3,949.2 1685.5,958.8 1686.1,961.9 1688.0,964.1 1688.1,964.1 1688.2,964.1 1688.5,964.1 1690.3,964.1 1692.4,954.8 1692.6,952.9 1693.7,958.3 1693.8,959.0 1694.4,961.7 1696.3,964.1 1696.5,964.1 1696.5,964.1 1696.8,964.1 1698.6,964.1 1699.2,960.3 1700.6,949.7 1700.9,948.6 1702.1,959.0 1702.7,962.6 1704.6,964.1 1704.8,964.1 1704.8,964.1 1705.1,964.1 1706.9,964.1 1708.9,953.4 1709.2,955.4 1710.4,960.0 1711.0,962.6 1712.9,964.1 1713.1,964.1 1713.1,964.1 1713.4,964.1 1715.1,964.1 1716.0,960.9 1717.2,953.6 1717.5,953.8 1718.7,957.8 1719.3,962.2 1721.2,964.1 1721.4,964.1 1721.5,964.1 1721.7,964.1 1723.4,964.1 1725.5,956.0 1725.8,950.3 1726.0,955.3 1727.0,960.2 1727.6,961.6 1729.5,964.1 1729.6,964.1 1729.8,964.1 1730.0,964.1 1731.7,964.1 1733.0,959.3 1733.8,955.9 1734.1,952.5 1735.2,958.5 1735.3,959.5 1735.9,961.1 1737.8,964.1 1737.9,964.1 1737.9,964.1 1738.3,964.1 1740.0,964.1 1742.1,952.1 1742.4,953.7 1743.0,951.8 1743.6,958.3 1744.1,962.0 1746.1,964.1 1746.2,964.1 1746.6,964.1 1748.3,964.1 1748.8,962.1 1750.4,950.1 1750.7,950.2 1751.9,959.6 1752.4,961.9 1754.4,964.1 1754.5,964.1 1754.6,964.1 1754.9,964.1 1756.6,964.1 1758.7,955.6 1759.0,953.9 1760.2,959.5 1760.7,961.9 1762.7,964.1 1762.8,964.1 1763.2,964.1 1764.9,964.1 1766.9,955.6 1767.3,953.9 1768.5,959.5 1769.0,961.8 1771.0,964.1 1771.1,964.1 1771.5,964.1 1773.2,964.1 1775.2,955.7 1775.6,953.9 1776.8,959.5 1777.3,961.8 1779.3,964.1 1779.4,964.1 1779.8,964.1 1781.4,964.1 1783.5,955.8 1783.9,953.9 1785.1,959.5 1785.6,961.7 1787.6,964.1 1787.7,964.1 1788.1,964.1 1789.7,964.1 1791.8,955.8 1792.2,953.9 1793.4,959.5 1793.9,961.6 1795.9,964.1 1795.9,964.1 1796.4,964.1 1798.0,964.1 1800.1,955.9 1800.5,953.9 1801.7,959.5 1802.2,961.6 1804.2,964.1 1804.2,964.1 1804.7,964.1 1806.3,964.1 1808.4,955.9 1808.8,953.9 1810.0,959.5 1810.4,961.5 1812.5,964.1 1812.5,964.1 1813.0,964.1 1814.6,964.1 1816.7,956.0 1817.1,953.9 1818.3,959.5 1818.7,961.4 1820.8,964.1 1820.8,964.1 1821.0,964.1 1821.3,964.1 1822.9,964.1 1823.6,964.1 1824.9,964.1 1825.4,964.1 1826.6,964.1 1827.0,964.1 1829.1,964.1 1829.1,964.1 1829.2,964.1 1829.6,964.1 1831.2,922.9 1831.9,896.3 1832.4,878.5 1833.2,907.9 1833.7,883.2 1834.9,795.0 1835.0,787.6 1835.3,809.5 1837.4,881.2 1837.4,880.0 1837.7,868.0 1837.9,876.0 1839.4,913.1 1840.3,884.6 1841.5,924.2 1842.0,902.9 1843.0,859.2 1843.2,867.9 1843.6,884.7 1845.6,920.4 1845.7,921.5 1845.7,922.3 1846.0,927.7 1846.2,931.4 1847.7,959.1 1849.8,964.1 1850.3,964.1 1851.5,964.1 1851.7,964.1 1851.9,964.1 1853.9,961.0 1854.0,959.7 1854.5,948.6 1855.3,930.8 1856.0,915.0 1856.2,910.8 1858.1,925.5 1858.6,913.7 1858.8,909.1 1859.7,929.7 1859.8,932.0 1860.2,940.2 1862.2,917.5 1862.3,916.0 1862.8,926.1 1864.0,950.1 1864.3,944.1 1865.8,910.8 1866.4,923.5 1866.9,925.1 1867.6,904.2 1868.0,892.2 1868.1,895.2 1868.4,905.4 1870.2,937.9 1870.5,941.3 1870.6,942.2 1871.1,947.7 1872.6,946.4 1873.8,928.2 1874.7,941.0 1875.2,949.2 1876.4,950.1 1876.7,947.6 1877.0,945.5 1878.8,959.4" fill="none" stroke="#E24D42" stroke-width="1.35" stroke-linejoin="round"/><polyline points="1383.7,956.6 1384.4,955.8 1385.5,955.9 1385.8,955.8 1386.7,955.2 1387.0,954.8 1387.8,954.1 1389.2,954.5 1389.7,952.7 1389.9,954.7 1392.0,956.3 1392.3,957.2 1393.8,957.9 1394.1,956.7 1395.0,957.8 1395.5,957.4 1396.1,959.2 1397.5,957.9 1397.6,957.7 1398.0,957.7 1398.2,957.9 1400.3,957.2 1402.1,955.6 1402.3,955.4 1403.3,957.5 1404.4,957.3 1405.8,957.2 1406.0,955.3 1406.3,957.6 1406.5,958.0 1408.6,957.5 1410.4,957.0 1410.6,958.4 1411.6,958.3 1412.7,956.8 1414.1,955.9 1414.6,955.0 1414.7,955.1 1414.8,954.9 1416.8,954.5 1418.7,953.4 1418.9,953.4 1419.9,952.1 1420.5,950.9 1421.0,952.2 1422.4,951.7 1422.9,950.2 1423.1,950.0 1423.1,950.6 1425.1,950.5 1427.0,948.6 1427.2,949.2 1428.2,951.4 1429.3,951.8 1430.7,952.9 1431.0,953.0 1431.2,954.2 1431.3,955.5 1431.4,955.9 1433.4,955.1 1435.3,954.9 1435.5,956.5 1436.5,955.2 1437.6,954.7 1439.0,955.4 1439.5,953.8 1439.6,952.0 1441.7,952.2 1443.6,951.4 1443.8,950.9 1444.8,952.3 1445.8,953.2 1447.3,951.5 1447.8,954.0 1447.9,954.5 1450.0,953.1 1451.9,953.6 1452.1,955.1 1453.0,954.4 1453.1,955.3 1453.5,957.2 1454.1,957.1 1455.6,956.7 1456.0,957.5 1456.1,956.2 1456.2,956.5 1458.3,956.2 1460.2,957.5 1460.3,957.9 1461.4,957.9 1462.4,956.5 1463.9,955.1 1464.4,955.0 1464.5,955.0 1464.5,954.9 1466.6,954.7 1468.5,952.6 1468.6,953.8 1469.7,952.6 1470.7,961.7 1472.2,962.6 1472.7,961.6 1472.8,962.2 1473.0,961.8 1474.8,961.8 1475.0,961.8 1476.8,962.1 1476.9,962.4 1478.0,961.7 1479.0,962.7 1480.3,961.7 1480.5,962.3 1481.0,962.1 1481.1,962.1 1483.1,961.7 1483.8,961.8 1485.1,962.5 1485.2,961.5 1486.3,961.7 1487.3,962.3 1488.8,961.5 1489.3,962.6 1489.3,962.1 1491.4,961.5 1492.1,962.5 1493.4,961.6 1493.5,961.5 1494.6,962.0 1495.6,961.7 1497.1,961.9 1497.6,961.7 1497.6,961.9 1499.7,962.3 1500.2,961.5 1501.7,962.6 1501.8,961.5 1502.9,961.5 1503.8,962.2 1505.4,962.4 1505.9,962.2 1505.9,962.4 1508.0,962.4 1508.7,962.1 1510.0,962.0 1510.1,961.7 1511.2,962.0 1512.1,962.0 1513.7,961.9 1514.1,962.2 1514.2,961.6 1514.2,961.4 1516.3,961.9 1518.3,962.5 1518.4,962.2 1519.5,962.2 1520.4,961.4 1522.0,962.3 1522.5,962.3 1522.5,962.5 1524.6,961.9 1525.2,961.5 1526.6,961.9 1526.6,962.5 1527.8,961.8 1528.7,961.4 1530.3,961.5 1530.8,961.9 1530.8,962.4 1532.9,962.4 1533.5,961.9 1534.9,962.1 1534.9,961.9 1536.1,961.7 1537.0,962.5 1538.6,962.2 1539.1,961.9 1539.1,961.4 1541.1,961.4 1541.9,961.9 1543.2,962.0 1543.2,961.9 1544.4,961.7 1545.3,961.9 1546.9,961.7 1547.4,962.1 1547.4,962.0 1549.4,961.9 1550.2,962.0 1551.5,962.3 1551.5,961.9 1552.7,961.4 1553.6,961.6 1555.2,962.4 1555.6,962.5 1555.7,961.8 1557.7,962.3 1559.8,961.4 1559.8,962.7 1561.0,961.6 1561.9,962.5 1563.5,961.7 1563.9,961.8 1564.0,962.4 1566.0,962.1 1566.6,961.4 1568.1,962.5 1568.1,962.0 1569.0,962.2 1569.3,962.0 1570.1,962.7 1571.8,961.8 1572.2,962.5 1572.3,961.8 1574.3,962.5 1575.0,962.1 1576.4,961.7 1576.4,962.3 1577.0,961.5 1577.6,961.8 1578.4,962.3 1580.1,962.4 1580.5,962.3 1580.6,961.7 1582.6,962.5 1583.3,961.9 1584.6,962.2 1584.7,962.2 1585.9,961.6 1586.7,961.9 1588.4,962.5 1588.8,961.5 1588.9,961.9 1590.9,962.1 1591.0,961.8 1592.9,961.7 1593.0,961.5 1594.2,962.3 1595.0,962.6 1596.7,962.5 1597.1,962.0 1597.2,962.3 1599.1,962.5 1600.0,962.4 1601.2,961.8 1601.3,961.8 1602.5,962.6 1603.3,962.1 1605.0,962.0 1605.4,962.4 1605.5,961.9 1607.4,961.7 1608.3,961.7 1609.5,961.9 1609.6,962.2 1610.8,962.3 1611.6,961.5 1613.3,962.0 1613.6,961.5 1613.8,961.5 1615.7,962.0 1616.4,962.7 1617.8,962.6 1617.9,962.4 1619.1,962.1 1619.9,962.0 1621.6,962.7 1621.9,962.7 1622.1,962.6 1624.0,961.4 1624.6,961.4 1626.1,961.4 1626.2,962.1 1627.4,962.1 1628.1,962.6 1629.9,962.5 1630.2,961.7 1630.4,961.8 1632.3,962.5 1633.0,962.6 1634.4,961.7 1634.5,962.2 1635.7,961.5 1636.4,961.7 1638.2,962.4 1638.5,962.1 1638.7,962.7 1640.6,951.2 1641.0,950.4 1642.6,950.5 1642.8,951.8 1644.0,952.3 1644.7,952.8 1646.5,951.9 1646.8,951.8 1647.0,952.6 1648.9,954.2 1650.9,954.9 1651.1,953.5 1652.3,954.2 1652.4,954.1 1653.0,953.8 1654.8,954.4 1655.1,953.6 1655.3,955.3 1657.1,956.5 1659.2,957.0 1659.4,956.8 1660.6,957.4 1661.3,956.4 1663.0,956.9 1663.1,957.1 1663.4,956.4 1663.6,956.7 1665.4,956.8 1667.5,954.4 1667.7,954.3 1668.9,952.0 1669.6,950.3 1671.4,948.1 1671.6,950.5 1671.9,948.8 1673.7,949.1 1675.8,948.6 1676.0,948.5 1677.2,948.0 1677.9,947.9 1679.7,945.8 1679.9,945.9 1680.2,947.6 1682.0,948.5 1684.1,946.9 1684.3,949.0 1685.5,948.4 1686.1,947.9 1688.0,949.1 1688.1,949.5 1688.2,950.3 1688.5,950.6 1690.3,950.4 1692.4,950.1 1692.6,949.2 1693.7,949.5 1693.8,949.1 1694.4,950.8 1696.3,952.6 1696.5,952.8 1696.5,952.4 1696.8,954.0 1698.6,955.8 1699.2,957.6 1700.6,958.0 1700.9,959.7 1702.1,960.6 1702.7,959.0 1704.6,958.5 1704.8,957.1 1704.8,955.7 1705.1,954.3 1706.9,952.4 1708.9,950.4 1709.2,948.9 1710.4,947.3 1711.0,945.5 1712.9,945.3 1713.1,946.2 1713.1,946.5 1713.4,945.7 1715.1,946.4 1716.0,946.3 1717.2,947.9 1717.5,949.5 1718.7,949.8 1719.3,950.3 1721.2,952.1 1721.4,952.6 1721.5,951.9 1721.7,952.2 1723.4,953.4 1725.5,951.8 1725.8,953.2 1726.0,952.6 1727.0,953.0 1727.6,952.5 1729.5,952.4 1729.6,951.2 1729.8,950.5 1730.0,950.9 1731.7,950.5 1733.0,951.4 1733.8,952.7 1734.1,951.9 1735.2,950.9 1735.3,949.9 1735.9,950.7 1737.8,949.8 1737.9,949.8 1737.9,948.2 1738.3,949.5 1740.0,948.1 1742.1,946.6 1742.4,946.0 1743.0,946.5 1743.6,948.4 1744.1,949.7 1746.1,951.4 1746.2,951.5 1746.6,952.2 1748.3,953.2 1748.8,952.7 1750.4,952.7 1750.7,952.7 1751.9,953.3 1752.4,953.1 1754.4,953.0 1754.5,950.5 1754.6,950.1 1754.9,950.1 1756.6,949.7 1758.7,962.2 1759.0,962.5 1760.2,962.4 1760.7,962.2 1762.7,962.1 1762.8,962.1 1763.2,962.0 1764.9,961.9 1766.9,962.3 1767.3,962.4 1768.5,961.7 1769.0,962.5 1771.0,962.4 1771.1,961.5 1771.5,961.5 1773.2,961.9 1775.2,961.7 1775.6,962.2 1776.8,962.0 1777.3,961.8 1779.3,962.4 1779.4,961.6 1779.8,962.4 1781.4,961.5 1783.5,962.7 1783.9,961.8 1785.1,962.0 1785.6,961.4 1787.6,962.4 1787.7,962.4 1788.1,962.2 1789.7,962.7 1791.8,962.4 1792.2,962.6 1793.4,962.0 1793.9,961.7 1795.9,962.4 1795.9,961.9 1796.4,962.5 1798.0,962.5 1800.1,961.8 1800.5,962.7 1801.7,961.6 1802.2,961.7 1804.2,961.6 1804.2,962.0 1804.7,961.7 1806.3,962.3 1808.4,962.0 1808.8,962.6 1810.0,962.3 1810.4,962.4 1812.5,961.6 1812.5,962.3 1813.0,961.8 1814.6,962.4 1816.7,961.4 1817.1,962.6 1818.3,961.7 1818.7,962.2 1820.8,962.2 1820.8,962.0 1821.0,962.3 1821.3,962.1 1822.9,962.5 1823.6,961.9 1824.9,962.3 1825.4,962.6 1826.6,961.8 1827.0,961.9 1829.1,961.8 1829.1,962.2 1829.2,962.5 1829.6,962.3 1831.2,962.3 1831.9,962.1 1832.4,961.5 1833.2,962.1 1833.7,961.8 1834.9,961.9 1835.0,962.7 1835.3,962.5 1837.4,962.4 1837.4,962.4 1837.7,962.7 1837.9,962.5 1839.4,962.2 1840.3,961.8 1841.5,962.6 1842.0,962.1 1843.0,962.5 1843.2,962.2 1843.6,961.8 1845.6,961.8 1845.7,962.3 1845.7,961.5 1846.0,962.6 1846.2,962.3 1847.7,962.7 1849.8,962.7 1850.3,962.2 1851.5,962.3 1851.7,962.2 1851.9,961.4 1853.9,962.2 1854.0,962.5 1854.5,962.2 1855.3,961.5 1856.0,961.6 1856.2,962.2 1858.1,962.2 1858.6,962.0 1858.8,961.8 1859.7,962.7 1859.8,962.6 1860.2,962.1 1862.2,962.0 1862.3,961.7 1862.8,961.6 1864.0,961.6 1864.3,962.6 1865.8,961.6 1866.4,962.6 1866.9,962.2 1867.6,961.4 1868.0,962.4 1868.1,961.8 1868.4,961.4 1870.2,962.7 1870.5,962.4 1870.6,962.2 1871.1,961.8 1872.6,962.0 1873.8,961.6 1874.7,961.9 1875.2,961.7 1876.4,962.2 1876.7,962.6 1877.0,961.5 1878.8,962.6" fill="none" stroke="#1F78C1" stroke-width="1.35" stroke-linejoin="round"/><polyline points="1383.7,956.5 1384.4,956.4 1385.5,957.5 1385.8,955.2 1386.7,954.2 1387.0,954.7 1387.8,953.8 1389.2,952.6 1389.7,953.0 1389.9,952.3 1392.0,951.9 1392.3,953.0 1393.8,953.0 1394.1,951.8 1395.0,952.6 1395.5,953.1 1396.1,951.9 1397.5,951.1 1397.6,951.2 1398.0,949.1 1398.2,948.4 1400.3,949.0 1402.1,943.8 1402.3,944.2 1403.3,942.2 1404.4,939.8 1405.8,936.5 1406.0,937.4 1406.3,937.8 1406.5,938.0 1408.6,943.6 1410.4,951.2 1410.6,951.7 1411.6,955.1 1412.7,955.4 1414.1,955.5 1414.6,954.7 1414.7,955.5 1414.8,955.9 1416.8,954.5 1418.7,954.7 1418.9,953.8 1419.9,952.0 1420.5,952.2 1421.0,953.5 1422.4,953.2 1422.9,955.0 1423.1,955.3 1423.1,954.6 1425.1,953.7 1427.0,954.0 1427.2,954.0 1428.2,953.2 1429.3,954.0 1430.7,953.4 1431.0,952.1 1431.2,952.5 1431.3,952.7 1431.4,953.1 1433.4,954.8 1435.3,954.8 1435.5,956.1 1436.5,955.5 1437.6,956.5 1439.0,956.2 1439.5,955.6 1439.6,956.7 1441.7,957.3 1443.6,955.5 1443.8,957.0 1444.8,955.8 1445.8,955.4 1447.3,954.4 1447.8,955.4 1447.9,956.2 1450.0,956.3 1451.9,956.0 1452.1,955.3 1453.0,953.6 1453.1,953.8 1453.5,952.9 1454.1,952.0 1455.6,953.2 1456.0,954.4 1456.1,953.6 1456.2,953.7 1458.3,953.9 1460.2,954.6 1460.3,955.6 1461.4,956.5 1462.4,957.1 1463.9,956.4 1464.4,956.9 1464.5,955.5 1464.5,954.2 1466.6,950.9 1468.5,944.7 1468.6,944.1 1469.7,942.2 1470.7,941.0 1472.2,941.3 1472.7,941.8 1472.8,943.2 1473.0,944.5 1474.8,945.4 1475.0,945.2 1476.8,943.2 1476.9,942.5 1478.0,942.0 1479.0,940.2 1480.3,939.9 1480.5,939.7 1481.0,940.3 1481.1,938.8 1483.1,937.5 1483.8,937.7 1485.1,938.1 1485.2,940.3 1486.3,940.1 1487.3,941.2 1488.8,942.5 1489.3,943.2 1489.3,942.6 1491.4,940.5 1492.1,941.2 1493.4,942.0 1493.5,942.2 1494.6,942.0 1495.6,940.8 1497.1,941.0 1497.6,942.0 1497.6,941.9 1499.7,940.2 1500.2,942.2 1501.7,943.1 1501.8,943.1 1502.9,944.2 1503.8,944.2 1505.4,943.6 1505.9,944.6 1505.9,945.4 1508.0,943.5 1508.7,944.5 1510.0,946.7 1510.1,945.4 1511.2,945.4 1512.1,946.2 1513.7,944.6 1514.1,943.5 1514.2,944.4 1514.2,944.3 1516.3,943.3 1518.3,944.9 1518.4,942.8 1519.5,941.6 1520.4,940.9 1522.0,941.1 1522.5,939.8 1522.5,939.5 1524.6,940.4 1525.2,941.1 1526.6,939.4 1526.6,939.2 1527.8,939.5 1528.7,939.9 1530.3,939.4 1530.8,941.1 1530.8,941.8 1532.9,943.2 1533.5,943.5 1534.9,944.4 1534.9,943.1 1536.1,943.6 1537.0,943.6 1538.6,943.7 1539.1,943.8 1539.1,945.4 1541.1,945.7 1541.9,944.3 1543.2,944.2 1543.2,944.4 1544.4,942.3 1545.3,943.2 1546.9,944.1 1547.4,944.3 1547.4,943.1 1549.4,942.7 1550.2,941.3 1551.5,940.6 1551.5,942.5 1552.7,940.7 1553.6,940.7 1555.2,942.8 1555.6,942.3 1555.7,942.7 1557.7,943.8 1559.8,945.0 1559.8,947.1 1561.0,947.7 1561.9,947.1 1563.5,945.6 1563.9,945.7 1564.0,945.3 1566.0,943.9 1566.6,945.0 1568.1,943.9 1568.1,943.2 1569.0,943.3 1569.3,943.5 1570.1,942.4 1571.8,943.8 1572.2,943.4 1572.3,943.2 1574.3,944.4 1575.0,945.0 1576.4,945.4 1576.4,947.1 1577.0,946.8 1577.6,945.6 1578.4,945.1 1580.1,946.8 1580.5,947.1 1580.6,947.3 1582.6,949.0 1583.3,949.9 1584.6,949.2 1584.7,948.7 1585.9,948.5 1586.7,949.2 1588.4,949.8 1588.8,949.2 1588.9,948.6 1590.9,947.6 1591.0,948.7 1592.9,948.3 1593.0,946.1 1594.2,947.6 1595.0,947.4 1596.7,946.8 1597.1,947.0 1597.2,947.1 1599.1,946.9 1600.0,945.8 1601.2,946.7 1601.3,946.3 1602.5,945.2 1603.3,947.4 1605.0,946.3 1605.4,946.4 1605.5,946.3 1607.4,945.6 1608.3,945.8 1609.5,947.1 1609.6,947.8 1610.8,945.8 1611.6,945.8 1613.3,945.9 1613.6,944.7 1613.8,944.7 1615.7,944.0 1616.4,943.3 1617.8,943.5 1617.9,942.5 1619.1,940.9 1619.9,941.9 1621.6,942.1 1621.9,941.7 1622.1,942.7 1624.0,942.4 1624.6,943.2 1626.1,944.2 1626.2,943.9 1627.4,944.9 1628.1,945.7 1629.9,945.9 1630.2,945.3 1630.4,947.2 1632.3,948.0 1633.0,947.4 1634.4,948.5 1634.5,948.2 1635.7,948.5 1636.4,950.5 1638.2,948.6 1638.5,948.4 1638.7,948.7 1640.6,949.7 1641.0,949.5 1642.6,948.9 1642.8,948.5 1644.0,946.6 1644.7,946.8 1646.5,945.9 1646.8,945.5 1647.0,945.8 1648.9,946.5 1650.9,946.9 1651.1,946.6 1652.3,945.2 1652.4,944.4 1653.0,945.6 1654.8,947.0 1655.1,945.7 1655.3,946.7 1657.1,945.4 1659.2,946.6 1659.4,944.8 1660.6,944.9 1661.3,943.3 1663.0,943.0 1663.1,944.3 1663.4,944.9 1663.6,944.1 1665.4,946.1 1667.5,945.0 1667.7,946.0 1668.9,945.2 1669.6,947.1 1671.4,946.0 1671.6,947.5 1671.9,948.1 1673.7,947.1 1675.8,947.2 1676.0,947.9 1677.2,946.4 1677.9,946.1 1679.7,944.7 1679.9,946.2 1680.2,945.6 1682.0,946.3 1684.1,944.9 1684.3,945.0 1685.5,946.0 1686.1,946.0 1688.0,945.7 1688.1,946.6 1688.2,948.1 1688.5,948.8 1690.3,946.7 1692.4,946.6 1692.6,946.4 1693.7,946.4 1693.8,945.3 1694.4,943.8 1696.3,942.4 1696.5,943.0 1696.5,943.0 1696.8,942.2 1698.6,941.8 1699.2,942.0 1700.6,941.0 1700.9,941.7 1702.1,943.3 1702.7,943.2 1704.6,944.6 1704.8,945.0 1704.8,944.4 1705.1,943.5 1706.9,944.3 1708.9,944.3 1709.2,944.0 1710.4,944.3 1711.0,943.8 1712.9,942.7 1713.1,944.5 1713.1,943.5 1713.4,943.0 1715.1,942.6 1716.0,942.5 1717.2,940.9 1717.5,941.0 1718.7,941.0 1719.3,940.8 1721.2,939.5 1721.4,939.4 1721.5,939.7 1721.7,941.1 1723.4,940.8 1725.5,941.9 1725.8,941.7 1726.0,941.6 1727.0,943.1 1727.6,943.1 1729.5,943.2 1729.6,944.8 1729.8,945.7 1730.0,944.3 1731.7,943.3 1733.0,944.0 1733.8,942.2 1734.1,943.5 1735.2,943.2 1735.3,941.2 1735.9,941.3 1737.8,941.9 1737.9,941.9 1737.9,941.5 1738.3,942.2 1740.0,942.0 1742.1,943.2 1742.4,944.5 1743.0,945.1 1743.6,946.8 1744.1,948.3 1746.1,949.0 1746.2,948.2 1746.6,947.9 1748.3,947.0 1748.8,946.7 1750.4,946.0 1750.7,945.4 1751.9,945.3 1752.4,945.2 1754.4,943.6 1754.5,942.9 1754.6,941.9 1754.9,942.6 1756.6,941.7 1758.7,943.2 1759.0,942.1 1760.2,944.0 1760.7,944.3 1762.7,942.5 1762.8,942.7 1763.2,942.2 1764.9,941.1 1766.9,942.9 1767.3,943.0 1768.5,942.8 1769.0,940.8 1771.0,941.5 1771.1,939.5 1771.5,938.9 1773.2,939.3 1775.2,939.0 1775.6,939.7 1776.8,941.4 1777.3,939.8 1779.3,939.8 1779.4,941.6 1779.8,942.8 1781.4,943.3 1783.5,944.0 1783.9,945.0 1785.1,945.6 1785.6,945.1 1787.6,945.6 1787.7,944.6 1788.1,944.5 1789.7,943.8 1791.8,945.3 1792.2,946.2 1793.4,947.0 1793.9,947.0 1795.9,949.2 1795.9,950.0 1796.4,949.5 1798.0,951.9 1800.1,954.2 1800.5,954.7 1801.7,955.6 1802.2,955.8 1804.2,954.4 1804.2,953.8 1804.7,954.1 1806.3,952.3 1808.4,950.3 1808.8,950.1 1810.0,948.7 1810.4,949.3 1812.5,948.6 1812.5,948.1 1813.0,946.7 1814.6,946.6 1816.7,946.7 1817.1,946.0 1818.3,946.8 1818.7,947.5 1820.8,949.2 1820.8,949.5 1821.0,950.5 1821.3,950.5 1822.9,949.3 1823.6,949.5 1824.9,950.1 1825.4,951.4 1826.6,952.2 1827.0,952.7 1829.1,952.3 1829.1,951.1 1829.2,951.9 1829.6,950.4 1831.2,950.7 1831.9,951.1 1832.4,952.4 1833.2,952.5 1833.7,951.9 1834.9,953.1 1835.0,953.6 1835.3,955.3 1837.4,955.6 1837.4,956.3 1837.7,956.2 1837.9,956.6 1839.4,957.8 1840.3,957.1 1841.5,956.8 1842.0,958.1 1843.0,956.6 1843.2,956.2 1843.6,954.4 1845.6,953.5 1845.7,952.3 1845.7,952.2 1846.0,953.2 1846.2,951.8 1847.7,951.8 1849.8,951.9 1850.3,951.0 1851.5,952.2 1851.7,952.4 1851.9,954.1 1853.9,954.8 1854.0,954.6 1854.5,955.1 1855.3,953.7 1856.0,954.8 1856.2,955.0 1858.1,954.9 1858.6,954.5 1858.8,954.6 1859.7,954.9 1859.8,954.5 1860.2,955.4 1862.2,955.4 1862.3,956.0 1862.8,957.4 1864.0,955.8 1864.3,955.9 1865.8,955.7 1866.4,956.2 1866.9,956.3 1867.6,956.8 1868.0,955.4 1868.1,956.1 1868.4,957.6 1870.2,957.1 1870.5,956.6 1870.6,958.8 1871.1,959.3 1872.6,960.1 1873.8,960.8 1874.7,960.1 1875.2,959.7 1876.4,960.7 1876.7,958.7 1877.0,957.4 1878.8,957.1" fill="none" stroke="#BA43A9" stroke-width="1.35" stroke-linejoin="round"/><polyline points="1383.7,950.0 1384.4,951.5 1385.5,950.9 1385.8,949.3 1386.7,949.6 1387.0,949.8 1387.8,948.7 1389.2,949.3 1389.7,947.9 1389.9,948.3 1392.0,948.5 1392.3,949.1 1393.8,949.1 1394.1,948.3 1395.0,948.9 1395.5,949.4 1396.1,949.5 1397.5,950.3 1397.6,950.1 1398.0,949.9 1398.2,948.9 1400.3,947.4 1402.1,943.3 1402.3,942.6 1403.3,941.4 1404.4,938.1 1405.8,937.7 1406.0,936.9 1406.3,936.0 1406.5,935.8 1408.6,938.2 1410.4,940.5 1410.6,940.8 1411.6,941.7 1412.7,942.5 1414.1,942.8 1414.6,943.0 1414.7,941.2 1414.8,941.8 1416.8,945.1 1418.7,947.0 1418.9,947.3 1419.9,947.0 1420.5,947.9 1421.0,947.3 1422.4,945.2 1422.9,944.4 1423.1,945.8 1423.1,946.7 1425.1,947.1 1427.0,945.6 1427.2,946.5 1428.2,945.8 1429.3,946.1 1430.7,944.6 1431.0,944.3 1431.2,945.6 1431.3,945.7 1431.4,945.4 1433.4,944.8 1435.3,942.9 1435.5,943.1 1436.5,941.7 1437.6,942.6 1439.0,942.4 1439.5,944.0 1439.6,944.0 1441.7,942.8 1443.6,943.4 1443.8,943.4 1444.8,944.2 1445.8,944.2 1447.3,944.1 1447.8,944.9 1447.9,943.0 1450.0,943.4 1451.9,943.6 1452.1,944.1 1453.0,944.2 1453.1,943.0 1453.5,942.4 1454.1,941.9 1455.6,942.9 1456.0,944.5 1456.1,943.6 1456.2,943.6 1458.3,946.3 1460.2,948.1 1460.3,947.4 1461.4,948.1 1462.4,950.1 1463.9,952.6 1464.4,951.9 1464.5,951.7 1464.5,950.3 1466.6,952.1 1468.5,952.7 1468.6,951.9 1469.7,951.5 1470.7,952.3 1472.2,952.3 1472.7,951.9 1472.8,951.6 1473.0,953.4 1474.8,955.4 1475.0,956.4 1476.8,955.1 1476.9,955.5 1478.0,954.5 1479.0,953.5 1480.3,952.3 1480.5,952.7 1481.0,952.5 1481.1,951.4 1483.1,950.3 1483.8,950.1 1485.1,949.9 1485.2,950.4 1486.3,950.6 1487.3,951.7 1488.8,952.5 1489.3,953.1 1489.3,953.6 1491.4,954.4 1492.1,953.8 1493.4,953.7 1493.5,953.4 1494.6,952.9 1495.6,952.3 1497.1,952.7 1497.6,953.1 1497.6,953.8 1499.7,955.1 1500.2,955.2 1501.7,953.6 1501.8,953.7 1502.9,953.9 1503.8,952.4 1505.4,953.9 1505.9,954.4 1505.9,953.1 1508.0,953.0 1508.7,953.4 1510.0,951.4 1510.1,950.7 1511.2,950.6 1512.1,952.4 1513.7,951.9 1514.1,952.7 1514.2,951.0 1514.2,951.5 1516.3,953.3 1518.3,952.5 1518.4,951.8 1519.5,953.4 1520.4,954.2 1522.0,955.9 1522.5,954.8 1522.5,954.9 1524.6,955.8 1525.2,957.2 1526.6,956.1 1526.6,955.6 1527.8,955.7 1528.7,956.0 1530.3,954.5 1530.8,953.7 1530.8,953.7 1532.9,954.1 1533.5,954.3 1534.9,954.0 1534.9,954.1 1536.1,954.9 1537.0,955.3 1538.6,956.3 1539.1,956.4 1539.1,957.5 1541.1,956.9 1541.9,955.3 1543.2,955.1 1543.2,955.0 1544.4,953.7 1545.3,952.0 1546.9,952.2 1547.4,950.9 1547.4,949.1 1549.4,947.8 1550.2,948.3 1551.5,948.2 1551.5,948.4 1552.7,948.0 1553.6,949.3 1555.2,950.8 1555.6,952.7 1555.7,952.1 1557.7,952.2 1559.8,953.7 1559.8,953.5 1561.0,952.7 1561.9,954.1 1563.5,954.4 1563.9,955.1 1564.0,954.7 1566.0,954.4 1566.6,952.8 1568.1,953.6 1568.1,954.4 1569.0,954.2 1569.3,954.6 1570.1,954.0 1571.8,953.3 1572.2,954.2 1572.3,954.7 1574.3,953.1 1575.0,952.3 1576.4,953.7 1576.4,952.6 1577.0,951.4 1577.6,951.3 1578.4,950.7 1580.1,951.6 1580.5,951.6 1580.6,951.0 1582.6,949.0 1583.3,949.9 1584.6,949.5 1584.7,948.2 1585.9,948.9 1586.7,949.6 1588.4,949.0 1588.8,950.2 1588.9,950.2 1590.9,950.6 1591.0,949.5 1592.9,949.5 1593.0,950.2 1594.2,949.6 1595.0,950.3 1596.7,949.3 1597.1,949.3 1597.2,949.2 1599.1,948.9 1600.0,949.2 1601.2,948.2 1601.3,949.6 1602.5,949.3 1603.3,948.1 1605.0,949.0 1605.4,947.9 1605.5,948.2 1607.4,947.3 1608.3,946.5 1609.5,945.5 1609.6,945.1 1610.8,944.0 1611.6,942.8 1613.3,942.6 1613.6,942.2 1613.8,942.3 1615.7,941.4 1616.4,940.9 1617.8,939.9 1617.9,940.8 1619.1,941.3 1619.9,939.7 1621.6,938.9 1621.9,938.9 1622.1,940.1 1624.0,940.5 1624.6,939.6 1626.1,942.3 1626.2,943.2 1627.4,944.9 1628.1,944.2 1629.9,944.8 1630.2,945.0 1630.4,946.8 1632.3,947.9 1633.0,948.3 1634.4,949.5 1634.5,949.3 1635.7,949.8 1636.4,951.1 1638.2,952.2 1638.5,954.2 1638.7,954.4 1640.6,957.1 1641.0,956.5 1642.6,956.5 1642.8,956.1 1644.0,956.2 1644.7,955.7 1646.5,954.4 1646.8,953.5 1647.0,953.4 1648.9,953.1 1650.9,954.4 1651.1,954.2 1652.3,954.0 1652.4,954.3 1653.0,954.9 1654.8,955.0 1655.1,956.2 1655.3,957.6 1657.1,957.9 1659.2,957.9 1659.4,957.7 1660.6,956.3 1661.3,955.4 1663.0,954.8 1663.1,955.2 1663.4,953.5 1663.6,953.1 1665.4,952.6 1667.5,952.8 1667.7,953.1 1668.9,953.9 1669.6,953.0 1671.4,952.7 1671.6,953.1 1671.9,954.3 1673.7,954.8 1675.8,955.7 1676.0,955.6 1677.2,954.7 1677.9,953.7 1679.7,953.4 1679.9,953.0 1680.2,953.8 1682.0,953.8 1684.1,954.4 1684.3,953.5 1685.5,953.6 1686.1,954.0 1688.0,954.9 1688.1,956.4 1688.2,957.1 1688.5,957.3 1690.3,957.2 1692.4,958.0 1692.6,959.3 1693.7,958.6 1693.8,959.2 1694.4,958.6 1696.3,959.1 1696.5,958.6 1696.5,957.6 1696.8,956.2 1698.6,956.5 1699.2,957.6 1700.6,956.1 1700.9,954.7 1702.1,955.0 1702.7,954.2 1704.6,954.2 1704.8,952.7 1704.8,953.2 1705.1,954.7 1706.9,955.1 1708.9,954.5 1709.2,954.5 1710.4,954.7 1711.0,956.8 1712.9,957.3 1713.1,957.7 1713.1,957.4 1713.4,958.2 1715.1,957.1 1716.0,956.0 1717.2,957.2 1717.5,957.4 1718.7,956.4 1719.3,957.5 1721.2,956.0 1721.4,954.5 1721.5,954.8 1721.7,955.9 1723.4,956.5 1725.5,956.6 1725.8,956.9 1726.0,956.6 1727.0,957.3 1727.6,957.8 1729.5,957.6 1729.6,958.9 1729.8,958.8 1730.0,958.5 1731.7,956.9 1733.0,957.0 1733.8,956.9 1734.1,956.3 1735.2,956.7 1735.3,955.5 1735.9,954.8 1737.8,954.5 1737.9,953.6 1737.9,955.1 1738.3,956.1 1740.0,957.5 1742.1,957.0 1742.4,957.6 1743.0,958.6 1743.6,959.0 1744.1,958.2 1746.1,959.0 1746.2,958.4 1746.6,957.7 1748.3,958.0 1748.8,958.1 1750.4,958.4 1750.7,959.4 1751.9,959.8 1752.4,959.0 1754.4,957.8 1754.5,959.4 1754.6,959.1 1754.9,959.6 1756.6,960.0 1758.7,958.8 1759.0,957.6 1760.2,957.8 1760.7,957.5 1762.7,956.3 1762.8,956.6 1763.2,956.6 1764.9,955.3 1766.9,954.6 1767.3,954.4 1768.5,954.9 1769.0,954.5 1771.0,954.5 1771.1,953.6 1771.5,952.2 1773.2,952.8 1775.2,952.8 1775.6,953.0 1776.8,952.4 1777.3,953.6 1779.3,954.2 1779.4,954.9 1779.8,955.4 1781.4,955.6 1783.5,955.4 1783.9,956.3 1785.1,956.2 1785.6,955.7 1787.6,956.4 1787.7,957.4 1788.1,957.4 1789.7,956.8 1791.8,955.9 1792.2,956.3 1793.4,956.5 1793.9,955.8 1795.9,953.5 1795.9,953.1 1796.4,951.1 1798.0,946.3 1800.1,941.0 1800.5,940.0 1801.7,940.2 1802.2,939.7 1804.2,939.0 1804.2,939.2 1804.7,939.9 1806.3,939.6 1808.4,940.0 1808.8,940.8 1810.0,941.3 1810.4,941.6 1812.5,944.4 1812.5,944.6 1813.0,947.2 1814.6,953.7 1816.7,957.0 1817.1,956.8 1818.3,957.0 1818.7,957.7 1820.8,957.6 1820.8,956.7 1821.0,956.1 1821.3,956.5 1822.9,956.1 1823.6,955.0 1824.9,954.4 1825.4,954.9 1826.6,955.4 1827.0,955.2 1829.1,954.8 1829.1,954.5 1829.2,954.2 1829.6,954.2 1831.2,953.2 1831.9,953.8 1832.4,953.4 1833.2,954.4 1833.7,954.5 1834.9,954.6 1835.0,953.7 1835.3,952.2 1837.4,952.5 1837.4,952.5 1837.7,953.2 1837.9,952.2 1839.4,951.7 1840.3,951.3 1841.5,948.9 1842.0,948.5 1843.0,945.7 1843.2,946.6 1843.6,947.8 1845.6,944.3 1845.7,944.2 1845.7,942.8 1846.0,943.9 1846.2,944.2 1847.7,948.7 1849.8,953.3 1850.3,953.3 1851.5,953.8 1851.7,953.7 1851.9,953.1 1853.9,952.7 1854.0,953.5 1854.5,953.9 1855.3,953.8 1856.0,953.8 1856.2,955.1 1858.1,955.3 1858.6,954.9 1858.8,954.1 1859.7,953.7 1859.8,952.4 1860.2,953.3 1862.2,953.1 1862.3,954.0 1862.8,953.7 1864.0,954.9 1864.3,954.6 1865.8,954.9 1866.4,955.2 1866.9,956.1 1867.6,955.1 1868.0,955.6 1868.1,954.4 1868.4,953.5 1870.2,953.4 1870.5,952.7 1870.6,951.8 1871.1,952.0 1872.6,951.9 1873.8,952.0 1874.7,952.8 1875.2,953.2 1876.4,952.6 1876.7,954.1 1877.0,953.9 1878.8,953.7" fill="none" stroke="#705DA0" stroke-width="1.35" stroke-linejoin="round"/><polyline points="1383.7,955.0 1384.4,954.7 1385.5,954.5 1385.8,954.4 1386.7,954.5 1387.0,954.6 1387.8,954.6 1389.2,955.1 1389.7,955.2 1389.9,955.0 1392.0,955.6 1392.3,956.0 1393.8,955.7 1394.1,955.2 1395.0,954.5 1395.5,954.4 1396.1,953.5 1397.5,952.6 1397.6,952.6 1398.0,952.6 1398.2,952.8 1400.3,952.6 1402.1,952.9 1402.3,953.1 1403.3,953.6 1404.4,954.4 1405.8,954.7 1406.0,955.1 1406.3,955.1 1406.5,955.1 1408.6,954.0 1410.4,952.6 1410.6,952.3 1411.6,951.9 1412.7,951.6 1414.1,951.6 1414.6,951.5 1414.7,951.4 1414.8,951.2 1416.8,952.5 1418.7,953.4 1418.9,953.8 1419.9,954.1 1420.5,953.7 1421.0,953.4 1422.4,951.8 1422.9,951.5 1423.1,951.5 1423.1,951.5 1425.1,949.7 1427.0,948.0 1427.2,948.0 1428.2,947.5 1429.3,947.2 1430.7,948.5 1431.0,948.7 1431.2,949.7 1431.3,949.6 1431.4,949.6 1433.4,952.0 1435.3,951.1 1435.5,950.8 1436.5,949.2 1437.6,947.3 1439.0,945.3 1439.5,943.6 1439.6,943.3 1441.7,942.4 1443.6,945.6 1443.8,945.9 1444.8,947.7 1445.8,949.7 1447.3,951.4 1447.8,951.4 1447.9,950.4 1450.0,948.0 1451.9,944.7 1452.1,944.1 1453.0,943.3 1453.1,942.6 1453.5,942.1 1454.1,942.0 1455.6,941.2 1456.0,942.3 1456.1,941.5 1456.2,941.5 1458.3,946.0 1460.2,949.7 1460.3,950.2 1461.4,950.0 1462.4,950.0 1463.9,948.2 1464.4,945.8 1464.5,945.1 1464.5,945.0 1466.6,941.1 1468.5,938.9 1468.6,937.8 1469.7,937.9 1470.7,938.8 1472.2,942.0 1472.7,942.3 1472.8,941.5 1473.0,943.6 1474.8,947.7 1475.0,948.3 1476.8,948.5 1476.9,948.4 1478.0,946.6 1479.0,944.6 1480.3,942.5 1480.5,942.4 1481.0,942.0 1481.1,942.8 1483.1,940.5 1483.8,940.1 1485.1,942.2 1485.2,941.9 1486.3,944.2 1487.3,946.8 1488.8,949.1 1489.3,950.2 1489.3,950.0 1491.4,948.4 1492.1,946.8 1493.4,944.5 1493.5,944.8 1494.6,941.9 1495.6,940.8 1497.1,941.4 1497.6,941.7 1497.6,941.6 1499.7,945.0 1500.2,945.8 1501.7,947.6 1501.8,948.4 1502.9,950.5 1503.8,950.4 1505.4,947.9 1505.9,946.5 1505.9,947.0 1508.0,942.6 1508.7,941.7 1510.0,939.8 1510.1,940.9 1511.2,941.4 1512.1,942.2 1513.7,944.9 1514.1,946.0 1514.2,947.6 1514.2,948.5 1516.3,951.7 1518.3,952.3 1518.4,951.6 1519.5,949.7 1520.4,946.6 1522.0,944.2 1522.5,943.8 1522.5,943.5 1524.6,942.8 1525.2,942.8 1526.6,944.2 1526.6,944.3 1527.8,945.9 1528.7,947.7 1530.3,950.4 1530.8,951.7 1530.8,951.1 1532.9,948.1 1533.5,947.3 1534.9,943.3 1534.9,943.3 1536.1,941.1 1537.0,939.9 1538.6,940.7 1539.1,940.3 1539.1,940.5 1541.1,944.2 1541.9,947.0 1543.2,950.3 1543.2,949.3 1544.4,950.1 1545.3,950.3 1546.9,949.6 1547.4,949.1 1547.4,947.4 1549.4,944.1 1550.2,943.3 1551.5,941.9 1551.5,941.4 1552.7,941.4 1553.6,943.1 1555.2,946.7 1555.6,947.4 1555.7,946.3 1557.7,948.4 1559.8,948.7 1559.8,949.3 1561.0,947.1 1561.9,945.4 1563.5,941.5 1563.9,940.4 1564.0,940.1 1566.0,939.4 1566.6,940.4 1568.1,944.1 1568.1,945.2 1569.0,947.4 1569.3,947.7 1570.1,948.3 1571.8,950.7 1572.2,951.2 1572.3,952.2 1574.3,951.4 1575.0,949.9 1576.4,945.9 1576.4,945.0 1577.0,943.1 1577.6,942.7 1578.4,941.2 1580.1,941.6 1580.5,940.6 1580.6,940.4 1582.6,943.2 1583.3,944.7 1584.6,946.9 1584.7,948.3 1585.9,949.7 1586.7,949.5 1588.4,946.4 1588.8,945.6 1588.9,945.6 1590.9,941.9 1591.0,942.3 1592.9,941.7 1593.0,941.5 1594.2,942.7 1595.0,942.7 1596.7,945.8 1597.1,946.6 1597.2,946.6 1599.1,949.7 1600.0,950.3 1601.2,950.1 1601.3,950.5 1602.5,948.1 1603.3,945.3 1605.0,942.0 1605.4,941.9 1605.5,941.2 1607.4,941.0 1608.3,942.4 1609.5,945.1 1609.6,945.2 1610.8,947.6 1611.6,948.0 1613.3,949.5 1613.6,950.6 1613.8,949.8 1615.7,948.1 1616.4,947.3 1617.8,944.5 1617.9,945.0 1619.1,942.6 1619.9,941.6 1621.6,942.0 1621.9,943.4 1622.1,944.1 1624.0,947.9 1624.6,950.5 1626.1,953.4 1626.2,953.0 1627.4,953.7 1628.1,952.5 1629.9,950.4 1630.2,950.6 1630.4,949.3 1632.3,944.6 1633.0,943.1 1634.4,940.9 1634.5,940.4 1635.7,941.8 1636.4,943.7 1638.2,946.9 1638.5,947.6 1638.7,948.5 1640.6,950.4 1641.0,950.5 1642.6,950.1 1642.8,949.5 1644.0,948.0 1644.7,946.1 1646.5,942.6 1646.8,941.5 1647.0,940.9 1648.9,939.9 1650.9,941.1 1651.1,942.0 1652.3,946.0 1652.4,946.0 1653.0,947.0 1654.8,948.5 1655.1,948.4 1655.3,948.5 1657.1,946.7 1659.2,942.2 1659.4,942.7 1660.6,941.1 1661.3,939.9 1663.0,939.3 1663.1,939.1 1663.4,940.8 1663.6,942.4 1665.4,945.9 1667.5,948.7 1667.7,949.3 1668.9,950.4 1669.6,950.5 1671.4,948.9 1671.6,949.4 1671.9,948.1 1673.7,945.4 1675.8,942.1 1676.0,941.6 1677.2,942.6 1677.9,944.3 1679.7,948.6 1679.9,949.2 1680.2,949.3 1682.0,952.0 1684.1,951.0 1684.3,952.1 1685.5,949.4 1686.1,948.5 1688.0,945.1 1688.1,945.4 1688.2,945.6 1688.5,944.2 1690.3,943.6 1692.4,945.7 1692.6,946.0 1693.7,947.8 1693.8,947.4 1694.4,949.0 1696.3,950.6 1696.5,950.7 1696.5,950.3 1696.8,949.8 1698.6,949.5 1699.2,947.9 1700.6,944.8 1700.9,943.7 1702.1,943.1 1702.7,941.5 1704.6,942.1 1704.8,942.2 1704.8,942.1 1705.1,943.2 1706.9,945.7 1708.9,949.8 1709.2,950.4 1710.4,952.6 1711.0,952.4 1712.9,950.1 1713.1,951.1 1713.1,950.1 1713.4,950.0 1715.1,945.8 1716.0,944.2 1717.2,943.5 1717.5,942.1 1718.7,942.8 1719.3,942.4 1721.2,946.4 1721.4,945.4 1721.5,945.1 1721.7,945.8 1723.4,948.6 1725.5,948.3 1725.8,947.9 1726.0,948.1 1727.0,946.4 1727.6,946.2 1729.5,943.6 1729.6,943.2 1729.8,942.7 1730.0,943.1 1731.7,943.1 1733.0,944.5 1733.8,946.3 1734.1,946.1 1735.2,947.9 1735.3,948.7 1735.9,950.1 1737.8,952.1 1737.9,952.7 1737.9,952.7 1738.3,952.1 1740.0,949.6 1742.1,945.3 1742.4,944.6 1743.0,943.4 1743.6,943.3 1744.1,943.1 1746.1,942.9 1746.2,942.9 1746.6,943.6 1748.3,946.8 1748.8,948.6 1750.4,952.6 1750.7,952.9 1751.9,954.8 1752.4,955.8 1754.4,953.2 1754.5,952.7 1754.6,952.0 1754.9,951.1 1756.6,946.9 1758.7,944.2 1759.0,943.9 1760.2,943.8 1760.7,945.1 1762.7,948.7 1762.8,948.0 1763.2,947.8 1764.9,950.6 1766.9,951.0 1767.3,951.5 1768.5,950.0 1769.0,948.7 1771.0,944.0 1771.1,944.5 1771.5,942.9 1773.2,942.0 1775.2,944.6 1775.6,945.7 1776.8,946.9 1777.3,946.7 1779.3,948.6 1779.4,947.7 1779.8,948.4 1781.4,946.6 1783.5,942.1 1783.9,941.8 1785.1,938.8 1785.6,937.3 1787.6,936.7 1787.7,937.3 1788.1,939.2 1789.7,941.4 1791.8,946.8 1792.2,946.7 1793.4,947.2 1793.9,946.2 1795.9,944.6 1795.9,944.7 1796.4,944.4 1798.0,941.0 1800.1,937.9 1800.5,937.7 1801.7,939.2 1802.2,940.0 1804.2,943.8 1804.2,944.7 1804.7,946.1 1806.3,947.2 1808.4,947.8 1808.8,947.8 1810.0,946.0 1810.4,945.9 1812.5,940.6 1812.5,940.3 1813.0,938.6 1814.6,938.5 1816.7,941.0 1817.1,941.2 1818.3,943.8 1818.7,944.5 1820.8,946.5 1820.8,946.6 1821.0,946.9 1821.3,947.8 1822.9,946.4 1823.6,945.1 1824.9,941.7 1825.4,941.4 1826.6,942.9 1827.0,943.9 1829.1,949.0 1829.1,949.5 1829.2,949.5 1829.6,950.2 1831.2,956.7 1831.9,959.3 1832.4,960.0 1833.2,961.4 1833.7,961.7 1834.9,962.8 1835.0,963.1 1835.3,962.5 1837.4,959.8 1837.4,960.9 1837.7,961.1 1837.9,959.6 1839.4,956.4 1840.3,956.3 1841.5,956.2 1842.0,957.0 1843.0,956.7 1843.2,956.5 1843.6,957.2 1845.6,960.7 1845.7,959.6 1845.7,959.1 1846.0,959.9 1846.2,960.4 1847.7,961.9 1849.8,961.1 1850.3,960.2 1851.5,958.1 1851.7,956.9 1851.9,956.0 1853.9,951.8 1854.0,951.5 1854.5,951.6 1855.3,951.3 1856.0,952.0 1856.2,952.0 1858.1,954.0 1858.6,954.8 1858.8,955.7 1859.7,957.8 1859.8,958.4 1860.2,959.0 1862.2,961.7 1862.3,961.2 1862.8,960.5 1864.0,960.1 1864.3,959.7 1865.8,956.9 1866.4,955.5 1866.9,955.1 1867.6,954.2 1868.0,953.1 1868.1,952.9 1868.4,952.2 1870.2,952.3 1870.5,953.4 1870.6,952.4 1871.1,953.9 1872.6,957.1 1873.8,960.8 1874.7,961.4 1875.2,962.0 1876.4,963.7 1876.7,964.1 1877.0,964.1 1878.8,962.9" fill="none" stroke="#508642" stroke-width="1.35" stroke-linejoin="round"/><polyline points="1383.7,964.0 1384.4,963.8 1385.5,963.1 1385.8,964.1 1386.7,963.5 1387.0,963.2 1387.8,963.3 1389.2,963.2 1389.7,963.8 1389.9,963.3 1392.0,963.3 1392.3,963.3 1393.8,963.1 1394.1,963.1 1395.0,963.8 1395.5,964.0 1396.1,963.1 1397.5,963.9 1397.6,963.6 1398.0,963.7 1398.2,963.8 1400.3,964.0 1402.1,963.1 1402.3,964.1 1403.3,963.8 1404.4,963.7 1405.8,964.1 1406.0,963.8 1406.3,963.6 1406.5,964.1 1408.6,963.5 1410.4,963.8 1410.6,963.4 1411.6,964.1 1412.7,964.1 1414.1,963.1 1414.6,963.8 1414.7,963.4 1414.8,963.6 1416.8,963.7 1418.7,964.1 1418.9,963.7 1419.9,963.3 1420.5,963.9 1421.0,964.0 1422.4,964.0 1422.9,963.7 1423.1,964.0 1423.1,963.2 1425.1,963.7 1427.0,963.3 1427.2,963.9 1428.2,963.6 1429.3,963.1 1430.7,964.1 1431.0,963.5 1431.2,964.0 1431.3,963.6 1431.4,963.8 1433.4,963.1 1435.3,963.2 1435.5,963.3 1436.5,963.6 1437.6,963.9 1439.0,963.5 1439.5,963.2 1439.6,963.2 1441.7,963.5 1443.6,963.3 1443.8,964.1 1444.8,963.6 1445.8,963.7 1447.3,963.3 1447.8,963.1 1447.9,963.6 1450.0,964.1 1451.9,963.2 1452.1,963.7 1453.0,963.2 1453.1,963.4 1453.5,964.0 1454.1,963.8 1455.6,963.9 1456.0,964.0 1456.1,964.1 1456.2,964.1 1458.3,964.0 1460.2,963.1 1460.3,963.5 1461.4,963.9 1462.4,963.2 1463.9,964.0 1464.4,964.0 1464.5,963.8 1464.5,963.9 1466.6,963.3 1468.5,964.0 1468.6,963.9 1469.7,963.3 1470.7,963.3 1472.2,963.9 1472.7,964.1 1472.8,963.5 1473.0,963.4 1474.8,963.4 1475.0,963.7 1476.8,963.7 1476.9,963.1 1478.0,963.2 1479.0,963.2 1480.3,963.4 1480.5,963.2 1481.0,962.2 1481.1,961.5 1483.1,958.9 1483.8,957.4 1485.1,955.5 1485.2,955.6 1486.3,953.9 1487.3,952.1 1488.8,950.1 1489.3,949.2 1489.3,949.0 1491.4,948.1 1492.1,948.5 1493.4,949.2 1493.5,948.9 1494.6,948.7 1495.6,949.2 1497.1,949.2 1497.6,949.2 1497.6,949.1 1499.7,949.8 1500.2,949.6 1501.7,949.6 1501.8,950.1 1502.9,950.0 1503.8,950.4 1505.4,950.0 1505.9,950.2 1505.9,950.4 1508.0,950.5 1508.7,950.6 1510.0,950.5 1510.1,950.7 1511.2,951.0 1512.1,950.7 1513.7,951.1 1514.1,951.5 1514.2,950.9 1514.2,951.2 1516.3,951.6 1518.3,951.4 1518.4,951.2 1519.5,952.0 1520.4,952.5 1522.0,954.0 1522.5,955.2 1522.5,954.9 1524.6,957.2 1525.2,957.6 1526.6,960.1 1526.6,959.8 1527.8,960.7 1528.7,961.6 1530.3,963.2 1530.8,963.9 1530.8,963.4 1532.9,963.2 1533.5,964.0 1534.9,963.8 1534.9,963.4 1536.1,964.0 1537.0,963.7 1538.6,963.5 1539.1,963.7 1539.1,963.5 1541.1,963.9 1541.9,963.7 1543.2,963.5 1543.2,964.1 1544.4,963.5 1545.3,963.2 1546.9,963.5 1547.4,963.9 1547.4,963.2 1549.4,963.3 1550.2,963.6 1551.5,963.7 1551.5,963.6 1552.7,963.2 1553.6,963.9 1555.2,963.4 1555.6,963.5 1555.7,963.1 1557.7,963.3 1559.8,963.1 1559.8,963.5 1561.0,963.8 1561.9,963.1 1563.5,963.7 1563.9,963.6 1564.0,963.4 1566.0,963.2 1566.6,963.3 1568.1,963.8 1568.1,963.2 1569.0,963.2 1569.3,963.7 1570.1,963.2 1571.8,963.3 1572.2,963.5 1572.3,964.0 1574.3,963.5 1575.0,963.9 1576.4,963.3 1576.4,963.9 1577.0,963.8 1577.6,963.6 1578.4,964.0 1580.1,963.9 1580.5,963.2 1580.6,963.7 1582.6,963.9 1583.3,963.2 1584.6,963.5 1584.7,963.1 1585.9,963.1 1586.7,963.2 1588.4,963.4 1588.8,963.5 1588.9,964.0 1590.9,963.6 1591.0,963.8 1592.9,963.5 1593.0,963.9 1594.2,963.1 1595.0,963.9 1596.7,963.4 1597.1,963.9 1597.2,963.2 1599.1,963.4 1600.0,963.7 1601.2,963.2 1601.3,963.4 1602.5,963.8 1603.3,963.3 1605.0,963.8 1605.4,963.9 1605.5,963.7 1607.4,963.4 1608.3,963.7 1609.5,964.1 1609.6,963.8 1610.8,963.5 1611.6,963.2 1613.3,964.1 1613.6,963.6 1613.8,964.0 1615.7,963.8 1616.4,963.8 1617.8,964.0 1617.9,963.8 1619.1,963.2 1619.9,963.8 1621.6,963.7 1621.9,963.6 1622.1,963.4 1624.0,963.1 1624.6,963.3 1626.1,963.8 1626.2,963.3 1627.4,963.6 1628.1,963.3 1629.9,963.8 1630.2,963.5 1630.4,963.5 1632.3,963.8 1633.0,963.9 1634.4,963.1 1634.5,963.7 1635.7,963.7 1636.4,963.4 1638.2,963.9 1638.5,963.8 1638.7,963.7 1640.6,963.9 1641.0,963.2 1642.6,963.8 1642.8,963.4 1644.0,963.7 1644.7,963.5 1646.5,963.5 1646.8,963.3 1647.0,964.0 1648.9,963.5 1650.9,963.4 1651.1,963.8 1652.3,963.9 1652.4,963.6 1653.0,963.2 1654.8,963.5 1655.1,963.8 1655.3,963.2 1657.1,963.1 1659.2,964.1 1659.4,963.5 1660.6,963.8 1661.3,964.0 1663.0,963.9 1663.1,964.1 1663.4,964.0 1663.6,963.8 1665.4,963.1 1667.5,963.6 1667.7,963.3 1668.9,964.0 1669.6,964.0 1671.4,963.8 1671.6,963.3 1671.9,963.6 1673.7,963.1 1675.8,963.8 1676.0,964.1 1677.2,963.9 1677.9,963.7 1679.7,963.2 1679.9,963.2 1680.2,964.0 1682.0,963.8 1684.1,963.3 1684.3,964.1 1685.5,963.3 1686.1,964.0 1688.0,963.6 1688.1,964.0 1688.2,963.8 1688.5,963.8 1690.3,963.3 1692.4,964.0 1692.6,963.9 1693.7,963.6 1693.8,964.0 1694.4,964.1 1696.3,963.3 1696.5,964.0 1696.5,963.5 1696.8,963.2 1698.6,963.3 1699.2,963.4 1700.6,963.3 1700.9,963.6 1702.1,963.1 1702.7,963.6 1704.6,963.3 1704.8,963.2 1704.8,963.6 1705.1,963.4 1706.9,963.4 1708.9,963.5 1709.2,963.6 1710.4,964.1 1711.0,964.1 1712.9,963.3 1713.1,964.1 1713.1,963.5 1713.4,963.5 1715.1,963.8 1716.0,963.3 1717.2,963.5 1717.5,964.1 1718.7,964.0 1719.3,964.0 1721.2,963.8 1721.4,963.9 1721.5,963.2 1721.7,963.5 1723.4,963.9 1725.5,963.1 1725.8,963.8 1726.0,963.8 1727.0,963.7 1727.6,963.7 1729.5,963.6 1729.6,963.7 1729.8,964.0 1730.0,964.0 1731.7,963.9 1733.0,964.0 1733.8,963.7 1734.1,963.6 1735.2,963.2 1735.3,964.1 1735.9,963.4 1737.8,963.4 1737.9,963.2 1737.9,963.1 1738.3,963.8 1740.0,963.9 1742.1,963.1 1742.4,963.3 1743.0,963.5 1743.6,963.6 1744.1,963.4 1746.1,963.5 1746.2,963.2 1746.6,964.0 1748.3,963.6 1748.8,963.8 1750.4,963.4 1750.7,964.0 1751.9,963.4 1752.4,963.3 1754.4,963.9 1754.5,963.2 1754.6,963.4 1754.9,963.8 1756.6,963.6 1758.7,963.4 1759.0,963.7 1760.2,963.2 1760.7,963.1 1762.7,959.4 1762.8,958.6 1763.2,956.5 1764.9,949.3 1766.9,943.8 1767.3,942.9 1768.5,941.3 1769.0,941.3 1771.0,943.4 1771.1,943.2 1771.5,944.7 1773.2,949.2 1775.2,958.8 1775.6,961.3 1776.8,963.6 1777.3,963.5 1779.3,963.5 1779.4,963.4 1779.8,963.1 1781.4,963.9 1783.5,963.3 1783.9,963.8 1785.1,963.3 1785.6,964.0 1787.6,963.2 1787.7,964.0 1788.1,963.1 1789.7,963.5 1791.8,963.6 1792.2,963.3 1793.4,964.1 1793.9,963.9 1795.9,964.0 1795.9,964.0 1796.4,963.7 1798.0,963.7 1800.1,963.2 1800.5,964.0 1801.7,963.9 1802.2,964.0 1804.2,963.4 1804.2,963.7 1804.7,963.8 1806.3,963.2 1808.4,963.4 1808.8,963.9 1810.0,963.9 1810.4,963.3 1812.5,963.2 1812.5,963.2 1813.0,963.5 1814.6,963.6 1816.7,964.0 1817.1,963.7 1818.3,963.9 1818.7,963.7 1820.8,963.5 1820.8,963.7 1821.0,963.2 1821.3,963.2 1822.9,964.0 1823.6,963.5 1824.9,964.0 1825.4,963.7 1826.6,963.1 1827.0,963.4 1829.1,963.7 1829.1,963.8 1829.2,963.6 1829.6,963.8 1831.2,963.1 1831.9,963.2 1832.4,963.4 1833.2,963.8 1833.7,963.8 1834.9,964.1 1835.0,963.6 1835.3,964.0 1837.4,964.0 1837.4,963.6 1837.7,964.1 1837.9,963.3 1839.4,963.4 1840.3,963.6 1841.5,964.0 1842.0,963.1 1843.0,963.7 1843.2,963.5 1843.6,963.8 1845.6,963.1 1845.7,963.8 1845.7,963.5 1846.0,963.7 1846.2,963.6 1847.7,963.3 1849.8,963.8 1850.3,963.6 1851.5,963.5 1851.7,963.7 1851.9,963.3 1853.9,963.9 1854.0,964.1 1854.5,963.5 1855.3,964.0 1856.0,964.0 1856.2,963.2 1858.1,963.7 1858.6,963.9 1858.8,963.7 1859.7,963.9 1859.8,963.3 1860.2,963.3 1862.2,963.2 1862.3,964.1 1862.8,963.6 1864.0,963.7 1864.3,963.1 1865.8,963.5 1866.4,963.2 1866.9,964.1 1867.6,963.2 1868.0,963.3 1868.1,963.1 1868.4,963.6 1870.2,963.3 1870.5,963.9 1870.6,964.0 1871.1,964.0 1872.6,964.0 1873.8,964.0 1874.7,963.5 1875.2,963.4 1876.4,964.0 1876.7,963.9 1877.0,963.4 1878.8,963.2" fill="none" stroke="#CCA300" stroke-width="1.35" stroke-linejoin="round"/>
<rect x="1341.1" y="1002.0" width="14" height="4" rx="1" fill="#7EB26D"/><text x="1363.2" y="1008.0" text-anchor="start" font-size="12" fill="#ccccdc" textLength="31.8" lengthAdjust="spacingAndGlyphs">sda-w</text><text x="1401.7" y="1008.0" text-anchor="start" font-size="12" fill="#ccccdc" textLength="48.8" lengthAdjust="spacingAndGlyphs">Max: 131</text><text x="1458.3" y="1008.0" text-anchor="start" font-size="12" fill="#ccccdc" textLength="49.6" lengthAdjust="spacingAndGlyphs">Avg: 4.16</text><rect x="1518.4" y="1002.0" width="14" height="4" rx="1" fill="#EAB839"/><text x="1540.6" y="1008.0" text-anchor="start" font-size="12" fill="#ccccdc" textLength="32.1" lengthAdjust="spacingAndGlyphs">sdb-w</text><text x="1579.4" y="1008.0" text-anchor="start" font-size="12" fill="#ccccdc" textLength="49.3" lengthAdjust="spacingAndGlyphs">Max: 437</text><text x="1635.7" y="1008.0" text-anchor="start" font-size="12" fill="#ccccdc" textLength="50.1" lengthAdjust="spacingAndGlyphs">Avg: 46.4</text><rect x="1696.3" y="1002.0" width="14" height="4" rx="1" fill="#6ED0E0"/><text x="1718.5" y="1008.0" text-anchor="start" font-size="12" fill="#ccccdc" textLength="31.5" lengthAdjust="spacingAndGlyphs">sdc-w</text><text x="1756.7" y="1008.0" text-anchor="start" font-size="12" fill="#ccccdc" textLength="49.3" lengthAdjust="spacingAndGlyphs">Max: 486</text><text x="1813.0" y="1008.0" text-anchor="start" font-size="12" fill="#ccccdc" textLength="49.6" lengthAdjust="spacingAndGlyphs">Avg: 91.9</text><rect x="1341.1" y="1019.9" width="14" height="4" rx="1" fill="#EF843C"/><text x="1363.2" y="1025.9" text-anchor="start" font-size="12" fill="#ccccdc" textLength="32.1" lengthAdjust="spacingAndGlyphs">sdd-w</text><text x="1402.0" y="1025.9" text-anchor="start" font-size="12" fill="#ccccdc" textLength="49.3" lengthAdjust="spacingAndGlyphs">Max: 598</text><text x="1458.3" y="1025.9" text-anchor="start" font-size="12" fill="#ccccdc" textLength="49.9" lengthAdjust="spacingAndGlyphs">Avg: 89.4</text><rect x="1519.0" y="1019.9" width="14" height="4" rx="1" fill="#E24D42"/><text x="1540.9" y="1025.9" text-anchor="start" font-size="12" fill="#ccccdc" textLength="31.8" lengthAdjust="spacingAndGlyphs">sde-w</text><text x="1579.4" y="1025.9" text-anchor="start" font-size="12" fill="#ccccdc" textLength="56.0" lengthAdjust="spacingAndGlyphs">Max: 1047</text><text x="1642.4" y="1025.9" text-anchor="start" font-size="12" fill="#ccccdc" textLength="49.9" lengthAdjust="spacingAndGlyphs">Avg: 83.2</text><rect x="1703.3" y="1019.9" width="14" height="4" rx="1" fill="#1F78C1"/><text x="1724.9" y="1025.9" text-anchor="start" font-size="12" fill="#ccccdc" textLength="27.1" lengthAdjust="spacingAndGlyphs">sdb-r</text><text x="1758.8" y="1025.9" text-anchor="start" font-size="12" fill="#ccccdc" textLength="49.2" lengthAdjust="spacingAndGlyphs">Max: 136</text><text x="1815.0" y="1025.9" text-anchor="start" font-size="12" fill="#ccccdc" textLength="49.6" lengthAdjust="spacingAndGlyphs">Avg: 22.3</text><rect x="1341.1" y="1037.9" width="14" height="4" rx="1" fill="#BA43A9"/><text x="1363.2" y="1043.9" text-anchor="start" font-size="12" fill="#ccccdc" textLength="26.6" lengthAdjust="spacingAndGlyphs">sdc-r</text><text x="1396.5" y="1043.9" text-anchor="start" font-size="12" fill="#ccccdc" textLength="49.6" lengthAdjust="spacingAndGlyphs">Max: 165</text><text x="1452.8" y="1043.9" text-anchor="start" font-size="12" fill="#ccccdc" textLength="49.9" lengthAdjust="spacingAndGlyphs">Avg: 88.9</text><rect x="1513.2" y="1037.9" width="14" height="4" rx="1" fill="#705DA0"/><text x="1535.6" y="1043.9" text-anchor="start" font-size="12" fill="#ccccdc" textLength="26.9" lengthAdjust="spacingAndGlyphs">sdd-r</text><text x="1569.5" y="1043.9" text-anchor="start" font-size="12" fill="#ccccdc" textLength="49.0" lengthAdjust="spacingAndGlyphs">Max: 158</text><text x="1625.5" y="1043.9" text-anchor="start" font-size="12" fill="#ccccdc" textLength="49.8" lengthAdjust="spacingAndGlyphs">Avg: 48.0</text><rect x="1686.1" y="1037.9" width="14" height="4" rx="1" fill="#508642"/><text x="1708.0" y="1043.9" text-anchor="start" font-size="12" fill="#ccccdc" textLength="26.8" lengthAdjust="spacingAndGlyphs">sde-r</text><text x="1741.5" y="1043.9" text-anchor="start" font-size="12" fill="#ccccdc" textLength="49.3" lengthAdjust="spacingAndGlyphs">Max: 139</text><text x="1797.8" y="1043.9" text-anchor="start" font-size="12" fill="#ccccdc" textLength="49.6" lengthAdjust="spacingAndGlyphs">Avg: 93.0</text><rect x="1341.1" y="1055.9" width="14" height="4" rx="1" fill="#CCA300"/><text x="1363.2" y="1061.9" text-anchor="start" font-size="12" fill="#ccccdc" textLength="26.8" lengthAdjust="spacingAndGlyphs">sda-r</text><text x="1396.5" y="1061.9" text-anchor="start" font-size="12" fill="#ccccdc" textLength="49.6" lengthAdjust="spacingAndGlyphs">Max: 146</text><text x="1452.8" y="1061.9" text-anchor="start" font-size="12" fill="#ccccdc" textLength="49.9" lengthAdjust="spacingAndGlyphs">Avg: 14.7</text><text transform="translate(1344.6,865.4) rotate(-90)" text-anchor="middle" font-size="12" fill="#ccccdc">ops/s</text>
</svg></div>
<div class="abs" style="left:1912px;top:194px;width:8px;height:303px;background:#313338;border-radius:4px"></div>
</div></div>
</body></html>
